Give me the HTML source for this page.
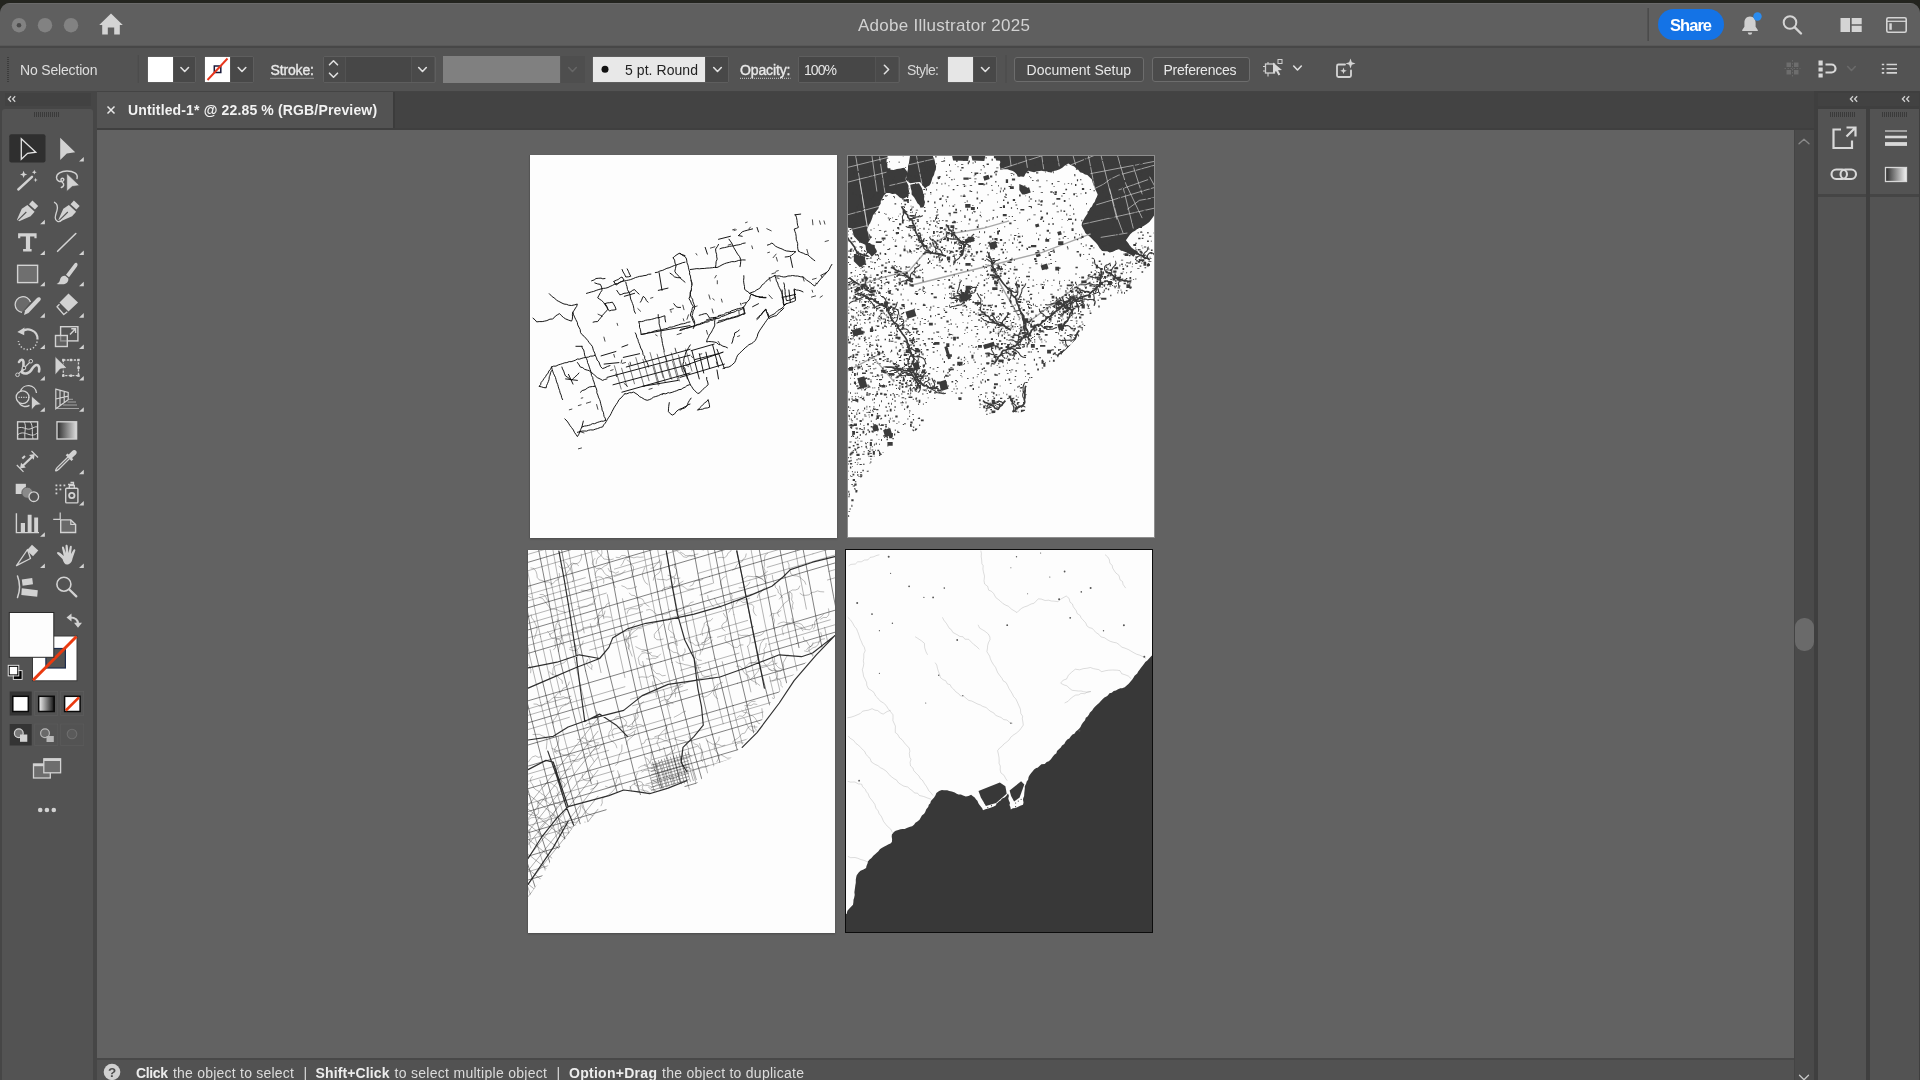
<!DOCTYPE html>
<html><head><meta charset="utf-8">
<style>
*{box-sizing:border-box;margin:0;padding:0}
html,body{width:1920px;height:1080px;overflow:hidden;background:#23241f;font-family:"Liberation Sans",sans-serif;}
.abs,.b{position:absolute}
#win{left:0;top:3px;width:1920px;height:1077px;background:#535353;border-radius:10px 10px 0 0;overflow:hidden}
#pg{left:0;top:-3px;width:1920px;height:1080px;will-change:transform}
.t{color:#dedede;font-size:13px;white-space:nowrap;position:absolute;line-height:1}
.ab{position:absolute;background:#fdfdfd;overflow:hidden}
.ab>svg{filter:blur(.35px)}
svg{overflow:visible}
</style></head><body>
<div id="win" class="abs"><div id="pg" class="abs">
<div class="b" style="left:0.0px;top:3.0px;width:1920.0px;height:41.5px;background:#5f5f5f;border-top:1px solid #6a6a6a"></div><div class="b" style="left:0.0px;top:44.5px;width:1920.0px;height:1.5px;background:#585858;"></div><div class="b" style="left:0.0px;top:46.0px;width:1920.0px;height:1.5px;background:#474747;"></div><div class="b" style="left:0.0px;top:47.5px;width:1920.0px;height:43.5px;background:#535353;"></div><div class="b" style="left:0.0px;top:91.0px;width:1920.0px;height:989.0px;background:#444444;"></div><div class="b" style="left:97.0px;top:92.0px;width:1717.0px;height:37.7px;background:#434343;"></div><div class="b" style="left:97.0px;top:92.0px;width:296.0px;height:36.0px;background:#535353;"></div><div class="b" style="left:97.0px;top:128.2px;width:1717.0px;height:1.5px;background:#3f3f3f;"></div><div class="b" style="left:393.0px;top:92.0px;width:1.5px;height:36.2px;background:#3c3c3c;"></div><div class="b" style="left:97.0px;top:130.0px;width:1696.5px;height:927.5px;background:#626262;"></div><div class="b" style="left:97.0px;top:1057.5px;width:1696.5px;height:2.5px;background:#484848;"></div><div class="b" style="left:97.0px;top:1060.0px;width:1696.5px;height:20.0px;background:#525252;"></div><div class="b" style="left:1794.5px;top:130.0px;width:19.5px;height:950.0px;background:#4a4a4a;"></div><div class="b" style="left:0.0px;top:91.0px;width:97.0px;height:989.0px;background:#464646;"></div><div class="b" style="left:5.0px;top:92.5px;width:86.0px;height:13.0px;background:#424242;"></div><div class="b" style="left:1.5px;top:108.5px;width:91.8px;height:971.5px;background:#535353;border-radius:3px 3px 0 0"></div><div class="b" style="left:1814.0px;top:91.0px;width:106.0px;height:989.0px;background:#3f3f3f;"></div><div class="b" style="left:1818.0px;top:92.5px;width:100.5px;height:13.0px;background:#424242;"></div><div class="b" style="left:1818.0px;top:108.5px;width:48.0px;height:971.5px;background:#535353;"></div><div class="b" style="left:1870.0px;top:108.5px;width:48.5px;height:971.5px;background:#535353;"></div><div class="b" style="left:1818.0px;top:194.0px;width:48.0px;height:3.0px;background:#454545;"></div><div class="b" style="left:1870.0px;top:194.0px;width:48.5px;height:3.0px;background:#454545;"></div><div class="t" style="left:858.0px;top:16.5px;font-size:17px;letter-spacing:0.27px;color:#d2d2d2;">Adobe Illustrator 2025</div><div class="b" style="left:1658.0px;top:8.5px;width:66.0px;height:31.5px;background:#1473e6;border-radius:16px"></div><div class="t" style="left:1670.0px;top:16.7px;font-size:16.5px;letter-spacing:-0.96px;color:#ffffff;font-weight:bold;">Share</div><div class="t" style="left:20.0px;top:62.5px;font-size:14px;letter-spacing:-0.17px;color:#dedede;">No Selection</div><div class="b" style="left:146.5px;top:56.0px;width:49.5px;height:26.5px;background:transparent;border:1px solid #5e5e5e;border-radius:2px"></div><div class="b" style="left:147.5px;top:57.0px;width:25.0px;height:24.5px;background:#ffffff;"></div><div class="b" style="left:173.5px;top:57.0px;width:21.5px;height:24.5px;background:#484848;"></div><div class="b" style="left:204.0px;top:56.0px;width:49.5px;height:26.5px;background:transparent;border:1px solid #5e5e5e;border-radius:2px"></div><div class="b" style="left:205.0px;top:57.0px;width:25.0px;height:24.5px;background:#ffffff;"></div><div class="b" style="left:231.0px;top:57.0px;width:21.5px;height:24.5px;background:#484848;"></div><div class="t" style="left:270.5px;top:62.7px;font-size:14px;letter-spacing:-0.14px;color:#e8e8e8;-webkit-text-stroke:.35px #e8e8e8;">Stroke:</div><div class="b" style="left:322.5px;top:56.0px;width:113.0px;height:26.5px;background:transparent;border:1px solid #5e5e5e;border-radius:2px"></div><div class="b" style="left:323.5px;top:57.0px;width:21.5px;height:24.5px;background:#4a4a4a;"></div><div class="b" style="left:346.3px;top:57.0px;width:64.7px;height:24.5px;background:#474747;"></div><div class="b" style="left:412.3px;top:57.0px;width:22.2px;height:24.5px;background:#4a4a4a;"></div><div class="b" style="left:443.0px;top:55.5px;width:117.0px;height:27.0px;background:#808080;"></div><div class="b" style="left:561.0px;top:56.0px;width:23.5px;height:26.5px;background:#4e4e4e;"></div><div class="b" style="left:592.0px;top:56.0px;width:137.0px;height:26.5px;background:transparent;border:1px solid #5e5e5e;border-radius:2px"></div><div class="b" style="left:593.0px;top:57.0px;width:112.0px;height:24.5px;background:#e8e8e8;"></div><div class="b" style="left:706.3px;top:57.0px;width:21.7px;height:24.5px;background:#484848;"></div><div class="t" style="left:625.0px;top:62.5px;font-size:14px;letter-spacing:0.06px;color:#222;">5 pt. Round</div><div class="t" style="left:740.0px;top:62.5px;font-size:14px;letter-spacing:-0.12px;color:#e8e8e8;-webkit-text-stroke:.35px #e8e8e8;">Opacity:</div><div class="b" style="left:798.0px;top:56.0px;width:101.5px;height:26.5px;background:transparent;border:1px solid #5e5e5e;border-radius:2px"></div><div class="b" style="left:799.0px;top:57.0px;width:76.0px;height:24.5px;background:#474747;"></div><div class="b" style="left:876.3px;top:57.0px;width:22.2px;height:24.5px;background:#4a4a4a;"></div><div class="t" style="left:804.0px;top:62.5px;font-size:14px;letter-spacing:-0.94px;color:#e6e6e6;">100%</div><div class="t" style="left:907.0px;top:62.7px;font-size:14px;letter-spacing:-0.60px;color:#d8d8d8;">Style:</div><div class="b" style="left:947.0px;top:56.0px;width:50.0px;height:26.5px;background:transparent;border:1px solid #5e5e5e;border-radius:2px"></div><div class="b" style="left:948.0px;top:57.0px;width:25.0px;height:24.5px;background:#e6e6e6;"></div><div class="b" style="left:974.0px;top:57.0px;width:22.0px;height:24.5px;background:#484848;"></div><div class="b" style="left:1014.0px;top:57.0px;width:129.5px;height:24.5px;background:#4b4b4b;border:1px solid #6d6d6d;border-radius:3px"></div><div class="t" style="left:1026.5px;top:62.7px;font-size:14px;letter-spacing:0.02px;color:#e8e8e8;">Document Setup</div><div class="b" style="left:1152.0px;top:57.0px;width:98.0px;height:24.5px;background:#4b4b4b;border:1px solid #6d6d6d;border-radius:3px"></div><div class="t" style="left:1163.5px;top:62.7px;font-size:14px;letter-spacing:-0.25px;color:#e8e8e8;">Preferences</div><div class="t" style="left:128.0px;top:102.6px;font-size:14px;letter-spacing:0.15px;color:#f2f2f2;font-weight:bold;">Untitled-1* @ 22.85 % (RGB/Preview)</div><div class="t" style="left:136.0px;top:1065.9px;font-size:14px;letter-spacing:-0.37px;color:#ececec;font-weight:bold;">Click</div><div class="t" style="left:173.0px;top:1065.9px;font-size:14px;letter-spacing:0.22px;color:#dcdcdc;">the object to select</div><div class="t" style="left:303.5px;top:1065.6px;font-size:14px;letter-spacing:-0.64px;color:#dcdcdc;">|</div><div class="t" style="left:315.5px;top:1065.9px;font-size:14px;letter-spacing:0.13px;color:#ececec;font-weight:bold;">Shift+Click</div><div class="t" style="left:394.5px;top:1065.9px;font-size:14px;letter-spacing:0.29px;color:#dcdcdc;">to select multiple object</div><div class="t" style="left:556.5px;top:1065.6px;font-size:14px;letter-spacing:-0.64px;color:#dcdcdc;">|</div><div class="t" style="left:569.0px;top:1065.9px;font-size:14px;letter-spacing:0.28px;color:#ececec;font-weight:bold;">Option+Drag</div><div class="t" style="left:662.0px;top:1065.9px;font-size:14px;letter-spacing:0.26px;color:#dcdcdc;">the object to duplicate</div><div class="b" style="left:1794.5px;top:618.0px;width:19.5px;height:33.0px;background:#6a6a6a;border-radius:9px"></div><svg class="b" style="left:0;top:0" width="1920" height="1080"><circle cx="19" cy="25.2" r="7.2" fill="#828282"/><circle cx="45" cy="25.2" r="7.2" fill="#828282"/><circle cx="71" cy="25.2" r="7.2" fill="#828282"/><circle cx="19" cy="25.2" r="2.3" fill="#4a4a4a"/><path d="M111 13.5 L122.8 25 L119.8 25 L119.8 34.6 L114.2 34.6 L114.2 27.500 L107.800 27.500 L107.800 34.600 L102.200 34.600 L102.200 25 L99.200 25 Z" fill="#d4d4d4"/><rect x="1647.5" y="8" width="1.3" height="33" fill="#474747"/><path d="M1750 16.5 c-3.6 0-5.6 2.8-5.6 6.2 v4 l-2.2 3.2 v1 h15.6 v-1 l-2.2-3.2 v-4 c0-3.400-2-6.200-5.600-6.200z M1747.800 32.500 a2.200 2.200 0 0 0 4.400 0z" fill="#d0d0d0"/><circle cx="1757.5" cy="16.5" r="4.2" fill="#2a8cf0"/><circle cx="1790" cy="22.5" r="6.3" fill="none" stroke="#d4d4d4" stroke-width="2"/><path d="M1794.800 27.300 L1801 33.500" stroke="#d4d4d4" stroke-width="2.4" stroke-linecap="round"/><path d="M1840.500 18h9.500v14h-9.500z M1851.700 18h10v6.200h-10z M1851.700 25.800h10v6.200h-10z" fill="#d4d4d4"/><rect x="1886.800" y="17.800" width="19.400" height="14.400" rx="1.500" fill="none" stroke="#d4d4d4" stroke-width="1.600"/><path d="M1887 21.300h19" stroke="#d4d4d4" stroke-width="1.300"/><rect x="1889.300" y="23.300" width="2.500" height="6.500" fill="#d4d4d4"/><rect x="7" y="57" width="2" height="1" fill="#3c3c3c"/><rect x="7" y="59" width="2" height="1" fill="#3c3c3c"/><rect x="7" y="61" width="2" height="1" fill="#3c3c3c"/><rect x="7" y="63" width="2" height="1" fill="#3c3c3c"/><rect x="7" y="65" width="2" height="1" fill="#3c3c3c"/><rect x="7" y="67" width="2" height="1" fill="#3c3c3c"/><rect x="7" y="69" width="2" height="1" fill="#3c3c3c"/><rect x="7" y="71" width="2" height="1" fill="#3c3c3c"/><rect x="7" y="73" width="2" height="1" fill="#3c3c3c"/><rect x="7" y="75" width="2" height="1" fill="#3c3c3c"/><rect x="7" y="77" width="2" height="1" fill="#3c3c3c"/><rect x="7" y="79" width="2" height="1" fill="#3c3c3c"/><rect x="7" y="81" width="2" height="1" fill="#3c3c3c"/><rect x="137.700" y="55" width="1" height="28" fill="#4b4b4b"/><path d="M180.9 67.5 L184.7 71.5 L188.5 67.5" fill="none" stroke="#e0e0e0" stroke-width="1.6" stroke-linecap="round" stroke-linejoin="round"/><rect x="214.300" y="66" width="6.500" height="6.500" fill="none" stroke="#1a1a3a" stroke-width="1.500"/><path d="M207.500 80 L227.500 58.500" stroke="#e8361d" stroke-width="1.900"/><path d="M238.2 67.5 L242.0 71.5 L245.8 67.5" fill="none" stroke="#e0e0e0" stroke-width="1.6" stroke-linecap="round" stroke-linejoin="round"/><path d="M270.500 78.300H314" stroke="#d0d0d0" stroke-width="1" stroke-dasharray="1 1"/><path d="M329.5 64.8 L333.5 60.8 L337.5 64.8" fill="none" stroke="#e0e0e0" stroke-width="1.6" stroke-linecap="round" stroke-linejoin="round"/><path d="M329.5 73.2 L333.5 77.2 L337.5 73.2" fill="none" stroke="#e0e0e0" stroke-width="1.6" stroke-linecap="round" stroke-linejoin="round"/><path d="M418.7 67.5 L422.5 71.5 L426.3 67.5" fill="none" stroke="#e0e0e0" stroke-width="1.6" stroke-linecap="round" stroke-linejoin="round"/><path d="M568.7 67.5 L572.5 71.5 L576.3 67.5" fill="none" stroke="#666" stroke-width="1.6" stroke-linecap="round" stroke-linejoin="round"/><circle cx="605" cy="69.300" r="3.500" fill="#111"/><path d="M713.7 67.5 L717.5 71.5 L721.3 67.5" fill="none" stroke="#e0e0e0" stroke-width="1.6" stroke-linecap="round" stroke-linejoin="round"/><path d="M740 78.300H790.500" stroke="#d0d0d0" stroke-width="1" stroke-dasharray="1 1"/><path d="M884.4 65.3 L888.6 69.5 L884.4 73.7" fill="none" stroke="#e0e0e0" stroke-width="1.6" stroke-linecap="round" stroke-linejoin="round"/><path d="M981.5 67.5 L985.3 71.5 L989.1 67.5" fill="none" stroke="#e0e0e0" stroke-width="1.6" stroke-linecap="round" stroke-linejoin="round"/><rect x="1005.500" y="55" width="1" height="28" fill="#4b4b4b"/><rect x="1265.500" y="64" width="9" height="9" fill="none" stroke="#cfcfcf" stroke-width="1.300"/><path d="M1263 66.500h2.500M1263 71h2.500M1274.500 66.500h2M1268 62v2M1268 73v3.500" stroke="#cfcfcf" stroke-width="1.100"/><path d="M1273 62.500 L1273 73.500 L1276 71 L1278.500 75.500 L1280.300 74.500 L1278 70.200 L1282 70 Z" fill="#d8d8d8"/><rect x="1278" y="59.500" width="4" height="4" fill="none" stroke="#cfcfcf" stroke-width="1"/><path d="M1293.7 66.0 L1297.5 70.0 L1301.3 66.0" fill="none" stroke="#e0e0e0" stroke-width="1.6" stroke-linecap="round" stroke-linejoin="round"/><path d="M1345 64.500h-6.500a1.500 1.500 0 0 0-1.500 1.500v9.500a1.500 1.500 0 0 0 1.500 1.500h11a1.500 1.500 0 0 0 1.500-1.500v-5" fill="none" stroke="#d4d4d4" stroke-width="1.800" stroke-linecap="round"/><path d="M1350.500 58.500l1.300 3.700 3.700 1.300-3.700 1.300-1.300 3.700-1.300-3.700-3.700-1.300 3.700-1.300z M1343.500 67.500l.9 2.400 2.400.9-2.400.9-.9 2.400-.9-2.400-2.400-.9 2.400-.9z" fill="#d4d4d4"/><path d="M1786.500 62.500h4.500v4.500h-4.500zM1794 62.500h4.500v4.500h-4.500zM1786.500 70h4.500v4.500h-4.500zM1794 70h4.500v4.500h-4.500z" fill="#6d6d6d"/><path d="M1792.500 60v17M1784.500 68.500h16" stroke="#6d6d6d" stroke-width=".8" stroke-dasharray="1.500 1.500"/><path d="M1818.500 60.500h4.200v5h-4.200zM1818.500 67.500h4.200v4h-4.200zM1818.500 73.500h4.200v4h-4.200z" fill="#d8d8d8"/><path d="M1825.500 64.500h6a4 4 0 0 1 0 8h-6" fill="none" stroke="#d8d8d8" stroke-width="2.200"/><path d="M1847.7 66.5 L1851.5 70.5 L1855.3 66.5" fill="none" stroke="#6a6a6a" stroke-width="1.6" stroke-linecap="round" stroke-linejoin="round"/><path d="M1886.500 64.500h10.500M1886.500 68.700h10.500M1886.500 72.900h10.500" stroke="#d4d4d4" stroke-width="1.600"/><path d="M1881.800 63.700h2.400v1.600h-2.400zM1881.800 67.900h2.400v1.600h-2.400zM1881.800 72.100h2.400v1.600h-2.400z" fill="#d4d4d4"/><path d="M11.0 96.3 l-2.600 2.700 2.600 2.700 M15.2 96.3 l-2.600 2.700 2.600 2.700" fill="none" stroke="#cfcfcf" stroke-width="1.300"/><path d="M1853.0 96.3 l-2.600 2.700 2.600 2.700 M1857.2 96.3 l-2.600 2.700 2.600 2.700" fill="none" stroke="#cfcfcf" stroke-width="1.300"/><path d="M1905.0 96.3 l-2.600 2.700 2.600 2.700 M1909.2 96.3 l-2.600 2.700 2.600 2.700" fill="none" stroke="#cfcfcf" stroke-width="1.300"/><rect x="34.0" y="112.0" width="1" height="5" fill="#3a3a3a"/><rect x="36.0" y="112.0" width="1" height="5" fill="#3a3a3a"/><rect x="38.0" y="112.0" width="1" height="5" fill="#3a3a3a"/><rect x="40.0" y="112.0" width="1" height="5" fill="#3a3a3a"/><rect x="42.0" y="112.0" width="1" height="5" fill="#3a3a3a"/><rect x="44.0" y="112.0" width="1" height="5" fill="#3a3a3a"/><rect x="46.0" y="112.0" width="1" height="5" fill="#3a3a3a"/><rect x="48.0" y="112.0" width="1" height="5" fill="#3a3a3a"/><rect x="50.0" y="112.0" width="1" height="5" fill="#3a3a3a"/><rect x="52.0" y="112.0" width="1" height="5" fill="#3a3a3a"/><rect x="54.0" y="112.0" width="1" height="5" fill="#3a3a3a"/><rect x="56.0" y="112.0" width="1" height="5" fill="#3a3a3a"/><rect x="58.0" y="112.0" width="1" height="5" fill="#3a3a3a"/><rect x="1830.0" y="112.0" width="1" height="5" fill="#3a3a3a"/><rect x="1832.0" y="112.0" width="1" height="5" fill="#3a3a3a"/><rect x="1834.0" y="112.0" width="1" height="5" fill="#3a3a3a"/><rect x="1836.0" y="112.0" width="1" height="5" fill="#3a3a3a"/><rect x="1838.0" y="112.0" width="1" height="5" fill="#3a3a3a"/><rect x="1840.0" y="112.0" width="1" height="5" fill="#3a3a3a"/><rect x="1842.0" y="112.0" width="1" height="5" fill="#3a3a3a"/><rect x="1844.0" y="112.0" width="1" height="5" fill="#3a3a3a"/><rect x="1846.0" y="112.0" width="1" height="5" fill="#3a3a3a"/><rect x="1848.0" y="112.0" width="1" height="5" fill="#3a3a3a"/><rect x="1850.0" y="112.0" width="1" height="5" fill="#3a3a3a"/><rect x="1852.0" y="112.0" width="1" height="5" fill="#3a3a3a"/><rect x="1854.0" y="112.0" width="1" height="5" fill="#3a3a3a"/><rect x="1882.0" y="112.0" width="1" height="5" fill="#3a3a3a"/><rect x="1884.0" y="112.0" width="1" height="5" fill="#3a3a3a"/><rect x="1886.0" y="112.0" width="1" height="5" fill="#3a3a3a"/><rect x="1888.0" y="112.0" width="1" height="5" fill="#3a3a3a"/><rect x="1890.0" y="112.0" width="1" height="5" fill="#3a3a3a"/><rect x="1892.0" y="112.0" width="1" height="5" fill="#3a3a3a"/><rect x="1894.0" y="112.0" width="1" height="5" fill="#3a3a3a"/><rect x="1896.0" y="112.0" width="1" height="5" fill="#3a3a3a"/><rect x="1898.0" y="112.0" width="1" height="5" fill="#3a3a3a"/><rect x="1900.0" y="112.0" width="1" height="5" fill="#3a3a3a"/><rect x="1902.0" y="112.0" width="1" height="5" fill="#3a3a3a"/><rect x="1904.0" y="112.0" width="1" height="5" fill="#3a3a3a"/><rect x="1906.0" y="112.0" width="1" height="5" fill="#3a3a3a"/><path d="M107.500 106.500l7 7M114.500 106.500l-7 7" stroke="#e8e8e8" stroke-width="1.500"/><circle cx="112" cy="1072" r="8.300" fill="#d0d0d0"/><text x="112" y="1076.800" font-size="13.500" font-weight="bold" fill="#4e4e4e" text-anchor="middle" font-family="Liberation Sans">?</text><path d="M1799.0 143.8 L1804.0 139.2 L1809.0 143.8" fill="none" stroke="#8a8a8a" stroke-width="1.3" stroke-linecap="round" stroke-linejoin="round"/><path d="M1799.5 1075.2 L1804.0 1079.8 L1808.5 1075.2" fill="none" stroke="#c8c8c8" stroke-width="1.3" stroke-linecap="round" stroke-linejoin="round"/><path d="M1841 129.500h-7.500v18.500h18.500v-7.500" fill="none" stroke="#d8d8d8" stroke-width="2.200"/><path d="M1846.500 127.500h9v9M1855 128l-8.500 8.500" fill="none" stroke="#d8d8d8" stroke-width="2.200"/><rect x="1831.500" y="169.500" width="15.500" height="9.500" rx="4.700" fill="none" stroke="#d8d8d8" stroke-width="2.100"/><rect x="1840.500" y="169.500" width="15.500" height="9.500" rx="4.700" fill="none" stroke="#d8d8d8" stroke-width="2.100"/><path d="M1885 131h22" stroke="#d8d8d8" stroke-width="1.200"/><path d="M1885 137h22" stroke="#d8d8d8" stroke-width="2.600"/><path d="M1885 144h22" stroke="#d8d8d8" stroke-width="3.800"/><defs><linearGradient id="gr1"><stop offset="0" stop-color="#2a2a2a"/><stop offset="1" stop-color="#f4f4f4"/></linearGradient></defs><rect x="1885.500" y="167.500" width="21" height="14" fill="url(#gr1)" stroke="#d8d8d8" stroke-width="1.300"/></svg><svg class="b" style="left:0;top:0" width="100" height="1080"><rect x="9.300" y="134.200" width="36.200" height="28.300" rx="2" fill="#2f2f2f"/><path d="M21.300 138.700 L35.800 152.200 L27.600 153.300 L21.300 159.300 Z" fill="#2f2f2f" stroke="#e4e4e4" stroke-width="1.300" stroke-linejoin="miter"/><path d="M60.200 137.700 L75.200 152.200 L66.800 153.500 L60.200 160 Z" fill="#d2d2d2"/><path d="M83.8 161.6 v-4.600 l-4.800 4.600z" fill="#d2d2d2"/><path d="M18.300 189.500 L32 176.800" stroke="#d2d2d2" stroke-width="2.400" stroke-linecap="round"/><path d="M23.6 170.8 L24.6 173.4 L27.2 174.4 L24.6 175.4 L23.6 178.0 L22.6 175.4 L20.0 174.4 L22.6 173.4 Z" fill="#d2d2d2"/><path d="M34.3 169.8 L35.0 171.5 L36.7 172.2 L35.0 172.9 L34.3 174.6 L33.6 172.9 L31.9 172.2 L33.6 171.5 Z" fill="#d2d2d2"/><path d="M35.6 177.8 L36.2 179.4 L37.8 180.0 L36.2 180.6 L35.6 182.2 L35.0 180.6 L33.4 180.0 L35.0 179.4 Z" fill="#d2d2d2"/><path d="M77 178.500 c1.500-5-4-7.500-10-7.500 c-6 0-10.500 3-10.500 6.500 c0 3 3 4.500 5.500 4 c2.500-.5 2.200-3.200 .5-3.200 c-2 0-2.200 2.500 0 4.200 c2 1.600 1.500 4-1.200 5" fill="none" stroke="#d2d2d2" stroke-width="1.400" stroke-linecap="round"/><path d="M66.700 173.300 L79.600 185.600 L72.300 186.500 L66.700 191.600 Z" fill="#d2d2d2" stroke="#535353" stroke-width=".8"/><path d="M16.9 219.800 L21.8 208.700 L27.4 204.900 L34.6 211.800 L30.6 216.300 L19.2 221.200 Z" fill="#d2d2d2"/><path d="M32.4 200.600 L38.2 206 L34.9 209.600 L29.0 204.200 Z" fill="#d2d2d2"/><path d="M17.8 220.300 L26.3 212" stroke="#535353" stroke-width="1.100"/><path d="M44.9 224.3 v-4.600 l-4.800 4.600z" fill="#d2d2d2"/><path d="M58.4 219.800 L63.3 208.700 L68.9 204.900 L76.1 211.800 L72.1 216.300 L60.7 221.200 Z" fill="#d2d2d2"/><path d="M73.9 200.600 L79.7 206 L76.4 209.600 L70.5 204.200 Z" fill="#d2d2d2"/><path d="M59.3 220.300 L67.8 212" stroke="#535353" stroke-width="1.100"/><path d="M54.500 202.300 c3 1.500 3.500 4 2.500 8 c-1.200 4.500-3.500 9 .5 11 c1.500 .7 3 0 4-1" fill="none" stroke="#d2d2d2" stroke-width="1.300" stroke-linecap="round"/><path d="M18.100 233.300 H36.600 V238.200 H34.400 V236.600 H30.100 V249.100 H31.600 V251.400 H23.100 V249.100 H25.900 V236.600 H20.300 V238.200 H18.100 Z" fill="#d2d2d2"/><path d="M44.9 255.1 v-4.600 l-4.800 4.600z" fill="#d2d2d2"/><path d="M57.600 251.300 L75.800 233.500" stroke="#d2d2d2" stroke-width="1.600" stroke-linecap="round"/><path d="M83.8 255.1 v-4.600 l-4.800 4.600z" fill="#d2d2d2"/><rect x="17.600" y="265.300" width="20" height="17.300" fill="#6f6f6f" stroke="#d2d2d2" stroke-width="1.400"/><path d="M44.9 286.3 v-4.600 l-4.800 4.600z" fill="#d2d2d2"/><path d="M76.800 263 c1.200 .8 .9 2.300 0 3.800 L69 277.200 L66 274.800 L74 264.200 c.9-1.200 2-1.700 2.800-1.200z" fill="#d2d2d2"/><path d="M65.200 275.800 L68.200 278.200 c.8 3-1.500 5.600-4.500 6 c-2.500 .3-5.300 .2-7.200-.2 c2.300-.8 3-2.300 3.500-4.300 c.6-2.600 2.700-4.200 5.200-3.900z" fill="#d2d2d2"/><path d="M83.8 286.3 v-4.600 l-4.800 4.600z" fill="#d2d2d2"/><path d="M30.500 302 a7.900 7.900 0 1 0 -8.500 10.400" fill="#6a6a6a" stroke="#d2d2d2" stroke-width="1.300"/><path d="M40 297.600 c1.100 .9 1 2 .2 3 L28.500 313 L24 315 L25.200 310.200 L37 298 c.9-.9 2-1.100 3-.4z" fill="#d2d2d2"/><path d="M44.9 317.7 v-4.600 l-4.800 4.600z" fill="#d2d2d2"/><path d="M68.500 293.600 L78 302.600 L68.500 311.500 L59.500 302.600 Z" fill="#d2d2d2"/><path d="M59.500 304.200 L57 306.800 L63.800 314.500 L67.300 311.700" fill="none" stroke="#d2d2d2" stroke-width="1.300" stroke-linejoin="round"/><path d="M83.8 317.7 v-4.600 l-4.800 4.600z" fill="#d2d2d2"/><path d="M21 333 a9.300 9.300 0 0 1 16.500 6.500" fill="none" stroke="#d2d2d2" stroke-width="2.200"/><path d="M17.300 332 L24.500 327.500 L24.200 335.200 Z" fill="#d2d2d2"/><path d="M37 341.500 a9.300 9.300 0 0 1 -18.500 -.5" fill="none" stroke="#d2d2d2" stroke-width="1.500" stroke-dasharray="1.300 2"/><path d="M44.9 349.0 v-4.600 l-4.800 4.600z" fill="#d2d2d2"/><rect x="60.600" y="326.700" width="17.300" height="14.200" fill="none" stroke="#d2d2d2" stroke-width="1.400"/><rect x="55.500" y="335.500" width="11.800" height="11" fill="#6a6a6a" fill-opacity=".6" stroke="#d2d2d2" stroke-width="1.400"/><path d="M70 334.600 L75.300 328.900 M71.300 328.700 H75.600 V333" fill="none" stroke="#d2d2d2" stroke-width="1.400"/><path d="M83.8 349.0 v-4.600 l-4.800 4.600z" fill="#d2d2d2"/><path d="M19 362 c1.500-3 4-3 4.500 0 c.5 4-1 8-1.500 10.500 c3 2 7 1 9-2 c2-3 3.500-6 6-5.500 c2.500 .5 2.500 3.500 2 6.500" fill="none" stroke="#d2d2d2" stroke-width="2.600" stroke-linecap="round" stroke-linejoin="round"/><path d="M18 374.300 L30.500 361.500" stroke="#d2d2d2" stroke-width="1.100"/><circle cx="17.500" cy="374.800" r="1.800" fill="#535353" stroke="#d2d2d2" stroke-width="1"/><circle cx="30.800" cy="361.200" r="1.800" fill="#535353" stroke="#d2d2d2" stroke-width="1"/><circle cx="24" cy="368" r="1.800" fill="#535353" stroke="#d2d2d2" stroke-width="1"/><path d="M44.9 380.5 v-4.600 l-4.800 4.600z" fill="#d2d2d2"/><rect x="63.300" y="360" width="15.200" height="15.700" fill="#5e5e5e" stroke="#d2d2d2" stroke-width="1.300" stroke-dasharray="2.200 1.300"/><rect x="62.1" y="358.8" width="2.400" height="2.400" fill="#d2d2d2"/><rect x="69.7" y="358.8" width="2.400" height="2.400" fill="#d2d2d2"/><rect x="77.3" y="358.8" width="2.400" height="2.400" fill="#d2d2d2"/><rect x="77.3" y="366.6" width="2.400" height="2.400" fill="#d2d2d2"/><rect x="62.1" y="374.5" width="2.400" height="2.400" fill="#d2d2d2"/><rect x="69.7" y="374.5" width="2.400" height="2.400" fill="#d2d2d2"/><rect x="77.3" y="374.5" width="2.400" height="2.400" fill="#d2d2d2"/><path d="M55.100 356.500 L67 368 L60.300 369 L55.100 375 Z" fill="#d2d2d2" stroke="#535353" stroke-width=".7"/><path d="M83.8 380.5 v-4.600 l-4.800 4.600z" fill="#d2d2d2"/><circle cx="22.600" cy="397.300" r="6.400" fill="none" stroke="#d2d2d2" stroke-width="1.300"/><path d="M20.500 391.500 a8.200 8.200 0 0 1 16 1.500 M19 403.200 a8 8 0 0 0 10.500 2.200" fill="none" stroke="#d2d2d2" stroke-width="1.300"/><path d="M18.500 397.300 H30" stroke="#d2d2d2" stroke-width="1.200" stroke-dasharray="1.200 1.200"/><path d="M31.500 396 L41.200 404.500 L35.800 405.300 L31.500 410 Z" fill="#d2d2d2" stroke="#535353" stroke-width=".7"/><path d="M44.9 411.8 v-4.600 l-4.800 4.600z" fill="#d2d2d2"/><path d="M55.800 389.200 L68.200 392.400 V399.800 L55.800 408.800 Z M55.800 399 L68.200 396.200 M60 390.300 V405.800 M64.200 391.400 V402.800" fill="none" stroke="#d2d2d2" stroke-width="1.200"/><path d="M68.500 399.300 H73 M67.500 402 H76 M63 405 H77 M57 408.500 H79" stroke="#d2d2d2" stroke-width=".9" stroke-opacity=".7"/><path d="M83.8 411.8 v-4.600 l-4.800 4.600z" fill="#d2d2d2"/><rect x="17.600" y="421.800" width="20" height="17.200" fill="#444" stroke="#d2d2d2" stroke-width="1.400"/><path d="M18 428 c5-2 8 2 12 1 s5-3 7.500-2 M18 434.500 c4-3 8-1 11 0 s6 1 8.500-2 M24 422 c3 4 0 9 1 17 M30.500 422 c3 5 1 10 2.500 17" fill="none" stroke="#d2d2d2" stroke-width="1"/><defs><linearGradient id="gr2"><stop offset="0" stop-color="#2e2e2e"/><stop offset="1" stop-color="#dcdcdc"/></linearGradient><linearGradient id="gr3"><stop offset="0" stop-color="#f4f4f4"/><stop offset="1" stop-color="#111"/></linearGradient></defs><rect x="57" y="421.800" width="19.600" height="17.200" fill="url(#gr2)" stroke="#d2d2d2" stroke-width="1.400"/><path d="M22.500 466 L32.500 456.500" stroke="#d2d2d2" stroke-width="2.200"/><path d="M20 468.500 L21 462.800 L25.800 467.600 Z M34.800 454 L33.800 459.800 L29 455 Z" fill="#d2d2d2"/><path d="M16.800 465 L23.500 471.800 M31.500 451 L38 457.500" stroke="#d2d2d2" stroke-width="1.200"/><path d="M22.300 458.500 L25 456" stroke="#d2d2d2" stroke-width="2"/><path d="M69.500 458.500 L59 469 c-1.300 1.300-3 2-3.300 1.700 c-.3-.3 .4-2 1.700-3.300 L68 457" fill="none" stroke="#d2d2d2" stroke-width="1.300" stroke-linejoin="round"/><path d="M66.500 456 L71.500 461 L73.300 459.300 L72 458 L75.800 454.500 c1.200-1.200 1.200-2.800 .2-3.800 c-1-1-2.600-1-3.800 .2 L68.700 454.600 L67.500 453.400 L65.700 455.200 Z" fill="#d2d2d2"/><path d="M83.8 474.3 v-4.600 l-4.800 4.600z" fill="#d2d2d2"/><rect x="15.700" y="483.800" width="10.200" height="10.200" fill="#d2d2d2"/><circle cx="27.300" cy="492.700" r="5.500" fill="#8a8a8a" stroke="#535353" stroke-width=".8"/><circle cx="33.800" cy="496.700" r="4.800" fill="#535353" stroke="#d2d2d2" stroke-width="1.300"/><rect x="65.700" y="488.300" width="12.200" height="14.600" rx="1" fill="none" stroke="#d2d2d2" stroke-width="1.400"/><path d="M69.300 488 V485.500 H74.300 V488 M68 484.300 h5.500 v-1.800 h-3" fill="none" stroke="#d2d2d2" stroke-width="1.300"/><circle cx="71.800" cy="495.500" r="2.700" fill="none" stroke="#d2d2d2" stroke-width="1.800"/><rect x="55.5" y="484.5" width="1.800" height="1.800" fill="#d2d2d2"/><rect x="59.5" y="484.5" width="1.800" height="1.800" fill="#d2d2d2"/><rect x="63.5" y="484.5" width="1.800" height="1.800" fill="#d2d2d2"/><rect x="55.5" y="488.5" width="1.800" height="1.800" fill="#d2d2d2"/><rect x="59.5" y="488.5" width="1.800" height="1.800" fill="#d2d2d2"/><rect x="55.5" y="492.5" width="1.800" height="1.800" fill="#d2d2d2"/><path d="M83.8 505.6 v-4.600 l-4.800 4.600z" fill="#d2d2d2"/><path d="M16.400 513.300 V532.600 H39" fill="none" stroke="#d2d2d2" stroke-width="1.400"/><path d="M20.800 523 h4.200 v9 h-4.200z M27.700 514.700 h3.900 v17.300 h-3.900z M34.200 517.500 h3.900 v14.500 h-3.900z" fill="#d2d2d2"/><path d="M44.9 536.8 v-4.600 l-4.800 4.600z" fill="#d2d2d2"/><path d="M60.700 519.900 H70.800 L75.600 524.500 V532.500 H60.700 Z" fill="#6a6a6a" stroke="#d2d2d2" stroke-width="1.400" stroke-linejoin="miter"/><path d="M70.800 519.900 V524.500 H75.600" fill="none" stroke="#d2d2d2" stroke-width="1.200"/><path d="M53.200 519.400 H60.200 M60.200 512.400 V519.400" stroke="#d2d2d2" stroke-width="1.200"/><path d="M16.500 565.600 L27.500 549.500 L30.500 558.500 Z" fill="none" stroke="#d2d2d2" stroke-width="1.300" stroke-linejoin="round"/><path d="M32 544.800 L38.300 550.500 L33 556.300 L26.800 550.500 Z" fill="#d2d2d2"/><path d="M44.9 568.0 v-4.600 l-4.800 4.600z" fill="#d2d2d2"/><path d="M62.500 559 L57.500 554 c-1-1-.5-2 .5-2 c1 0 2 .5 3 1.500 L63.800 556 L62 548 c-.3-1.500 1.500-2 2-.5 L65.800 553 L65.500 545.800 c0-1.500 2-1.500 2.200 0 L68.500 553 L69.800 546.800 c.3-1.500 2.200-1.200 2 .3 L71 554 L73.500 549.800 c.8-1.300 2.300-.5 1.800 .8 L72.500 558.500 c-.5 3.500-2.500 6-5.500 6 c-2.200 0-3.500-2-4.500-5.500z" fill="#d2d2d2"/><path d="M83.8 568.0 v-4.600 l-4.800 4.600z" fill="#d2d2d2"/><path d="M17.500 576 c2.500 6.500 2.500 15 0 21.500" fill="none" stroke="#d2d2d2" stroke-width="1.500" stroke-linecap="round"/><path d="M21.800 579.600 L32.200 578 L33 584.300 L22.600 585.800 Z M21.800 588.300 L37.800 590.300 L37.200 596.800 L21.300 595 Z" fill="#d2d2d2"/><circle cx="63.900" cy="584.200" r="7" fill="none" stroke="#d2d2d2" stroke-width="1.600"/><path d="M69.300 589.500 L76.300 596.400" stroke="#d2d2d2" stroke-width="2.300" stroke-linecap="round"/><rect x="32.500" y="636" width="44.500" height="44.800" fill="#ffffff" stroke="#3a3a3a" stroke-width="1"/><rect x="45.900" y="648.500" width="19.500" height="19.500" fill="#535353" stroke="#1c2c4c" stroke-width="1.200"/><path d="M33 680.300 L76.500 636.500" stroke="#ea3a10" stroke-width="3"/><rect x="9.300" y="612.500" width="44.500" height="44.800" fill="#fdfdfd" stroke="#2a2a2a" stroke-width="1"/><path d="M70 617.500 c5 0 8 2.500 8 6.500" fill="none" stroke="#d2d2d2" stroke-width="2.200"/><path d="M66.500 617.500 L71.500 613.500 V621.500 Z M78 627.800 L74 622.800 H82 Z" fill="#d2d2d2"/><rect x="13.300" y="670.600" width="8.800" height="8.800" fill="#000" stroke="#e8e8e8" stroke-width=".9"/><rect x="9.200" y="666.300" width="8.600" height="8.600" fill="#ffffff" stroke="#000" stroke-width="1"/><rect x="8.200" y="665.300" width="10.600" height="10.600" fill="none" stroke="#e8e8e8" stroke-width=".9"/><rect x="9.700" y="691.500" width="22" height="24" fill="#343434"/><rect x="34.700" y="691.500" width="23" height="24" fill="none" stroke="#5d5d5d" stroke-width=".8"/><rect x="60.700" y="691.500" width="23" height="24" fill="none" stroke="#5d5d5d" stroke-width=".8"/><rect x="12.800" y="696.300" width="15.500" height="15.200" fill="#fff" stroke="#0a0a0a" stroke-width="1.500"/><rect x="38.700" y="696.300" width="15.500" height="15.200" fill="url(#gr3)" stroke="#0a0a0a" stroke-width="1.500"/><rect x="64.600" y="696.300" width="15.500" height="15.200" fill="#fff" stroke="#0a0a0a" stroke-width="1.500"/><path d="M65.800 710.500 L79 697.300" stroke="#ea3a10" stroke-width="2.600"/><rect x="9.700" y="724" width="22" height="21.500" fill="#343434"/><rect x="34.700" y="724" width="23" height="21.500" fill="none" stroke="#5b5b5b" stroke-width=".8"/><rect x="60.700" y="724" width="23" height="21.500" fill="none" stroke="#5b5b5b" stroke-width=".8"/><circle cx="18.800" cy="733.300" r="4.400" fill="#777" stroke="#d2d2d2" stroke-width="1.200"/><rect x="20" y="734.500" width="7.300" height="7.300" fill="#d2d2d2"/><circle cx="45" cy="733.300" r="4.400" fill="#6a6a6a" stroke="#b8b8b8" stroke-width="1.200"/><rect x="46.500" y="736" width="7.300" height="6" fill="#b8b8b8"/><circle cx="72" cy="734" r="4.800" fill="#5a5a5a" stroke="#6e6e6e" stroke-width="1.100"/><rect x="33.500" y="764" width="16.800" height="14" fill="#6e6e6e" stroke="#d2d2d2" stroke-width="1.300"/><path d="M33.500 765 h16.800" stroke="#d2d2d2" stroke-width="2.400"/><rect x="43.800" y="758.800" width="16.800" height="14" fill="#6e6e6e" stroke="#d2d2d2" stroke-width="1.300"/><path d="M43.800 759.800 h16.800" stroke="#d2d2d2" stroke-width="2.400"/><circle cx="40.2" cy="810" r="2.300" fill="#d2d2d2"/><circle cx="46.9" cy="810" r="2.300" fill="#d2d2d2"/><circle cx="53.8" cy="810" r="2.300" fill="#d2d2d2"/></svg>
<div class="abs" id="arts" style="left:0;top:0;width:1920px;height:1077px"><div class="ab" style="left:530px;top:155px;width:307px;height:383px;box-shadow:-1px 0 0 #555,0 1px 2px rgba(0,0,0,.25)"><svg width="307" height="383" style="position:absolute;left:0;top:0" fill="none" stroke-linecap="round" stroke-linejoin="round"><path d="M3.0 163.2 L5.2 165.0 L6.7 166.9 L9.1 166.6 L12.2 166.6 L14.7 166.1 L16.9 165.6 L19.9 164.2 L22.4 164.0 L24.2 162.7 L25.6 160.9 L27.8 159.6 L29.5 158.6 L31.2 160.4 L33.5 162.5 L35.6 163.9 L38.5 165.1 L41.5 166.1 L42.3 164.3 L42.5 161.9 L42.4 159.2 L42.9 157.1 L44.3 155.1 L45.5 153.0 L46.7 151.4 L47.3 149.0 L44.8 149.8 L41.6 150.5 L38.6 150.2 L36.8 149.4 L34.0 149.0 L32.0 148.1 L28.8 146.4 L26.6 145.3 L24.7 143.2 L22.2 141.7 L19.3 138.7 M42.9 157.3 L43.6 159.8 L44.6 162.1 L45.8 164.6 L47.3 167.4 L47.7 169.9 L48.8 172.0 L50.2 174.6 L50.5 177.4 L51.8 179.4 L54.1 181.3 L55.6 183.0 L57.7 185.4 L59.0 187.4 L60.6 189.3 L62.3 191.3 L63.0 193.8 L63.4 195.4 L64.8 198.2 L65.1 200.1 L66.5 202.8 L67.1 205.0 L68.9 206.9 L69.6 209.0 L70.7 211.7 L72.5 213.6 L74.8 212.8 L77.6 211.4 L80.0 210.6 M21.4 212.1 L23.3 211.2 L26.0 211.1 L28.3 209.9 L30.7 209.2 L32.2 208.7 L34.8 207.8 L36.9 207.6 L39.2 206.6 L41.1 206.7 L43.8 205.8 L45.7 205.1 L47.3 204.0 L49.3 204.2 L51.9 203.3 L53.6 202.8 L56.3 202.4 L58.4 202.1 L60.4 201.2 L63.2 201.0 L65.2 200.2 M21.5 212.1 L20.5 214.3 L18.8 216.1 L18.1 218.1 L16.4 220.0 L15.5 221.7 L14.0 223.5 L12.7 225.6 L11.0 227.6 L10.6 229.7 L9.0 231.3 L11.6 231.9 L13.8 232.6 L16.2 232.8 L16.5 230.7 L17.6 228.3 L18.4 226.4 L19.0 224.6 L19.3 221.7 L20.0 220.2 L20.6 217.6 L21.5 215.7 M21.6 212.1 L22.2 214.5 L22.8 216.4 L23.4 218.3 L24.7 220.9 L25.5 222.5 L26.0 224.6 L26.6 226.9 L27.7 229.4 L28.3 231.7 L28.7 233.2 L29.6 235.5 L30.1 237.9 L31.2 240.2 L31.7 242.7 L32.6 244.6 M52.0 191.3 L52.2 192.9 L53.7 195.0 L54.3 197.6 L54.6 199.9 L55.1 201.3 L56.3 203.3 L57.3 205.6 L57.5 207.5 L58.6 209.9 L59.3 212.1 L60.2 214.6 L60.7 216.0 L61.2 218.2 L61.5 220.6 L62.7 222.4 L63.0 224.7 L64.0 227.0 L64.6 229.4 L65.2 231.4 L66.2 233.1 L66.9 235.8 L66.8 237.7 L67.9 240.2 L68.4 242.1 L69.5 244.4 L70.2 246.2 L70.6 248.2 L71.2 250.6 L71.9 252.9 L72.1 255.1 L73.4 257.3 L73.7 259.3 L74.1 261.5 L75.2 263.1 L75.6 265.4 M45.9 191.3 L51.9 191.3 M75.4 265.4 L73.4 266.2 L71.2 266.2 L69.4 266.8 L67.2 267.5 L64.6 268.7 L62.3 268.7 L60.5 269.8 L58.6 270.4 L56.6 270.8 L54.4 271.1 L51.8 272.0 L50.6 274.7 L49.8 276.9 L48.8 279.3 L47.4 281.6 L46.2 279.8 L44.4 277.3 L43.4 275.0 L41.5 272.5 L40.0 270.6 L38.5 268.2 L37.1 266.1 L34.8 263.9 M51.9 272.0 L53.3 266.1 M47.4 277.3 L49.7 276.8 L52.0 276.1 L54.1 276.0 L56.7 276.1 L58.3 275.3 L60.4 274.9 L63.2 275.0 L65.2 274.2 L67.4 273.6 L70.5 272.4 L72.7 271.9 L73.6 269.9 L75.2 268.2 L76.2 266.6 L77.2 264.8 L78.4 262.8 L79.9 260.8 L81.1 258.6 L82.1 256.4 L83.4 254.0 L84.4 252.1 L86.1 249.6 L87.7 247.2 L89.0 244.6 L91.1 242.9 L93.2 240.5 L94.8 238.7 M94.8 238.8 L96.8 238.8 L99.6 237.6 L101.2 237.8 L103.6 237.1 L106.0 238.6 L107.9 239.8 L109.6 241.7 L111.7 242.6 L114.7 244.5 L117.2 245.3 L119.3 244.7 L121.5 243.7 L123.4 242.2 L125.8 241.5 L128.4 240.7 L130.9 239.4 L133.2 238.6 L135.9 238.8 L138.2 237.6 L139.6 238.0 L142.2 237.3 L144.3 236.5 L146.7 235.7 L149.0 234.6 L151.2 234.4 L152.9 233.1 L155.4 232.0 L156.9 230.6 L159.3 229.8 M77.0 222.4 L160.0 200.2 M83.0 229.8 L160.0 209.1 M91.9 237.2 L160.0 218.0 M96.3 212.0 L160.0 194.3 M112.6 231.3 L148.1 225.4 M108.9 166.7 L111.4 166.6 L113.4 166.2 L115.5 165.3 L117.6 164.9 L120.1 164.7 L121.6 164.3 L124.2 163.6 L126.5 162.8 L128.7 162.7 L130.7 162.2 L132.9 161.3 L134.9 160.8 L135.0 163.9 L135.6 166.9 M108.8 166.8 L109.5 169.5 L109.5 172.3 L110.4 174.3 L110.8 177.0 L111.1 179.4 L114.0 179.0 L116.1 178.6 L118.8 177.3 L120.8 177.4 L122.9 176.6 L125.2 175.8 L127.9 175.2 L130.3 175.1 L132.7 174.4 L135.3 173.8 L137.7 173.2 L139.8 172.1 L141.9 172.1 L143.6 171.6 L146.0 170.6 L148.3 170.0 L151.0 169.0 L153.6 168.7 L155.5 168.2 L157.6 167.3 L160.0 166.9 M111.1 179.4 L160.0 170.6 M139.3 247.6 L138.9 250.0 L138.7 251.6 L138.5 253.8 L138.4 256.6 L140.3 258.7 L142.3 260.1 L144.6 258.9 L145.8 257.1 L148.1 255.0 L150.5 253.8 L152.1 253.4 L154.3 252.0 L156.5 251.3 L158.1 249.7 L160.0 249.1 M31.9 212.0 L32.5 213.9 L33.7 216.1 L34.6 218.9 L35.5 220.9 L37.6 222.3 L39.8 223.9 L41.6 225.5 L43.5 223.3 L44.8 222.0 L47.3 219.9 L48.9 218.0 M35.6 223.9 L47.4 225.4 M38.5 219.4 L43.0 229.1 M47.4 207.5 L49.1 209.9 L50.4 212.1 L52.8 212.7 L54.6 214.3 L57.4 215.2 L59.1 215.6 L61.0 217.4 L63.3 218.8 L65.2 220.8 L67.3 222.6 L70.2 224.0 L72.6 225.4 L74.6 224.5 L77.0 223.9 M50.4 237.3 L52.2 235.6 L55.1 234.7 L57.3 233.1 L59.2 232.0 L62.5 231.5 L65.2 231.3 M91.9 192.0 L97.8 189.8 M93.3 202.4 L109.6 198.7 M71.1 200.9 L85.9 196.5 M74.1 209.1 L88.9 207.6 M128.2 159.6 L128.3 161.7 L129.0 164.3 L129.1 166.0 L129.1 168.7 L129.5 170.2 L130.2 172.8 L130.7 174.8 L131.1 176.8 L130.9 179.6 L131.1 181.5 L131.9 183.9 L132.0 185.8 L132.5 188.5 L132.8 190.2 L133.5 192.8 L134.1 195.4 L134.1 197.2 M105.3 177.9 L106.3 179.9 L106.7 182.2 L108.0 184.7 L108.3 186.4 L109.2 188.5 L110.0 190.7 L110.7 193.0 L112.0 195.1 L112.7 197.2 L113.1 199.6 L114.6 201.3 L114.7 203.6 L116.0 205.7 L117.2 207.9 L117.9 209.5 L118.5 212.0 M150.0 175.1 L151.7 174.0 L154.4 174.1 L156.0 173.2 L158.1 172.7 L160.7 171.6 L162.4 171.4 L164.8 170.6 L166.8 169.6 L169.5 169.0 L171.2 168.0 L173.5 167.4 L175.8 166.2 L177.8 165.6 L179.7 164.7 L182.3 164.1 L184.8 163.0 L186.8 162.2 L189.4 161.0 L191.5 160.1 L193.8 159.7 L195.5 158.1 L197.4 157.5 L199.6 157.1 L201.7 155.7 L203.9 155.1 L206.8 154.0 L208.6 153.5 L211.4 153.1 L213.6 151.9 L213.9 154.0 L214.5 156.7 L215.2 158.6 L212.7 159.1 L210.4 160.2 L208.3 160.6 L206.6 161.2 L203.9 162.1 L202.2 162.3 L199.7 163.4 L197.4 163.4 L194.8 164.7 L193.2 164.8 L190.8 165.5 L188.5 166.1 M213.6 152.2 L215.3 149.8 L216.2 147.9 L218.0 146.2 L219.7 143.9 L220.1 141.4 L221.1 139.4 L223.9 140.2 L226.2 141.4 L228.5 141.7 L230.7 142.2 L233.0 142.4 L235.9 142.4 M236.0 154.3 L236.5 156.5 L238.1 158.8 L238.9 161.7 L238.0 163.6 L236.7 165.3 L235.3 167.3 L234.2 168.9 L232.8 170.9 L231.3 173.1 L229.9 175.1 L228.9 176.9 L227.8 179.0 L227.3 181.4 L226.3 183.5 L225.4 185.3 L223.4 187.3 L221.7 188.5 L218.9 189.7 L217.4 191.1 L215.2 192.8 L212.9 195.1 L211.8 196.2 L209.7 198.1 L207.7 200.2 L206.6 202.5 L205.7 205.3 L204.7 207.5 L203.0 208.9 L201.3 210.6 L198.9 212.0 L196.2 212.4 L193.0 213.5 M226.9 164.5 L228.7 163.1 L229.7 161.1 L231.8 159.5 L232.6 157.5 L234.1 155.6 L235.9 154.1 L233.0 157.2 M239.0 161.6 L241.4 160.3 L244.1 159.0 L246.3 157.2 L248.1 155.3 L249.9 154.4 L252.3 153.0 L253.7 151.3 L256.7 148.3 M252.1 135.0 L252.3 137.6 L252.4 139.8 L253.0 142.7 L253.5 145.0 L253.1 147.6 L253.8 149.8 L255.9 148.9 L258.1 148.2 L261.3 147.2 L263.4 146.6 L265.5 145.5 L265.3 142.5 L264.4 140.0 L264.5 137.8 L264.1 135.0 M252.2 142.4 L265.6 139.4 M258.9 135.0 L260.4 147.6 M161.1 195.7 L184.1 189.1 M158.9 209.1 L193.0 197.2 M150.0 222.4 L194.4 209.1 M164.8 204.6 L188.5 198.7 M161.9 195.7 L169.3 223.9 M169.3 198.7 L173.7 218.0 M175.9 197.2 L179.6 213.5 M182.6 189.8 L188.5 212.0 M187.0 194.3 L194.4 213.5 M153.0 212.0 L160.4 229.8 M160.3 229.9 L161.7 231.6 L163.0 233.8 L164.5 235.5 L166.3 237.0 L167.8 238.6 L169.9 237.7 L171.5 235.8 L172.6 234.6 L174.5 233.1 L176.2 231.4 L178.2 229.7 L177.7 227.0 L176.7 224.6 L176.7 222.4 M150.1 255.1 L152.1 253.8 L154.1 253.2 L155.9 252.1 L157.5 249.4 L158.2 247.6 L159.5 245.3 L161.1 243.1 M167.8 254.9 L169.5 253.1 L171.3 251.4 L173.1 249.4 L174.8 247.8 L176.8 246.4 L178.1 244.6 L178.8 247.3 L179.4 249.8 L179.6 252.2 L177.6 252.9 L174.8 253.2 L172.6 254.2 L170.2 254.4 L167.8 255.0 M161.1 135.1 L160.4 136.8 L160.2 139.8 L159.7 141.8 L159.0 143.8 L160.5 146.0 L161.5 148.8 L163.3 151.3 L162.2 153.7 L161.9 155.5 L160.9 157.9 L160.3 160.1 L161.9 162.8 L162.7 165.0 L163.6 167.1 L164.7 169.1 L164.1 171.7 L163.3 173.5 M169.2 160.3 L171.4 159.7 L174.6 158.7 L176.6 158.6 L178.0 160.5 L179.7 163.2 L182.5 162.6 L185.6 162.4 M185.6 162.3 L184.8 165.2 L184.6 167.2 L184.8 170.1 L184.1 172.0 L182.7 174.5 L182.1 175.9 L180.8 178.1 L179.3 180.0 L178.3 182.5 L177.1 184.7 L176.6 187.0 L178.7 186.5 L181.8 186.7 L184.2 187.0 L186.5 187.6 L188.7 189.5 L190.7 189.8 L192.9 191.2 L195.4 191.8 L197.4 192.8 M201.8 188.3 L202.7 186.0 L203.2 183.3 L204.4 180.6 L204.7 177.9 L207.4 176.6 L209.3 175.0 M160.3 189.9 L158.5 192.7 L157.4 194.8 L155.9 197.1 L155.4 199.4 L154.5 202.2 L153.8 204.1 L153.8 206.5 L152.9 209.1 L153.4 211.7 L154.9 213.1 L155.2 216.0 L155.9 218.1 L156.7 220.6 L157.4 223.9 M187.0 215.0 L188.5 223.9 M56.5 138.4 L58.8 137.7 L61.6 136.9 L63.7 136.4 L66.2 135.4 L68.9 134.5 L71.1 133.9 L73.3 133.4 L75.5 133.2 L78.0 132.5 L80.1 131.4 L82.5 130.4 L85.1 128.9 L87.5 128.5 L89.8 127.3 L91.7 126.4 L93.8 126.1 L96.4 125.5 L98.6 125.1 L100.5 124.6 L103.2 123.6 L105.6 122.5 L107.5 122.0 L109.4 121.4 L112.1 121.1 L114.0 120.6 L116.1 120.4 L118.4 119.3 L120.9 119.1 M61.6 125.8 L64.2 124.9 L66.0 123.5 L68.2 123.3 L71.0 123.1 L72.8 123.8 L75.0 123.5 M64.8 127.9 L67.6 128.9 L70.4 129.4 L71.6 132.1 L72.0 135.3 L70.5 137.5 L68.7 140.8 L67.7 142.8 L69.3 144.0 L71.6 145.5 L73.5 147.3 L74.9 149.5 L76.9 152.3 L77.8 154.6 L76.1 156.2 L73.9 158.8 L72.1 160.6 L70.9 162.5 L69.0 164.8 L67.6 166.6 L65.1 166.7 L63.1 167.2 M74.9 148.7 L77.2 147.9 L79.7 147.7 L82.4 147.2 L84.1 149.9 L85.2 151.9 L86.1 154.5 L84.1 155.0 L81.5 155.2 L79.4 156.0 L77.9 154.0 L76.7 151.0 L75.0 148.7 M83.9 126.4 L86.3 125.2 L88.2 124.5 L90.4 122.7 L92.0 122.0 L94.1 125.1 L92.1 126.5 L90.2 127.2 L88.1 128.7 L86.0 130.1 L83.9 126.5 M92.1 114.5 L93.1 117.0 L94.5 119.2 L95.8 122.0 L98.5 121.8 L100.8 121.2 L99.5 119.0 L98.4 116.3 L97.2 113.9 M95.8 127.1 L96.3 129.5 L97.0 131.6 L97.5 134.6 L98.7 136.9 L99.9 139.0 L100.3 142.0 L100.7 144.1 L101.8 146.7 L102.5 148.6 L103.3 150.7 L103.8 153.4 L104.2 155.8 L105.4 158.3 M86.8 135.4 L88.1 137.3 L89.8 139.8 L91.7 139.4 L94.0 138.3 L96.3 138.1 L98.6 137.6 L100.9 136.7 L102.8 135.2 L104.6 134.6 L106.5 136.8 L109.1 139.1 M94.3 141.3 L104.6 138.3 M110.4 147.2 L111.6 145.2 L112.4 143.0 L113.4 141.3 L115.4 143.3 L116.3 145.4 L118.0 147.2 M125.3 117.6 L127.8 117.2 L129.9 116.0 L132.8 115.3 L134.8 114.3 L136.9 113.3 L139.1 112.8 L141.8 111.6 L144.3 110.5 L145.8 110.2 L148.2 109.3 L151.0 108.4 L152.5 107.7 L155.0 107.2 M129.1 117.6 L132.0 135.4 M128.3 135.4 L138.0 133.1 M143.2 102.7 L144.7 101.3 L147.0 99.6 L149.1 98.4 L152.1 99.6 L155.0 100.6 M143.2 102.9 L144.6 105.1 L145.0 108.1 L146.1 110.2 L145.5 113.3 L144.8 116.2 L145.8 118.1 L147.6 119.9 L149.0 121.5 L150.6 123.5 L152.5 125.1 L155.0 127.2 M140.1 118.2 L142.4 119.8 L144.5 121.9 L147.2 122.6 L150.6 122.8 M143.8 148.7 L146.2 151.7 L148.0 152.4 L150.6 152.4 M150.1 98.2 L151.8 99.8 L154.2 101.2 L156.0 102.7 L156.7 105.0 L157.0 107.8 L158.0 110.2 L158.4 112.2 L158.9 114.7 L159.7 117.1 L159.5 119.0 L160.5 121.1 L160.6 123.1 L161.4 126.1 L162.0 127.9 L161.7 130.3 L161.4 132.6 L161.4 135.5 L160.3 137.6 L160.3 139.7 L161.1 142.4 L162.6 144.2 L162.9 146.5 L164.0 149.3 L164.8 151.6 L164.3 154.2 L163.1 156.0 L162.7 158.6 L162.0 160.5 L163.0 163.1 L164.1 165.2 L164.8 168.0 M160.3 114.5 L163.0 114.2 L164.8 113.9 L166.9 113.6 L169.3 113.8 L172.0 113.5 L174.2 113.5 L176.9 113.1 L179.5 113.0 L182.5 112.7 L184.2 112.4 L187.0 112.5 L189.2 111.5 L192.0 109.9 L194.5 108.7 L196.5 108.0 L199.5 107.3 L201.8 106.6 L204.4 106.7 L206.2 106.3 L208.7 105.4 L210.3 105.2 L212.6 104.9 L215.2 105.0 M185.5 112.5 L185.9 109.7 L186.1 106.7 L187.2 104.1 L186.7 101.9 L186.6 99.3 L185.8 96.8 L185.6 94.0 L187.5 91.3 L188.5 89.4 M188.5 84.3 L200.4 81.3 M199.0 84.2 L200.3 86.1 L201.7 88.0 L202.7 90.3 L203.7 92.5 L205.2 95.0 L206.3 96.9 L207.6 99.1 L209.6 101.6 L210.6 104.2 L210.7 106.5 L210.5 109.2 L210.0 111.7 M190.0 93.8 L192.0 93.0 L194.6 92.6 L196.7 92.1 L199.4 91.4 L201.9 91.0 L203.8 90.8 L206.1 90.2 L208.2 89.9 L210.7 89.4 L212.7 88.4 L215.2 88.0 M208.6 80.5 L210.2 78.9 L212.3 76.8 L214.5 76.0 L217.8 75.1 L220.1 74.5 L222.6 73.9 M208.5 80.6 L212.2 81.3 M227.0 72.4 L228.5 76.9 M175.2 92.4 L177.4 99.1 M237.4 90.1 L239.7 89.4 L241.9 88.0 L243.8 89.5 L245.5 91.2 L247.8 92.4 L250.1 93.3 L252.1 94.0 L254.5 95.3 L256.7 96.0 L259.0 96.2 L261.2 96.6 L263.7 96.4 L265.6 96.9 M264.8 59.8 L270.7 59.1 M265.5 59.9 L266.4 62.2 L267.0 65.3 L267.2 67.7 L267.6 70.3 L268.5 72.3 L266.6 73.3 L264.2 74.0 L264.9 76.4 L265.7 78.5 L266.2 81.6 L266.2 84.2 L267.0 86.5 L267.7 88.6 L267.6 91.4 L267.8 93.8 L268.5 96.1 M268.6 96.1 L270.5 97.3 L273.3 98.2 L275.2 99.3 L277.5 99.7 L279.1 100.9 L280.7 102.6 L283.3 104.6 L284.8 105.7 M265.5 96.8 L263.5 98.6 L261.7 100.2 L259.5 101.4 L257.1 101.8 L255.2 102.0 M260.4 102.0 L262.6 112.4 M244.9 120.6 L246.8 121.1 L249.2 120.9 L251.3 121.5 L253.7 122.0 L256.0 121.8 L257.9 121.0 L260.5 120.9 L262.5 120.5 L265.6 121.0 L267.6 121.0 L270.8 121.8 L273.0 122.0 L274.8 123.4 L276.6 125.1 L278.9 126.6 L280.8 127.9 L282.8 129.8 L284.8 131.0 L286.1 129.2 L287.6 127.7 L289.1 125.9 L290.9 123.8 L292.3 122.0 L294.4 120.2 L296.1 117.7 L298.1 116.1 L299.3 114.3 L300.4 111.8 L301.9 109.4 M292.3 122.0 L290.7 120.5 L293.1 119.3 L294.6 118.4 L296.7 117.6 M213.8 120.7 L213.9 122.8 L213.6 125.4 L213.7 127.1 L214.1 129.6 L214.5 131.5 L214.6 134.0 L215.7 135.5 L217.9 136.7 L219.6 138.3 L222.0 137.3 L224.5 136.5 L226.7 134.9 L228.6 133.9 L230.5 132.6 L231.7 130.3 L233.8 128.7 L235.4 127.2 L237.3 125.0 L239.6 123.4 L242.6 121.7 L244.8 120.6 M219.5 138.4 L222.2 139.5 L224.3 140.6 L227.1 141.4 L228.9 141.6 L231.0 142.4 L234.1 142.8 L235.9 142.8 M244.7 120.5 L245.8 123.1 L246.4 125.8 L247.7 128.0 L248.3 130.4 L249.2 132.3 L250.5 134.9 L251.6 137.2 L252.2 139.7 L252.3 142.4 L253.0 145.0 L253.6 147.2 L253.7 150.2 M253.8 127.9 L254.5 130.2 L254.4 132.5 L255.1 135.0 L255.1 136.4 L255.2 139.4 L256.1 141.5 L256.0 143.5 L256.5 145.6 L258.7 145.4 L261.2 144.6 L262.9 143.4 L265.4 142.7 L264.8 140.9 L264.7 138.3 L264.6 136.5 L264.2 133.9 L266.3 135.0 L268.4 135.2 L271.0 135.9 L273.0 136.9 M222.6 151.7 L228.5 148.7 M227.0 163.5 L228.8 161.6 L230.5 159.9 L232.0 158.5 L233.8 156.4 L235.9 154.6 L236.4 156.5 L237.3 158.9 L238.1 161.1 L239.0 163.5 L240.9 162.4 L244.2 161.1 L246.3 160.7 L248.0 158.8 L249.9 156.7 L252.0 155.1 L253.7 153.1 M150.0 175.4 L152.1 175.0 L153.8 173.7 L156.1 173.3 L158.7 172.8 L160.9 172.1 L162.5 171.7 L164.7 171.1 L167.3 170.0 L169.1 169.7 L171.7 168.8 L173.3 168.2 L175.5 167.3 L178.2 166.9 L180.5 165.3 L183.0 165.2 L184.9 163.8 L187.1 163.5 L189.2 163.2 L191.5 161.5 L193.4 161.1 L195.5 160.2 L197.2 159.5 L199.0 158.6 L201.6 157.5 L203.1 157.4 L205.6 156.4 L207.2 155.2 L209.4 155.2 L211.7 154.3 L213.6 153.1 L214.1 156.4 L214.3 159.2 L212.3 159.3 L210.2 160.3 L208.3 161.5 L206.0 162.0 L203.8 162.7 L201.4 163.4 L199.4 163.9 L197.3 164.4 L195.2 165.1 L193.4 165.9 L191.2 166.7 L189.5 167.2 L187.0 168.0" stroke="#0c0c0c" stroke-width="1" stroke-opacity=".95"/><path d="M84.4 210.7 L91.2 234.1 M91.6 213.2 L96.8 231.2 M98.7 208.7 L104.5 228.8 M105.8 202.6 L114.2 231.6 M112.9 204.3 L119.1 225.8 M120.0 197.5 L129.2 229.3 M127.1 199.2 L135.1 226.8 M134.2 198.2 L141.8 224.4 M141.3 197.9 L149.5 226.0 M148.4 200.0 L154.2 219.8 M155.6 194.0 L162.0 216.2 M123.0 211.6 L128.3 230.2 M129.5 209.9 L133.2 222.6 M136.0 208.1 L140.2 222.7 M142.5 206.4 L148.1 225.7 M149.0 204.6 L152.6 216.8" stroke="#111" stroke-width=".7" stroke-opacity=".8"/><path d="M178.9 139.9 L180.1 144.1 M56.4 248.2 L60.7 246.9 M229.1 142.6 L232.5 141.6 M216.1 147.4 L212.0 148.6 M295.1 86.5 L298.4 85.6 M160.9 125.4 L162.2 130.1 M246.1 99.1 L243.1 102.7 M239.3 122.4 L240.3 126.0 M176.5 175.4 L177.6 179.3 M182.8 143.7 L184.3 144.9 M49.4 276.4 L54.0 277.9 M68.0 159.2 L72.5 161.2 M176.4 164.8 L179.6 163.9 M125.6 179.8 L127.2 180.8 M217.2 67.1 L215.5 67.7 M272.8 121.5 L274.1 126.1 M282.4 64.8 L282.9 69.8 M237.7 97.7 L239.5 97.2 M170.3 199.2 L171.8 198.8 M48.3 250.6 L51.1 249.8 M120.6 143.2 L122.9 142.5 M188.1 186.3 L189.6 188.6 M87.1 168.3 L87.7 170.4 M190.8 197.8 L192.9 197.2 M119.0 234.3 L122.2 233.4 M51.2 243.2 L52.8 242.8 M180.4 93.1 L184.9 91.8 M66.6 249.5 L67.9 254.3 M48.4 293.8 L51.5 293.0 M276.9 94.4 L278.2 99.1 M281.5 142.1 L285.6 140.9 M94.1 228.4 L97.6 231.4 M210.4 148.2 L211.0 150.1 M187.3 125.7 L187.3 128.8 M246.9 122.8 L249.1 123.5 M166.0 98.5 L167.0 100.0 M191.4 144.1 L192.2 147.1 M294.0 65.9 L294.9 69.1 M289.5 65.8 L290.5 69.3 M292.4 140.8 L290.1 142.4 M157.7 209.7 L158.2 211.7 M186.4 207.0 L187.3 210.0 M73.9 182.1 L75.0 186.2 M282.1 135.2 L282.7 137.2 M285.8 128.2 L287.3 128.6 M208.9 156.2 L209.2 159.7 M202.6 74.8 L205.0 74.1 M246.0 116.3 L248.3 115.6 M145.1 193.2 L146.3 197.6 M209.7 180.7 L207.6 181.5 M246.3 102.3 L247.4 106.1 M41.9 254.1 L39.3 254.8 M204.0 75.5 L206.3 74.8 M107.8 153.6 L110.6 156.3 M198.2 90.1 L201.1 89.2 M140.0 154.7 L143.4 153.7 M162.8 152.3 L167.2 151.0 M92.3 208.4 L95.5 207.5 M80.6 215.5 L83.1 214.7 M239.0 140.0 L242.3 143.7 M220.4 72.1 L218.9 73.9 M83.8 199.4 L84.6 202.2 M158.5 159.8 L157.0 164.3 M188.3 160.7 L190.4 160.1 M236.8 73.7 L241.2 75.8 M282.4 124.4 L286.2 123.3 M153.3 163.8 L153.9 165.9 M155.5 207.6 L156.4 210.7 M241.9 118.8 L245.6 117.7 M221.8 90.9 L222.6 93.7 M133.5 238.3 L132.4 239.8 M161.4 201.1 L162.5 202.6 M140.8 155.7 L141.2 157.3 M85.9 219.0 L86.6 221.6 M198.4 158.7 L201.4 157.8 M152.8 150.2 L154.0 154.7 M91.8 205.0 L91.1 208.0 M182.1 153.9 L183.2 158.0 M100.1 207.2 L100.7 209.7 M147.1 179.6 L151.3 178.3 M135.6 201.7 L136.7 205.6 M186.3 120.4 L184.8 122.9" stroke="#111" stroke-width=".9" stroke-opacity=".85"/></svg></div><div class="ab" style="left:847px;top:155px;width:308px;height:383px"><svg width="308" height="383" style="position:absolute;left:0;top:0"><defs><clipPath id="land2"><path d="M-2.0 365.0 L1.5 365.0 L4.3 359.5 L8.0 355.8 L9.8 341.0 L11.7 326.2 L15.4 321.6 L21.0 318.8 L22.8 312.3 L28.3 306.7 L34.8 300.3 L41.3 296.6 L46.9 292.9 L46.9 285.4 L50.6 281.7 L59.8 279.9 L67.2 277.1 L74.6 270.6 L80.2 263.2 L83.9 255.8 L87.6 250.3 L91.3 243.8 L96.9 241.0 L104.3 241.9 L111.7 244.7 L120.9 247.5 L126.0 245.6 L129.8 248.4 L138.1 261.4 L148.3 257.7 L159.4 248.4 L163.0 244.7 L165.9 260.4 L178.0 255.8 L179.8 237.3 L183.5 228.0 L189.0 220.6 L194.6 216.9 L203.9 212.3 L209.4 205.8 L216.9 196.6 L226.0 187.3 L235.4 178.0 L240.9 168.8 L248.3 159.5 L257.6 150.3 L268.7 141.9 L279.8 138.2 L287.2 130.8 L294.6 120.6 L300.2 113.2 L308.0 105.5 L310.0 -2.0 L-2.0 -2.0 Z"/></clipPath></defs><path d="M-1.0 -0.9 L1.9 -0.6 L4.5 -0.6 L6.4 -1.0 L9.9 -0.9 L12.5 -1.4 L14.7 -1.3 L17.4 -0.9 L19.5 -1.3 L22.4 -0.6 L25.5 -1.3 L28.1 -1.4 L30.6 -1.4 L32.6 -0.6 L35.4 -1.3 L38.8 -0.6 L40.9 -0.9 L40.5 1.8 L39.7 4.7 L39.5 7.0 L40.4 9.1 L40.3 11.5 L40.9 14.1 L43.7 14.7 L46.7 15.1 L49.9 14.1 L53.6 13.5 L56.5 12.8 L58.6 14.6 L60.4 17.1 L60.0 20.0 L58.8 22.4 L58.7 24.7 L59.7 27.1 L61.6 30.7 L61.4 33.4 L62.1 36.2 L61.5 38.2 L61.7 41.0 L58.3 42.7 L55.9 44.0 L52.8 42.6 L50.4 40.3 L48.4 38.8 L45.2 38.9 L42.5 38.0 L39.4 37.9 L36.8 40.6 L35.1 44.0 L33.8 45.8 L33.7 48.7 L32.2 50.8 L31.4 53.6 L29.6 55.7 L27.4 58.4 L26.0 60.2 L25.4 62.4 L24.2 65.8 L22.9 68.3 L21.6 70.5 L20.1 75.1 L21.3 77.4 L23.2 80.3 L24.1 82.4 L22.7 85.1 L21.4 87.1 L20.2 89.7 L17.6 89.6 L15.7 88.5 L12.8 87.5 L10.4 85.1 L9.1 83.5 L6.8 81.0 L6.4 78.7 L5.6 76.2 L4.6 73.6 L1.6 72.8 L-0.9 72.1 L-1.2 70.0 L-0.9 67.1 L-1.5 64.5 L-1.2 62.1 L-1.0 59.8 L-0.9 57.2 L-1.2 54.6 L-0.8 52.2 L-1.1 49.7 L-0.6 47.0 L-0.5 44.8 L-1.0 41.8 L-1.3 39.6 L-0.6 36.8 L-0.8 34.5 L-0.8 31.4 L-0.7 29.3 L-0.8 26.6 L-0.9 24.5 L-0.9 21.9 L-1.5 18.8 L-1.1 16.8 L-1.3 14.3 L-0.9 11.1 L-1.0 8.8 L-1.4 6.2 L-1.2 3.7 L-1.3 1.1 L-1.0 -1.0 Z" fill="#3b3b3b"/><path d="M63.2 -1.0 L66.1 -0.9 L68.5 -0.6 L71.0 -1.1 L74.1 -1.1 L76.7 -0.7 L79.7 -1.5 L82.7 -1.4 L85.4 -1.0 L86.2 1.9 L87.2 3.8 L87.9 6.5 L88.2 8.5 L89.1 11.3 L88.8 14.7 L87.7 17.1 L87.0 20.0 L85.4 22.8 L84.8 25.0 L83.7 28.4 L82.4 30.5 L79.9 31.8 L78.1 33.5 L76.7 31.7 L74.6 28.8 L73.0 26.9 L69.5 27.2 L66.9 27.8 L63.1 28.3 L60.6 26.6 L58.7 24.6 L59.5 22.5 L59.2 19.7 L60.2 17.4 L61.0 14.0 L61.0 11.0 L61.9 8.3 L62.3 5.2 L62.8 2.2 L63.2 -1.0 Z" fill="#3b3b3b"/><path d="M63.3 29.7 L66.4 29.1 L69.1 28.7 L72.0 28.3 L73.3 30.4 L74.8 32.9 L75.6 34.9 L76.3 38.4 L77.3 41.0 L77.0 44.2 L78.0 46.9 L77.5 49.6 L76.5 52.2 L73.5 52.7 L72.4 50.0 L70.4 48.2 L69.0 45.5 L67.1 42.3 L64.6 39.5 L64.6 35.9 L63.7 33.1 L63.2 29.8 Z" fill="#3b3b3b"/><path d="M17.3 86.8 L19.5 87.7 L22.8 87.9 L24.8 89.4 L27.7 89.9 L27.9 92.5 L29.6 95.3 L29.9 97.1 L27.6 99.2 L24.7 101.8 L22.7 99.1 L20.2 97.3 L19.1 94.7 L18.7 91.7 L18.1 89.0 L17.3 86.9 Z" fill="#3b3b3b"/><path d="M6.8 98.7 L9.1 99.0 L12.1 100.4 L15.0 100.6 L17.2 101.6 L17.9 104.1 L18.7 106.5 L18.6 109.1 L15.4 110.7 L12.8 112.2 L10.9 110.2 L8.6 108.1 L6.8 106.2 L6.9 102.0 L6.9 98.7 Z" fill="#3b3b3b"/><path d="M152.9 -1.0 L155.8 -1.3 L158.2 -0.8 L160.1 -0.8 L162.7 -1.4 L165.7 -1.3 L168.5 -1.0 L170.4 -0.7 L172.7 -0.8 L175.2 -1.3 L178.6 -0.8 L180.4 -1.4 L183.7 -0.8 L186.0 -1.4 L188.4 -1.1 L190.5 -1.2 L193.4 -1.2 L195.7 -1.4 L198.6 -0.9 L201.1 -1.1 L203.7 -1.0 L205.9 -0.9 L208.6 -1.1 L210.5 -1.5 L213.1 -1.5 L216.3 -1.0 L218.7 -1.5 L220.9 -0.6 L223.6 -1.1 L225.9 -1.4 L228.1 -1.3 L230.9 -1.1 L233.9 -1.3 L235.8 -1.2 L238.2 -1.2 L240.8 -1.0 L243.1 -0.6 L246.0 -0.6 L248.8 -0.8 L251.1 -0.6 L253.3 -0.8 L256.0 -0.8 L258.9 -1.3 L260.9 -1.5 L263.4 -1.4 L266.1 -0.5 L268.6 -1.2 L271.2 -1.2 L274.0 -0.8 L276.0 -1.3 L279.0 -0.6 L281.5 -1.1 L284.3 -1.5 L285.9 -0.7 L288.8 -1.5 L291.4 -0.5 L293.9 -1.1 L296.0 -1.4 L299.3 -1.0 L301.9 -1.4 L303.7 -1.4 L306.4 -1.4 L308.9 -1.0 L308.8 1.1 L308.5 4.7 L308.7 6.8 L308.9 9.4 L308.6 11.8 L308.6 14.6 L309.4 17.3 L309.4 19.5 L308.5 22.4 L309.0 25.0 L308.9 27.7 L309.2 30.6 L308.8 32.7 L309.3 35.1 L308.6 37.7 L308.6 40.8 L309.3 42.9 L308.6 45.3 L308.7 47.9 L308.9 51.0 L308.7 53.1 L309.2 55.7 L308.9 58.6 L307.2 60.3 L305.7 62.5 L304.2 64.6 L302.3 67.0 L299.7 69.1 L296.6 70.9 L293.9 72.5 L290.8 73.6 L288.1 75.8 L285.7 77.1 L283.2 79.3 L280.9 82.6 L278.9 85.2 L281.2 87.9 L282.4 89.9 L284.7 92.7 L287.4 94.7 L289.4 95.5 L291.5 97.2 L288.8 99.0 L286.4 101.8 L284.1 99.8 L281.4 98.4 L279.0 97.2 L276.9 96.5 L273.6 95.1 L271.6 94.2 L268.5 95.2 L265.9 96.7 L262.6 97.4 L260.3 96.3 L258.0 96.2 L255.1 95.9 L252.5 92.9 L250.8 89.9 L248.7 87.6 L246.6 85.6 L244.9 83.8 L242.9 81.7 L240.3 79.7 L238.3 78.1 L237.3 75.6 L235.6 72.7 L234.6 70.6 L235.0 67.8 L236.1 65.8 L237.6 63.1 L239.2 60.5 L240.6 58.6 L241.9 55.8 L243.2 53.0 L244.9 51.4 L246.0 49.0 L247.8 46.7 L248.6 44.3 L249.8 42.1 L250.7 39.6 L249.6 36.9 L247.9 33.6 L246.9 30.9 L245.7 27.7 L244.9 24.6 L242.4 22.0 L240.3 20.1 L238.0 19.5 L235.7 18.0 L233.1 17.2 L231.2 14.8 L229.3 13.4 L227.2 11.4 L224.3 10.2 L221.2 8.4 L217.9 10.6 L215.3 12.7 L212.7 14.3 L209.3 15.6 L206.7 15.9 L204.5 17.1 L202.0 17.3 L199.3 16.3 L197.1 16.3 L194.5 15.7 L192.4 15.9 L189.3 16.5 L187.1 17.3 L183.8 16.6 L181.2 15.7 L178.5 18.8 L176.8 21.8 L174.0 21.6 L170.8 21.7 L169.7 19.2 L167.7 17.3 L165.8 15.9 L162.4 14.9 L160.4 14.3 L156.4 14.3 L153.0 15.0 L153.2 12.6 L152.6 9.7 L153.3 7.5 L152.8 4.7 L153.1 2.1 L153.0 -1.0 Z" fill="#3b3b3b"/><path d="M172.3 29.1 L179.7 32.0 L181.1 38.0 L175.2 39.4 L172.3 35.0 Z" fill="#3b3b3b"/><path d="M104.7 -1.0 L122.4 -1.0 L121.0 6.1 L106.1 5.4 Z" fill="#3b3b3b"/><path d="M123.9 -1.0 L138.7 -1.0 L137.3 6.1 L125.4 5.4 Z" fill="#3b3b3b"/><path d="M147.6 -1.0 L158.0 -1.0 L156.5 6.1 L149.1 5.4 Z" fill="#3b3b3b"/><path d="M8.4 -1.0 L20.2 72.0 M32.1 -1.0 L38.0 38.0 M24.7 -1.0 L29.9 36.5 M12.8 26.1 L22.4 83.9 M69.1 -1.0 L75.0 29.1 M-1.0 12.8 L41.0 2.4 M-1.0 27.6 L39.5 17.2 M-1.0 60.2 L32.1 51.3 M-1.0 75.7 L20.2 70.6 M42.4 30.6 L61.7 26.1 M61.7 9.8 L86.9 3.9 M162.6 -1.0 L164.1 11.3 M178.2 -1.0 L180.4 12.8 M194.5 -1.0 L196.7 14.3 M210.0 -1.0 L212.3 11.3 M225.6 -1.0 L228.6 9.8 M241.1 -1.0 L247.8 33.5 M253.7 -1.0 L259.7 23.1 L270.0 64.6 M270.0 -1.0 L278.9 29.1 L295.2 63.1 M286.3 11.3 L295.2 39.4 M302.6 21.7 L309.0 33.5 M262.6 33.5 L270.0 61.7 L276.0 78.0 M276.0 32.0 L286.3 73.5 M153.0 14.3 L200.4 -1.0 M224.1 9.8 L250.8 -1.0 M243.4 18.7 L309.0 6.1 M247.8 33.5 L256.7 29.1 L262.6 24.6 L271.5 20.2 L309.0 9.8 M249.3 49.8 L309.0 32.0 M236.0 69.1 L309.0 52.8 M253.7 82.4 L280.4 78.0 M271.5 35.0 L301.1 24.6 M280.4 54.3 L292.3 45.4 L309.0 42.4" fill="none" stroke="#e8e8e8" stroke-width=".7" stroke-opacity=".85"/><g clip-path="url(#land2)"><path d="M10.1 138.3 L13.4 139.0 L14.4 139.4 L16.9 140.1 L19.4 142.1 L21.8 143.3 L25.2 143.9 L28.1 145.7 L30.8 147.7 L32.7 149.3 L34.1 149.1 L36.5 150.8 L39.8 152.9 L41.4 155.9 L41.5 157.7 L43.6 160.1 L44.0 163.0 L45.8 165.7 L47.3 168.1 L49.7 169.0 L51.0 172.5 L51.6 173.4 L53.6 176.0 L55.7 179.2 L56.5 180.1 L58.4 182.7 L60.0 185.4 L60.1 187.6 L62.2 190.6 L61.7 193.0 L63.1 196.2 L63.9 198.0 L65.5 201.1 L67.0 203.8 L66.1 207.3 L65.8 208.8 L67.5 210.7 L67.6 214.1 L66.4 216.5 L67.6 219.6 L69.5 221.0 L70.8 225.0 L73.1 226.2 L74.2 228.1 L77.2 230.9 L79.4 230.5 L81.6 232.5 L84.2 232.8 L87.6 233.5 L89.5 232.9 L91.7 234.4 M54.4 51.3 L55.9 53.9 L58.1 56.1 L58.6 58.4 L60.7 60.2 L60.9 62.1 L62.8 64.6 L65.4 65.1 L65.7 67.6 L66.8 70.0 L68.2 72.3 L68.3 75.6 L69.2 78.1 L71.9 81.8 L71.5 82.7 L73.4 86.6 L75.2 87.4 L76.4 90.8 L79.6 90.9 L80.0 93.6 L82.0 96.1 L84.2 97.6 L86.1 98.1 L90.2 99.0 L90.9 98.5 L94.5 99.6 L96.4 100.4 L99.1 101.1 M141.8 97.7 L142.0 100.2 L142.8 102.8 L144.5 104.6 L144.8 108.4 L144.7 111.2 L146.3 113.3 L147.3 116.1 L148.0 118.0 L149.5 119.9 L151.7 121.3 L153.2 124.3 L155.5 127.4 L156.5 128.7 L158.5 131.0 L160.9 133.8 L161.1 134.3 L164.0 136.2 L164.6 139.7 L166.4 141.1 L168.7 143.0 L169.5 145.8 L169.8 147.9 L171.6 151.0 L172.1 153.4 L172.8 155.3 L174.5 158.1 L176.8 161.0 L176.8 164.2 L178.0 166.1 L178.8 169.3 L178.5 171.7 L178.8 173.5 L180.7 176.3 L180.8 178.7 L178.0 179.8 L177.4 182.7 L174.1 183.5 L173.8 186.3 L172.1 187.2 L169.5 189.8 L167.5 191.5 L164.8 191.9 L163.0 192.9 L158.7 195.3 L156.3 195.3 L154.6 197.5 L154.0 200.1 L150.8 202.1 L150.9 203.3 L149.2 205.8 L147.3 208.5 M224.9 141.6 L223.7 143.7 L222.1 145.5 L218.8 146.8 L217.2 150.2 L215.2 150.3 L213.8 152.7 L211.7 154.8 L210.0 155.5 L206.9 157.7 L205.8 159.2 L203.5 161.7 L200.5 162.0 L199.1 164.1 L197.8 165.8 L195.2 167.1 L193.3 169.5 L190.2 169.6 L188.0 171.7 L187.2 173.1 L184.4 175.3 L184.0 176.9 L182.4 179.8 L180.6 182.6 M254.4 116.0 L255.0 119.1 L253.0 122.8 L253.3 125.1 L253.6 127.3 L252.8 130.6 L249.7 131.7 L248.6 134.3 L246.6 135.4 L243.4 138.0 L242.0 140.0 L239.4 140.6 L235.4 141.7 L233.1 142.1 L231.3 143.9 L228.5 145.6 L227.8 144.6 L225.0 141.9 M284.3 97.2 L287.6 97.6 L289.9 98.4 L293.6 100.3 L295.4 101.0 L298.0 103.3 L300.2 103.0 L302.8 104.8 M258.4 116.2 L260.4 117.7 L263.7 118.5 L265.7 120.4 L266.5 121.0 L269.7 123.3 L271.8 124.8 L274.6 124.6 L276.5 125.7 L278.9 125.7 L282.3 126.6 L284.3 127.0 M98.9 69.5 L101.4 72.2 L102.0 74.9 L103.9 75.4 L105.7 78.2 L108.6 81.1 L110.0 82.7 L111.3 84.6 L113.4 86.0 L114.9 88.6 L117.4 90.2 L116.4 93.0 L116.1 95.5 L115.6 99.2 L113.9 101.1 M134.2 156.6 L137.2 157.8 L138.5 160.2 L141.7 161.5 L143.2 164.6 L145.6 164.9 L147.5 167.7 L150.7 169.0 L152.7 170.3 L155.9 170.2 L158.5 171.5 L161.6 173.6 L163.9 175.2 M110.4 137.9 L112.5 139.0 L115.4 142.4 L117.8 142.8 L119.5 145.5 L117.3 142.2 L117.7 140.7 L114.8 137.9 L113.9 134.4 M39.9 212.2 L42.6 212.1 L44.3 212.1 L47.6 213.6 L50.2 213.9 L52.1 213.9 L55.1 214.4 L57.3 215.6 L59.5 215.9 L61.8 215.8 L64.6 217.7 L64.9 219.9 L67.8 223.1 L68.8 225.7 L70.7 228.2 L71.3 230.7 M2.8 123.0 L5.6 125.3 L7.5 127.0 L9.7 128.2 L12.4 129.5 L13.6 131.0 L17.1 131.6 L17.5 133.4 L19.8 134.9 L22.0 136.1 L25.0 138.1 M0.7 82.5 L2.1 85.5 L3.8 86.9 L6.5 90.8 L7.5 91.9 L8.5 94.8 L10.2 97.1 L12.9 98.9 L16.2 100.0 L18.9 100.7 L21.3 101.1 M43.8 112.5 L46.6 113.3 L48.8 115.0 L51.7 116.4 L53.3 116.5 L55.6 117.9 L58.5 119.8 L59.6 121.5 L62.8 123.1 L63.1 125.4 L65.8 127.0 M210.1 145.3 L211.9 146.2 L213.8 148.6 L215.8 149.3 L218.8 152.8 L221.5 153.1 L223.8 154.2 L224.8 156.4 L222.8 159.2 L222.8 161.3 L221.5 163.5 L220.3 166.1 L218.2 167.6 L216.6 170.4 L216.0 172.3 L213.9 175.2 M232.3 175.4 L230.4 177.7 L229.4 180.5 L228.9 181.8 L228.0 184.9 L225.9 188.2 L225.2 189.9 L223.3 190.8 L220.8 192.3 L219.0 195.6 L216.8 195.4 L214.5 197.9 L212.2 198.8 L210.2 201.1 M136.0 245.5 L137.8 247.4 L140.6 248.2 L142.7 249.8 L146.9 251.3 L147.7 253.0 L151.2 254.6 L152.5 251.9 L155.0 250.1 L155.7 248.6 L158.4 245.6 M165.7 256.8 L167.9 255.9 L169.3 253.2 L172.0 251.8 L175.3 250.7 L176.8 249.3 L177.8 246.8 L177.3 244.3 L177.9 241.1 L177.8 237.9 L178.1 236.8 L178.1 233.1 L178.7 230.7" fill="none" stroke="#3b3b3b" stroke-width="1.7" stroke-linejoin="round"/><rect x="58.4" y="156.7" width="9.3" height="7.4" fill="#3b3b3b" transform="rotate(-17 58.4 156.7)"/><rect x="91.7" y="227.0" width="7.4" height="9.3" fill="#3b3b3b" transform="rotate(-17 91.7 227.0)"/><rect x="210.2" y="169.6" width="5.2" height="5.9" fill="#3b3b3b" transform="rotate(-17 210.2 169.6)"/><rect x="193.6" y="110.4" width="6.7" height="5.2" fill="#3b3b3b" transform="rotate(-17 193.6 110.4)"/><rect x="112.1" y="140.0" width="9.3" height="7.4" fill="#3b3b3b" transform="rotate(-17 112.1 140.0)"/><rect x="136.1" y="190.0" width="11.1" height="4.4" fill="#3b3b3b" transform="rotate(-17 136.1 190.0)"/><rect x="188.0" y="97.4" width="4.4" height="5.2" fill="#3b3b3b" transform="rotate(-17 188.0 97.4)"/><rect x="36.1" y="275.2" width="7.4" height="7.4" fill="#3b3b3b" transform="rotate(-17 36.1 275.2)"/><rect x="10.2" y="223.3" width="7.4" height="11.1" fill="#3b3b3b" transform="rotate(-17 10.2 223.3)"/><rect x="65.8" y="208.5" width="5.6" height="7.4" fill="#3b3b3b" transform="rotate(-17 65.8 208.5)"/><rect x="4.7" y="175.2" width="9.3" height="6.7" fill="#3b3b3b" transform="rotate(-17 4.7 175.2)"/><rect x="141.7" y="88.1" width="7.4" height="6.7" fill="#3b3b3b" transform="rotate(-17 141.7 88.1)"/><rect x="117.6" y="84.4" width="9.3" height="4.4" fill="#3b3b3b" transform="rotate(-17 117.6 84.4)"/><rect x="136.1" y="21.5" width="5.6" height="4.4" fill="#3b3b3b" transform="rotate(-17 136.1 21.5)"/><rect x="175.0" y="34.4" width="7.4" height="5.6" fill="#3b3b3b" transform="rotate(-17 175.0 34.4)"/><rect x="188.0" y="69.6" width="3.7" height="3.0" fill="#3b3b3b" transform="rotate(-17 188.0 69.6)"/><rect x="210.2" y="77.0" width="3.7" height="3.7" fill="#3b3b3b" transform="rotate(-17 210.2 77.0)"/><rect x="97.3" y="191.9" width="3.0" height="13.0" fill="#3b3b3b" transform="rotate(-17 97.3 191.9)"/><rect x="25.0" y="271.5" width="5.6" height="5.6" fill="#3b3b3b" transform="rotate(-17 25.0 271.5)"/><path d="M1.0 134.4 L32.4 123.3 L62.1 115.9 L84.3 90.0 L102.8 78.9 L136.1 73.3 L162.1 65.9 M62.1 130.7 L136.1 112.2 L195.4 97.4 L243.6 78.9 M143.6 112.2 L173.2 164.1 M180.6 167.8 L210.2 145.6 L247.3 119.6 M1.0 215.9 L21.3 204.8 L36.1 197.4 M25.0 201.1 L47.3 227.0" fill="none" stroke="#a8a8a8" stroke-width="1.400"/><path d="M17.6 140.9 L15.8 142.2 L13.9 143.3 L11.9 144.1 L9.7 144.4 L8.1 145.9 L5.9 146.2 L3.9 147.2 L2.3 148.6 M21.3 142.3 L21.7 144.5 L23.0 146.2 L24.7 147.6 L26.0 149.4 L27.3 151.2 L27.5 153.4 M36.1 150.6 L34.1 149.9 L31.9 150.5 L29.9 151.2 L28.1 152.5 L25.9 152.7 M39.9 153.0 L38.1 151.6 L37.2 149.6 L37.8 147.5 M41.7 156.7 L41.8 154.5 L41.4 152.3 L40.2 150.5 L40.4 148.3 L39.1 146.5 L38.3 144.4 L37.0 142.6 L35.1 141.5 M43.6 160.4 L45.3 159.1 L46.7 157.3 L46.7 155.1 L47.6 153.1 L49.0 151.4 L49.6 149.3 L50.3 147.2 M47.3 167.8 L49.1 166.6 L50.1 164.7 L50.6 162.5 L50.7 160.3 L51.7 158.4 L51.3 156.2 L50.1 154.4 L48.0 153.7 L45.9 153.1 M50.0 171.5 L52.2 171.3 L54.2 170.2 L56.1 169.1 L56.8 167.1 L56.5 164.9 M52.8 175.2 L54.6 173.9 L56.8 173.7 L59.0 174.0 L60.9 175.0 L62.0 176.9 M60.2 187.2 L60.0 189.4 L60.6 191.6 L62.2 193.0 L64.3 193.6 L66.2 194.8 L68.0 196.0 M62.1 191.9 L62.1 194.1 L63.5 195.8 L64.2 197.9 L64.0 200.1 L62.7 201.8 L62.1 203.9 L61.0 205.9 L61.1 208.1 L61.3 210.2 M65.8 201.1 L67.9 201.8 L70.1 201.8 L72.2 201.4 L74.2 202.3 L76.2 203.2 L77.6 204.9 L78.3 207.0 L78.8 209.2 M66.2 205.7 L65.1 207.6 L64.7 209.8 L63.3 211.5 L61.8 213.1 L60.4 214.8 M67.6 219.6 L69.1 218.0 L69.8 215.9 L69.7 213.7 L70.0 211.5 L70.7 209.4 L70.6 207.2 L71.2 205.1 M69.9 222.4 L72.0 221.7 L74.2 221.2 L76.3 221.9 M74.6 228.0 L72.4 228.2 L70.7 229.6 L69.8 231.6 L69.0 233.7 L68.1 235.7 M76.9 230.7 L77.0 228.5 L78.3 226.8 L80.5 226.3 L81.8 224.6 L81.8 222.4 M80.6 231.7 L82.2 233.1 L84.2 234.1 L86.3 234.9 L88.2 236.0 L89.8 237.5 L91.9 238.0 L94.1 238.3 L96.3 238.8 L98.4 238.4 M84.3 232.6 L86.5 232.9 L88.6 232.2 L90.7 231.6 M88.0 233.5 L87.2 231.5 L87.7 229.3 L86.9 227.3 L85.7 225.4 L85.1 223.3 M57.4 55.3 L56.8 57.4 L56.5 59.6 L55.4 61.4 L55.5 63.6 L55.9 65.8 M63.0 63.6 L65.2 63.5 L66.9 62.1 L69.1 62.1 L71.3 61.8 L73.5 61.7 L75.5 60.8 M67.6 72.4 L65.5 72.8 L63.3 72.8 L61.1 72.4 L59.1 71.6 M78.7 91.9 L77.4 90.1 L75.7 88.8 L75.1 86.6 L74.3 84.6 L73.4 82.6 L73.6 80.4 L72.8 78.3 M84.3 97.4 L82.1 97.3 L80.4 95.9 L78.5 94.9 L76.9 93.3 L76.6 91.2 L75.1 89.5 L74.3 87.5 L74.0 85.3 M88.0 98.3 L89.0 96.4 L88.6 94.2 L88.8 92.0 L89.5 90.0 L89.2 87.8 L87.8 86.1 L85.6 85.6 L83.8 84.4 L82.7 82.5 M91.7 99.3 L91.8 101.5 L92.5 103.6 L92.3 105.8 M95.4 100.2 L95.1 98.0 L94.2 96.0 L92.7 94.4 L90.6 93.7 L88.5 93.0 L87.0 91.3 L86.6 89.2 L85.7 87.2 M144.5 106.7 L146.4 105.6 L148.6 105.8 L150.7 105.3 L152.7 104.3 M147.3 115.9 L146.2 114.0 L146.3 111.8 L145.6 109.7 L144.7 107.7 L143.1 106.2 L141.3 104.9 L139.3 104.1 M152.8 123.3 L151.2 124.8 L149.8 126.5 L149.2 128.6 L149.2 130.8 M158.4 130.7 L159.7 132.5 L161.8 133.1 L163.7 134.2 L164.9 136.1 L166.8 137.1 L169.0 137.5 L171.1 136.8 M163.9 138.1 L164.3 140.3 L163.4 142.4 L162.8 144.5 L163.7 146.5 M166.7 141.9 L168.8 141.4 L170.4 139.8 L170.8 137.6 L170.7 135.4 L170.7 133.2 L169.7 131.3 L169.4 129.1 L169.4 126.9 M169.5 145.6 L171.4 144.5 L172.4 142.5 L173.2 140.5 L174.1 138.5 L174.8 136.4 L175.0 134.2 L176.4 132.5 L177.8 130.8 L178.7 128.8 M173.2 154.8 L171.1 155.6 L169.0 156.0 L166.8 156.3 M175.0 159.4 L175.3 161.6 L175.5 163.8 L176.1 165.9 L177.7 167.5 L179.8 167.8 L181.9 167.0 L183.8 165.9 L184.6 163.8 M177.8 167.8 L176.8 169.7 L176.6 171.9 L177.1 174.1 L177.7 176.2 L179.0 178.0 M178.7 171.5 L177.2 169.9 L177.0 167.7 L176.5 165.6 L176.6 163.4 L176.6 161.2 L175.3 159.4 L173.4 158.4 M179.7 175.2 L177.5 174.7 L175.4 175.0 L173.5 176.2 L172.6 178.2 L171.6 180.2 L171.6 182.4 L171.8 184.5 L170.7 186.5 L168.8 187.6 M180.6 178.9 L180.9 176.7 L180.2 174.6 L179.0 172.7 L177.1 171.7 M177.8 181.7 L180.0 182.1 L181.5 183.7 L182.2 185.8 L181.5 187.9 L180.2 189.7 L180.1 191.9 M175.0 184.4 L174.3 182.4 L172.5 181.2 L170.4 180.4 L168.2 180.0 L166.1 180.7 M172.3 187.2 L170.1 186.7 L167.9 186.4 L166.1 185.1 L164.0 184.7 L161.8 185.2 M162.1 193.7 L164.3 193.4 L166.4 193.8 L168.3 194.9 L170.0 196.4 L171.7 197.7 L172.9 199.6 L174.3 201.3 L176.3 202.2 L178.5 202.4 M158.4 195.6 L159.8 197.2 L161.6 198.6 L163.5 199.7 L165.6 200.1 L167.4 201.4 M154.7 197.4 L155.0 199.6 L155.8 201.6 L157.6 202.9 M152.8 200.2 L154.8 199.1 L156.8 198.4 L158.9 197.7 M151.0 203.0 L149.3 201.5 L147.4 200.4 L146.7 198.3 L145.4 196.5 L144.4 194.6 L144.7 192.4 M149.1 205.7 L148.8 203.6 L148.3 201.4 L146.9 199.8 L144.7 199.4 L142.7 198.4 L140.6 198.0 L138.4 198.3 M225.0 141.9 L227.2 142.3 L228.6 144.0 L229.6 146.0 L229.4 148.1 L230.4 150.1 L231.3 152.1 L231.7 154.3 L231.4 156.5 M216.7 150.2 L216.3 148.0 L216.6 145.8 L215.8 143.8 L215.9 141.6 M213.9 153.0 L212.2 151.6 L211.0 149.8 L209.3 148.3 L207.1 148.2 L205.0 148.7 L203.0 149.5 L200.8 150.0 L198.6 149.6 M210.2 155.7 L209.5 153.7 L209.0 151.5 L208.9 149.3 L210.1 147.5 L211.6 145.9 L213.7 145.2 L215.8 146.0 L217.8 146.8 L219.9 147.3 M206.5 158.5 L204.7 159.7 L203.4 161.5 L201.4 162.4 L199.2 161.9 L197.5 160.6 L196.0 159.0 L194.0 158.1 L192.8 156.2 L192.3 154.1 M202.8 161.3 L204.3 159.7 L204.8 157.6 L206.2 155.8 M191.7 169.6 L193.8 170.1 L195.4 171.7 L197.0 173.2 L199.2 173.5 L201.1 174.5 L203.3 174.3 L205.5 174.2 L207.5 173.2 L209.6 172.5 M182.4 178.9 L180.4 179.7 L178.3 180.5 L176.2 180.9 M254.2 119.6 L253.9 117.4 L254.1 115.2 L253.1 113.3 L251.2 112.3 L249.7 110.6 L248.0 109.2 L247.6 107.1 L247.5 104.9 M253.7 123.3 L251.6 122.7 L249.5 122.5 L247.3 122.8 L245.1 122.3 L243.2 121.3 L241.1 120.5 M252.8 130.7 L250.9 129.7 L248.7 130.1 L246.5 129.9 L244.5 129.1 L242.4 128.5 L240.2 129.0 L238.2 129.9 L236.0 129.7 L233.8 129.7 M250.5 132.6 L251.3 134.6 L251.6 136.8 L253.1 138.5 M245.9 136.3 L246.9 138.3 L246.8 140.5 L247.2 142.6 L247.2 144.8 L248.2 146.8 L247.6 149.0 M243.6 138.1 L241.9 136.6 L239.8 136.4 L237.6 136.5 L235.5 135.6 L233.4 135.0 L231.8 133.5 L229.9 132.4 L227.7 132.4 M236.1 141.9 L235.0 143.7 L235.3 145.9 L235.9 148.0 L237.2 149.7 M232.4 143.7 L234.6 143.4 L236.7 144.3 L238.9 144.1 L240.9 144.9 L243.0 144.3 L245.2 144.8 L247.2 144.1 M228.7 145.6 L227.0 146.9 L225.3 148.3 L223.1 148.5 M226.9 143.7 L226.0 145.7 L224.6 147.4 L223.5 149.3 L223.5 151.5 L222.8 153.6 L221.5 155.3 M226.0 142.8 L224.4 144.3 L222.7 145.7 L220.9 146.9 L219.6 148.7 L219.1 150.8 M289.9 99.3 L288.0 98.1 L286.4 96.6 L284.5 95.6 L282.7 94.3 L280.5 93.9 L278.3 94.3 L276.2 94.6 L274.0 95.1 M295.4 101.1 L296.6 99.3 L297.9 97.5 L299.7 96.1 L300.8 94.3 L301.2 92.1 M299.1 103.0 L297.3 101.8 L295.3 100.8 L293.1 100.8 L291.0 101.5 L289.2 102.8 M301.0 103.9 L300.2 101.8 L300.8 99.8 L302.3 98.1 L304.5 97.8 L306.5 98.6 L307.6 100.5 L309.5 101.6 M258.4 115.9 L257.5 113.9 L257.7 111.7 L259.2 110.1 L261.3 109.5 L263.1 108.2 M263.9 119.6 L264.8 117.6 L264.6 115.4 L265.4 113.4 L266.7 111.6 L268.3 110.1 L269.1 108.0 M273.2 124.3 L272.4 126.3 L271.3 128.2 L271.7 130.4 L272.2 132.5 M112.1 84.4 L109.9 84.3 L107.7 84.0 L105.5 84.1 L103.3 83.8 L101.2 83.6 L99.5 82.1 L99.3 79.9 L100.5 78.0 L102.5 77.2 M113.9 86.3 L116.0 87.1 L118.2 87.4 L119.6 89.1 L121.6 90.1 L122.6 92.0 M117.6 90.0 L119.4 88.7 L120.5 86.8 L121.8 85.1 M116.7 92.8 L118.1 91.1 L118.8 89.0 L119.7 87.0 L121.5 85.6 L123.4 84.6 L124.6 82.7 L125.1 80.6 L126.9 79.3 M115.8 95.6 L114.6 97.4 L114.6 99.6 L113.2 101.3 L112.1 103.2 L110.3 104.5 L108.4 105.7 L107.1 107.4 L106.7 109.6 M114.9 98.3 L116.2 96.6 L116.9 94.5 L117.1 92.3 L117.3 90.1 L116.6 88.0 L115.5 86.1 M134.3 156.7 L133.4 154.7 L133.6 152.5 L134.1 150.3 L133.4 148.2 L133.9 146.1 L133.8 143.9 L132.3 142.2 L131.3 140.3 L130.2 138.4 M137.5 159.4 L135.4 159.0 L133.2 159.2 L131.2 160.1 M147.3 167.8 L145.1 167.3 L142.9 167.4 L140.7 167.0 L139.0 165.6 L136.9 165.2 L135.3 163.7 M150.0 168.7 L149.7 166.5 L148.3 164.8 L147.4 162.8 L145.9 161.2 M152.8 169.6 L150.8 168.8 L148.6 168.3 L146.5 167.7 L145.0 166.1 M155.6 170.6 L155.2 168.4 L155.6 166.2 L157.3 164.8 L158.3 162.9 L159.8 161.2 L161.0 159.4 L163.2 158.9 M162.5 174.3 L160.4 174.0 L158.6 172.6 L157.4 170.8 L156.1 169.1 L154.4 167.7 L152.2 167.2 L150.1 166.7 L148.3 165.3 M110.2 138.1 L110.6 136.0 L111.5 134.0 L112.1 131.9 L112.5 129.7 L113.1 127.6 L114.4 125.8 M112.5 140.0 L114.7 139.8 L116.5 138.4 L118.5 137.6 L120.4 136.6 L122.3 135.4 L123.6 133.7 L125.5 132.5 L127.7 132.2 L129.9 132.5 M114.9 141.9 L112.9 140.9 L110.7 140.6 L108.5 141.0 L107.1 142.7 L105.0 143.1 L102.8 142.6 M117.2 143.7 L118.0 141.7 L119.7 140.3 L121.9 140.3 L123.7 139.0 L125.7 138.0 M119.5 145.6 L117.3 145.9 L115.1 145.8 L113.1 144.9 L111.1 143.9 L109.0 143.4 L106.8 143.2 L104.7 143.8 M118.1 142.8 L117.9 145.0 L116.7 146.8 L115.4 148.6 L113.8 150.0 L111.6 150.1 L109.4 150.7 L107.3 151.2 L105.1 151.5 L103.1 152.5 M116.7 140.0 L118.7 139.1 L120.5 137.8 L122.7 138.0 L124.9 138.3 L127.0 137.7 L128.4 136.0 L128.7 133.8 L129.5 131.7 M51.0 214.1 L49.2 215.4 L47.0 215.3 L44.8 215.5 L42.8 216.4 M63.5 217.8 L61.6 218.9 L59.6 220.0 L57.5 220.6 L55.3 220.7 L53.3 219.8 L51.6 218.4 M64.9 219.6 L62.7 219.2 L60.7 218.3 L58.5 218.0 L56.6 217.0 L54.4 216.4 L52.9 214.9 L51.2 213.5 L49.9 211.7 M69.5 227.0 L71.0 228.6 L71.6 230.7 L73.0 232.4 L73.2 234.6 L72.2 236.6 M70.4 228.9 L72.4 228.0 L73.5 226.1 L74.1 224.0 L75.3 222.1 L76.4 220.2 L77.8 218.6 L79.3 217.0 M2.8 123.3 L0.6 123.7 L-1.3 124.6 L-3.5 124.5 M5.6 125.2 L4.0 126.7 L1.9 127.5 L-0.3 127.6 L-2.2 128.7 L-4.3 128.9 L-6.3 130.0 L-7.4 131.8 L-9.2 133.2 L-11.3 133.7 M8.4 127.0 L6.2 127.3 L4.5 128.7 L2.4 129.2 L0.7 130.6 L-0.6 132.4 L-0.8 134.6 L-2.1 136.4 L-2.9 138.4 M19.5 134.4 L19.0 132.3 L18.6 130.1 L18.1 128.0 L19.0 126.0 L18.8 123.8 L17.8 121.8 L17.8 119.6 M13.0 98.3 L13.3 100.5 L13.8 102.6 L15.2 104.3 L15.6 106.5 L16.8 108.3 M18.6 100.2 L19.7 98.3 L21.0 96.6 L22.4 94.8 M60.2 121.5 L58.2 120.5 L56.0 120.6 L53.9 120.0 L51.8 120.2 L49.7 121.0 M62.1 123.3 L60.4 124.7 L58.4 125.7 L56.2 126.1 L54.2 127.0 L52.1 127.5 M63.9 125.2 L63.1 123.2 L63.4 121.0 L63.9 118.8 L65.6 117.4 L67.2 115.9 L68.1 113.9 L69.6 112.3 L71.6 111.3 L72.9 109.6 M217.6 151.1 L219.6 150.2 L221.5 149.1 L223.2 147.7 L225.4 147.6 M225.0 156.7 L226.2 154.8 L226.0 152.6 L225.1 150.6 L224.8 148.4 L223.9 146.4 L222.9 144.5 L220.9 143.4 L219.1 142.3 M219.5 165.9 L217.7 167.2 L216.8 169.2 L215.8 171.2 L215.3 173.3 L214.8 175.5 M216.7 170.6 L218.9 170.6 L221.1 170.6 L223.0 171.8 L224.3 173.5 L226.4 174.0 L228.5 173.3 M230.6 178.9 L231.6 180.8 L232.8 182.7 L234.0 184.5 L236.0 185.3 L238.0 186.3 M228.7 182.6 L227.2 184.2 L225.3 185.2 L223.1 185.0 L220.9 185.2 L218.7 185.1 L216.5 185.4 L214.3 185.6 L212.3 184.8 M225.0 190.0 L222.9 190.6 L221.2 192.0 L219.6 193.5 L218.4 195.3 M221.3 192.8 L220.1 190.9 L218.9 189.1 L218.6 186.9 L218.3 184.7 L217.2 182.9 M213.9 198.3 L215.3 200.1 L216.3 202.0 L217.8 203.6 L218.2 205.8 L218.3 208.0 L218.6 210.2 M154.7 250.2 L152.6 249.5 L150.4 249.2 L148.3 248.5 L146.1 248.8 L143.9 249.1 L141.8 249.4 L140.3 251.0 M156.5 247.9 L154.5 246.9 L152.4 246.3 L150.3 246.9 L148.1 247.2 L146.1 248.1 L144.8 249.9 L143.0 251.1 L141.2 252.4 L139.2 253.4 M165.8 256.7 L166.7 254.7 L166.8 252.5 L166.0 250.4 L165.5 248.2 L165.7 246.1 L164.5 244.2 M171.3 253.0 L169.5 251.7 L168.2 249.9 L166.6 248.4 L164.8 247.1 L163.9 245.1 L163.2 243.0 L163.8 240.9 M174.1 251.1 L176.3 251.0 L178.3 251.9 L180.0 253.3 M177.4 244.6 L178.1 242.6 L177.7 240.4 L177.4 238.2 L176.1 236.4 L176.1 234.2 L176.1 232.0 L176.6 229.9 L177.6 227.9 M177.8 240.0 L179.9 239.5 L182.0 238.8 L183.8 237.4 L185.9 236.9 L188.0 237.6 L190.1 236.9 L191.3 235.1 L192.5 233.3 L192.4 231.1 M178.3 235.4 L176.6 236.8 L175.8 238.9 L175.7 241.1 L176.5 243.1" fill="none" stroke="#3b3b3b" stroke-width="1.1" stroke-linejoin="round" stroke-linecap="round"/><path d="M102.1 138.1h0.9v1.2h-0.9zM27.4 197.2h1.0v1.5h-1.0zM171.7 164.3h0.8v0.9h-0.8zM191.8 31.5h2.3v0.8h-2.3zM144.7 167.6h1.0v1.0h-1.0zM7.3 93.3h0.9v1.5h-0.9zM116.4 82.2h0.8v0.9h-0.8zM184.0 183.1h1.0v1.0h-1.0zM65.4 183.1h1.7v0.8h-1.7zM5.7 324.1h2.3v1.9h-2.3zM227.4 20.3h1.0v1.0h-1.0zM125.4 50.0h1.0v1.0h-1.0zM37.3 216.7h1.8v1.9h-1.8zM275.8 51.1h0.8v0.9h-0.8zM155.5 188.0h0.8v0.8h-0.8zM225.8 147.1h0.8v1.5h-0.8zM50.4 119.0h1.2v2.0h-1.2zM132.6 59.8h1.4v1.2h-1.4zM104.6 236.0h0.9v0.9h-0.9zM233.5 158.9h3.2v1.5h-3.2zM104.0 140.5h0.8v1.0h-0.8zM42.1 266.4h0.8v1.5h-0.8zM61.8 193.3h1.4v1.5h-1.4zM146.9 76.9h0.8v0.9h-0.8zM54.0 158.5h1.4v1.0h-1.4zM65.7 188.3h1.4v0.9h-1.4zM158.4 177.1h0.8v1.2h-0.8zM90.5 158.8h2.3v1.2h-2.3zM254.3 85.9h0.9v0.9h-0.9zM106.3 99.6h2.3v0.8h-2.3zM127.0 56.3h1.7v0.9h-1.7zM50.3 154.4h1.7v0.8h-1.7zM88.9 8.3h0.8v0.9h-0.8zM49.0 209.1h1.4v0.9h-1.4zM206.5 31.2h1.2v0.9h-1.2zM53.2 112.5h1.4v2.0h-1.4zM239.8 148.7h1.0v2.0h-1.0zM70.8 178.9h2.3v1.2h-2.3zM229.2 40.8h1.4v1.0h-1.4zM79.3 194.1h2.3v1.5h-2.3zM29.7 99.0h1.4v1.5h-1.4zM170.8 129.6h2.1v2.8h-2.1zM93.5 104.6h1.7v1.5h-1.7zM3.3 297.4h2.3v2.0h-2.3zM174.0 126.6h1.0v1.2h-1.0zM254.4 120.9h1.4v1.5h-1.4zM84.6 233.0h1.4v1.2h-1.4zM33.3 154.8h2.3v2.0h-2.3zM227.0 19.3h1.4v1.0h-1.4zM215.2 153.1h1.7v2.0h-1.7zM40.8 143.8h1.7v1.5h-1.7zM140.7 149.8h3.9v1.7h-3.9zM151.5 174.4h0.9v0.8h-0.9zM46.0 83.9h0.9v0.8h-0.9zM64.0 122.9h2.3v1.5h-2.3zM63.1 234.6h1.2v2.0h-1.2zM35.2 212.6h1.4v2.0h-1.4zM48.7 191.5h0.9v2.0h-0.9zM136.8 218.9h0.9v0.8h-0.9zM198.1 162.2h2.8v1.5h-2.8zM152.4 170.8h1.0v1.0h-1.0zM6.7 101.2h1.4v0.9h-1.4zM103.2 178.9h1.7v1.2h-1.7zM91.9 80.8h1.0v0.8h-1.0zM66.6 219.5h2.3v0.8h-2.3zM44.0 194.7h1.2v2.0h-1.2zM227.9 63.7h1.4v2.0h-1.4zM241.6 149.6h1.0v0.8h-1.0zM188.5 150.9h2.3v0.9h-2.3zM168.4 198.9h0.8v0.9h-0.8zM58.4 85.8h1.2v0.8h-1.2zM256.2 90.1h1.4v1.5h-1.4zM26.6 72.9h0.9v0.8h-0.9zM117.9 232.5h1.2v0.8h-1.2zM194.7 155.7h2.3v0.8h-2.3zM175.6 171.0h2.1v2.8h-2.1zM121.9 22.7h2.3v1.0h-2.3zM33.9 214.8h2.3v1.5h-2.3zM224.1 135.9h0.8v2.0h-0.8zM215.3 184.5h0.9v1.5h-0.9zM9.9 167.2h0.9v1.5h-0.9zM2.2 254.9h1.0v1.0h-1.0zM166.8 245.8h1.4v2.0h-1.4zM108.2 95.6h1.4v0.8h-1.4zM-2.8 126.6h1.0v0.9h-1.0zM111.5 92.2h1.8v2.3h-1.8zM43.9 151.9h0.9v1.0h-0.9zM148.7 120.6h2.8v2.3h-2.8zM162.8 228.0h1.7v1.0h-1.7zM36.8 238.6h2.3v2.0h-2.3zM57.3 43.9h1.2v1.5h-1.2zM30.0 170.6h2.3v1.5h-2.3zM167.8 221.1h1.4v0.9h-1.4zM68.8 233.5h1.4v2.0h-1.4zM233.8 149.0h2.3v2.0h-2.3zM51.7 6.4h0.8v1.5h-0.8zM5.2 278.9h1.2v2.0h-1.2zM17.3 125.5h0.8v0.9h-0.8zM110.2 107.2h0.8v1.0h-0.8zM8.0 272.8h0.8v0.8h-0.8zM232.0 148.1h1.7v1.0h-1.7zM47.0 278.4h1.2v2.0h-1.2zM9.3 51.0h0.9v2.0h-0.9zM81.1 235.1h0.8v1.2h-0.8zM38.6 147.2h2.8v1.9h-2.8zM33.2 159.2h1.0v1.2h-1.0zM30.6 184.3h1.7v1.5h-1.7zM54.4 216.9h0.9v0.9h-0.9zM207.7 191.9h1.4v0.8h-1.4zM195.0 165.1h2.3v0.8h-2.3zM86.5 224.8h1.4v1.2h-1.4zM225.3 161.4h0.8v1.2h-0.8zM188.9 208.5h1.4v2.0h-1.4zM170.6 124.8h0.9v2.0h-0.9zM187.7 9.6h0.9v1.2h-0.9zM66.7 222.8h1.4v2.0h-1.4zM218.8 154.3h2.3v1.5h-2.3zM123.3 92.2h0.8v0.8h-0.8zM20.6 297.5h1.8v2.8h-1.8zM71.8 246.9h1.2v1.0h-1.2zM172.7 188.8h1.2v0.9h-1.2zM61.5 214.3h1.8v2.8h-1.8zM130.0 52.1h1.0v2.0h-1.0zM97.0 95.0h1.2v0.9h-1.2zM85.7 94.7h0.8v0.9h-0.8zM75.0 175.9h1.2v1.5h-1.2zM34.8 197.4h2.3v0.8h-2.3zM248.8 109.8h2.1v3.8h-2.1zM13.2 268.2h0.8v1.5h-0.8zM251.3 150.5h1.4v2.0h-1.4zM213.4 160.1h0.9v2.0h-0.9zM72.2 222.7h2.3v1.5h-2.3zM215.7 163.6h0.8v0.9h-0.8zM120.9 119.6h1.4v1.5h-1.4zM274.9 32.9h1.4v1.2h-1.4zM30.7 220.4h1.7v1.2h-1.7zM35.5 141.7h1.0v1.0h-1.0zM8.9 276.7h2.3v1.2h-2.3zM4.7 241.0h0.9v1.0h-0.9zM260.6 6.8h1.4v0.9h-1.4zM39.0 216.6h0.9v1.0h-0.9zM19.4 253.8h0.9v0.8h-0.9zM150.4 192.3h2.3v0.9h-2.3zM225.5 129.2h1.4v1.5h-1.4zM134.8 120.3h1.2v0.8h-1.2zM234.4 80.7h2.1v2.3h-2.1zM303.9 43.1h5.3v1.9h-5.3zM146.1 249.3h1.2v1.5h-1.2zM1.4 356.3h1.7v0.8h-1.7zM137.4 17.5h1.7v0.9h-1.7zM108.7 141.5h0.8v2.0h-0.8zM229.6 95.9h2.3v1.5h-2.3zM29.2 146.9h2.3v1.5h-2.3zM17.2 140.3h2.3v0.9h-2.3zM142.6 110.1h0.8v1.0h-0.8zM212.7 193.9h1.4v1.0h-1.4zM141.2 207.8h1.0v1.5h-1.0zM58.6 111.0h1.2v2.0h-1.2zM287.5 57.6h1.2v0.8h-1.2zM65.9 204.7h1.0v0.8h-1.0zM76.8 234.6h0.9v1.5h-0.9zM5.2 101.5h1.4v0.8h-1.4zM106.1 92.2h0.9v1.5h-0.9zM152.9 35.4h1.0v2.0h-1.0zM267.6 121.9h1.4v0.9h-1.4zM22.6 61.7h1.4v0.9h-1.4zM122.9 196.6h0.9v1.0h-0.9zM148.1 199.0h2.3v1.2h-2.3zM69.3 122.3h1.4v1.0h-1.4zM102.5 213.8h1.7v2.0h-1.7zM193.9 183.5h1.2v0.8h-1.2zM217.1 125.2h0.8v0.9h-0.8zM9.3 257.6h0.9v1.2h-0.9zM131.4 28.1h5.3v1.9h-5.3zM0.1 33.8h0.9v1.2h-0.9zM178.2 230.9h1.0v1.0h-1.0zM245.8 73.5h1.4v0.9h-1.4zM99.2 188.3h3.2v3.8h-3.2zM31.7 162.7h0.8v2.0h-0.8zM277.6 98.3h3.9v2.8h-3.9zM51.8 227.0h1.7v1.2h-1.7zM220.6 83.2h1.0v0.9h-1.0zM102.7 59.3h0.8v2.0h-0.8zM83.3 235.2h1.2v2.0h-1.2zM145.4 94.4h1.0v0.9h-1.0zM234.0 137.0h1.7v1.5h-1.7zM151.6 75.1h1.4v2.0h-1.4zM171.7 122.0h1.2v1.0h-1.2zM2.1 166.1h0.9v0.8h-0.9zM30.0 195.8h1.4v1.5h-1.4zM57.4 56.9h0.9v1.2h-0.9zM200.7 155.4h1.4v2.0h-1.4zM195.6 94.0h1.7v1.2h-1.7zM142.1 177.7h1.7v0.8h-1.7zM209.4 42.9h3.9v1.9h-3.9zM85.6 231.1h1.2v1.5h-1.2zM294.4 90.4h1.0v0.8h-1.0zM32.6 104.1h0.9v1.0h-0.9zM67.2 116.1h1.4v2.0h-1.4zM85.0 95.9h1.0v1.5h-1.0zM60.0 41.1h1.2v2.0h-1.2zM181.6 51.0h2.3v1.0h-2.3zM72.2 269.5h1.0v1.5h-1.0zM0.3 32.6h1.4v1.2h-1.4zM77.4 234.5h0.9v1.0h-0.9zM129.5 42.6h1.7v2.0h-1.7zM70.6 209.9h0.9v1.2h-0.9zM24.2 171.4h1.7v2.0h-1.7zM283.2 116.5h0.8v1.2h-0.8zM4.8 182.7h0.8v0.8h-0.8zM3.8 271.7h1.4v2.0h-1.4zM16.6 227.1h0.8v0.8h-0.8zM112.6 124.5h0.9v0.9h-0.9zM159.7 157.4h0.8v0.8h-0.8zM163.7 168.6h1.2v0.9h-1.2zM77.1 209.3h0.8v0.9h-0.8zM39.8 216.1h1.2v1.5h-1.2zM11.8 257.5h1.4v1.5h-1.4zM34.6 23.2h1.2v1.0h-1.2zM156.9 117.6h1.7v0.9h-1.7zM222.6 181.0h1.7v0.9h-1.7zM151.0 169.8h3.9v1.5h-3.9zM137.1 141.6h1.0v2.0h-1.0zM171.7 190.4h1.2v1.5h-1.2zM166.1 198.0h1.7v2.0h-1.7zM260.0 13.2h0.8v1.2h-0.8zM104.4 132.5h2.3v1.5h-2.3zM241.6 126.9h1.0v1.2h-1.0zM182.6 163.5h0.8v2.0h-0.8zM7.8 307.1h1.0v0.8h-1.0zM214.3 151.0h2.3v1.5h-2.3zM144.7 121.1h1.0v2.0h-1.0zM68.9 223.6h1.0v0.8h-1.0zM166.9 152.6h0.8v2.0h-0.8zM211.4 158.6h0.9v0.8h-0.9zM54.9 171.4h2.3v2.0h-2.3zM300.1 85.6h1.7v1.5h-1.7zM13.1 320.2h2.3v1.5h-2.3zM0.6 315.4h0.8v1.5h-0.8zM2.5 353.5h1.4v1.0h-1.4zM141.8 121.7h0.8v0.9h-0.8zM3.3 98.6h0.8v1.2h-0.8zM280.2 94.4h1.4v1.2h-1.4zM198.9 6.4h2.3v1.2h-2.3zM221.5 147.9h1.2v0.8h-1.2zM104.2 86.6h0.8v2.0h-0.8zM135.8 153.6h1.7v1.5h-1.7zM166.4 250.5h0.9v2.0h-0.9zM164.5 133.1h1.7v1.0h-1.7zM129.3 97.9h0.9v1.5h-0.9zM17.3 149.2h1.4v0.9h-1.4zM32.1 299.6h1.2v1.5h-1.2zM137.1 76.2h1.0v2.0h-1.0zM75.3 7.5h0.9v1.5h-0.9zM160.3 243.1h1.4v1.0h-1.4zM220.2 153.3h1.7v1.5h-1.7zM61.5 78.6h1.0v2.0h-1.0zM140.8 135.2h1.0v1.2h-1.0zM227.5 179.5h0.8v0.8h-0.8zM290.5 98.1h1.4v1.5h-1.4zM234.2 145.4h2.1v2.8h-2.1zM7.5 161.7h1.2v0.8h-1.2zM16.8 272.0h0.9v2.0h-0.9zM216.5 76.6h1.0v0.9h-1.0zM193.2 63.5h1.0v1.5h-1.0zM6.9 222.9h1.0v0.8h-1.0zM111.3 242.3h3.2v2.8h-3.2zM166.7 113.7h3.9v1.9h-3.9zM51.8 209.9h0.8v1.5h-0.8zM50.1 72.0h2.1v1.7h-2.1zM124.2 135.8h1.2v1.5h-1.2zM192.0 183.4h1.2v0.8h-1.2zM54.5 247.3h2.3v0.9h-2.3zM39.0 276.8h2.3v0.9h-2.3zM91.0 23.1h0.9v1.2h-0.9zM156.0 151.0h0.9v1.2h-0.9zM84.5 186.9h1.4v1.0h-1.4zM109.9 215.0h0.8v0.8h-0.8zM145.8 175.6h1.7v1.5h-1.7zM171.3 146.0h2.8v1.9h-2.8zM274.8 69.0h3.2v3.8h-3.2zM175.9 144.5h2.3v0.8h-2.3zM109.0 145.9h1.0v0.8h-1.0zM166.4 195.9h1.0v2.0h-1.0zM147.1 166.2h1.4v0.8h-1.4zM70.8 236.8h0.8v1.0h-0.8zM29.3 118.9h2.3v2.0h-2.3zM151.2 87.4h1.0v1.0h-1.0zM118.6 123.2h1.7v1.0h-1.7zM43.0 150.8h2.3v2.3h-2.3zM220.2 65.3h0.9v0.8h-0.9zM10.3 281.2h0.8v1.2h-0.8zM272.6 16.5h0.9v2.0h-0.9zM7.6 128.3h0.9v1.5h-0.9zM242.6 155.4h0.9v1.2h-0.9zM226.4 57.9h0.9v2.0h-0.9zM32.4 230.0h1.4v1.5h-1.4zM53.6 138.5h1.0v2.0h-1.0zM243.7 116.4h1.4v1.5h-1.4zM59.3 218.0h2.3v1.7h-2.3zM36.3 229.3h0.8v1.0h-0.8zM283.0 106.4h1.2v0.9h-1.2zM30.4 165.2h0.9v2.0h-0.9zM264.1 127.2h1.7v1.2h-1.7zM284.1 93.9h0.8v2.0h-0.8zM224.1 7.3h0.8v1.0h-0.8zM223.4 161.4h0.8v0.8h-0.8zM68.6 89.5h1.7v1.0h-1.7zM120.7 7.3h1.2v2.0h-1.2zM233.5 137.7h0.8v0.8h-0.8zM21.9 162.1h1.7v2.0h-1.7zM135.5 187.0h1.0v1.0h-1.0zM18.0 234.0h1.0v1.2h-1.0zM211.1 194.0h1.4v2.0h-1.4zM113.3 135.1h1.0v0.9h-1.0zM6.3 140.4h1.2v1.2h-1.2zM196.4 152.8h0.8v0.8h-0.8zM254.4 10.5h0.9v1.0h-0.9zM41.3 179.4h3.9v1.5h-3.9zM31.5 1.0h1.0v1.0h-1.0zM135.7 110.8h1.4v1.2h-1.4zM100.0 76.7h0.8v1.5h-0.8zM153.7 132.9h0.9v1.0h-0.9zM154.8 134.9h0.9v1.0h-0.9zM4.4 329.1h1.4v0.9h-1.4zM229.3 149.4h2.3v2.0h-2.3zM42.1 6.3h0.8v1.0h-0.8zM58.1 177.0h1.0v1.2h-1.0zM35.7 231.1h1.7v0.8h-1.7zM248.3 74.5h1.0v0.8h-1.0zM303.9 94.6h1.7v1.5h-1.7zM64.6 222.9h1.4v1.5h-1.4zM143.4 159.8h2.3v1.2h-2.3zM240.5 136.9h1.4v1.2h-1.4zM205.3 157.5h1.4v0.8h-1.4zM233.7 139.2h1.4v1.2h-1.4zM30.3 146.0h1.7v1.0h-1.7zM137.7 160.2h1.2v1.0h-1.2zM15.1 156.6h2.3v0.9h-2.3zM63.8 82.2h0.8v1.5h-0.8zM231.9 9.9h1.4v2.0h-1.4zM105.2 74.3h1.7v2.0h-1.7zM7.1 262.1h1.2v1.0h-1.2zM154.0 111.7h0.8v2.0h-0.8zM59.6 95.5h0.8v0.9h-0.8zM167.1 104.5h0.8v1.2h-0.8zM32.2 132.7h1.7v1.0h-1.7zM217.4 166.7h1.7v1.0h-1.7zM250.9 117.1h1.2v1.0h-1.2zM119.8 99.7h0.8v0.9h-0.8zM7.6 316.4h0.9v1.5h-0.9zM55.6 54.8h2.3v3.8h-2.3zM226.1 153.1h2.3v1.2h-2.3zM156.9 182.0h1.4v2.0h-1.4zM164.7 185.4h0.9v0.8h-0.9zM180.9 135.4h1.4v1.5h-1.4zM62.9 185.8h0.8v0.9h-0.8zM33.9 86.0h0.9v1.0h-0.9zM58.6 186.6h2.3v1.5h-2.3zM26.2 139.9h1.2v1.2h-1.2zM8.2 112.2h1.4v0.9h-1.4zM79.1 152.0h1.2v0.8h-1.2zM101.4 30.2h1.0v1.0h-1.0zM38.9 137.0h0.9v0.9h-0.9zM105.9 138.2h2.3v1.0h-2.3zM33.5 273.8h1.4v0.9h-1.4zM253.7 108.6h1.4v1.2h-1.4zM61.5 79.9h2.3v1.5h-2.3zM20.6 274.1h1.0v2.0h-1.0zM157.6 42.3h2.3v0.8h-2.3zM185.1 194.2h1.4v0.9h-1.4zM203.1 152.3h0.9v0.9h-0.9zM90.3 235.3h1.7v1.2h-1.7zM172.9 235.6h1.0v0.8h-1.0zM228.5 118.2h1.0v1.5h-1.0zM302.8 97.3h2.3v1.2h-2.3zM247.9 131.6h1.7v1.0h-1.7zM34.6 82.6h3.9v1.9h-3.9zM48.5 133.2h1.7v1.2h-1.7zM67.8 67.7h1.2v1.5h-1.2zM47.9 167.8h1.0v1.0h-1.0zM7.4 120.5h1.2v0.9h-1.2zM167.3 234.5h0.8v1.2h-0.8zM173.9 254.7h5.3v3.8h-5.3zM21.4 182.6h1.4v1.2h-1.4zM156.3 164.2h2.3v0.8h-2.3zM178.3 40.5h0.8v0.8h-0.8zM259.7 120.7h0.8v2.0h-0.8zM51.6 195.2h1.8v1.7h-1.8zM28.1 23.6h2.3v0.9h-2.3zM213.8 149.5h0.9v1.0h-0.9zM117.5 1.7h1.2v2.0h-1.2zM47.6 130.2h1.7v0.9h-1.7zM228.0 29.1h1.4v2.0h-1.4zM253.8 88.1h1.0v0.8h-1.0zM54.9 158.1h1.7v1.0h-1.7zM4.6 242.8h0.9v2.0h-0.9zM22.3 26.9h1.4v2.0h-1.4zM117.4 62.0h1.2v1.0h-1.2zM109.0 99.3h0.9v0.9h-0.9zM9.2 157.1h1.2v1.5h-1.2zM28.6 170.5h2.3v0.8h-2.3zM155.1 206.3h1.4v2.0h-1.4zM268.8 30.5h2.3v0.9h-2.3zM295.9 105.1h1.4v1.5h-1.4zM39.0 238.7h0.9v1.5h-0.9zM28.1 49.7h0.9v1.2h-0.9zM155.9 34.8h0.9v2.0h-0.9zM85.2 230.5h1.7v1.5h-1.7zM267.7 119.9h1.7v1.5h-1.7zM17.0 100.6h0.9v1.2h-0.9zM11.9 283.0h0.8v1.0h-0.8zM6.8 71.1h1.0v1.0h-1.0zM224.2 151.8h1.7v0.9h-1.7zM76.1 17.3h1.0v1.2h-1.0zM252.4 121.9h2.3v2.0h-2.3zM219.8 154.9h1.4v2.0h-1.4zM4.5 93.5h1.0v1.0h-1.0zM277.1 124.7h1.7v2.0h-1.7zM68.8 93.1h2.3v0.9h-2.3zM287.1 58.7h2.3v0.9h-2.3zM303.6 11.5h1.2v2.0h-1.2zM61.2 193.5h1.7v1.2h-1.7zM121.0 160.8h0.9v1.2h-0.9zM63.5 219.6h1.4v1.2h-1.4zM258.6 41.6h0.9v2.0h-0.9zM21.0 101.0h1.4v0.8h-1.4zM91.9 21.0h1.7v1.5h-1.7zM97.9 156.4h2.3v1.5h-2.3zM274.8 125.0h1.2v1.0h-1.2zM33.0 149.1h2.3v0.8h-2.3zM288.0 103.6h1.2v1.5h-1.2zM41.3 106.2h1.7v1.5h-1.7zM134.4 148.4h1.4v1.5h-1.4zM286.3 89.0h2.8v1.9h-2.8zM41.0 116.8h1.2v1.2h-1.2zM197.0 168.0h0.9v2.0h-0.9zM152.3 176.4h1.7v0.8h-1.7zM152.6 135.1h1.4v1.2h-1.4zM10.9 138.7h0.8v1.2h-0.8zM23.4 289.8h0.9v1.2h-0.9zM73.4 85.2h3.9v1.9h-3.9zM68.7 200.7h1.4v1.0h-1.4zM37.9 163.9h1.0v2.0h-1.0zM99.8 41.2h1.7v1.5h-1.7zM185.1 182.1h1.2v0.9h-1.2zM110.3 83.4h2.3v1.0h-2.3zM13.1 127.2h1.2v1.0h-1.2zM10.3 291.7h2.3v1.2h-2.3zM57.1 268.2h1.7v1.0h-1.7zM267.5 65.2h2.3v1.2h-2.3zM3.2 320.3h0.8v1.0h-0.8zM170.8 256.4h0.8v1.0h-0.8zM249.1 19.7h0.9v2.0h-0.9zM152.7 230.5h0.8v1.0h-0.8zM194.9 131.3h2.1v2.8h-2.1zM9.8 126.5h0.9v0.9h-0.9zM45.6 207.5h1.2v0.8h-1.2zM72.2 92.4h1.7v0.9h-1.7zM185.7 173.8h0.9v1.5h-0.9zM203.7 194.7h1.0v1.5h-1.0zM22.4 121.8h2.3v0.9h-2.3zM194.5 63.5h0.8v1.0h-0.8zM16.1 111.3h1.4v0.9h-1.4zM151.4 218.3h1.7v1.0h-1.7zM52.3 212.8h2.3v1.2h-2.3zM83.3 65.4h1.2v1.0h-1.2zM248.7 136.8h0.8v1.5h-0.8zM72.1 133.8h1.7v1.0h-1.7zM32.4 208.0h1.2v1.2h-1.2zM57.9 12.3h1.2v0.8h-1.2zM163.6 17.9h2.3v0.9h-2.3zM10.1 196.5h2.3v1.2h-2.3zM133.0 95.7h2.3v1.5h-2.3zM136.0 161.0h1.2v0.9h-1.2zM144.8 106.8h2.3v1.2h-2.3zM63.8 187.1h0.9v0.8h-0.9zM12.3 145.8h0.9v2.0h-0.9zM17.5 108.4h1.7v1.5h-1.7zM112.5 82.3h0.8v0.9h-0.8zM9.2 164.3h1.4v1.2h-1.4zM40.1 282.3h0.9v0.9h-0.9zM260.1 41.6h1.0v2.0h-1.0zM7.5 293.0h0.8v1.5h-0.8zM25.4 138.6h2.3v2.0h-2.3zM56.5 64.6h0.9v1.2h-0.9zM113.5 40.5h1.2v1.0h-1.2zM147.8 106.1h0.9v0.9h-0.9zM43.6 165.1h2.3v1.0h-2.3zM244.7 110.0h1.0v1.0h-1.0zM63.6 179.0h1.7v1.0h-1.7zM267.9 94.1h1.7v1.0h-1.7zM142.2 252.0h2.3v1.0h-2.3zM17.6 181.6h1.0v2.0h-1.0zM43.0 239.2h1.4v1.5h-1.4zM70.8 263.2h2.3v0.8h-2.3zM22.7 293.6h1.0v0.9h-1.0zM224.8 135.8h1.7v2.0h-1.7zM12.9 138.9h1.4v2.0h-1.4zM47.5 186.7h2.3v0.9h-2.3zM42.5 225.9h0.8v0.8h-0.8zM26.6 131.3h0.9v1.5h-0.9zM209.7 56.5h2.3v0.8h-2.3zM193.8 61.6h2.3v2.0h-2.3zM48.7 32.3h0.8v1.5h-0.8zM43.3 176.7h1.4v1.2h-1.4zM199.1 154.8h1.4v0.8h-1.4zM287.0 8.2h1.2v1.5h-1.2zM293.6 13.4h1.0v1.2h-1.0zM93.8 233.9h0.9v1.0h-0.9zM26.2 160.0h0.9v1.5h-0.9zM237.3 131.4h1.2v0.8h-1.2zM142.5 257.7h1.0v1.0h-1.0zM114.5 221.4h1.0v0.9h-1.0zM7.6 286.8h1.4v1.5h-1.4zM38.4 58.7h1.2v1.0h-1.2zM268.5 4.0h1.0v2.0h-1.0zM27.7 221.1h1.7v0.8h-1.7zM58.8 21.4h1.0v0.9h-1.0zM37.5 204.2h1.4v0.9h-1.4zM64.3 117.6h1.7v0.8h-1.7zM290.5 98.7h1.4v0.9h-1.4zM0.2 23.4h1.0v1.2h-1.0zM76.9 51.9h1.4v1.0h-1.4zM234.2 8.8h1.0v2.0h-1.0zM139.4 200.4h1.0v2.0h-1.0zM131.9 88.8h1.0v1.0h-1.0zM5.4 160.8h1.4v2.0h-1.4zM80.8 183.2h2.3v1.2h-2.3zM9.8 98.3h1.4v0.8h-1.4zM29.5 188.6h0.9v1.2h-0.9zM167.0 196.9h2.3v2.0h-2.3zM293.2 16.5h2.3v0.8h-2.3zM140.4 245.2h1.7v1.0h-1.7zM7.1 228.2h2.3v0.9h-2.3zM239.6 140.1h0.8v0.9h-0.8zM64.4 234.5h1.2v0.9h-1.2zM42.1 143.4h0.8v1.5h-0.8zM124.2 165.3h1.2v0.8h-1.2zM0.2 213.4h1.2v0.8h-1.2zM159.9 217.9h1.7v0.8h-1.7zM268.2 105.7h0.9v2.0h-0.9zM61.8 176.9h2.3v0.8h-2.3zM207.2 191.1h1.2v1.0h-1.2zM101.7 105.9h1.2v1.5h-1.2zM161.5 223.4h1.7v2.0h-1.7zM81.9 167.8h3.9v2.8h-3.9zM176.8 178.5h0.8v1.0h-0.8zM227.0 173.6h1.7v1.2h-1.7zM48.8 229.8h1.4v0.9h-1.4zM64.2 97.7h1.0v0.8h-1.0zM13.8 55.1h0.9v1.2h-0.9zM92.8 181.5h1.0v0.8h-1.0zM149.2 112.2h1.7v1.5h-1.7zM0.5 131.4h1.2v1.2h-1.2zM44.1 168.5h0.8v2.0h-0.8zM133.6 217.3h1.4v1.0h-1.4zM282.4 131.4h2.3v2.3h-2.3zM44.9 262.7h0.8v0.8h-0.8zM31.7 16.3h1.7v1.2h-1.7zM154.4 144.1h2.3v0.9h-2.3zM157.2 71.3h1.0v0.9h-1.0zM243.8 4.0h0.9v1.0h-0.9zM85.4 87.8h0.8v0.8h-0.8zM288.1 107.7h2.3v1.2h-2.3zM150.0 73.3h1.0v0.8h-1.0zM122.6 157.0h1.0v1.2h-1.0zM25.0 254.7h0.9v1.0h-0.9zM12.6 39.6h2.1v2.8h-2.1zM114.9 98.5h0.8v2.0h-0.8zM113.4 144.5h1.2v1.0h-1.2zM161.1 190.1h1.2v0.9h-1.2zM64.5 185.8h1.4v1.5h-1.4zM170.4 130.5h1.7v1.2h-1.7zM139.4 65.2h1.2v1.5h-1.2zM85.9 196.6h1.2v1.2h-1.2zM67.6 232.9h0.9v1.5h-0.9zM128.5 181.2h1.0v1.0h-1.0zM218.0 146.5h1.7v1.2h-1.7zM46.5 168.6h1.7v1.0h-1.7zM178.3 227.1h2.3v0.8h-2.3zM62.1 177.1h1.0v1.5h-1.0zM304.9 21.9h1.8v2.3h-1.8zM55.1 212.0h1.4v2.0h-1.4zM83.7 90.7h1.7v0.8h-1.7zM67.6 224.9h1.0v1.0h-1.0zM13.6 101.6h1.2v1.5h-1.2zM145.9 119.8h2.3v2.0h-2.3zM221.8 147.7h2.1v1.5h-2.1zM261.5 114.3h0.9v1.5h-0.9zM292.5 95.7h2.3v1.7h-2.3zM93.1 76.2h2.3v1.2h-2.3zM16.0 139.2h1.0v1.5h-1.0zM203.3 165.8h1.0v0.9h-1.0zM145.4 83.1h0.9v1.0h-0.9zM12.8 54.0h0.8v1.2h-0.8zM16.5 296.3h1.2v0.9h-1.2zM41.1 127.1h1.2v2.0h-1.2zM14.2 91.7h1.7v1.0h-1.7zM212.7 187.6h0.9v0.8h-0.9zM20.0 62.4h2.3v2.0h-2.3zM9.4 180.0h1.2v1.5h-1.2zM58.1 49.4h0.8v0.8h-0.8zM39.7 148.9h0.9v1.0h-0.9zM233.2 149.6h1.2v1.5h-1.2zM21.1 203.4h1.2v2.0h-1.2zM282.5 95.8h1.8v2.8h-1.8zM157.2 175.5h0.9v1.5h-0.9zM149.8 246.4h1.4v1.5h-1.4zM67.4 167.9h0.9v1.2h-0.9zM58.5 117.1h2.3v2.0h-2.3zM33.0 139.8h0.9v1.0h-0.9zM241.1 140.0h2.8v2.8h-2.8zM7.9 326.3h1.4v0.9h-1.4zM240.8 150.4h1.2v2.0h-1.2zM67.1 184.2h1.0v0.8h-1.0zM23.3 134.8h5.3v2.8h-5.3zM82.1 236.0h1.7v2.0h-1.7zM4.3 160.5h0.9v2.0h-0.9zM55.3 43.8h1.4v0.9h-1.4zM134.7 103.6h2.3v1.2h-2.3zM6.9 330.7h1.0v0.8h-1.0zM107.4 87.1h2.3v1.7h-2.3zM106.3 56.8h3.9v1.5h-3.9zM164.8 195.9h2.3v1.7h-2.3zM189.2 77.8h0.8v1.0h-0.8zM76.3 214.3h2.3v1.9h-2.3zM39.4 205.5h2.3v1.5h-2.3zM2.6 298.4h1.7v2.0h-1.7zM294.3 5.9h1.2v0.9h-1.2zM65.1 199.1h2.3v2.0h-2.3zM151.7 250.1h1.4v0.8h-1.4zM132.2 152.2h1.7v1.0h-1.7zM8.5 205.0h1.7v1.2h-1.7zM295.0 106.3h0.8v0.8h-0.8zM106.4 82.2h0.9v2.0h-0.9zM187.9 105.6h2.3v1.5h-2.3zM49.2 211.1h0.9v2.0h-0.9zM146.9 106.2h1.2v2.0h-1.2zM103.2 200.4h1.4v1.5h-1.4zM216.1 146.2h1.2v1.0h-1.2zM34.0 269.2h2.8v1.7h-2.8zM30.4 180.3h1.0v1.0h-1.0zM41.7 185.8h1.4v0.9h-1.4zM149.2 219.5h1.7v1.2h-1.7zM142.9 176.5h1.7v1.5h-1.7zM243.4 90.0h2.3v2.0h-2.3zM173.6 181.0h0.8v1.2h-0.8zM172.8 14.3h0.8v0.9h-0.8zM211.2 162.7h2.3v1.0h-2.3zM255.7 35.6h1.0v2.0h-1.0zM222.5 178.9h2.3v1.5h-2.3zM90.1 234.6h3.9v1.5h-3.9zM26.2 158.4h1.7v1.2h-1.7zM102.3 77.6h0.8v1.5h-0.8zM82.8 97.8h1.4v1.5h-1.4zM115.9 148.6h0.8v1.0h-0.8zM63.1 54.1h1.4v2.0h-1.4zM282.4 107.2h1.2v1.5h-1.2zM190.4 24.6h1.2v2.0h-1.2zM64.0 60.8h2.3v1.0h-2.3zM109.5 181.7h2.3v2.0h-2.3zM39.1 142.3h0.8v0.9h-0.8zM110.0 88.7h2.3v0.8h-2.3zM202.3 158.0h0.8v1.5h-0.8zM87.2 187.0h5.3v2.8h-5.3zM133.6 14.3h1.0v1.2h-1.0zM149.9 168.9h0.9v1.5h-0.9zM4.9 126.9h1.4v0.8h-1.4zM150.4 172.1h0.8v1.0h-0.8zM127.9 191.8h0.8v0.9h-0.8zM179.1 120.8h3.9v1.5h-3.9zM218.8 145.4h0.8v0.9h-0.8zM122.9 100.3h2.3v1.2h-2.3zM165.8 43.9h2.3v2.0h-2.3zM125.7 115.4h0.8v1.5h-0.8zM260.0 119.9h1.4v0.9h-1.4zM8.0 115.0h0.9v0.8h-0.9zM228.8 165.6h1.7v0.8h-1.7zM211.2 178.6h0.9v0.8h-0.9zM65.5 171.7h0.8v2.0h-0.8zM63.0 229.2h2.3v1.5h-2.3zM282.0 2.5h2.3v0.9h-2.3zM178.6 184.9h0.8v0.9h-0.8zM18.5 288.2h1.4v1.0h-1.4zM288.5 94.3h1.2v1.0h-1.2zM18.5 214.9h1.7v2.0h-1.7zM71.8 86.8h2.3v0.9h-2.3zM182.0 177.6h1.0v1.5h-1.0zM106.5 128.8h1.7v1.0h-1.7zM124.9 57.2h0.9v1.5h-0.9zM124.4 103.4h2.3v1.5h-2.3zM212.2 175.3h0.9v1.2h-0.9zM175.8 189.2h2.3v0.8h-2.3zM225.1 133.4h0.8v1.2h-0.8zM216.7 188.9h0.8v1.5h-0.8zM151.3 204.4h5.3v2.8h-5.3zM127.6 6.1h0.8v0.9h-0.8zM47.8 210.4h2.3v1.5h-2.3zM111.0 87.5h2.3v0.9h-2.3zM25.7 255.8h1.0v1.5h-1.0zM15.5 275.8h1.8v2.8h-1.8zM79.1 14.8h1.0v1.2h-1.0zM170.1 145.9h1.7v1.5h-1.7zM33.7 224.1h1.4v0.9h-1.4zM4.3 344.2h2.3v2.0h-2.3zM256.8 134.6h1.0v2.0h-1.0zM288.9 8.4h1.7v0.9h-1.7zM4.0 136.2h0.8v0.8h-0.8zM171.9 86.6h2.3v1.5h-2.3zM205.9 204.8h1.8v1.9h-1.8zM10.2 230.8h1.2v1.0h-1.2zM22.6 298.2h2.3v0.8h-2.3zM85.7 150.8h1.7v0.8h-1.7zM89.3 66.2h1.4v1.5h-1.4zM63.1 56.9h1.4v0.9h-1.4zM11.6 159.8h0.8v0.8h-0.8zM122.8 138.0h1.2v0.9h-1.2zM20.7 210.8h2.3v1.0h-2.3zM77.2 55.3h1.7v1.5h-1.7zM215.0 142.6h0.9v2.0h-0.9zM164.9 23.5h3.2v1.9h-3.2zM6.6 173.1h1.4v1.2h-1.4zM65.3 164.2h0.8v1.0h-0.8zM73.7 22.1h1.7v1.2h-1.7zM106.1 181.8h2.8v3.8h-2.8zM38.4 79.8h2.3v1.0h-2.3zM34.1 284.1h0.9v2.0h-0.9zM12.5 91.3h2.3v1.2h-2.3zM-1.8 96.5h1.7v0.8h-1.7zM111.8 142.2h1.2v1.5h-1.2zM44.8 161.9h0.9v1.2h-0.9zM63.6 50.7h0.9v0.8h-0.9zM38.4 214.6h1.4v0.8h-1.4zM23.7 271.0h1.4v1.5h-1.4zM168.3 215.3h1.7v1.2h-1.7zM40.8 156.4h0.9v0.8h-0.9zM247.7 115.2h1.2v0.8h-1.2zM292.7 71.3h2.3v1.7h-2.3zM16.6 176.2h1.0v2.0h-1.0zM66.9 233.4h1.4v1.0h-1.4zM5.6 162.1h0.9v2.0h-0.9zM176.9 177.5h2.3v1.2h-2.3zM187.0 178.7h0.8v1.0h-0.8zM204.9 167.9h1.2v1.2h-1.2zM155.9 210.6h0.8v1.2h-0.8zM85.4 27.6h0.8v0.9h-0.8zM49.3 27.6h1.0v1.0h-1.0zM16.9 200.7h0.9v1.2h-0.9zM54.5 242.4h2.3v0.9h-2.3zM222.6 60.2h0.9v0.9h-0.9zM166.2 167.0h1.0v1.0h-1.0zM54.4 74.9h1.4v0.8h-1.4zM158.9 102.3h1.0v1.0h-1.0zM42.6 63.1h1.2v0.8h-1.2zM172.7 144.1h1.7v1.2h-1.7zM161.7 241.4h1.4v1.2h-1.4zM98.1 219.8h2.3v2.0h-2.3zM268.1 31.7h1.2v0.8h-1.2zM174.9 80.4h0.9v1.5h-0.9zM78.5 234.3h0.9v1.0h-0.9zM222.1 145.1h2.3v1.5h-2.3zM170.4 72.9h0.9v0.8h-0.9zM116.3 102.2h2.3v1.2h-2.3zM51.6 214.1h1.2v2.0h-1.2zM168.9 175.5h1.0v1.2h-1.0zM54.5 173.8h1.4v1.0h-1.4zM21.4 204.8h0.8v1.5h-0.8zM115.0 81.8h2.3v1.0h-2.3zM246.2 103.1h0.9v1.2h-0.9zM285.9 124.2h1.2v0.9h-1.2zM113.0 90.1h0.8v1.0h-0.8zM229.0 167.7h1.2v1.0h-1.2zM193.7 37.2h2.3v0.8h-2.3zM17.1 123.7h0.8v0.9h-0.8zM137.3 215.4h2.3v1.0h-2.3zM42.5 157.0h1.7v1.2h-1.7zM46.2 224.4h1.2v1.2h-1.2zM65.8 243.7h0.9v1.2h-0.9zM194.3 175.3h2.3v1.9h-2.3zM90.1 97.9h2.3v1.0h-2.3zM168.8 121.7h1.0v0.9h-1.0zM56.8 51.7h1.2v1.2h-1.2zM61.7 65.0h1.0v1.5h-1.0zM125.3 147.3h2.3v0.8h-2.3zM32.6 121.9h0.9v1.5h-0.9zM27.2 107.1h1.7v1.2h-1.7zM234.3 121.6h2.8v1.9h-2.8zM-2.5 146.2h2.3v1.5h-2.3zM136.2 250.4h2.1v2.8h-2.1zM41.7 265.1h1.0v1.5h-1.0zM152.9 115.2h0.8v1.0h-0.8zM14.3 240.8h0.9v0.8h-0.9zM66.0 231.9h1.7v1.2h-1.7zM188.6 159.4h0.9v0.9h-0.9zM139.3 258.7h1.2v1.2h-1.2zM209.4 143.5h0.9v1.5h-0.9zM41.0 162.1h0.8v1.5h-0.8zM35.3 44.1h1.7v0.9h-1.7zM34.3 215.0h3.9v2.3h-3.9zM226.5 182.2h0.8v1.0h-0.8zM170.3 158.9h2.3v1.2h-2.3zM156.5 108.7h1.4v1.0h-1.4zM168.5 134.4h1.0v0.8h-1.0zM232.0 79.1h0.8v1.5h-0.8zM69.6 220.7h0.9v1.0h-0.9zM144.0 236.7h2.3v0.8h-2.3zM113.8 75.3h1.7v1.2h-1.7zM26.1 252.9h0.8v0.8h-0.8zM107.4 102.9h1.2v2.0h-1.2zM290.9 105.7h2.3v2.0h-2.3zM250.7 11.1h0.8v0.8h-0.8zM87.1 46.4h1.4v2.0h-1.4zM107.1 141.4h0.9v1.0h-0.9zM229.5 2.9h0.9v1.0h-0.9zM101.7 168.9h0.8v1.2h-0.8zM55.9 156.9h1.4v1.0h-1.4zM63.0 125.6h2.1v1.7h-2.1zM33.2 263.3h1.2v1.2h-1.2zM107.4 49.2h0.8v1.0h-0.8zM39.7 126.5h2.8v1.5h-2.8zM45.6 152.3h1.7v2.0h-1.7zM171.8 173.3h0.8v0.8h-0.8zM219.8 129.5h5.3v1.7h-5.3zM221.5 138.9h1.4v2.0h-1.4zM8.4 178.1h2.3v1.2h-2.3zM188.7 172.1h0.9v1.5h-0.9zM13.2 273.2h0.9v1.0h-0.9zM113.2 114.5h2.3v0.9h-2.3zM240.6 56.2h2.3v2.0h-2.3zM111.3 242.7h0.8v0.9h-0.8zM20.2 95.9h1.2v2.0h-1.2zM30.2 224.3h0.8v0.8h-0.8zM231.7 129.2h0.9v0.8h-0.9zM1.1 202.1h1.7v1.2h-1.7zM59.0 229.6h2.3v1.0h-2.3zM70.3 19.5h0.8v2.0h-0.8zM9.5 288.8h2.3v1.5h-2.3zM159.2 175.0h1.2v0.8h-1.2zM14.0 102.9h2.3v1.5h-2.3zM24.8 106.8h1.4v0.8h-1.4zM26.9 289.9h0.8v0.8h-0.8zM168.2 122.8h0.8v1.5h-0.8zM291.9 54.6h1.0v1.5h-1.0zM65.9 264.0h1.2v1.5h-1.2zM88.3 87.6h1.0v1.5h-1.0zM75.9 136.1h1.7v1.0h-1.7zM11.3 132.7h0.8v2.0h-0.8zM6.7 126.3h1.8v1.5h-1.8zM28.0 83.3h1.0v0.9h-1.0zM12.9 168.7h1.0v0.9h-1.0zM175.4 190.9h1.2v2.0h-1.2zM146.0 113.2h2.3v0.9h-2.3zM168.0 128.6h2.3v2.0h-2.3zM119.9 83.7h1.0v2.0h-1.0zM108.1 81.5h1.0v2.0h-1.0zM155.4 176.1h0.9v1.2h-0.9zM220.2 146.2h1.7v0.8h-1.7zM10.8 159.3h0.9v2.0h-0.9zM219.4 155.7h1.7v0.9h-1.7zM254.7 131.8h0.9v1.2h-0.9zM7.7 29.9h2.3v0.8h-2.3zM7.0 3.0h0.8v0.9h-0.8zM94.8 103.5h1.2v2.0h-1.2zM92.5 93.6h1.0v0.9h-1.0zM37.2 170.7h1.7v1.2h-1.7zM83.9 183.4h2.3v1.2h-2.3zM149.1 162.2h1.4v0.9h-1.4zM144.9 107.7h2.3v1.5h-2.3zM170.4 231.4h1.4v0.8h-1.4zM168.4 129.1h3.2v1.5h-3.2zM117.3 60.2h1.2v2.0h-1.2zM189.1 129.2h1.2v0.8h-1.2zM99.2 19.4h1.2v1.5h-1.2zM70.2 193.0h1.4v2.0h-1.4zM150.6 109.3h1.0v1.0h-1.0zM41.8 64.1h1.2v1.5h-1.2zM255.5 117.1h1.4v0.8h-1.4zM130.5 219.1h1.2v0.9h-1.2zM80.2 5.8h0.8v0.8h-0.8zM137.3 138.1h0.8v0.8h-0.8zM212.0 152.2h0.9v1.2h-0.9zM203.3 138.8h2.3v1.0h-2.3zM185.9 148.4h1.0v2.0h-1.0zM175.6 154.2h0.9v1.5h-0.9zM230.3 142.5h0.8v2.0h-0.8zM133.7 239.1h1.2v0.8h-1.2zM55.4 166.0h0.8v1.0h-0.8zM70.7 229.9h2.3v1.0h-2.3zM131.2 241.0h0.8v1.2h-0.8zM181.0 124.4h1.4v0.9h-1.4zM98.5 65.6h2.3v0.8h-2.3zM75.3 122.0h1.0v1.2h-1.0zM7.7 169.8h2.3v1.2h-2.3zM35.0 195.7h0.9v2.0h-0.9zM198.0 124.5h0.8v0.8h-0.8zM204.9 62.8h1.0v1.2h-1.0zM218.1 174.8h1.7v1.0h-1.7zM222.3 143.2h2.3v1.0h-2.3zM302.7 105.9h1.7v0.9h-1.7zM89.7 84.7h1.7v1.5h-1.7zM72.3 73.3h1.4v0.8h-1.4zM19.1 278.2h0.9v1.0h-0.9zM171.6 251.5h1.7v0.8h-1.7zM35.7 84.7h1.2v1.0h-1.2zM161.3 192.6h1.0v0.9h-1.0zM254.4 121.6h1.7v0.9h-1.7zM51.3 73.5h1.2v1.0h-1.2zM109.7 66.9h0.9v0.8h-0.9zM222.7 49.7h1.2v1.5h-1.2zM63.2 211.1h1.7v1.2h-1.7zM106.4 71.9h1.0v1.5h-1.0zM41.9 251.1h0.8v1.2h-0.8zM166.9 161.4h0.9v0.9h-0.9zM75.5 124.7h1.2v2.0h-1.2zM109.6 233.1h1.0v1.5h-1.0zM161.6 240.4h0.9v1.0h-0.9zM171.7 230.4h1.0v1.5h-1.0zM163.5 170.4h1.7v0.8h-1.7zM247.1 13.7h1.7v1.5h-1.7zM111.7 86.6h2.1v1.9h-2.1zM137.8 225.5h1.2v2.0h-1.2zM102.4 130.4h2.8v2.3h-2.8zM120.2 53.6h0.8v2.0h-0.8zM140.0 243.3h0.9v0.8h-0.9zM22.0 138.9h3.9v1.9h-3.9zM164.8 243.2h0.8v1.2h-0.8zM14.0 28.9h1.4v0.9h-1.4zM31.9 229.5h1.8v1.7h-1.8zM96.5 74.0h1.4v0.8h-1.4zM207.4 197.2h1.4v2.0h-1.4zM69.6 64.2h2.3v1.0h-2.3zM86.5 100.7h1.2v2.0h-1.2zM74.9 228.7h1.4v1.0h-1.4zM9.9 217.4h1.2v0.9h-1.2zM191.1 137.4h1.0v1.2h-1.0zM163.2 135.1h1.7v1.5h-1.7zM14.8 138.8h1.7v1.5h-1.7zM37.0 157.9h0.8v1.5h-0.8zM97.3 82.4h1.7v2.0h-1.7zM34.1 117.5h1.2v1.5h-1.2zM137.6 165.4h1.0v0.8h-1.0zM37.5 215.3h1.2v1.0h-1.2zM109.7 29.9h1.7v1.2h-1.7zM132.0 76.3h1.0v1.5h-1.0zM82.7 91.9h0.8v0.9h-0.8zM10.2 255.2h0.9v1.2h-0.9zM210.3 134.6h1.7v0.8h-1.7zM25.4 152.4h1.0v1.2h-1.0zM120.6 82.2h1.2v1.2h-1.2zM15.2 222.4h1.4v1.5h-1.4zM59.6 64.9h1.0v0.9h-1.0zM41.0 147.4h2.3v1.0h-2.3zM96.2 215.5h0.9v2.0h-0.9zM122.3 35.6h1.7v0.8h-1.7zM206.4 124.4h1.0v1.5h-1.0zM234.9 32.9h2.3v2.0h-2.3zM31.1 197.2h2.3v1.2h-2.3zM113.4 142.4h1.2v2.0h-1.2zM78.0 222.8h1.4v1.2h-1.4zM2.7 74.1h1.7v0.8h-1.7zM232.5 133.2h1.0v1.5h-1.0zM108.5 143.5h0.9v1.0h-0.9zM23.7 112.9h1.7v1.2h-1.7zM31.3 136.3h1.4v2.0h-1.4zM175.7 180.5h1.2v2.0h-1.2zM141.4 171.1h1.0v0.9h-1.0zM172.1 57.4h1.4v0.9h-1.4zM211.2 158.9h1.7v1.2h-1.7zM33.8 120.9h1.4v1.5h-1.4zM17.1 95.1h1.0v1.2h-1.0zM135.0 224.3h1.4v1.2h-1.4zM140.7 87.3h0.8v1.2h-0.8zM251.7 105.7h0.8v1.2h-0.8zM218.2 5.2h0.9v0.9h-0.9zM52.2 123.4h1.7v0.9h-1.7zM205.8 198.6h1.0v1.5h-1.0zM5.1 154.1h1.4v0.9h-1.4zM108.5 230.8h1.2v0.8h-1.2zM191.6 4.9h2.3v0.9h-2.3zM168.1 196.6h1.0v1.5h-1.0zM67.8 197.7h1.7v1.2h-1.7zM299.8 108.7h3.2v2.8h-3.2zM58.3 165.4h1.4v1.2h-1.4zM179.4 92.7h0.8v1.5h-0.8zM4.5 121.0h1.0v0.8h-1.0zM6.9 67.2h1.4v1.0h-1.4zM118.6 98.8h1.0v1.0h-1.0zM25.0 41.3h1.7v1.5h-1.7zM47.2 214.0h1.7v0.8h-1.7zM7.2 85.7h0.8v1.2h-0.8zM133.1 139.1h1.0v0.9h-1.0zM34.0 141.0h2.3v1.0h-2.3zM6.2 155.1h1.4v0.8h-1.4zM259.4 116.5h1.7v0.9h-1.7zM38.7 123.7h1.4v1.2h-1.4zM55.2 246.2h0.8v2.0h-0.8zM169.0 91.7h1.4v0.8h-1.4zM53.2 247.4h1.4v0.8h-1.4zM181.6 188.2h0.9v0.9h-0.9zM252.2 138.2h1.2v1.5h-1.2zM249.9 18.2h2.3v0.8h-2.3zM189.2 25.2h0.8v1.0h-0.8zM75.1 113.7h0.9v1.2h-0.9zM113.8 203.8h0.9v1.5h-0.9zM37.8 146.4h2.1v3.8h-2.1zM35.3 171.8h1.4v2.0h-1.4zM12.9 318.9h2.3v0.9h-2.3zM22.6 210.8h1.2v1.2h-1.2zM97.9 139.5h1.0v0.8h-1.0zM95.0 203.4h1.2v1.0h-1.2zM94.2 111.8h0.9v0.8h-0.9zM69.0 205.2h1.7v1.5h-1.7zM51.4 126.7h2.3v0.8h-2.3zM67.5 204.1h1.2v0.9h-1.2zM69.2 212.3h1.7v0.8h-1.7zM62.1 179.9h1.7v1.0h-1.7zM224.3 154.1h2.3v1.2h-2.3zM10.0 120.8h1.0v0.9h-1.0zM270.8 135.0h0.9v1.5h-0.9zM37.5 147.0h3.9v1.9h-3.9zM69.0 137.9h2.3v0.9h-2.3zM5.1 201.8h1.4v0.9h-1.4zM263.2 139.8h1.2v1.5h-1.2zM70.1 194.0h2.3v0.8h-2.3zM268.1 128.0h0.9v1.0h-0.9zM260.7 133.8h0.9v1.0h-0.9zM173.4 232.0h2.3v0.9h-2.3zM145.2 154.9h1.2v1.0h-1.2zM19.2 79.1h1.4v2.0h-1.4zM175.2 250.1h0.9v1.5h-0.9zM129.4 178.1h1.7v1.5h-1.7zM236.8 140.4h0.9v2.0h-0.9zM263.3 114.0h1.7v1.0h-1.7zM37.6 183.8h1.4v1.5h-1.4zM227.7 162.6h2.3v1.0h-2.3zM118.4 30.4h0.8v1.0h-0.8zM68.9 138.3h2.1v1.7h-2.1zM194.3 165.6h1.2v2.0h-1.2zM59.4 163.4h2.3v1.0h-2.3zM97.7 27.8h0.9v1.5h-0.9zM159.7 96.6h1.0v1.0h-1.0zM80.9 165.4h0.9v0.8h-0.9zM42.1 151.7h1.7v2.0h-1.7zM252.0 130.5h1.7v2.0h-1.7zM23.6 27.9h1.7v1.0h-1.7zM132.0 159.1h2.3v2.0h-2.3zM59.0 39.5h1.0v0.8h-1.0zM11.6 182.4h1.7v2.0h-1.7zM290.5 77.4h1.4v0.8h-1.4zM61.1 71.4h0.9v0.9h-0.9zM279.0 56.2h0.8v1.5h-0.8zM60.5 214.2h1.0v0.9h-1.0zM52.4 159.6h0.8v2.0h-0.8zM98.8 16.1h1.0v0.8h-1.0zM66.1 202.8h1.7v1.2h-1.7zM13.5 141.5h1.4v0.9h-1.4zM155.4 96.6h1.7v2.0h-1.7zM183.9 189.0h3.9v3.8h-3.9zM249.9 129.0h1.7v1.0h-1.7zM183.6 169.2h1.2v0.8h-1.2zM219.9 91.3h1.0v1.5h-1.0zM115.4 150.5h2.3v0.9h-2.3zM89.5 89.5h2.3v0.8h-2.3zM196.9 170.9h2.3v2.0h-2.3zM267.4 118.4h1.4v2.0h-1.4zM63.8 208.2h1.7v0.9h-1.7zM120.2 205.9h1.0v0.8h-1.0zM139.3 115.8h1.4v1.2h-1.4zM85.0 83.9h1.7v1.0h-1.7zM208.6 141.8h1.4v2.0h-1.4zM145.7 160.4h0.8v1.5h-0.8zM146.4 162.5h1.4v2.0h-1.4zM4.1 246.2h1.2v1.0h-1.2zM47.4 116.5h3.9v1.7h-3.9zM130.7 157.5h1.0v1.0h-1.0zM203.2 158.2h1.2v1.0h-1.2zM41.9 229.0h1.7v1.5h-1.7zM79.3 65.9h1.4v1.5h-1.4zM14.8 242.9h2.3v1.5h-2.3zM263.9 118.2h0.9v2.0h-0.9zM141.3 248.4h0.9v1.0h-0.9zM234.5 134.4h1.0v2.0h-1.0zM273.5 117.8h2.3v1.5h-2.3zM222.0 145.5h1.4v1.0h-1.4zM41.0 166.6h1.0v1.0h-1.0zM47.5 110.0h1.2v1.0h-1.2zM88.0 160.0h0.8v1.2h-0.8zM272.7 19.0h2.3v1.5h-2.3zM88.7 60.0h2.3v0.8h-2.3zM0.8 183.7h1.2v2.0h-1.2zM140.7 197.8h2.1v3.8h-2.1zM99.4 102.4h0.9v0.8h-0.9zM61.3 121.9h1.2v1.5h-1.2zM137.7 105.1h1.2v0.9h-1.2zM246.1 92.4h1.4v0.9h-1.4zM157.2 202.9h1.0v0.8h-1.0zM39.9 165.0h1.2v1.0h-1.2zM295.2 79.5h1.7v1.2h-1.7zM139.6 92.4h1.0v1.5h-1.0zM128.3 65.5h1.2v0.9h-1.2zM102.6 97.4h1.7v1.2h-1.7zM9.0 97.4h1.0v1.2h-1.0zM99.4 165.4h2.3v2.0h-2.3zM40.2 277.4h2.3v1.2h-2.3zM49.0 225.0h1.7v0.9h-1.7zM31.6 123.8h0.9v1.2h-0.9zM31.2 56.6h1.7v1.5h-1.7zM239.2 140.2h1.7v0.8h-1.7zM3.6 117.3h1.7v0.8h-1.7zM48.8 178.7h1.7v2.0h-1.7zM217.1 146.6h1.4v2.0h-1.4zM98.3 44.5h1.7v0.8h-1.7zM38.2 251.6h1.0v0.8h-1.0zM121.0 81.8h5.3v1.9h-5.3zM218.2 137.5h2.3v0.8h-2.3zM163.5 150.9h2.3v1.0h-2.3zM215.8 38.1h2.3v0.9h-2.3zM88.9 101.2h2.3v1.2h-2.3zM155.7 108.8h0.8v0.8h-0.8zM56.8 210.7h1.0v1.5h-1.0zM56.5 36.9h1.7v0.8h-1.7zM5.5 78.6h1.4v1.0h-1.4zM158.3 38.4h0.9v2.0h-0.9zM113.4 220.1h1.0v1.0h-1.0zM54.9 242.3h2.3v1.0h-2.3zM74.9 117.3h1.4v1.0h-1.4zM1.6 203.7h1.2v0.9h-1.2zM54.1 23.5h1.2v1.5h-1.2zM238.7 89.3h0.8v2.0h-0.8zM105.7 72.6h1.0v1.5h-1.0zM259.3 114.2h1.4v0.9h-1.4zM293.8 28.5h1.2v0.8h-1.2zM65.7 74.3h2.3v1.2h-2.3zM86.2 188.1h2.3v2.0h-2.3zM211.2 177.5h0.8v1.5h-0.8zM65.3 201.1h1.7v0.9h-1.7zM119.6 134.4h2.3v1.9h-2.3zM60.0 191.3h0.8v0.9h-0.8zM9.8 309.3h1.0v0.8h-1.0zM299.1 100.5h1.7v1.2h-1.7zM76.5 83.3h1.4v0.9h-1.4zM41.8 217.9h5.3v2.8h-5.3zM258.2 132.8h1.7v1.5h-1.7zM274.0 1.1h1.0v1.5h-1.0zM172.4 177.3h0.9v0.8h-0.9zM282.5 121.9h1.7v2.0h-1.7zM116.3 138.5h1.4v0.8h-1.4zM163.0 165.1h0.8v1.2h-0.8zM69.5 115.4h1.0v1.2h-1.0zM165.4 255.7h1.7v0.8h-1.7zM15.9 308.8h1.7v0.9h-1.7zM148.4 177.7h1.0v0.9h-1.0zM217.6 139.1h2.3v2.0h-2.3zM109.6 171.3h1.4v1.2h-1.4zM216.8 167.6h1.2v0.8h-1.2zM147.3 113.1h1.2v0.8h-1.2zM134.9 171.6h1.4v1.2h-1.4zM73.9 194.1h1.0v1.0h-1.0zM184.5 167.2h0.9v0.8h-0.9zM95.9 99.6h1.0v0.8h-1.0zM140.5 39.4h1.2v0.9h-1.2zM233.7 172.2h2.3v1.0h-2.3zM183.9 155.5h2.8v2.3h-2.8zM105.0 135.8h2.3v0.8h-2.3zM251.5 140.0h1.2v1.0h-1.2zM74.1 216.5h2.3v2.0h-2.3zM151.0 172.1h1.7v0.8h-1.7zM31.8 20.3h1.7v1.2h-1.7zM233.3 139.9h0.8v0.9h-0.8zM150.7 176.7h2.3v0.9h-2.3zM215.6 155.5h3.9v2.8h-3.9zM166.0 150.7h1.0v0.9h-1.0zM172.4 169.6h1.4v0.9h-1.4zM161.9 188.9h1.4v1.2h-1.4zM216.2 158.0h0.8v1.2h-0.8zM16.9 234.3h1.2v1.2h-1.2zM105.5 100.8h2.3v1.2h-2.3zM190.8 170.1h1.7v2.0h-1.7zM-0.9 124.5h1.0v0.8h-1.0zM116.8 30.5h1.2v1.5h-1.2zM233.0 24.3h1.4v1.0h-1.4zM26.6 144.2h2.3v2.0h-2.3zM97.6 74.8h0.9v1.2h-0.9zM256.3 55.4h5.3v1.7h-5.3zM21.6 259.2h0.8v1.2h-0.8zM121.5 5.4h1.4v2.0h-1.4zM107.8 145.0h1.4v1.0h-1.4zM12.2 303.5h1.7v0.9h-1.7zM288.2 101.5h0.9v1.0h-0.9zM124.0 190.2h1.4v0.8h-1.4zM54.0 166.1h1.2v0.9h-1.2zM62.2 224.9h2.1v1.7h-2.1zM2.4 286.5h2.3v0.8h-2.3zM229.8 138.8h1.0v1.0h-1.0zM52.8 218.7h2.3v0.8h-2.3zM8.1 134.6h3.9v1.7h-3.9zM234.3 125.4h5.3v2.8h-5.3zM8.4 335.1h3.9v2.3h-3.9zM42.0 183.8h0.9v0.8h-0.9zM33.7 219.6h2.3v1.0h-2.3zM34.0 130.4h1.4v1.0h-1.4zM113.6 237.4h1.7v1.2h-1.7zM54.2 238.4h1.2v1.2h-1.2zM255.5 129.1h0.9v1.5h-0.9zM131.0 231.7h1.7v0.8h-1.7zM152.3 157.9h1.8v2.3h-1.8zM31.5 35.2h2.3v1.2h-2.3zM51.6 123.5h1.0v0.9h-1.0zM267.8 86.2h0.9v0.8h-0.9zM113.2 157.0h2.3v1.0h-2.3zM155.3 158.3h1.4v1.0h-1.4zM115.0 95.0h1.4v1.2h-1.4zM145.9 237.3h1.7v2.0h-1.7zM10.9 241.3h0.9v0.9h-0.9zM198.4 186.4h1.4v0.8h-1.4zM33.5 24.1h1.0v1.2h-1.0zM40.3 94.1h2.3v1.0h-2.3zM19.4 141.9h0.8v2.0h-0.8zM58.8 213.0h2.3v0.8h-2.3zM13.4 137.0h1.7v1.5h-1.7zM62.2 168.9h1.2v0.8h-1.2zM215.5 158.4h1.0v1.5h-1.0zM2.1 211.9h3.9v3.8h-3.9zM300.3 32.4h1.2v0.8h-1.2zM160.6 203.4h2.3v0.8h-2.3zM52.6 225.0h1.4v1.2h-1.4zM37.9 121.5h1.4v0.9h-1.4zM1.8 128.6h1.2v1.5h-1.2zM44.8 228.8h1.4v1.5h-1.4zM70.1 229.4h1.4v2.0h-1.4zM70.7 220.8h0.8v2.0h-0.8zM172.0 39.4h1.7v2.0h-1.7zM57.2 127.6h3.2v1.9h-3.2zM163.6 242.5h0.9v1.0h-0.9zM185.7 35.9h1.2v0.9h-1.2zM83.0 231.4h1.4v2.0h-1.4zM228.3 140.2h2.3v1.0h-2.3zM111.6 136.0h1.0v0.8h-1.0zM121.2 84.4h0.8v0.8h-0.8zM82.4 154.3h1.2v1.5h-1.2zM228.5 111.7h2.3v1.5h-2.3zM95.5 233.1h1.4v1.0h-1.4zM60.1 111.8h1.7v0.9h-1.7zM25.6 277.0h0.8v1.0h-0.8zM103.4 70.2h3.9v2.8h-3.9zM212.3 125.8h0.9v1.2h-0.9zM175.5 19.3h1.8v1.9h-1.8zM92.3 43.2h2.1v1.9h-2.1zM205.4 159.6h0.8v0.9h-0.8zM127.9 6.6h1.0v1.2h-1.0zM150.4 110.8h2.8v3.8h-2.8zM33.1 231.1h0.8v1.0h-0.8zM193.6 128.8h1.0v1.5h-1.0zM93.8 83.8h1.0v2.0h-1.0zM212.9 143.5h1.4v2.0h-1.4zM10.4 15.9h5.3v1.9h-5.3zM188.3 108.2h2.3v1.0h-2.3zM64.0 191.9h1.0v0.9h-1.0zM230.8 158.2h2.3v1.0h-2.3zM16.9 274.3h0.8v0.8h-0.8zM67.1 222.5h1.2v2.0h-1.2zM5.5 85.9h1.2v1.5h-1.2zM139.1 253.3h1.4v0.8h-1.4zM278.9 35.1h1.2v0.9h-1.2zM17.4 260.7h2.3v0.9h-2.3zM106.3 81.2h0.9v1.5h-0.9zM65.9 182.1h1.2v0.9h-1.2zM67.9 227.2h1.2v1.5h-1.2zM2.7 269.7h3.9v1.9h-3.9zM193.0 190.1h5.3v1.7h-5.3zM72.6 189.6h1.2v1.2h-1.2zM106.5 79.0h1.7v1.0h-1.7zM184.8 165.4h2.8v1.7h-2.8zM68.9 186.0h1.4v0.9h-1.4zM10.1 282.3h1.0v1.0h-1.0zM29.3 237.7h1.8v2.3h-1.8zM31.8 136.9h1.7v2.0h-1.7zM183.8 152.6h1.2v0.8h-1.2zM278.4 72.5h2.3v2.0h-2.3zM32.8 164.5h0.8v1.0h-0.8zM279.9 110.6h1.2v1.5h-1.2zM61.4 206.1h0.8v1.5h-0.8zM62.2 225.6h0.9v0.8h-0.9zM52.2 124.8h1.7v0.8h-1.7zM26.6 157.1h0.8v1.2h-0.8zM227.0 182.6h0.9v0.8h-0.9zM54.0 48.3h0.9v0.9h-0.9zM117.8 100.6h1.7v1.2h-1.7zM250.4 134.2h0.8v0.8h-0.8zM62.3 225.1h1.7v2.0h-1.7zM262.3 25.1h0.9v0.9h-0.9zM102.8 95.8h2.8v1.7h-2.8zM136.5 29.6h1.0v0.8h-1.0zM56.8 152.5h1.2v1.2h-1.2zM69.6 83.4h0.8v0.9h-0.8zM222.2 151.7h1.2v1.2h-1.2zM161.4 106.5h3.2v1.5h-3.2zM34.6 155.3h1.7v0.9h-1.7zM89.9 176.5h2.3v1.2h-2.3zM187.1 102.9h2.3v2.0h-2.3zM9.4 298.7h3.2v2.3h-3.2zM101.9 219.5h1.7v1.0h-1.7zM210.0 7.3h0.9v1.2h-0.9zM167.1 199.7h1.0v1.2h-1.0zM21.3 198.4h0.8v0.9h-0.8zM166.0 163.5h1.4v1.2h-1.4zM25.3 239.0h1.4v0.9h-1.4zM147.6 190.2h1.8v2.3h-1.8zM83.0 232.9h0.8v0.9h-0.8zM45.1 154.0h0.8v1.5h-0.8zM23.2 102.3h1.4v1.5h-1.4zM27.1 207.2h1.7v0.9h-1.7zM28.0 174.5h1.4v1.5h-1.4zM72.8 17.3h1.7v1.2h-1.7zM166.1 202.2h1.0v2.0h-1.0zM151.3 109.5h0.8v1.0h-0.8zM8.6 162.9h0.9v1.5h-0.9zM77.0 5.5h1.2v1.2h-1.2zM90.1 80.2h0.8v1.5h-0.8zM126.7 20.4h1.0v0.9h-1.0zM61.5 33.4h1.2v0.8h-1.2zM38.2 127.2h1.7v0.9h-1.7zM86.3 177.6h1.4v1.0h-1.4zM73.9 196.7h1.0v1.5h-1.0zM229.9 177.9h1.2v1.5h-1.2zM20.0 286.9h1.2v0.8h-1.2zM10.8 96.3h1.0v0.9h-1.0zM139.9 19.9h1.0v0.9h-1.0zM27.5 140.7h0.8v0.8h-0.8zM152.6 118.2h1.7v1.2h-1.7zM19.8 315.8h2.3v1.0h-2.3zM232.8 99.8h1.2v2.0h-1.2zM277.0 136.9h0.8v2.0h-0.8zM156.4 5.9h0.9v2.0h-0.9zM8.7 152.0h0.9v1.5h-0.9zM128.8 96.3h2.3v2.0h-2.3zM1.3 341.3h1.4v1.0h-1.4zM193.0 184.4h2.3v0.8h-2.3zM65.2 274.4h1.2v1.2h-1.2zM139.4 154.0h2.3v1.2h-2.3zM261.6 120.0h0.8v1.5h-0.8zM173.4 189.1h0.9v1.5h-0.9zM266.5 18.9h1.2v1.0h-1.2zM268.1 125.3h1.4v1.5h-1.4zM183.4 168.9h0.8v0.8h-0.8zM195.9 6.9h1.2v2.0h-1.2zM270.1 121.8h3.9v1.7h-3.9zM292.0 104.3h5.3v1.9h-5.3zM116.2 208.9h1.2v0.8h-1.2zM45.1 144.8h0.9v1.2h-0.9zM65.5 51.7h1.4v0.9h-1.4zM71.8 198.4h1.2v1.5h-1.2zM53.0 200.5h0.8v1.5h-0.8zM20.6 81.6h0.9v2.0h-0.9zM169.4 255.5h0.8v1.0h-0.8zM170.2 247.0h2.3v0.9h-2.3zM44.0 247.7h0.8v2.0h-0.8zM182.5 148.9h1.2v0.8h-1.2zM124.3 125.4h0.8v1.0h-0.8zM151.4 164.4h0.8v0.9h-0.8zM76.3 216.3h1.7v2.0h-1.7zM60.5 263.2h0.8v1.5h-0.8zM5.8 294.9h1.0v1.0h-1.0zM287.7 96.8h0.8v1.2h-0.8zM108.3 237.7h1.7v0.8h-1.7zM30.6 162.6h1.2v0.8h-1.2zM242.7 157.6h1.7v1.5h-1.7zM85.5 104.7h0.9v0.8h-0.9zM22.6 81.6h2.3v1.2h-2.3zM135.0 145.4h0.8v1.2h-0.8zM147.5 133.0h0.9v0.9h-0.9zM40.4 290.1h0.9v1.5h-0.9zM274.7 58.8h0.8v0.9h-0.8zM23.3 284.5h2.3v1.2h-2.3zM199.4 170.7h1.2v2.0h-1.2zM94.3 183.0h1.2v0.9h-1.2zM161.9 240.7h1.2v0.8h-1.2zM234.9 135.4h1.7v0.8h-1.7zM44.7 159.8h1.4v0.9h-1.4zM249.2 129.0h0.8v1.5h-0.8zM166.8 82.6h1.0v2.0h-1.0zM95.9 83.9h2.3v1.2h-2.3zM26.9 242.9h1.0v2.0h-1.0zM106.8 23.7h1.0v1.0h-1.0zM138.5 71.5h1.0v0.8h-1.0zM62.4 94.1h0.8v1.5h-0.8zM272.5 109.4h0.8v2.0h-0.8zM49.2 174.3h0.8v1.5h-0.8zM93.6 105.7h1.0v0.8h-1.0zM155.0 7.4h0.9v2.0h-0.9zM173.0 186.1h0.8v1.2h-0.8zM106.4 140.1h1.2v1.5h-1.2zM74.3 222.3h2.3v1.5h-2.3zM148.4 171.5h0.8v2.0h-0.8zM130.4 185.7h1.0v0.9h-1.0zM65.2 56.5h0.8v1.2h-0.8zM185.5 171.5h2.3v1.2h-2.3zM106.7 65.9h1.4v2.0h-1.4zM183.2 142.5h1.7v2.0h-1.7zM1.4 259.7h0.8v2.0h-0.8zM279.1 117.3h1.0v0.9h-1.0zM73.8 196.2h1.4v2.0h-1.4zM38.5 159.4h1.7v1.2h-1.7zM99.7 71.5h1.7v1.0h-1.7zM39.0 153.4h3.9v2.3h-3.9zM60.5 120.6h0.8v1.2h-0.8zM111.9 126.8h0.8v0.9h-0.8zM216.9 151.7h5.3v1.5h-5.3zM108.3 53.7h1.7v2.0h-1.7zM14.8 212.6h0.9v1.5h-0.9zM126.9 56.4h0.9v1.2h-0.9zM256.2 115.9h0.8v0.9h-0.8zM103.8 182.6h1.7v1.0h-1.7zM141.1 123.0h0.8v0.9h-0.8zM82.4 27.1h1.2v1.0h-1.2zM34.1 126.3h1.0v2.0h-1.0zM149.3 190.2h2.3v2.0h-2.3zM305.5 23.4h0.8v1.2h-0.8zM117.6 95.2h1.0v1.0h-1.0zM21.7 151.6h0.8v1.2h-0.8zM47.8 85.8h0.9v0.9h-0.9zM21.9 261.5h0.8v0.9h-0.8zM193.3 55.4h1.4v1.5h-1.4zM17.9 140.8h1.0v0.9h-1.0zM112.7 95.9h1.0v2.0h-1.0zM256.0 123.0h1.4v0.8h-1.4zM149.7 209.9h1.0v0.8h-1.0zM7.5 260.5h1.0v1.5h-1.0zM278.9 123.0h1.4v1.0h-1.4zM118.6 134.6h1.0v1.0h-1.0zM36.2 89.4h1.2v1.0h-1.2zM177.1 173.6h0.9v1.5h-0.9zM288.9 73.1h2.3v0.8h-2.3zM239.3 140.1h1.0v1.0h-1.0zM151.9 248.3h1.2v1.0h-1.2zM10.3 211.3h3.2v2.3h-3.2zM176.3 143.4h0.9v1.0h-0.9zM161.6 241.8h1.7v1.5h-1.7zM16.0 119.0h2.3v0.8h-2.3zM0.1 220.5h0.9v1.2h-0.9zM143.3 254.0h1.7v1.2h-1.7zM110.0 145.1h0.9v1.2h-0.9zM54.3 222.1h1.0v0.9h-1.0zM4.3 180.1h1.4v1.0h-1.4zM157.2 40.9h1.4v0.8h-1.4zM293.4 96.8h2.3v2.0h-2.3zM203.1 146.4h1.2v0.8h-1.2zM72.2 82.0h2.3v1.5h-2.3zM193.9 63.9h1.2v0.9h-1.2zM64.8 216.7h2.3v1.2h-2.3zM204.6 130.2h0.8v0.9h-0.8zM300.9 108.0h1.0v0.8h-1.0zM130.8 69.4h1.2v1.2h-1.2zM14.5 123.9h2.3v2.8h-2.3zM184.0 222.0h1.4v0.9h-1.4zM158.7 202.8h1.2v0.9h-1.2zM60.5 177.1h0.8v0.9h-0.8zM37.4 97.9h1.7v0.9h-1.7zM225.7 175.3h2.3v1.0h-2.3zM63.7 20.7h0.8v1.2h-0.8zM231.7 137.2h1.4v2.0h-1.4zM5.9 188.5h1.0v0.8h-1.0zM230.1 136.2h2.3v1.0h-2.3zM28.1 294.7h0.8v1.0h-0.8zM28.8 86.3h5.3v1.7h-5.3zM38.2 270.6h1.7v2.0h-1.7zM28.4 212.7h0.9v1.0h-0.9zM120.3 95.9h2.8v1.5h-2.8zM31.8 160.5h1.2v1.5h-1.2zM68.4 194.1h0.9v2.0h-0.9zM10.2 232.7h2.3v1.5h-2.3zM21.4 11.3h1.4v1.5h-1.4zM189.2 173.4h1.0v2.0h-1.0zM168.8 139.5h0.9v1.2h-0.9zM24.6 135.9h1.7v1.2h-1.7zM76.6 168.2h2.3v0.9h-2.3zM138.1 237.4h2.3v1.2h-2.3zM69.6 231.8h1.7v2.0h-1.7zM228.9 13.2h1.7v1.5h-1.7zM171.2 188.7h1.4v1.5h-1.4zM69.2 80.0h0.8v0.9h-0.8zM57.4 48.7h1.7v1.5h-1.7zM144.2 192.5h2.3v1.5h-2.3zM214.5 40.2h0.9v1.5h-0.9zM9.5 304.1h1.0v1.5h-1.0zM97.0 73.5h1.4v1.2h-1.4zM68.5 236.2h1.4v0.8h-1.4zM87.2 86.0h1.0v1.5h-1.0zM28.0 122.6h0.8v1.2h-0.8zM33.2 124.9h1.7v1.0h-1.7zM30.4 294.7h1.8v1.5h-1.8zM141.5 97.0h1.2v0.8h-1.2zM51.6 240.3h0.8v1.5h-0.8zM7.4 137.0h1.4v1.2h-1.4zM247.1 130.9h0.8v1.2h-0.8zM267.3 121.6h1.7v2.0h-1.7zM17.8 80.9h1.2v2.0h-1.2zM67.7 38.5h1.4v2.0h-1.4zM18.0 232.7h2.3v0.9h-2.3zM217.9 167.1h1.4v1.5h-1.4zM21.9 67.5h1.4v0.8h-1.4zM78.6 85.1h1.7v1.0h-1.7zM21.9 295.8h1.7v1.5h-1.7zM70.2 65.4h1.7v1.5h-1.7zM75.2 28.6h3.9v1.9h-3.9zM72.3 114.8h2.3v1.0h-2.3zM36.1 280.7h1.0v0.9h-1.0zM149.1 184.1h1.0v0.9h-1.0zM13.2 285.8h0.8v0.8h-0.8zM10.7 188.7h1.4v0.9h-1.4zM118.0 135.7h5.3v2.3h-5.3zM141.5 86.8h1.4v2.0h-1.4zM212.7 151.0h1.0v0.9h-1.0zM171.5 87.3h1.4v1.0h-1.4zM28.9 181.5h0.9v0.9h-0.9zM19.1 123.6h1.4v2.0h-1.4zM246.6 149.5h1.4v1.2h-1.4zM30.1 165.1h1.4v1.5h-1.4zM95.1 40.3h1.4v1.5h-1.4zM29.1 137.5h0.9v1.2h-0.9zM59.3 169.6h1.2v0.8h-1.2zM21.7 275.8h1.4v2.0h-1.4zM10.6 177.8h2.3v1.5h-2.3zM6.5 170.7h1.4v2.0h-1.4zM118.4 108.0h5.3v2.8h-5.3zM54.2 228.3h2.3v2.0h-2.3zM25.7 204.9h1.4v1.2h-1.4zM64.2 81.1h1.2v1.5h-1.2zM98.4 90.3h1.0v1.0h-1.0zM66.6 62.6h2.3v1.0h-2.3zM220.8 28.2h1.4v0.9h-1.4zM117.1 103.5h0.9v0.9h-0.9zM112.3 190.2h1.2v1.2h-1.2zM24.4 202.5h1.4v0.9h-1.4zM62.9 72.4h1.0v0.8h-1.0zM171.1 250.6h2.3v0.8h-2.3zM118.4 203.8h0.8v0.8h-0.8zM24.2 197.4h1.0v1.0h-1.0zM116.8 205.0h0.8v1.2h-0.8zM82.3 223.7h1.0v1.5h-1.0zM116.7 141.2h1.2v1.0h-1.2zM170.5 189.6h1.4v1.5h-1.4zM168.0 143.0h0.9v1.2h-0.9zM133.4 139.8h2.3v1.0h-2.3zM41.0 226.7h2.3v0.9h-2.3zM225.4 179.0h0.9v0.8h-0.9zM10.1 98.1h0.8v1.0h-0.8zM0.4 75.6h1.2v1.5h-1.2zM3.9 263.5h0.8v2.0h-0.8zM79.6 238.0h1.4v0.8h-1.4zM61.1 211.0h1.7v0.9h-1.7zM56.9 197.6h1.7v0.8h-1.7zM203.3 16.4h1.7v1.0h-1.7zM8.1 57.6h1.7v0.9h-1.7zM262.8 115.0h1.2v1.0h-1.2zM39.5 283.8h1.4v1.5h-1.4zM74.9 134.6h1.7v0.9h-1.7zM29.5 260.3h2.3v3.8h-2.3zM76.4 72.7h1.2v2.0h-1.2zM116.2 146.8h1.8v1.7h-1.8zM157.3 176.8h0.9v0.9h-0.9zM267.5 0.6h1.0v1.0h-1.0zM92.9 199.5h0.8v1.0h-0.8zM3.1 222.8h0.8v0.9h-0.8zM282.3 124.8h2.3v0.9h-2.3zM37.5 259.8h1.7v2.0h-1.7zM125.4 105.2h2.3v0.9h-2.3zM10.7 173.7h1.0v0.8h-1.0zM34.5 230.1h3.9v2.3h-3.9zM107.1 101.8h0.8v2.0h-0.8zM35.5 163.6h1.7v1.0h-1.7zM30.3 198.9h1.4v1.0h-1.4zM166.6 178.1h1.0v2.0h-1.0zM166.7 65.0h2.3v0.8h-2.3zM120.7 94.4h1.7v1.0h-1.7zM63.3 266.6h2.3v1.9h-2.3zM228.8 134.2h0.8v1.5h-0.8zM159.6 161.5h1.4v1.5h-1.4zM28.8 263.6h0.9v1.5h-0.9zM224.9 144.3h2.3v1.5h-2.3zM186.6 169.7h2.3v3.8h-2.3zM58.7 18.9h1.7v1.2h-1.7zM4.6 266.6h0.9v1.0h-0.9zM70.8 236.6h1.4v1.0h-1.4zM61.7 122.8h3.9v3.8h-3.9zM175.3 10.0h0.8v1.5h-0.8zM64.5 230.0h1.0v0.9h-1.0zM183.2 168.6h1.8v3.8h-1.8zM12.0 206.5h1.2v1.0h-1.2zM122.6 230.1h2.3v1.5h-2.3zM249.9 137.0h1.4v0.9h-1.4zM122.4 90.7h0.9v1.2h-0.9zM125.0 229.4h1.2v1.0h-1.2zM78.2 136.8h0.9v0.9h-0.9zM74.4 9.0h3.9v2.8h-3.9zM78.1 220.6h1.2v0.9h-1.2zM89.3 215.9h1.2v0.8h-1.2zM193.3 46.1h2.3v1.5h-2.3zM173.6 146.6h0.8v1.2h-0.8zM65.3 259.0h1.4v1.0h-1.4zM153.2 198.9h1.0v0.8h-1.0zM95.9 160.9h2.3v0.9h-2.3zM159.4 238.7h0.9v1.5h-0.9zM262.1 60.4h5.3v2.3h-5.3zM17.0 146.3h2.3v1.0h-2.3zM46.8 239.2h1.0v2.0h-1.0zM5.3 244.4h5.3v1.7h-5.3zM180.3 177.9h1.0v1.0h-1.0zM172.2 251.2h1.2v1.2h-1.2zM57.8 243.2h1.4v1.0h-1.4zM2.4 305.3h0.8v2.0h-0.8zM66.5 189.8h1.2v0.9h-1.2zM0.7 181.6h1.0v1.0h-1.0zM176.5 181.0h2.3v1.2h-2.3zM80.7 242.4h1.0v0.9h-1.0zM82.2 228.0h0.9v2.0h-0.9zM2.6 200.9h1.7v1.5h-1.7zM66.4 223.3h2.1v1.9h-2.1zM183.6 196.4h1.4v1.2h-1.4zM200.0 152.5h1.2v2.0h-1.2zM72.7 89.8h0.8v0.8h-0.8zM108.7 113.8h1.7v1.5h-1.7zM214.6 87.1h1.2v1.2h-1.2zM12.9 126.5h0.8v1.0h-0.8zM209.7 6.4h1.8v1.7h-1.8zM-2.9 83.9h1.7v1.2h-1.7zM198.9 82.7h0.9v1.2h-0.9zM271.9 74.3h2.3v1.5h-2.3zM230.0 136.3h0.9v2.0h-0.9zM119.4 171.8h1.7v0.9h-1.7zM123.9 93.7h1.0v0.9h-1.0zM240.8 120.6h1.4v1.2h-1.4zM158.1 103.1h1.4v1.0h-1.4zM147.1 125.5h2.1v3.8h-2.1zM181.6 167.5h1.2v1.5h-1.2zM120.3 167.4h1.0v1.2h-1.0zM105.7 139.4h0.8v1.2h-0.8zM117.7 75.2h1.4v1.0h-1.4zM295.9 99.5h2.8v1.5h-2.8zM44.9 37.3h1.7v1.2h-1.7zM33.2 273.0h1.4v0.8h-1.4zM91.7 65.3h1.2v1.2h-1.2zM114.0 86.1h2.3v1.0h-2.3zM25.3 220.7h1.2v1.2h-1.2zM91.6 110.5h2.3v0.8h-2.3zM154.0 188.0h1.7v2.0h-1.7zM140.5 252.4h2.3v1.2h-2.3zM67.1 120.4h2.3v0.9h-2.3zM149.2 169.6h1.0v1.5h-1.0zM16.3 122.6h0.8v1.2h-0.8zM171.1 203.2h1.0v1.5h-1.0zM64.7 205.8h0.8v1.2h-0.8zM191.7 202.2h2.3v1.0h-2.3zM187.0 181.0h0.9v1.0h-0.9zM56.5 185.4h2.3v1.5h-2.3zM143.7 209.7h0.8v2.0h-0.8zM180.9 155.7h0.9v0.9h-0.9zM52.0 162.7h2.3v2.0h-2.3zM114.0 8.9h2.3v0.9h-2.3zM284.8 111.3h0.8v0.9h-0.8zM69.1 245.6h1.7v0.9h-1.7zM144.7 244.7h3.2v3.8h-3.2zM83.9 19.1h1.4v1.2h-1.4zM54.4 149.0h3.2v2.3h-3.2zM47.2 157.7h0.8v1.0h-0.8zM123.5 155.3h0.8v0.8h-0.8zM27.9 253.8h0.9v0.9h-0.9zM121.6 145.3h1.2v0.8h-1.2zM8.1 202.0h1.4v1.2h-1.4zM189.9 95.3h2.3v0.8h-2.3zM119.1 84.7h1.7v0.9h-1.7zM11.5 139.9h1.2v1.0h-1.2zM133.3 119.6h1.2v1.0h-1.2zM41.5 136.1h2.3v2.8h-2.3zM113.8 92.8h1.2v1.2h-1.2zM31.2 234.2h1.4v1.0h-1.4zM188.0 174.7h2.3v0.8h-2.3zM125.7 191.7h0.8v1.2h-0.8zM275.8 31.7h1.7v1.2h-1.7zM83.0 160.3h1.4v2.0h-1.4zM262.8 82.2h1.4v0.9h-1.4zM10.3 307.4h1.2v0.9h-1.2zM37.5 111.8h2.3v2.0h-2.3zM59.4 176.4h2.3v0.8h-2.3zM153.5 246.5h0.8v0.8h-0.8zM167.5 224.5h1.2v1.0h-1.2zM56.6 169.4h0.9v1.2h-0.9zM196.1 126.7h1.4v0.8h-1.4zM151.8 211.8h1.7v1.0h-1.7zM227.3 157.6h1.4v1.5h-1.4zM3.2 228.6h0.9v1.2h-0.9zM166.3 18.7h1.0v1.5h-1.0zM161.2 197.8h1.4v1.0h-1.4zM104.0 24.3h1.7v1.0h-1.7zM259.8 129.0h0.9v0.9h-0.9zM26.8 135.4h1.4v1.0h-1.4zM64.9 67.6h0.9v1.0h-0.9zM150.2 125.1h1.2v1.2h-1.2zM160.9 161.9h1.4v0.8h-1.4zM3.0 305.5h1.4v1.0h-1.4zM6.9 183.9h0.8v1.5h-0.8zM4.9 316.0h0.9v1.2h-0.9zM83.8 228.5h1.2v0.8h-1.2zM78.1 208.0h1.2v0.9h-1.2zM176.7 173.1h1.2v0.8h-1.2zM150.7 139.6h2.3v1.2h-2.3zM104.5 226.1h1.7v1.5h-1.7zM115.7 86.1h1.2v1.2h-1.2zM10.8 35.1h1.4v0.8h-1.4zM70.8 84.4h2.3v0.8h-2.3zM26.2 39.6h1.7v0.9h-1.7zM62.2 196.9h2.3v1.5h-2.3zM146.8 208.6h1.0v0.9h-1.0zM228.4 64.2h0.8v0.8h-0.8zM246.2 126.8h1.0v1.0h-1.0zM265.1 129.9h0.9v1.2h-0.9zM122.6 153.0h0.9v0.8h-0.9zM174.5 177.0h2.3v1.2h-2.3zM211.0 115.1h0.9v1.2h-0.9zM290.2 113.2h2.3v0.8h-2.3zM222.9 135.0h2.3v2.0h-2.3zM115.6 159.7h0.9v0.8h-0.9zM153.0 242.7h2.3v1.2h-2.3zM97.0 142.6h1.0v1.5h-1.0zM22.3 166.7h1.2v1.5h-1.2zM8.1 179.0h2.1v1.5h-2.1zM7.1 169.7h1.4v0.8h-1.4zM222.8 152.1h0.8v0.8h-0.8zM218.4 33.8h1.7v1.5h-1.7zM180.0 64.7h0.8v1.5h-0.8zM279.1 0.3h1.7v1.0h-1.7zM171.8 178.3h1.7v1.5h-1.7zM146.9 0.5h2.8v2.8h-2.8zM85.4 80.5h1.2v0.9h-1.2zM60.0 203.6h1.0v1.2h-1.0zM21.2 110.9h1.7v1.5h-1.7zM182.0 147.1h1.0v0.9h-1.0zM154.7 172.7h1.7v0.9h-1.7zM269.7 123.6h2.3v2.0h-2.3zM241.8 93.2h2.3v1.0h-2.3zM138.6 108.9h0.8v1.0h-0.8zM190.0 170.0h1.4v0.9h-1.4zM69.9 195.2h1.4v1.2h-1.4zM100.1 70.2h2.3v1.0h-2.3zM15.2 298.7h2.3v1.0h-2.3zM42.0 277.9h3.9v3.8h-3.9zM7.0 260.4h1.0v1.0h-1.0zM112.2 1.5h1.2v0.9h-1.2zM46.7 159.3h1.0v0.9h-1.0zM3.8 304.7h0.9v1.5h-0.9zM267.3 112.3h3.9v1.9h-3.9zM145.4 103.1h2.3v1.0h-2.3zM233.6 38.2h0.8v1.0h-0.8zM0.7 154.6h0.8v1.5h-0.8zM23.1 254.7h0.8v1.0h-0.8zM55.0 236.5h2.3v0.9h-2.3zM247.5 133.0h1.4v1.0h-1.4zM258.1 91.1h0.8v1.0h-0.8zM257.5 128.8h0.8v1.2h-0.8zM93.8 91.6h2.3v1.5h-2.3zM73.9 264.4h2.8v1.9h-2.8zM198.6 112.6h1.7v2.0h-1.7zM23.4 303.5h1.0v1.2h-1.0zM235.0 142.1h1.0v1.5h-1.0zM58.0 55.9h2.3v1.5h-2.3zM1.3 335.7h1.0v2.0h-1.0zM72.4 215.5h0.9v0.8h-0.9zM124.0 131.0h1.4v1.0h-1.4zM58.0 227.6h1.4v1.5h-1.4zM259.8 39.4h3.9v1.5h-3.9zM246.2 145.0h1.2v1.2h-1.2zM145.9 173.5h0.9v2.0h-0.9zM18.0 130.8h1.4v0.8h-1.4zM65.3 51.4h1.2v0.9h-1.2zM32.8 45.4h0.8v0.8h-0.8zM161.1 122.7h1.7v1.2h-1.7zM39.5 161.4h2.3v1.2h-2.3zM45.1 168.0h1.2v2.0h-1.2zM161.5 194.2h2.3v0.8h-2.3zM18.9 130.5h1.8v1.9h-1.8zM139.2 100.6h0.9v1.5h-0.9zM29.9 129.4h2.3v1.0h-2.3zM168.3 198.0h1.7v1.0h-1.7zM157.1 32.7h1.2v2.0h-1.2zM4.0 257.9h1.7v0.8h-1.7zM37.9 143.5h1.7v0.8h-1.7zM215.6 156.4h1.4v1.0h-1.4zM58.2 217.1h2.3v1.0h-2.3zM93.7 100.8h0.8v0.8h-0.8zM149.6 117.7h1.0v1.0h-1.0zM33.0 190.8h1.7v1.5h-1.7zM59.9 37.6h2.8v1.5h-2.8zM111.5 86.2h1.0v0.9h-1.0zM52.5 168.3h0.8v1.0h-0.8zM30.5 129.4h1.4v2.0h-1.4zM207.5 159.7h1.2v2.0h-1.2zM208.7 152.0h5.3v2.3h-5.3zM28.1 144.0h0.9v1.2h-0.9zM105.9 76.8h2.3v2.0h-2.3zM220.5 92.6h0.9v2.0h-0.9zM168.5 49.6h1.7v0.9h-1.7zM61.7 123.5h1.2v0.8h-1.2zM306.7 77.3h2.3v1.5h-2.3zM69.1 107.6h1.7v1.5h-1.7zM17.7 167.8h0.8v1.0h-0.8zM147.2 120.7h5.3v2.8h-5.3zM87.5 168.6h1.4v0.8h-1.4zM14.1 58.6h1.7v1.5h-1.7zM150.5 160.8h1.4v1.2h-1.4zM9.6 26.1h1.2v1.2h-1.2zM298.8 41.7h1.8v2.8h-1.8zM90.1 152.2h2.3v0.9h-2.3zM65.1 173.1h5.3v1.7h-5.3zM17.8 146.1h1.4v2.0h-1.4zM105.9 141.8h0.8v1.5h-0.8zM74.4 198.4h2.3v1.0h-2.3zM273.4 86.4h0.8v2.0h-0.8zM243.6 120.9h2.3v0.9h-2.3zM3.7 152.8h0.8v1.5h-0.8zM71.5 17.6h1.4v0.9h-1.4zM6.3 194.3h2.3v1.0h-2.3zM173.3 140.9h1.2v1.5h-1.2zM48.8 77.1h3.2v1.9h-3.2zM15.6 115.0h0.8v2.0h-0.8zM238.3 132.5h0.8v1.5h-0.8zM215.3 158.7h1.0v0.8h-1.0zM29.0 153.1h1.4v1.0h-1.4zM12.6 175.8h3.9v3.8h-3.9zM71.3 220.2h3.2v1.5h-3.2zM223.4 185.9h1.4v0.9h-1.4zM9.3 124.8h1.4v1.0h-1.4zM55.6 170.2h1.7v1.0h-1.7zM62.9 231.7h0.9v2.0h-0.9zM33.9 148.1h2.3v1.0h-2.3zM29.0 189.7h1.2v1.0h-1.2zM42.8 262.8h0.8v2.0h-0.8zM68.6 222.2h0.8v1.0h-0.8zM22.6 189.0h1.4v1.0h-1.4zM48.9 239.0h2.3v0.8h-2.3zM3.7 132.2h0.9v0.9h-0.9zM115.0 87.4h1.4v1.5h-1.4zM79.9 94.6h1.2v1.5h-1.2zM37.2 281.7h0.9v1.2h-0.9zM75.0 50.9h1.2v0.8h-1.2zM67.9 192.9h2.3v1.2h-2.3zM138.7 123.4h1.7v0.8h-1.7zM240.5 152.9h2.3v0.8h-2.3zM201.1 97.6h1.7v1.0h-1.7zM37.2 58.3h0.9v0.8h-0.9zM130.9 127.5h1.4v1.2h-1.4zM163.1 146.4h1.4v2.0h-1.4zM8.9 39.2h0.9v1.0h-0.9zM134.5 249.0h0.8v0.8h-0.8zM105.0 147.2h2.3v0.9h-2.3zM147.6 116.3h1.0v0.8h-1.0zM163.9 52.3h1.2v1.5h-1.2zM54.2 20.8h0.9v0.9h-0.9zM219.6 132.6h1.2v1.2h-1.2zM9.1 96.7h1.4v0.9h-1.4zM89.1 61.0h1.0v1.0h-1.0zM160.4 192.3h2.3v1.5h-2.3zM169.8 247.7h1.7v2.0h-1.7zM125.5 7.4h1.2v1.2h-1.2zM116.3 83.7h1.0v0.9h-1.0zM75.9 84.0h1.4v1.5h-1.4zM156.9 188.3h2.3v0.9h-2.3zM-1.2 119.2h0.9v1.5h-0.9zM202.1 77.6h1.4v0.9h-1.4zM25.9 213.4h2.3v0.9h-2.3zM88.9 96.6h1.7v1.0h-1.7zM282.2 127.9h1.4v0.8h-1.4zM4.0 219.4h0.9v0.9h-0.9zM167.3 203.7h0.8v1.2h-0.8zM173.2 183.9h2.3v1.5h-2.3zM3.3 269.1h2.1v2.3h-2.1zM166.9 84.4h0.8v0.9h-0.8zM47.5 48.2h1.7v1.2h-1.7zM161.0 127.0h1.4v1.5h-1.4zM7.1 214.1h1.0v1.0h-1.0zM109.7 85.4h2.3v0.8h-2.3zM83.0 36.9h1.4v1.2h-1.4zM39.7 7.0h1.0v1.0h-1.0zM24.5 275.6h2.1v1.7h-2.1zM195.9 65.4h1.2v1.5h-1.2zM47.7 90.3h0.9v1.5h-0.9zM42.6 206.3h1.2v1.2h-1.2zM72.9 211.0h1.0v0.9h-1.0zM63.8 147.6h1.4v2.0h-1.4zM276.6 127.7h2.3v1.5h-2.3zM74.6 39.1h2.3v0.8h-2.3zM119.9 176.9h0.8v0.8h-0.8zM118.6 101.1h1.0v1.0h-1.0zM3.6 321.0h1.2v0.8h-1.2zM8.5 282.7h1.0v1.2h-1.0zM208.3 111.8h3.9v3.8h-3.9zM15.7 233.2h1.2v0.8h-1.2zM14.6 122.9h0.9v0.9h-0.9zM39.0 241.8h1.2v1.0h-1.2zM2.8 102.4h1.7v1.2h-1.7zM111.9 90.0h1.2v0.8h-1.2zM178.2 173.5h1.4v0.9h-1.4zM264.1 44.1h0.8v1.0h-0.8zM52.7 58.5h1.0v0.9h-1.0zM175.6 154.0h2.3v2.0h-2.3zM218.3 151.3h0.8v1.2h-0.8zM10.5 75.2h1.4v0.9h-1.4zM75.6 234.5h1.2v0.8h-1.2zM146.4 117.1h1.2v1.0h-1.2zM31.3 138.3h2.3v0.8h-2.3zM215.4 173.3h1.7v0.9h-1.7zM208.8 145.1h1.7v0.9h-1.7zM163.5 79.4h1.0v1.0h-1.0zM26.4 146.2h1.7v0.9h-1.7zM230.2 148.2h0.9v2.0h-0.9zM18.6 123.3h2.3v1.2h-2.3zM69.3 215.0h1.4v0.9h-1.4zM5.9 180.8h1.7v1.0h-1.7zM96.1 78.3h1.0v1.2h-1.0zM129.2 17.6h2.1v1.5h-2.1zM51.9 227.6h2.3v1.2h-2.3zM143.7 92.5h0.9v2.0h-0.9zM43.3 205.3h1.2v0.9h-1.2zM18.3 141.0h0.8v2.0h-0.8zM275.5 112.9h1.7v2.0h-1.7zM10.6 123.9h1.0v0.8h-1.0zM68.1 135.9h2.3v0.9h-2.3zM180.4 145.7h2.3v1.0h-2.3zM63.1 218.4h1.7v2.0h-1.7zM43.7 165.5h1.4v0.8h-1.4zM20.9 146.0h0.9v1.2h-0.9zM4.9 216.6h1.4v1.5h-1.4zM65.2 72.6h1.7v1.2h-1.7zM233.0 139.6h1.0v0.8h-1.0zM118.8 172.5h2.3v1.0h-2.3zM271.5 43.1h0.9v1.5h-0.9zM39.0 230.6h1.0v1.2h-1.0zM145.5 123.5h1.7v1.2h-1.7zM218.6 156.6h0.9v1.2h-0.9zM103.7 147.3h0.9v1.2h-0.9zM276.0 37.6h1.2v0.8h-1.2zM114.7 188.2h1.2v1.5h-1.2zM48.0 170.0h1.0v2.0h-1.0zM23.4 225.6h1.2v2.0h-1.2zM103.4 83.6h1.0v1.2h-1.0zM19.2 139.3h1.4v1.0h-1.4zM14.2 54.6h1.4v2.0h-1.4zM168.7 244.1h1.7v1.5h-1.7zM189.0 17.3h2.3v1.2h-2.3zM236.0 99.0h1.2v0.8h-1.2zM17.0 184.8h1.4v1.5h-1.4zM155.5 11.3h1.7v1.5h-1.7zM205.5 67.9h1.2v2.0h-1.2zM25.4 208.6h1.7v0.9h-1.7zM25.5 159.6h0.8v1.5h-0.8zM25.3 18.7h0.8v2.0h-0.8zM157.8 109.7h1.4v1.0h-1.4zM105.8 139.4h1.7v0.9h-1.7zM176.7 177.2h1.4v1.5h-1.4zM85.3 192.1h2.3v1.0h-2.3zM42.1 280.9h3.2v2.3h-3.2zM40.6 161.7h1.7v1.0h-1.7zM92.9 73.7h0.8v0.9h-0.8zM25.2 136.4h1.0v2.0h-1.0zM117.9 86.3h1.0v0.9h-1.0zM69.2 183.5h1.0v0.9h-1.0zM302.4 32.8h1.4v1.2h-1.4zM82.0 105.5h1.4v2.0h-1.4zM149.5 85.0h1.0v0.9h-1.0zM156.0 44.6h1.4v1.5h-1.4zM201.1 68.6h1.7v1.2h-1.7zM143.3 152.1h1.7v1.0h-1.7zM45.1 182.8h1.0v1.5h-1.0zM104.9 66.7h3.9v1.5h-3.9zM73.5 96.0h1.0v0.8h-1.0zM185.0 130.5h2.3v0.9h-2.3zM89.9 226.5h2.8v2.8h-2.8zM13.9 181.1h0.9v1.0h-0.9zM212.5 156.2h1.0v1.5h-1.0zM22.6 190.9h0.9v0.8h-0.9zM10.7 101.7h0.9v1.2h-0.9zM25.8 267.9h0.9v0.8h-0.9zM74.6 163.1h1.2v0.8h-1.2zM3.7 132.1h1.2v2.0h-1.2zM89.5 27.0h1.2v2.0h-1.2zM47.2 130.8h2.3v1.0h-2.3zM9.9 292.9h1.4v0.8h-1.4zM26.9 288.8h1.2v1.0h-1.2zM191.5 181.8h0.8v0.8h-0.8zM214.2 157.9h0.9v1.2h-0.9zM234.4 166.5h1.2v1.0h-1.2zM258.7 111.6h1.4v1.5h-1.4zM84.8 182.9h0.8v2.0h-0.8zM216.8 44.9h1.7v2.0h-1.7zM68.4 121.6h5.3v1.7h-5.3zM181.9 40.9h0.8v2.0h-0.8zM181.3 91.6h2.3v1.5h-2.3zM246.3 18.8h1.4v1.0h-1.4zM246.4 76.6h0.8v1.0h-0.8zM163.0 193.6h0.8v0.9h-0.8zM180.8 196.5h2.3v0.9h-2.3zM185.9 172.5h0.8v0.8h-0.8zM158.7 165.9h2.3v1.2h-2.3zM64.2 227.2h1.0v1.5h-1.0zM14.2 132.3h2.3v1.5h-2.3zM8.1 329.3h1.2v1.5h-1.2zM155.9 89.5h0.9v1.5h-0.9zM105.5 96.6h1.2v1.5h-1.2zM126.2 55.8h1.2v0.9h-1.2zM172.9 153.1h0.8v1.2h-0.8zM107.9 9.3h0.8v0.8h-0.8zM55.6 150.9h2.3v1.2h-2.3zM270.6 44.2h0.9v1.5h-0.9zM70.2 162.4h0.9v1.0h-0.9zM49.1 215.8h1.4v0.9h-1.4zM132.7 248.3h1.0v2.0h-1.0zM5.2 276.0h2.8v3.8h-2.8zM159.9 192.6h1.7v1.0h-1.7zM186.4 59.4h2.3v0.9h-2.3zM21.1 146.6h1.0v1.0h-1.0zM151.6 99.0h0.8v1.2h-0.8zM190.8 179.1h2.3v1.2h-2.3zM49.0 233.0h1.0v1.0h-1.0zM146.6 201.0h1.4v2.0h-1.4zM74.6 79.5h0.8v1.0h-0.8zM215.3 186.6h1.2v2.0h-1.2zM267.0 15.5h0.9v1.0h-0.9zM209.9 156.7h0.9v0.9h-0.9zM37.3 146.3h0.8v1.2h-0.8zM118.1 85.2h1.7v1.2h-1.7zM255.0 126.8h2.3v0.9h-2.3zM119.9 79.5h1.0v0.9h-1.0zM2.3 122.2h1.2v1.2h-1.2zM23.8 265.5h0.9v1.5h-0.9zM75.0 230.2h1.0v0.9h-1.0zM52.0 233.9h1.2v1.2h-1.2zM29.7 261.9h2.3v0.8h-2.3zM60.5 158.2h1.7v2.0h-1.7zM71.5 262.4h1.4v1.0h-1.4zM160.0 207.5h1.0v1.0h-1.0zM31.7 268.6h1.2v2.0h-1.2zM246.4 48.8h1.7v1.0h-1.7zM71.1 77.5h2.3v1.5h-2.3zM180.2 131.9h2.3v1.2h-2.3zM126.0 100.8h2.3v0.8h-2.3zM247.9 121.6h1.4v2.0h-1.4zM101.5 178.6h1.7v2.0h-1.7zM15.0 136.4h1.2v0.8h-1.2zM61.0 208.2h2.3v1.0h-2.3zM252.7 142.4h1.0v0.8h-1.0zM193.2 149.5h1.4v0.9h-1.4zM71.6 232.1h1.2v1.5h-1.2zM8.3 209.5h1.4v1.0h-1.4zM276.7 69.9h1.0v0.9h-1.0zM149.4 167.9h2.3v0.8h-2.3zM56.7 195.4h0.8v0.9h-0.8zM8.6 91.7h0.9v0.9h-0.9zM41.4 168.2h1.2v0.9h-1.2zM190.5 0.4h0.8v0.8h-0.8zM129.9 129.5h1.4v1.5h-1.4zM62.7 239.5h0.9v1.0h-0.9zM57.3 213.3h1.0v0.8h-1.0zM59.1 44.0h2.8v1.9h-2.8zM165.0 170.6h1.4v2.0h-1.4zM143.0 160.6h1.2v1.0h-1.2zM291.7 9.2h1.7v2.0h-1.7zM71.0 84.2h1.7v2.0h-1.7zM14.5 172.5h1.0v1.2h-1.0zM226.4 145.3h1.7v1.0h-1.7zM116.9 201.7h1.2v1.5h-1.2zM78.2 13.0h2.3v2.0h-2.3zM46.8 21.5h0.9v1.2h-0.9zM159.0 127.4h2.1v1.9h-2.1zM79.7 68.3h1.7v0.8h-1.7zM197.2 172.9h0.8v1.2h-0.8zM62.5 211.2h1.0v1.5h-1.0zM13.8 285.8h1.7v0.8h-1.7zM163.9 214.4h2.3v0.8h-2.3zM60.3 120.6h1.4v0.8h-1.4zM126.7 197.6h0.9v0.8h-0.9zM267.6 109.6h0.8v1.5h-0.8zM26.4 251.3h1.0v1.2h-1.0zM7.0 333.3h1.2v1.0h-1.2zM7.7 86.3h1.0v1.0h-1.0zM46.3 218.7h1.4v1.5h-1.4zM220.4 133.7h1.0v0.9h-1.0zM302.6 101.7h0.9v0.8h-0.9zM94.5 104.6h1.2v0.9h-1.2zM165.2 87.4h1.2v1.5h-1.2zM235.2 141.0h1.2v1.2h-1.2zM174.1 152.5h1.2v0.9h-1.2zM144.4 208.9h0.8v1.0h-0.8zM86.3 65.1h1.2v2.0h-1.2zM22.5 307.7h1.0v0.8h-1.0zM153.7 93.8h2.3v1.5h-2.3zM17.8 183.9h1.7v0.8h-1.7zM169.5 16.5h0.8v2.0h-0.8zM69.3 175.6h2.3v1.5h-2.3zM135.8 10.1h1.2v0.9h-1.2zM167.4 171.3h1.4v1.0h-1.4zM67.3 205.6h0.8v0.8h-0.8zM32.1 203.1h2.3v2.0h-2.3zM70.1 154.0h2.3v0.8h-2.3zM47.8 90.6h2.3v1.5h-2.3zM130.9 2.2h1.0v1.0h-1.0zM242.8 34.0h1.0v1.0h-1.0zM148.8 127.6h2.3v1.7h-2.3zM34.5 44.4h1.2v1.0h-1.2zM166.3 4.7h2.3v1.2h-2.3zM28.4 193.6h2.3v1.5h-2.3zM124.6 135.7h1.0v1.5h-1.0zM23.9 174.9h0.8v0.8h-0.8zM10.6 27.1h1.0v1.2h-1.0zM37.4 166.3h1.7v2.0h-1.7zM142.7 175.9h0.8v1.5h-0.8zM22.0 190.3h1.7v2.0h-1.7zM81.8 11.8h1.2v0.9h-1.2zM26.7 300.8h1.0v0.8h-1.0zM22.7 130.9h0.8v1.2h-0.8zM13.5 113.2h0.9v0.8h-0.9zM20.6 164.1h0.9v1.2h-0.9zM157.6 118.5h1.0v1.5h-1.0zM239.8 104.3h0.9v0.8h-0.9zM157.4 162.7h1.7v2.0h-1.7zM166.5 117.8h0.9v1.5h-0.9zM167.8 168.5h1.7v1.0h-1.7zM121.7 90.3h2.3v1.2h-2.3zM68.4 218.5h3.9v1.5h-3.9zM256.4 25.4h1.4v1.0h-1.4zM24.8 291.2h1.0v1.0h-1.0zM105.8 147.3h1.2v1.0h-1.2zM19.2 122.4h2.3v1.0h-2.3zM19.4 141.2h0.8v2.0h-0.8zM144.5 157.4h3.2v2.8h-3.2zM32.0 297.4h1.8v1.9h-1.8zM141.3 90.5h1.2v0.9h-1.2zM65.2 233.0h1.4v0.8h-1.4zM107.2 107.2h0.8v1.2h-0.8zM110.4 202.6h1.7v1.5h-1.7zM257.9 125.3h3.2v1.5h-3.2zM292.0 26.3h0.9v0.9h-0.9zM124.4 199.7h2.1v3.8h-2.1zM47.1 41.7h0.9v1.5h-0.9zM46.3 208.0h2.8v1.5h-2.8zM8.8 97.6h1.7v1.2h-1.7zM41.7 226.0h0.8v2.0h-0.8zM22.9 213.0h1.0v1.2h-1.0zM22.7 136.2h1.0v2.0h-1.0zM167.1 111.5h1.2v0.9h-1.2zM245.2 135.2h1.4v0.8h-1.4zM31.0 102.8h1.4v1.2h-1.4zM31.0 99.7h0.9v2.0h-0.9zM8.1 145.4h2.3v1.2h-2.3zM88.5 62.0h1.7v2.0h-1.7zM187.2 170.5h0.9v1.0h-0.9zM244.8 130.6h1.0v0.9h-1.0zM156.3 147.3h2.3v2.0h-2.3zM237.7 13.9h2.3v1.5h-2.3zM218.7 0.5h0.9v1.2h-0.9zM33.2 161.4h1.7v2.0h-1.7zM40.9 152.7h2.3v0.8h-2.3zM48.3 29.0h1.0v0.8h-1.0zM169.6 244.2h1.0v1.2h-1.0zM192.2 172.9h1.7v2.0h-1.7zM12.3 144.3h1.4v1.5h-1.4zM3.5 4.7h3.9v1.5h-3.9zM63.0 268.9h1.7v2.0h-1.7zM188.5 160.1h1.0v2.0h-1.0zM222.2 141.7h1.7v1.5h-1.7zM217.9 190.4h1.2v1.2h-1.2zM102.2 95.3h1.0v0.8h-1.0zM227.5 151.4h0.9v1.0h-0.9zM93.2 232.2h1.2v1.2h-1.2zM153.4 117.8h1.4v1.0h-1.4zM45.4 148.5h3.2v1.7h-3.2zM185.3 170.6h1.0v0.8h-1.0zM37.5 169.8h0.9v2.0h-0.9zM149.3 122.0h2.3v0.8h-2.3zM214.3 158.4h2.1v2.3h-2.1zM112.5 145.0h1.2v2.0h-1.2zM52.5 152.4h0.9v0.8h-0.9zM199.1 174.0h1.4v0.8h-1.4zM6.3 17.4h1.4v2.0h-1.4zM193.3 7.4h1.2v1.2h-1.2zM215.5 151.4h2.3v0.9h-2.3zM53.4 200.8h0.8v1.0h-0.8zM12.1 134.2h1.7v0.9h-1.7zM221.9 160.9h0.9v0.8h-0.9zM69.7 217.7h1.2v0.9h-1.2zM156.7 118.3h2.3v1.2h-2.3zM76.9 24.1h1.2v2.0h-1.2zM13.2 160.0h1.0v0.9h-1.0zM291.9 11.3h0.9v1.5h-0.9zM58.8 203.1h2.3v1.2h-2.3zM50.5 199.4h1.7v0.9h-1.7zM41.2 20.1h1.7v1.2h-1.7zM19.4 93.3h1.4v1.2h-1.4zM89.9 211.9h1.7v1.0h-1.7zM192.2 155.9h2.3v0.9h-2.3zM130.2 193.7h1.4v0.9h-1.4zM16.6 199.0h0.8v0.8h-0.8zM54.7 230.9h1.7v2.0h-1.7zM60.0 191.2h1.7v2.0h-1.7zM78.8 33.4h1.2v2.0h-1.2zM254.7 121.3h1.4v0.8h-1.4zM147.4 82.9h3.2v2.3h-3.2zM98.3 73.5h1.2v1.0h-1.2zM27.9 99.4h1.7v1.0h-1.7zM146.1 103.0h1.4v1.5h-1.4zM6.1 128.9h2.3v1.2h-2.3zM181.6 63.8h1.7v0.9h-1.7zM170.2 252.0h2.3v0.9h-2.3zM165.0 87.3h1.0v0.9h-1.0zM101.4 124.0h1.7v2.0h-1.7zM159.3 161.2h1.4v1.2h-1.4zM202.5 82.9h0.9v0.9h-0.9zM280.2 96.2h2.3v0.8h-2.3zM94.9 49.5h1.2v2.0h-1.2zM180.5 159.3h1.4v1.0h-1.4zM11.6 134.1h2.3v1.5h-2.3zM294.7 82.7h1.7v1.2h-1.7zM16.7 244.6h1.0v1.5h-1.0zM51.2 119.3h1.2v0.8h-1.2zM149.7 127.2h0.9v1.2h-0.9zM160.2 135.9h2.1v2.8h-2.1zM69.6 195.0h2.3v1.2h-2.3zM19.6 156.2h1.4v1.2h-1.4zM107.9 153.0h2.3v0.8h-2.3zM48.3 98.4h0.8v0.9h-0.8zM52.4 194.1h1.7v1.5h-1.7zM33.8 86.6h1.0v0.8h-1.0zM14.6 111.5h1.4v1.5h-1.4zM29.9 104.0h1.0v1.5h-1.0zM97.9 228.5h1.0v0.9h-1.0zM89.8 91.1h1.7v2.0h-1.7zM150.6 178.0h1.7v1.5h-1.7zM72.9 165.9h0.9v1.5h-0.9zM163.8 29.2h0.8v1.2h-0.8zM165.8 189.7h1.7v1.5h-1.7zM14.0 172.2h0.8v0.9h-0.8zM15.8 255.3h0.8v1.0h-0.8zM106.4 233.5h1.2v0.9h-1.2zM103.9 78.5h2.8v2.8h-2.8zM289.1 101.5h1.7v0.8h-1.7zM45.9 74.8h0.9v1.2h-0.9zM45.6 211.4h0.8v1.2h-0.8zM244.9 139.2h0.9v0.9h-0.9zM209.6 50.5h0.9v1.5h-0.9zM203.8 148.4h2.3v0.8h-2.3zM74.9 214.5h1.2v0.9h-1.2zM6.2 125.7h1.0v0.8h-1.0zM49.7 172.3h1.0v1.2h-1.0zM73.3 228.7h1.2v1.5h-1.2zM28.9 152.7h2.3v1.0h-2.3zM89.6 88.0h0.9v2.0h-0.9zM274.2 108.6h1.7v1.5h-1.7zM149.2 188.3h1.7v0.9h-1.7zM147.8 171.5h0.8v2.0h-0.8zM256.3 117.3h0.8v2.0h-0.8zM127.6 25.9h1.0v1.5h-1.0zM58.6 179.0h1.0v0.9h-1.0zM16.3 17.6h5.3v3.8h-5.3zM145.4 63.5h0.9v1.2h-0.9zM19.4 237.3h1.7v1.2h-1.7zM164.5 243.1h0.9v0.9h-0.9zM20.0 198.9h1.2v2.0h-1.2zM49.5 220.7h2.3v2.0h-2.3zM191.0 83.3h1.2v2.0h-1.2zM136.0 149.7h3.2v1.5h-3.2zM20.6 239.8h2.3v0.8h-2.3zM33.8 130.1h1.2v0.9h-1.2zM113.0 88.4h0.9v0.9h-0.9zM5.0 276.0h1.2v0.8h-1.2zM24.1 189.8h2.3v1.0h-2.3zM69.9 200.2h2.8v2.3h-2.8zM36.4 211.4h1.7v0.8h-1.7zM8.4 135.4h2.3v1.5h-2.3zM299.9 92.5h0.8v1.2h-0.8zM204.3 162.1h1.0v0.8h-1.0zM33.9 163.3h1.2v1.0h-1.2zM138.1 167.8h0.9v1.0h-0.9zM10.6 78.0h1.7v1.5h-1.7zM130.4 81.7h2.3v0.8h-2.3zM49.3 216.3h2.3v1.2h-2.3zM63.2 129.3h3.2v1.9h-3.2zM13.9 225.6h1.4v0.9h-1.4zM293.1 76.8h2.3v1.0h-2.3zM106.7 119.3h0.9v2.0h-0.9zM142.9 119.2h3.9v1.9h-3.9zM271.7 123.4h1.2v0.9h-1.2zM35.9 150.8h1.2v0.9h-1.2zM178.9 180.8h1.2v1.2h-1.2zM167.1 80.0h2.3v1.0h-2.3zM171.7 94.0h1.4v1.5h-1.4zM185.8 124.6h0.9v1.2h-0.9zM77.9 2.6h1.0v1.0h-1.0zM29.4 236.3h1.4v0.9h-1.4zM206.6 197.8h0.8v2.0h-0.8zM193.3 176.5h1.7v0.8h-1.7zM7.8 333.4h0.8v1.5h-0.8zM75.7 209.4h2.3v2.3h-2.3zM47.6 25.5h1.0v2.0h-1.0zM49.3 127.9h0.9v1.2h-0.9zM210.0 165.4h0.9v2.0h-0.9zM118.2 49.0h5.3v3.8h-5.3zM41.8 159.4h1.2v1.0h-1.2zM119.4 154.4h1.0v1.2h-1.0zM215.6 82.6h1.4v0.8h-1.4zM43.9 158.1h1.7v0.8h-1.7zM267.9 79.5h1.2v0.8h-1.2zM139.2 254.3h1.2v1.5h-1.2zM67.1 210.0h1.7v1.2h-1.7zM17.5 258.9h0.9v1.5h-0.9zM140.7 165.9h1.2v1.5h-1.2zM226.3 38.3h1.7v2.0h-1.7zM99.1 200.0h0.8v1.0h-0.8zM52.0 230.4h1.7v1.2h-1.7zM234.7 148.4h1.0v1.0h-1.0zM34.6 132.8h0.8v1.0h-0.8zM27.3 270.5h1.2v0.8h-1.2zM102.8 15.5h1.4v0.9h-1.4zM144.3 205.5h3.2v1.7h-3.2zM88.2 70.0h1.0v2.0h-1.0zM11.5 103.8h1.2v1.2h-1.2zM47.1 254.7h1.0v1.0h-1.0zM37.6 268.9h2.3v0.9h-2.3zM14.8 149.0h3.9v2.3h-3.9zM162.5 199.8h1.2v1.0h-1.2zM144.7 34.7h1.4v1.0h-1.4zM17.5 164.0h1.7v1.0h-1.7zM170.0 231.4h1.4v1.2h-1.4zM35.6 216.6h2.3v1.5h-2.3zM46.2 41.1h1.2v0.8h-1.2zM216.9 81.0h2.3v1.0h-2.3zM205.2 158.4h1.2v0.8h-1.2zM163.2 113.5h1.0v1.2h-1.0zM226.1 53.5h0.9v1.2h-0.9zM270.4 137.0h0.8v1.5h-0.8zM10.1 319.3h1.4v1.5h-1.4zM224.1 28.3h1.0v1.2h-1.0zM45.4 138.8h0.9v0.8h-0.9zM292.6 110.5h1.7v1.2h-1.7zM149.9 120.1h1.4v1.5h-1.4zM160.5 196.7h1.0v0.9h-1.0zM304.4 98.0h0.9v1.2h-0.9zM253.5 113.1h2.3v2.0h-2.3zM61.8 69.9h5.3v1.9h-5.3zM145.3 83.2h1.0v2.0h-1.0zM221.8 124.7h0.9v1.2h-0.9zM181.4 157.9h0.8v1.0h-0.8zM57.8 118.6h1.7v0.9h-1.7zM44.1 185.8h2.3v0.9h-2.3zM17.4 227.6h0.8v0.8h-0.8zM22.3 43.7h2.3v1.5h-2.3zM23.2 136.3h0.9v0.8h-0.9zM185.1 174.0h0.8v1.0h-0.8zM205.4 150.8h2.3v1.2h-2.3zM64.2 192.6h1.2v0.9h-1.2zM24.0 259.0h2.1v2.3h-2.1zM266.7 130.5h0.9v1.2h-0.9zM152.6 113.1h3.2v1.9h-3.2zM57.0 120.8h1.0v0.8h-1.0zM99.7 82.4h2.3v3.8h-2.3zM187.2 184.1h1.0v1.5h-1.0zM250.8 124.2h1.0v1.2h-1.0zM10.8 254.1h0.9v1.2h-0.9zM183.3 162.0h1.0v0.8h-1.0zM28.5 204.1h0.9v1.2h-0.9zM144.6 3.8h1.2v2.0h-1.2zM116.9 140.3h0.8v0.9h-0.8zM127.7 147.1h5.3v2.3h-5.3zM1.4 291.7h2.3v1.5h-2.3zM288.2 123.5h1.2v1.0h-1.2zM241.6 98.8h1.2v1.2h-1.2zM42.8 253.7h1.8v2.8h-1.8zM248.9 116.6h1.4v1.0h-1.4zM231.6 135.3h2.3v0.8h-2.3zM76.6 220.6h1.7v0.9h-1.7zM180.0 148.7h2.3v1.2h-2.3zM205.8 94.6h1.7v1.2h-1.7zM4.0 257.4h0.9v1.5h-0.9zM121.9 63.4h1.7v2.0h-1.7zM28.6 140.7h0.8v1.0h-0.8zM21.7 143.6h0.8v0.8h-0.8zM102.0 9.0h0.9v2.0h-0.9zM251.8 117.3h0.9v1.5h-0.9zM252.0 127.1h3.9v2.8h-3.9zM221.8 43.4h0.8v0.9h-0.8zM36.9 199.1h0.9v0.8h-0.9zM238.2 37.0h1.2v2.0h-1.2zM128.6 121.4h1.0v1.0h-1.0zM208.6 172.0h1.0v1.2h-1.0zM139.6 8.6h2.3v1.5h-2.3zM162.5 179.4h1.0v1.2h-1.0zM235.9 91.0h0.8v1.0h-0.8zM6.5 16.8h0.8v0.8h-0.8zM131.9 244.2h1.7v2.0h-1.7zM10.3 245.6h0.9v2.0h-0.9zM90.5 21.5h1.7v1.2h-1.7zM18.7 222.4h1.4v1.5h-1.4zM300.1 9.0h1.7v0.9h-1.7zM289.2 105.2h1.7v1.2h-1.7zM256.1 98.2h1.7v2.0h-1.7zM109.2 149.7h2.3v1.0h-2.3zM149.8 168.5h1.7v0.8h-1.7zM214.2 164.3h0.9v2.0h-0.9zM116.9 215.1h0.9v2.0h-0.9zM89.1 76.3h2.3v1.0h-2.3zM147.9 0.6h2.3v0.8h-2.3zM202.1 151.4h1.0v0.8h-1.0zM52.6 99.4h1.7v2.0h-1.7zM110.2 95.6h1.0v0.9h-1.0zM13.6 222.8h5.3v1.9h-5.3zM139.3 250.8h1.7v0.9h-1.7zM128.7 81.3h0.9v0.8h-0.9zM99.6 199.2h5.3v2.3h-5.3zM51.7 128.0h2.3v1.5h-2.3zM162.2 67.4h2.3v1.9h-2.3zM294.1 28.4h2.3v1.2h-2.3zM69.3 93.0h2.8v1.7h-2.8zM2.9 94.2h1.8v2.8h-1.8zM163.3 140.2h0.9v0.9h-0.9zM5.0 311.2h0.8v0.8h-0.8zM173.2 186.9h0.8v1.5h-0.8zM108.2 225.0h1.7v1.0h-1.7zM144.5 167.1h2.3v1.5h-2.3zM155.8 58.9h3.9v2.3h-3.9zM96.2 92.9h2.3v1.5h-2.3zM292.9 33.3h1.0v2.0h-1.0zM104.0 78.1h1.7v0.9h-1.7zM153.1 175.3h1.4v1.5h-1.4zM268.8 2.5h1.7v1.0h-1.7zM68.7 218.7h1.2v0.9h-1.2zM96.4 5.3h1.7v1.2h-1.7zM117.7 174.6h1.0v0.9h-1.0zM82.7 62.3h0.8v1.0h-0.8zM25.8 149.6h2.1v1.9h-2.1zM192.3 175.8h0.8v1.0h-0.8zM158.6 117.7h0.9v0.8h-0.9zM270.6 132.6h1.2v1.0h-1.2zM0.4 235.7h1.0v2.0h-1.0zM278.0 109.5h0.9v0.9h-0.9zM162.7 104.1h2.3v1.5h-2.3zM26.0 157.8h1.0v1.0h-1.0zM296.4 106.9h2.8v3.8h-2.8zM112.8 92.1h2.3v1.5h-2.3zM276.4 24.9h3.9v2.3h-3.9zM7.3 328.5h2.3v2.0h-2.3zM89.1 101.8h0.9v1.5h-0.9zM56.1 82.2h0.9v0.9h-0.9zM246.9 118.2h2.3v2.0h-2.3zM45.1 243.5h1.0v1.5h-1.0zM46.4 209.0h1.7v1.0h-1.7zM22.4 187.0h1.2v1.2h-1.2zM147.7 150.3h2.3v2.0h-2.3zM49.4 78.1h1.0v1.5h-1.0zM254.8 142.7h1.4v0.8h-1.4zM109.6 226.0h1.2v1.2h-1.2zM18.0 116.5h2.3v0.9h-2.3zM181.0 150.7h1.0v2.0h-1.0zM275.4 123.3h0.8v0.8h-0.8zM91.7 236.4h1.7v1.5h-1.7zM271.2 130.6h2.3v1.0h-2.3zM118.8 151.6h1.0v1.5h-1.0zM198.3 92.1h1.4v1.0h-1.4zM0.3 85.6h0.9v0.9h-0.9zM163.7 135.5h2.3v1.0h-2.3zM217.0 156.3h1.7v2.0h-1.7zM118.4 137.3h1.4v0.9h-1.4zM151.0 30.1h0.8v1.5h-0.8zM203.3 36.2h2.3v1.5h-2.3zM153.7 32.6h0.8v2.0h-0.8zM199.3 171.3h0.8v1.2h-0.8zM39.9 40.3h0.9v0.8h-0.9zM144.3 207.9h2.3v1.2h-2.3zM194.8 212.6h1.4v1.0h-1.4zM256.7 129.8h1.4v2.0h-1.4zM134.0 44.9h1.8v1.9h-1.8zM199.3 57.5h1.7v2.0h-1.7zM70.8 61.1h1.2v1.2h-1.2zM94.9 64.9h1.7v0.9h-1.7zM212.3 155.8h1.2v1.2h-1.2zM22.0 251.2h1.4v1.0h-1.4zM217.5 177.8h1.2v1.0h-1.2zM221.7 144.7h1.0v1.5h-1.0zM138.6 1.9h1.0v1.5h-1.0zM201.4 108.6h1.2v0.9h-1.2zM199.0 171.1h0.8v1.5h-0.8zM36.8 128.3h1.7v0.8h-1.7zM95.6 128.4h1.0v1.2h-1.0zM14.8 150.8h1.7v1.0h-1.7zM201.7 162.8h2.8v2.8h-2.8zM48.5 27.7h0.9v1.5h-0.9zM15.2 204.9h2.3v0.9h-2.3zM71.1 219.0h0.8v1.2h-0.8zM200.1 194.7h3.9v3.8h-3.9zM260.7 119.2h1.8v2.3h-1.8zM200.5 170.9h5.3v1.7h-5.3zM182.3 139.6h0.8v1.2h-0.8zM233.8 87.9h0.9v1.5h-0.9zM293.7 101.7h0.8v2.0h-0.8zM291.2 82.8h2.3v1.5h-2.3zM63.2 194.4h1.7v0.9h-1.7zM285.1 33.6h0.8v1.0h-0.8zM8.9 70.2h1.7v0.8h-1.7zM240.5 128.1h1.2v1.2h-1.2zM220.9 156.7h1.7v0.9h-1.7zM128.7 191.2h1.4v1.2h-1.4zM10.9 98.5h1.4v2.0h-1.4zM118.4 135.7h0.8v0.9h-0.8zM67.4 31.3h1.2v0.9h-1.2zM301.1 41.4h1.7v0.9h-1.7zM86.6 112.0h0.9v1.5h-0.9zM248.3 60.9h2.3v1.0h-2.3zM216.6 147.4h0.8v1.2h-0.8zM256.9 125.6h2.1v1.7h-2.1zM31.5 150.1h0.8v1.2h-0.8zM3.4 177.0h1.7v2.0h-1.7zM23.1 306.6h1.4v0.9h-1.4zM113.9 66.3h0.8v0.8h-0.8zM21.5 230.4h1.2v2.0h-1.2zM234.3 64.8h1.0v1.5h-1.0zM7.4 135.8h1.0v0.8h-1.0zM18.8 72.2h1.7v0.8h-1.7zM135.6 160.8h1.2v0.9h-1.2zM38.0 149.4h2.1v2.8h-2.1zM12.5 265.1h2.3v2.0h-2.3zM70.3 109.2h1.2v1.0h-1.2zM5.0 64.6h0.9v1.5h-0.9zM195.5 160.2h1.4v1.5h-1.4zM34.0 5.3h0.9v2.0h-0.9zM14.0 109.8h1.2v2.0h-1.2zM159.3 214.8h1.0v1.2h-1.0zM116.0 140.3h1.4v0.9h-1.4zM68.0 273.4h2.3v2.3h-2.3zM20.1 82.9h0.8v1.2h-0.8zM97.0 2.8h0.9v0.8h-0.9zM194.8 206.3h2.3v1.2h-2.3zM263.1 119.8h1.4v1.5h-1.4zM112.9 146.3h1.7v1.2h-1.7zM278.8 135.0h1.7v1.2h-1.7zM41.5 144.2h1.2v1.5h-1.2zM87.4 52.2h1.7v0.9h-1.7zM15.4 129.4h1.2v0.8h-1.2zM1.6 171.2h1.2v2.0h-1.2zM53.6 217.3h1.7v0.8h-1.7zM37.3 163.6h1.2v1.0h-1.2zM76.6 187.9h2.3v1.9h-2.3zM200.2 166.1h0.9v0.9h-0.9zM82.0 69.0h1.7v1.5h-1.7zM213.0 180.4h2.3v0.9h-2.3zM153.9 111.0h0.8v1.0h-0.8zM20.5 231.4h1.0v1.5h-1.0zM216.5 55.6h1.7v1.5h-1.7zM112.1 107.7h1.0v1.5h-1.0zM21.3 256.8h2.3v1.2h-2.3zM127.5 17.4h1.8v2.8h-1.8zM68.7 67.5h0.9v1.0h-0.9zM167.7 252.3h3.2v2.3h-3.2zM34.6 154.4h1.0v2.0h-1.0zM90.1 98.4h1.0v1.2h-1.0zM19.7 132.1h2.3v2.0h-2.3zM187.9 149.7h0.8v1.2h-0.8zM191.4 174.9h2.8v1.7h-2.8zM173.6 177.9h0.8v1.5h-0.8zM250.4 8.6h0.8v1.0h-0.8zM65.6 156.9h1.7v1.2h-1.7zM30.7 196.4h2.3v3.8h-2.3zM15.4 314.8h1.4v1.5h-1.4zM159.1 197.9h1.0v0.8h-1.0zM174.9 189.0h2.3v0.9h-2.3zM279.7 12.3h1.7v1.0h-1.7zM90.8 63.2h1.2v0.9h-1.2zM209.3 143.4h2.3v1.0h-2.3zM175.2 147.0h0.9v0.8h-0.9zM14.3 146.6h0.8v0.8h-0.8zM68.1 219.8h0.8v2.0h-0.8zM67.6 20.5h0.9v2.0h-0.9zM129.8 71.0h1.7v2.0h-1.7zM94.2 96.7h0.9v1.2h-0.9zM174.3 252.0h0.8v0.9h-0.8zM22.8 143.1h1.7v2.0h-1.7zM213.6 54.7h1.0v2.0h-1.0zM104.1 81.1h1.0v0.9h-1.0zM205.6 95.3h0.8v0.9h-0.8zM68.2 22.6h1.7v1.0h-1.7zM67.3 85.9h1.4v0.9h-1.4zM48.9 172.9h2.3v0.8h-2.3zM10.3 178.2h1.0v0.9h-1.0zM27.3 125.0h1.0v1.0h-1.0zM173.9 228.9h1.0v1.0h-1.0zM34.2 262.8h0.9v1.2h-0.9zM82.7 212.0h1.2v1.2h-1.2zM228.8 131.6h1.0v0.8h-1.0zM240.5 122.4h1.2v1.2h-1.2zM286.7 97.3h2.3v1.2h-2.3zM177.7 215.2h1.4v1.2h-1.4zM1.5 243.6h1.4v2.0h-1.4zM117.0 208.1h0.9v1.0h-0.9zM292.0 94.2h1.7v1.0h-1.7zM21.3 102.9h1.2v0.8h-1.2zM133.6 139.7h1.2v1.0h-1.2zM12.6 82.5h2.3v2.0h-2.3zM160.2 106.9h2.3v0.9h-2.3zM275.3 110.7h0.8v0.9h-0.8zM23.6 127.0h1.4v0.9h-1.4zM131.2 164.2h1.7v1.5h-1.7zM133.6 165.5h1.4v1.2h-1.4zM29.2 223.9h1.2v0.9h-1.2zM236.8 70.4h1.2v2.0h-1.2zM245.3 133.3h2.3v0.9h-2.3zM131.1 149.2h1.0v0.8h-1.0zM39.6 203.3h1.4v1.5h-1.4zM66.0 275.2h0.8v1.0h-0.8zM66.4 222.2h0.8v1.0h-0.8zM199.4 25.2h1.0v1.0h-1.0zM139.5 208.4h2.3v1.0h-2.3zM208.4 199.3h1.7v1.0h-1.7zM267.5 131.2h1.2v2.0h-1.2zM0.2 339.2h0.9v1.2h-0.9zM204.6 140.7h2.8v2.8h-2.8zM158.8 191.0h1.2v1.0h-1.2zM26.8 247.3h1.0v1.0h-1.0zM106.6 132.8h0.8v1.5h-0.8zM228.0 179.2h1.4v0.8h-1.4zM114.3 12.1h2.3v1.5h-2.3zM101.5 57.8h2.3v1.5h-2.3zM124.3 98.1h1.4v2.0h-1.4zM26.8 165.8h0.9v0.8h-0.9zM35.6 296.9h0.9v0.8h-0.9zM42.1 116.8h1.8v1.5h-1.8zM9.0 296.5h1.2v1.2h-1.2zM133.9 200.3h0.9v1.2h-0.9zM101.7 131.5h1.2v2.0h-1.2zM109.0 5.3h1.7v1.5h-1.7zM165.6 243.0h1.2v1.2h-1.2zM38.4 40.0h0.8v1.0h-0.8zM23.9 146.4h1.0v0.8h-1.0zM155.9 50.3h2.1v2.8h-2.1zM71.2 134.7h1.2v0.9h-1.2zM206.6 151.0h1.4v2.0h-1.4zM33.1 8.1h1.4v0.9h-1.4zM214.4 161.4h1.7v0.9h-1.7zM131.4 154.3h2.3v1.2h-2.3zM48.4 84.6h0.8v0.9h-0.8zM177.3 30.2h1.0v1.0h-1.0zM87.8 233.2h0.9v1.2h-0.9zM72.5 220.4h0.9v1.2h-0.9zM146.4 173.9h1.0v1.0h-1.0zM255.8 118.3h0.8v1.5h-0.8zM124.5 84.1h2.3v2.3h-2.3zM286.0 34.2h1.2v1.0h-1.2zM214.4 141.7h1.0v1.2h-1.0zM214.4 71.7h0.9v0.9h-0.9zM39.9 235.3h1.0v0.9h-1.0zM67.9 59.5h0.9v2.0h-0.9zM276.1 98.7h2.3v0.8h-2.3zM32.0 295.9h0.9v1.5h-0.9zM31.9 75.2h2.3v0.9h-2.3zM16.6 138.1h1.2v1.5h-1.2zM9.3 230.2h2.1v1.5h-2.1zM51.8 129.5h0.9v1.0h-0.9zM225.0 157.8h1.0v0.9h-1.0zM18.8 139.3h1.7v1.0h-1.7zM45.9 219.1h0.8v1.5h-0.8zM146.7 92.9h1.4v1.5h-1.4zM164.3 11.7h1.0v2.0h-1.0zM143.0 20.4h2.3v2.0h-2.3zM80.7 227.3h1.7v1.0h-1.7zM0.7 266.5h0.9v0.8h-0.9zM150.7 110.6h1.7v0.8h-1.7zM4.3 350.6h1.2v1.2h-1.2zM165.3 245.2h0.9v2.0h-0.9zM29.0 152.8h2.3v1.7h-2.3zM279.5 110.2h0.9v2.0h-0.9zM180.9 169.4h0.9v1.0h-0.9zM146.4 242.6h1.7v1.5h-1.7zM67.3 112.3h1.2v1.5h-1.2zM160.6 125.4h1.2v2.0h-1.2zM261.0 126.1h3.9v3.8h-3.9zM143.8 113.7h5.3v2.8h-5.3zM82.6 229.7h1.4v0.9h-1.4zM173.7 157.5h1.4v0.9h-1.4zM245.0 123.4h1.0v1.0h-1.0zM130.3 174.1h1.0v0.9h-1.0zM1.9 338.2h0.8v1.5h-0.8zM12.5 309.0h2.3v1.0h-2.3zM3.1 302.2h1.4v1.0h-1.4zM46.8 162.0h1.7v1.2h-1.7zM26.3 253.4h2.3v1.5h-2.3zM211.3 165.6h1.7v1.5h-1.7zM174.7 161.6h2.3v0.9h-2.3zM62.1 260.8h1.0v1.2h-1.0zM119.9 54.4h1.2v1.0h-1.2zM50.8 277.1h1.7v1.0h-1.7zM231.9 170.4h2.3v1.0h-2.3zM68.8 54.8h2.3v0.8h-2.3zM259.4 114.7h1.0v1.0h-1.0zM36.6 152.7h1.4v1.2h-1.4zM3.1 183.6h2.3v0.8h-2.3zM212.7 133.5h0.8v0.8h-0.8zM176.3 168.0h0.9v1.5h-0.9zM159.3 184.3h1.4v1.0h-1.4zM66.9 74.0h1.0v2.0h-1.0zM23.3 134.8h1.2v0.8h-1.2zM62.9 216.9h1.7v0.9h-1.7zM62.3 230.3h1.4v0.8h-1.4zM158.0 94.0h0.8v1.2h-0.8zM16.3 270.3h1.2v0.8h-1.2zM71.0 223.7h1.0v1.0h-1.0zM125.6 233.1h1.4v2.0h-1.4zM177.2 209.0h1.2v1.5h-1.2zM192.4 176.9h1.2v0.8h-1.2zM54.5 249.7h1.2v0.8h-1.2zM90.4 129.5h1.7v0.9h-1.7zM206.5 149.4h1.7v1.0h-1.7zM301.4 105.8h1.7v0.9h-1.7zM66.1 189.9h1.7v1.5h-1.7zM242.5 126.7h1.2v1.0h-1.2zM2.3 109.1h1.4v0.8h-1.4zM164.1 19.9h0.9v0.8h-0.9zM20.4 139.5h1.2v0.9h-1.2zM4.7 265.2h1.2v0.8h-1.2zM272.8 120.5h0.8v1.2h-0.8zM226.3 170.6h1.4v1.0h-1.4zM38.8 251.5h1.2v1.2h-1.2zM37.4 200.8h1.0v0.9h-1.0zM122.8 29.9h2.3v0.8h-2.3zM70.2 229.5h1.4v1.5h-1.4zM210.4 200.2h1.0v2.0h-1.0zM153.2 119.9h1.2v2.0h-1.2zM91.3 99.1h2.3v1.7h-2.3zM182.3 222.0h1.0v1.2h-1.0zM183.3 170.5h1.2v1.2h-1.2zM17.5 130.8h0.9v1.0h-0.9zM75.9 224.4h1.0v1.0h-1.0zM97.4 115.7h2.3v1.5h-2.3zM34.2 216.2h1.0v1.5h-1.0zM106.1 152.8h1.0v1.2h-1.0zM183.1 179.3h0.9v1.5h-0.9zM7.0 218.1h1.8v2.8h-1.8zM125.7 105.0h1.2v0.9h-1.2zM217.7 151.6h1.8v2.3h-1.8zM79.9 199.9h0.8v0.8h-0.8zM55.2 168.0h1.0v1.2h-1.0zM90.1 53.9h1.0v1.5h-1.0zM71.1 120.4h1.4v2.0h-1.4zM149.6 126.9h1.7v0.9h-1.7zM75.6 185.1h1.2v0.8h-1.2zM101.5 213.6h5.3v1.7h-5.3zM285.0 108.6h1.0v0.8h-1.0zM46.4 112.9h1.0v1.2h-1.0zM100.8 230.5h1.2v1.0h-1.2zM18.2 151.9h1.7v1.5h-1.7zM133.5 225.8h0.8v2.0h-0.8zM23.5 158.1h0.9v1.2h-0.9zM52.1 110.9h1.0v0.9h-1.0zM63.9 200.5h0.8v1.5h-0.8zM2.2 263.6h0.9v0.8h-0.9zM211.9 112.5h1.7v1.2h-1.7zM87.1 243.1h1.2v0.9h-1.2zM45.6 265.4h2.3v1.0h-2.3zM64.4 52.7h0.8v2.0h-0.8zM50.3 214.1h2.3v2.0h-2.3zM23.4 106.2h1.0v1.0h-1.0zM51.5 219.7h3.2v1.9h-3.2zM99.6 95.5h1.7v0.8h-1.7zM11.2 49.7h0.8v0.8h-0.8zM271.4 77.2h1.7v0.9h-1.7zM158.3 39.3h1.7v1.2h-1.7zM88.1 63.3h0.9v2.0h-0.9zM60.6 144.6h0.9v1.2h-0.9zM13.2 157.3h1.7v1.0h-1.7zM103.3 164.3h0.8v1.2h-0.8zM5.5 255.0h1.7v0.9h-1.7zM105.6 209.2h2.1v1.5h-2.1zM35.6 196.3h1.4v0.8h-1.4zM106.9 136.0h0.9v0.9h-0.9zM15.0 217.5h3.9v1.5h-3.9zM33.3 298.7h1.4v1.2h-1.4zM233.6 83.2h1.0v0.8h-1.0zM169.9 53.0h1.0v1.2h-1.0zM101.1 106.1h1.4v1.2h-1.4zM15.0 158.1h1.4v1.5h-1.4zM66.2 176.5h1.0v1.5h-1.0zM151.9 185.2h1.7v1.5h-1.7zM56.5 44.7h5.3v1.9h-5.3zM71.7 80.2h1.4v1.5h-1.4zM210.3 146.1h1.4v0.8h-1.4zM76.0 91.0h2.3v0.9h-2.3zM144.2 167.2h0.9v0.9h-0.9zM212.2 141.9h0.9v2.0h-0.9zM61.5 241.4h3.9v1.7h-3.9zM70.5 74.3h1.4v1.5h-1.4zM181.4 186.7h1.0v1.5h-1.0zM13.4 155.3h0.8v2.0h-0.8zM183.8 51.3h1.2v2.0h-1.2zM89.2 56.5h1.7v0.9h-1.7zM228.2 145.2h5.3v1.7h-5.3zM90.4 124.9h2.3v1.0h-2.3zM225.1 67.6h1.2v2.0h-1.2zM227.3 180.0h2.3v0.9h-2.3zM161.6 31.1h2.3v0.9h-2.3zM272.7 51.0h2.1v1.5h-2.1zM137.8 189.3h1.0v1.2h-1.0zM61.5 111.6h1.7v0.8h-1.7zM89.5 59.5h2.3v0.8h-2.3zM124.1 174.8h1.2v1.0h-1.2zM278.4 51.0h1.4v1.5h-1.4zM49.3 268.3h1.2v0.8h-1.2zM4.5 296.4h2.3v1.9h-2.3zM20.3 229.6h1.4v1.2h-1.4zM32.2 45.0h0.8v1.0h-0.8zM122.1 144.1h2.3v1.0h-2.3zM171.0 181.3h1.0v0.9h-1.0zM98.8 76.0h0.8v2.0h-0.8zM94.2 6.3h2.3v0.8h-2.3zM103.4 78.0h1.4v1.0h-1.4zM54.6 217.4h2.3v1.5h-2.3zM210.3 26.2h2.3v0.8h-2.3zM207.3 38.5h2.3v1.5h-2.3zM232.5 98.8h1.7v2.0h-1.7zM92.7 101.7h1.4v0.9h-1.4zM79.9 77.0h0.9v0.9h-0.9zM145.8 208.6h1.2v0.9h-1.2zM51.4 266.6h1.0v0.8h-1.0zM17.0 167.2h1.2v1.0h-1.2zM297.5 112.3h1.7v1.0h-1.7zM49.0 206.6h0.8v1.5h-0.8zM162.2 145.5h2.3v1.0h-2.3zM119.8 45.3h0.8v2.0h-0.8zM216.4 146.1h1.2v1.2h-1.2zM62.6 96.2h2.3v1.0h-2.3zM84.0 107.9h1.0v1.0h-1.0zM120.1 223.0h1.4v0.9h-1.4zM149.1 161.4h0.8v1.0h-0.8zM19.5 250.7h0.8v2.0h-0.8zM140.0 224.1h2.3v1.7h-2.3zM89.7 71.8h1.0v0.8h-1.0zM29.9 135.2h1.0v1.2h-1.0zM77.8 217.9h1.2v1.0h-1.2zM144.5 204.9h1.2v0.8h-1.2zM214.7 64.2h0.9v0.8h-0.9zM57.3 236.4h0.9v1.0h-0.9zM51.7 118.5h1.4v1.5h-1.4zM168.8 240.5h1.0v1.0h-1.0zM136.8 10.8h0.8v2.0h-0.8zM50.6 181.8h2.8v2.8h-2.8zM77.8 203.0h1.2v1.2h-1.2zM40.9 247.7h1.4v1.5h-1.4zM167.6 149.6h1.0v1.2h-1.0zM24.6 294.5h1.7v1.0h-1.7zM212.8 171.4h2.3v1.5h-2.3zM146.6 134.5h0.9v0.8h-0.9zM164.5 102.8h1.0v2.0h-1.0zM113.3 55.0h0.8v1.5h-0.8zM237.1 136.1h2.3v2.0h-2.3zM41.3 272.4h0.8v1.0h-0.8zM49.4 120.8h1.4v1.2h-1.4zM16.6 152.7h1.7v1.5h-1.7zM136.3 212.5h1.7v1.5h-1.7zM239.2 48.0h0.8v1.5h-0.8zM270.5 77.7h1.7v2.0h-1.7zM252.5 128.7h0.8v1.5h-0.8zM102.0 50.5h0.9v0.8h-0.9zM273.0 8.2h1.4v1.2h-1.4zM49.0 111.3h1.4v0.9h-1.4zM32.2 250.1h0.8v1.0h-0.8zM219.4 2.9h5.3v1.7h-5.3zM10.1 316.5h0.9v1.5h-0.9zM223.6 182.1h1.0v1.5h-1.0zM5.0 188.7h0.9v1.0h-0.9zM109.2 86.2h0.9v0.8h-0.9zM112.0 89.5h1.2v1.0h-1.2zM112.3 98.8h1.7v1.2h-1.7zM12.7 242.3h0.8v1.0h-0.8zM10.6 53.1h1.4v0.8h-1.4zM44.0 221.2h1.0v1.0h-1.0zM29.1 254.1h2.3v1.2h-2.3zM16.4 241.8h0.8v1.2h-0.8zM79.7 232.8h1.0v1.5h-1.0zM247.9 135.4h1.0v2.0h-1.0zM219.8 157.9h1.4v2.0h-1.4zM170.7 241.7h0.9v1.0h-0.9zM114.8 159.2h1.0v1.2h-1.0zM5.7 330.5h2.3v1.0h-2.3zM1.8 339.5h1.2v0.9h-1.2zM23.5 142.2h0.8v1.0h-0.8zM16.2 12.9h1.0v2.0h-1.0zM152.6 185.5h1.7v1.2h-1.7zM70.8 230.7h1.0v1.2h-1.0zM120.0 84.6h2.8v1.9h-2.8zM211.1 86.2h5.3v3.8h-5.3zM190.6 48.7h2.3v1.0h-2.3zM92.7 72.0h3.2v1.9h-3.2zM130.7 212.9h0.9v1.0h-0.9zM181.2 166.3h1.7v0.9h-1.7zM229.7 150.8h1.7v1.0h-1.7zM51.3 114.6h0.8v1.5h-0.8zM86.0 76.1h1.8v2.8h-1.8zM208.2 176.9h2.3v1.0h-2.3zM7.7 69.1h0.9v0.8h-0.9zM263.6 12.6h1.4v1.5h-1.4zM123.5 35.9h1.7v1.0h-1.7zM204.5 194.3h2.3v1.2h-2.3zM86.6 141.6h3.2v1.7h-3.2zM83.4 38.6h0.9v0.9h-0.9zM31.1 260.2h2.3v1.2h-2.3zM60.4 238.0h1.4v1.5h-1.4zM169.4 187.2h1.4v2.0h-1.4zM300.0 32.6h0.9v1.2h-0.9zM196.8 129.2h1.0v1.2h-1.0zM53.9 213.9h1.4v1.5h-1.4zM247.9 118.4h1.0v2.0h-1.0zM68.4 242.8h1.4v2.0h-1.4zM7.6 293.8h1.7v2.0h-1.7zM95.2 94.4h0.9v0.8h-0.9zM35.1 221.3h1.0v2.0h-1.0zM228.2 134.9h2.3v1.5h-2.3zM139.7 167.4h2.3v0.8h-2.3zM47.4 122.2h1.4v0.9h-1.4zM65.5 63.1h2.3v0.8h-2.3zM211.1 162.0h1.4v0.9h-1.4zM67.8 73.5h1.2v1.0h-1.2zM61.5 212.8h5.3v3.8h-5.3zM285.3 11.6h1.7v0.9h-1.7zM205.2 145.1h1.4v0.8h-1.4zM150.1 46.5h0.9v1.0h-0.9zM144.0 30.0h1.4v0.8h-1.4zM129.8 221.3h0.8v0.9h-0.8zM9.4 74.1h1.7v0.9h-1.7zM76.2 148.8h1.4v1.0h-1.4zM285.4 66.0h0.8v2.0h-0.8zM260.3 112.7h1.2v1.5h-1.2zM168.8 192.2h5.3v1.7h-5.3zM177.1 166.0h1.2v1.2h-1.2zM24.4 216.9h1.2v2.0h-1.2zM131.0 190.0h3.9v2.8h-3.9zM25.4 232.3h0.9v1.2h-0.9zM176.0 163.2h5.3v3.8h-5.3zM229.6 141.8h0.9v1.2h-0.9zM5.9 129.9h0.8v0.9h-0.8zM0.4 360.2h1.7v1.2h-1.7zM19.2 193.6h1.0v1.5h-1.0zM109.0 145.4h1.2v2.0h-1.2zM13.9 274.2h2.3v0.9h-2.3zM197.9 206.9h0.9v0.9h-0.9zM66.0 225.6h1.2v1.2h-1.2zM0.6 302.1h1.2v1.2h-1.2zM273.1 125.8h1.4v0.9h-1.4zM10.5 136.7h0.8v1.0h-0.8zM49.9 197.5h1.2v2.0h-1.2zM148.3 118.0h0.8v2.0h-0.8zM200.3 6.1h1.4v2.0h-1.4zM49.9 211.5h2.3v0.8h-2.3zM129.9 149.1h1.0v2.0h-1.0zM69.2 242.4h0.9v1.0h-0.9zM96.9 155.0h1.2v0.9h-1.2zM187.4 186.2h0.8v1.5h-0.8zM36.5 280.0h1.4v1.5h-1.4zM268.2 116.2h1.4v0.9h-1.4zM118.6 143.0h1.0v1.2h-1.0zM234.9 168.7h1.7v0.9h-1.7zM150.1 75.7h1.8v3.8h-1.8zM203.3 104.1h1.0v0.9h-1.0zM111.3 201.4h1.2v2.0h-1.2zM34.2 109.5h2.3v1.7h-2.3zM107.7 66.0h1.0v0.9h-1.0zM54.9 64.7h1.8v3.8h-1.8zM65.0 235.7h0.8v1.0h-0.8zM22.9 148.1h0.8v0.9h-0.8zM83.2 151.6h1.2v2.0h-1.2zM167.3 178.4h1.0v2.0h-1.0zM160.9 115.8h1.7v1.0h-1.7zM178.1 221.0h0.9v0.8h-0.9zM162.0 214.9h1.4v1.0h-1.4zM83.4 0.3h0.9v1.0h-0.9zM121.8 142.2h1.7v1.0h-1.7zM229.8 84.0h1.4v1.2h-1.4zM288.6 62.6h0.9v0.9h-0.9zM228.5 78.1h0.9v1.2h-0.9zM23.3 74.4h1.4v1.2h-1.4zM154.1 173.6h0.9v1.5h-0.9zM232.2 122.0h0.9v0.8h-0.9zM53.7 161.8h1.4v0.8h-1.4zM170.7 183.9h2.3v1.5h-2.3zM43.1 185.7h2.3v0.8h-2.3zM154.8 65.8h1.4v1.2h-1.4zM245.7 24.1h0.8v2.0h-0.8zM61.5 123.1h1.2v0.9h-1.2zM162.7 142.4h1.4v0.9h-1.4zM98.4 151.0h2.3v0.8h-2.3zM83.9 138.1h2.3v1.5h-2.3zM22.9 23.5h1.7v1.2h-1.7zM5.5 199.3h1.8v3.8h-1.8zM176.8 177.0h1.2v1.5h-1.2zM229.7 132.3h1.8v2.3h-1.8zM26.1 269.2h3.2v1.5h-3.2zM39.4 281.2h1.4v1.5h-1.4zM47.5 245.2h1.2v1.5h-1.2zM201.8 167.1h1.4v1.0h-1.4zM73.0 91.3h2.3v0.9h-2.3zM185.1 25.1h1.4v0.8h-1.4zM93.6 162.3h1.7v1.5h-1.7zM264.3 81.2h1.7v1.0h-1.7zM90.1 235.2h1.2v0.9h-1.2zM55.4 225.2h2.3v1.2h-2.3zM59.9 195.5h1.4v1.0h-1.4zM17.4 87.2h1.4v0.8h-1.4zM301.4 93.3h0.9v1.5h-0.9zM219.1 150.5h1.2v1.0h-1.2zM30.9 37.0h0.9v2.0h-0.9zM224.0 160.1h1.4v0.9h-1.4zM68.8 223.6h2.3v2.0h-2.3zM27.1 232.5h1.2v0.8h-1.2zM290.4 57.2h0.8v1.0h-0.8zM154.6 136.6h1.4v0.9h-1.4zM20.1 268.3h1.8v1.9h-1.8zM181.0 181.5h0.9v1.5h-0.9zM60.0 250.5h1.7v2.0h-1.7zM9.0 99.8h2.3v1.9h-2.3zM58.0 214.6h0.8v1.5h-0.8zM163.0 31.2h0.8v0.9h-0.8zM255.2 5.1h0.9v1.0h-0.9zM49.4 162.1h0.8v0.9h-0.8zM182.0 20.9h0.9v0.9h-0.9zM172.2 149.6h1.0v2.0h-1.0zM116.4 22.4h5.3v2.3h-5.3zM115.7 28.9h2.3v0.9h-2.3zM19.2 103.0h1.7v1.2h-1.7zM66.5 274.8h0.9v1.0h-0.9zM118.3 100.9h0.9v1.0h-0.9zM51.0 155.8h0.9v0.8h-0.9zM53.7 160.9h1.7v1.5h-1.7zM36.6 166.8h0.8v1.2h-0.8zM60.6 19.4h1.2v2.0h-1.2zM180.8 183.3h2.3v2.0h-2.3zM55.8 268.9h1.2v1.2h-1.2zM158.3 173.3h1.2v0.8h-1.2zM10.6 138.5h1.2v1.0h-1.2zM101.9 22.0h1.2v0.8h-1.2zM64.5 219.2h1.0v1.2h-1.0zM294.1 99.2h0.9v1.5h-0.9zM9.0 127.4h1.2v0.9h-1.2zM98.1 226.6h1.7v1.2h-1.7zM223.5 151.5h0.8v0.8h-0.8zM165.8 242.8h1.7v0.8h-1.7zM133.7 61.3h1.0v1.0h-1.0zM31.5 161.2h1.2v0.9h-1.2zM4.0 211.7h1.7v0.8h-1.7zM62.3 200.9h2.3v0.9h-2.3zM16.5 98.3h1.7v2.0h-1.7zM112.0 209.5h1.4v1.5h-1.4zM173.1 174.6h1.7v2.0h-1.7zM265.6 123.1h2.8v2.3h-2.8zM55.7 13.2h2.3v1.5h-2.3zM29.8 208.3h0.8v0.8h-0.8zM190.9 169.2h0.9v0.8h-0.9zM107.0 86.7h2.3v1.5h-2.3zM196.3 208.0h2.1v3.8h-2.1zM60.5 96.3h0.8v2.0h-0.8zM197.8 179.1h2.8v1.7h-2.8zM0.8 107.1h1.2v0.8h-1.2zM110.6 11.0h0.8v1.2h-0.8zM183.1 184.8h1.2v2.0h-1.2zM54.6 163.9h1.2v1.0h-1.2zM105.5 50.5h1.7v1.5h-1.7zM282.0 100.1h1.4v1.2h-1.4zM106.5 105.5h2.1v2.8h-2.1zM230.5 136.7h1.7v1.5h-1.7zM274.9 38.6h3.2v1.9h-3.2zM215.1 173.9h1.0v2.0h-1.0zM101.0 102.2h1.7v0.9h-1.7zM179.3 145.8h0.9v2.0h-0.9zM87.0 237.2h2.3v1.2h-2.3zM132.7 18.2h1.2v0.9h-1.2zM207.1 157.8h1.4v1.2h-1.4zM156.0 169.2h1.7v2.0h-1.7zM70.4 183.2h2.3v1.2h-2.3zM100.0 101.6h3.2v3.8h-3.2zM74.8 220.6h1.7v1.5h-1.7zM138.5 169.2h1.0v1.5h-1.0zM67.6 207.5h3.9v1.5h-3.9zM55.6 0.3h1.4v1.0h-1.4zM69.7 70.6h0.9v1.0h-0.9zM66.7 80.1h1.7v0.9h-1.7zM291.0 41.4h0.9v1.2h-0.9zM59.6 192.1h1.0v0.8h-1.0zM22.9 300.8h1.0v1.2h-1.0zM265.6 71.5h1.0v1.0h-1.0zM78.6 235.2h1.0v1.2h-1.0zM47.6 251.1h1.0v2.0h-1.0zM188.3 45.0h0.9v2.0h-0.9zM46.9 179.9h1.7v0.9h-1.7zM43.3 196.5h0.8v1.0h-0.8zM38.0 273.8h1.2v0.9h-1.2zM98.9 77.0h0.9v2.0h-0.9zM65.7 68.7h1.0v0.9h-1.0zM58.6 125.6h1.7v2.0h-1.7zM12.6 103.0h1.7v1.0h-1.7zM142.5 88.9h1.0v1.2h-1.0zM91.2 181.2h0.8v0.8h-0.8zM249.0 134.2h0.8v2.0h-0.8zM15.5 58.6h1.4v1.5h-1.4zM177.9 181.5h1.2v2.0h-1.2zM32.7 97.5h1.4v2.0h-1.4zM10.5 285.5h0.8v0.8h-0.8zM22.9 217.3h0.9v1.2h-0.9zM69.3 207.9h1.2v1.5h-1.2zM247.9 138.1h1.4v0.8h-1.4zM49.8 169.5h2.3v1.9h-2.3zM249.5 18.0h0.9v1.5h-0.9zM140.6 109.5h0.9v1.0h-0.9zM187.2 174.1h1.2v2.0h-1.2zM66.5 65.1h1.2v1.2h-1.2zM57.4 90.5h0.8v2.0h-0.8zM224.1 132.3h1.4v1.0h-1.4zM206.3 96.3h1.7v1.5h-1.7zM50.4 209.9h1.2v1.5h-1.2zM278.1 87.2h0.8v2.0h-0.8zM108.0 153.5h0.8v0.8h-0.8zM7.3 140.7h1.7v2.0h-1.7zM77.4 96.5h3.9v1.7h-3.9zM8.3 243.1h1.0v0.9h-1.0zM37.8 75.8h1.7v0.9h-1.7zM17.0 252.5h1.2v2.0h-1.2zM181.7 152.1h1.7v2.0h-1.7zM224.4 159.2h1.0v0.8h-1.0zM32.9 270.3h1.0v0.8h-1.0zM294.5 116.2h1.7v1.5h-1.7zM11.0 208.7h0.8v1.2h-0.8zM168.2 256.1h1.4v1.2h-1.4zM181.7 45.6h0.9v1.2h-0.9zM18.6 187.3h1.2v0.8h-1.2zM84.6 83.8h0.8v0.8h-0.8zM261.0 133.8h1.2v1.5h-1.2zM165.1 203.4h0.8v0.9h-0.8zM273.6 134.6h0.8v1.2h-0.8zM56.7 199.0h3.2v1.9h-3.2zM85.6 213.6h1.7v0.8h-1.7zM191.3 181.4h2.3v1.2h-2.3zM143.5 85.6h0.9v0.8h-0.9zM8.8 67.5h0.9v0.9h-0.9zM116.7 39.2h0.8v1.5h-0.8zM48.4 181.5h2.8v2.3h-2.8zM18.5 290.8h1.4v2.0h-1.4zM157.6 87.1h1.2v1.5h-1.2zM115.4 154.6h1.0v0.9h-1.0zM97.5 172.1h1.0v1.0h-1.0zM120.9 50.4h1.2v1.0h-1.2zM156.7 178.6h1.0v1.0h-1.0zM3.9 154.0h2.3v1.2h-2.3zM46.2 124.4h2.3v1.0h-2.3zM60.6 121.1h1.0v0.9h-1.0zM212.8 130.6h2.3v1.0h-2.3zM209.7 155.1h0.9v0.9h-0.9zM139.5 126.9h1.0v2.0h-1.0zM49.6 175.7h1.4v1.5h-1.4zM40.2 164.8h1.7v1.2h-1.7zM65.2 183.6h1.7v1.5h-1.7zM187.0 169.4h1.7v1.0h-1.7zM90.5 68.0h1.7v1.0h-1.7zM139.8 97.3h1.4v0.9h-1.4zM22.6 95.0h1.4v1.2h-1.4zM158.8 63.1h0.9v1.0h-0.9zM132.7 88.1h1.0v1.0h-1.0zM1.5 269.7h1.7v0.9h-1.7zM207.1 47.4h0.8v1.0h-0.8zM2.8 252.5h0.9v1.0h-0.9zM183.7 175.8h0.8v0.9h-0.8zM21.9 159.6h1.7v0.9h-1.7zM225.8 138.7h1.0v1.0h-1.0zM93.8 227.5h0.8v0.9h-0.8zM75.5 123.6h0.9v0.8h-0.9zM60.5 198.8h1.2v1.5h-1.2zM232.3 2.3h2.3v0.8h-2.3zM93.2 98.4h1.2v1.5h-1.2zM153.9 94.0h1.0v0.9h-1.0zM22.5 231.5h1.0v0.9h-1.0zM174.3 89.7h1.8v1.7h-1.8zM268.4 29.9h0.9v1.5h-0.9zM14.3 291.0h0.9v1.2h-0.9zM222.3 140.9h1.7v1.5h-1.7zM181.1 116.8h1.7v0.8h-1.7zM99.8 193.1h1.4v0.8h-1.4zM47.1 177.5h0.8v1.2h-0.8zM51.8 219.9h1.0v0.8h-1.0zM184.0 90.0h5.3v2.3h-5.3zM170.6 80.7h2.8v1.9h-2.8zM20.1 94.6h0.9v1.5h-0.9zM20.0 133.8h1.0v0.9h-1.0zM300.6 47.9h0.9v0.8h-0.9zM26.8 134.9h2.1v1.9h-2.1zM142.9 154.5h1.2v1.0h-1.2zM241.2 118.9h2.3v0.9h-2.3zM163.5 172.4h1.4v1.2h-1.4zM92.2 77.1h2.3v0.9h-2.3zM27.6 58.1h0.9v1.5h-0.9zM14.8 213.8h1.0v1.2h-1.0zM31.8 151.9h1.7v1.0h-1.7zM56.8 57.6h1.4v0.9h-1.4zM120.0 139.5h3.9v3.8h-3.9zM138.3 255.7h1.2v0.9h-1.2zM230.5 171.6h2.3v0.9h-2.3zM6.8 268.5h3.2v1.7h-3.2zM71.2 89.9h1.0v1.5h-1.0zM145.6 62.1h1.2v1.5h-1.2zM195.9 176.5h1.4v1.0h-1.4zM282.8 99.4h1.4v0.8h-1.4zM113.7 237.8h1.7v0.9h-1.7zM68.1 58.5h0.9v1.0h-0.9zM91.4 79.6h0.8v0.9h-0.8zM3.5 82.3h1.7v2.0h-1.7zM281.1 25.9h1.4v1.5h-1.4zM58.2 231.0h2.3v1.5h-2.3zM147.5 219.3h2.3v1.5h-2.3zM30.9 69.6h1.0v0.8h-1.0zM203.9 202.2h1.0v1.0h-1.0zM39.2 155.5h1.2v1.2h-1.2zM116.2 86.3h1.7v1.2h-1.7zM183.6 150.1h1.4v0.8h-1.4zM255.9 44.7h0.8v2.0h-0.8zM117.6 91.0h1.4v0.8h-1.4zM213.2 195.9h2.3v1.5h-2.3zM180.5 188.9h1.2v0.8h-1.2zM223.3 165.0h2.3v0.8h-2.3zM234.6 149.7h3.2v3.8h-3.2zM149.2 12.5h2.3v0.8h-2.3zM123.9 52.1h3.9v2.8h-3.9zM34.0 245.3h0.9v2.0h-0.9zM137.2 28.8h1.2v0.9h-1.2zM40.7 135.6h2.3v2.0h-2.3zM178.4 164.3h1.0v1.0h-1.0zM179.7 16.8h2.3v1.5h-2.3zM247.1 147.6h1.2v2.0h-1.2zM233.0 142.4h0.9v2.0h-0.9zM21.2 163.4h2.3v1.0h-2.3zM1.6 95.4h1.7v1.0h-1.7zM138.3 249.8h0.8v0.9h-0.8zM26.3 174.8h1.0v1.0h-1.0zM269.1 127.8h0.8v0.8h-0.8zM292.4 28.9h1.7v1.0h-1.7zM10.4 138.9h1.2v1.5h-1.2zM31.4 111.3h1.0v0.8h-1.0zM58.0 209.1h2.3v2.0h-2.3zM59.4 177.7h0.8v2.0h-0.8zM12.8 278.9h1.0v2.0h-1.0zM219.6 149.8h1.7v2.0h-1.7zM66.2 271.4h1.0v1.5h-1.0zM66.0 209.3h1.0v2.0h-1.0zM14.1 93.0h0.8v1.0h-0.8zM113.3 143.3h1.4v1.2h-1.4zM14.9 140.6h1.0v1.0h-1.0zM213.6 180.1h0.8v0.8h-0.8zM162.7 113.0h0.9v1.2h-0.9zM99.8 95.8h0.9v2.0h-0.9zM139.4 168.6h0.8v1.5h-0.8zM50.0 133.8h1.7v2.0h-1.7zM40.3 203.2h1.7v1.2h-1.7zM147.2 16.8h1.0v1.5h-1.0zM33.1 237.7h2.3v2.0h-2.3zM144.5 255.5h3.9v2.8h-3.9zM0.5 101.2h2.3v1.5h-2.3zM31.9 6.5h2.3v2.0h-2.3zM22.7 97.9h1.4v1.2h-1.4zM162.9 31.3h3.9v2.8h-3.9zM113.6 95.0h1.7v2.0h-1.7zM92.9 236.4h2.3v1.2h-2.3zM34.0 167.3h1.0v2.0h-1.0zM175.4 108.8h0.8v0.9h-0.8zM147.3 218.7h1.4v1.0h-1.4zM26.5 127.3h2.3v1.2h-2.3zM143.9 110.2h1.4v1.0h-1.4zM142.3 80.7h2.3v2.0h-2.3zM17.3 121.6h2.8v2.8h-2.8zM36.8 30.4h0.8v2.0h-0.8zM26.2 200.9h1.7v1.0h-1.7zM45.4 66.2h2.3v0.9h-2.3zM121.5 68.2h0.9v1.2h-0.9zM224.5 73.3h2.1v2.8h-2.1zM194.5 204.9h1.8v3.8h-1.8zM57.0 208.6h1.2v1.5h-1.2zM160.7 173.2h1.4v1.0h-1.4zM220.0 180.1h2.3v0.9h-2.3zM120.1 114.1h1.2v2.0h-1.2zM15.5 263.5h0.8v2.0h-0.8zM155.9 150.8h0.9v1.0h-0.9zM46.8 155.9h2.3v1.2h-2.3zM39.5 255.6h1.7v1.0h-1.7zM255.5 29.7h1.7v2.0h-1.7zM113.9 157.5h1.0v1.2h-1.0zM160.1 46.8h1.7v2.0h-1.7zM241.5 67.4h1.7v0.8h-1.7zM224.3 149.2h0.9v0.8h-0.9zM69.9 201.6h1.2v1.0h-1.2zM8.4 137.5h1.4v1.0h-1.4zM155.8 205.0h1.0v0.8h-1.0zM126.2 156.6h1.7v1.5h-1.7zM145.7 54.7h1.7v1.0h-1.7zM290.7 94.1h1.8v1.5h-1.8zM56.0 221.7h1.2v2.0h-1.2zM154.5 179.5h1.4v2.0h-1.4zM19.5 292.7h0.9v1.0h-0.9zM50.8 36.7h1.2v1.5h-1.2zM139.8 167.4h1.4v0.9h-1.4zM105.8 189.3h0.9v1.2h-0.9zM228.3 141.5h2.3v2.0h-2.3zM6.2 142.2h1.4v0.9h-1.4zM32.9 230.3h1.7v1.2h-1.7zM245.4 106.7h1.0v2.0h-1.0zM221.2 146.7h2.3v0.8h-2.3zM243.3 11.0h0.8v1.2h-0.8zM29.8 219.3h1.7v2.0h-1.7zM80.6 165.9h0.8v1.0h-0.8zM65.6 118.7h2.3v1.5h-2.3zM18.0 155.8h1.7v2.0h-1.7zM19.9 151.0h1.4v1.2h-1.4zM117.8 135.5h2.3v0.8h-2.3zM7.5 142.2h1.0v1.0h-1.0zM20.4 153.3h0.8v0.9h-0.8zM113.6 137.1h0.8v1.5h-0.8zM147.0 228.3h3.9v1.9h-3.9zM125.7 222.2h1.2v1.2h-1.2zM139.2 27.6h1.0v2.0h-1.0zM80.3 107.9h1.7v0.8h-1.7zM186.8 203.7h1.2v2.0h-1.2zM1.2 213.1h2.3v1.7h-2.3zM148.2 192.4h1.0v2.0h-1.0zM16.2 230.7h1.4v0.8h-1.4zM303.8 85.7h1.2v0.9h-1.2zM258.2 90.4h0.9v1.0h-0.9zM56.8 203.7h1.0v2.0h-1.0zM1.3 305.8h1.4v1.0h-1.4zM140.0 96.6h1.0v0.9h-1.0zM236.5 145.4h1.2v1.2h-1.2zM212.5 159.0h1.4v1.2h-1.4zM62.2 184.6h5.3v1.7h-5.3zM182.8 43.6h2.3v0.8h-2.3zM23.3 132.3h3.9v1.9h-3.9zM154.6 115.7h0.9v1.0h-0.9zM141.8 64.6h0.8v1.2h-0.8zM57.4 119.1h1.8v1.5h-1.8zM48.3 229.8h1.2v1.0h-1.2zM265.5 122.2h2.3v2.0h-2.3zM139.9 118.7h1.0v2.0h-1.0zM278.1 124.3h1.4v1.2h-1.4zM209.2 150.7h1.0v1.2h-1.0zM36.8 147.7h0.9v1.5h-0.9zM110.2 206.7h5.3v3.8h-5.3zM65.6 118.5h1.7v1.0h-1.7zM14.0 132.1h2.1v2.3h-2.1zM45.1 62.5h1.0v0.8h-1.0zM71.8 227.9h1.7v0.9h-1.7zM280.2 126.5h1.2v2.0h-1.2zM30.0 189.7h1.2v2.0h-1.2zM-1.4 84.4h1.0v1.2h-1.0zM247.0 138.0h1.0v1.0h-1.0zM14.4 95.1h0.8v1.5h-0.8zM264.3 23.3h1.4v1.5h-1.4zM279.2 107.3h1.7v0.9h-1.7zM0.4 251.2h1.7v1.5h-1.7zM7.8 237.8h1.0v0.9h-1.0zM12.2 273.0h1.4v1.5h-1.4zM0.2 63.0h1.2v1.5h-1.2zM74.5 222.3h1.7v0.8h-1.7zM177.3 182.2h1.4v0.8h-1.4zM170.0 170.9h1.2v1.2h-1.2zM103.6 168.3h1.2v1.5h-1.2zM286.5 9.1h1.4v2.0h-1.4zM254.1 142.8h5.3v1.9h-5.3zM132.2 47.5h1.4v1.0h-1.4zM234.4 28.8h1.7v0.8h-1.7zM125.7 146.1h1.0v1.5h-1.0zM174.4 129.4h2.1v1.7h-2.1zM148.7 130.5h2.3v0.8h-2.3zM78.6 247.1h1.2v1.0h-1.2zM137.8 183.5h0.9v1.5h-0.9zM66.2 220.7h0.9v1.0h-0.9zM250.7 144.4h1.0v1.5h-1.0zM116.4 90.5h0.8v0.8h-0.8zM164.8 61.1h1.2v0.9h-1.2zM173.6 159.4h0.9v1.0h-0.9zM249.4 125.8h1.7v1.5h-1.7zM58.3 122.0h1.0v1.0h-1.0zM49.0 178.8h1.7v1.0h-1.7zM136.8 124.4h1.4v1.5h-1.4zM40.8 62.6h1.4v1.0h-1.4zM156.9 152.7h1.7v0.9h-1.7zM42.5 135.0h1.7v1.0h-1.7zM81.4 73.6h0.9v1.5h-0.9zM146.9 232.7h1.0v1.2h-1.0zM198.1 102.0h1.4v0.8h-1.4zM62.2 255.3h1.2v1.2h-1.2zM35.7 201.1h1.7v1.2h-1.7zM69.9 90.6h0.8v1.0h-0.8zM256.9 121.0h2.3v1.9h-2.3zM267.3 94.5h0.8v1.0h-0.8zM112.2 144.6h0.9v1.5h-0.9zM70.8 226.4h0.9v1.2h-0.9zM162.8 187.5h1.0v1.2h-1.0zM41.1 133.2h0.9v1.0h-0.9zM100.9 174.3h1.2v0.9h-1.2zM154.3 147.7h2.3v1.2h-2.3zM200.3 125.1h0.9v1.5h-0.9zM5.3 203.7h1.0v1.5h-1.0zM59.6 251.3h1.4v2.0h-1.4zM10.8 227.3h0.8v0.8h-0.8zM40.4 286.9h5.3v3.8h-5.3zM40.0 215.9h0.8v1.2h-0.8zM58.0 221.1h0.9v1.2h-0.9zM53.0 188.1h2.3v1.5h-2.3zM148.3 87.1h2.3v1.2h-2.3zM124.0 17.2h1.2v0.8h-1.2zM25.3 47.4h1.2v1.2h-1.2zM232.9 136.1h1.2v2.0h-1.2zM69.8 4.8h1.7v0.9h-1.7zM191.7 44.5h0.8v2.0h-0.8zM0.9 3.2h1.0v1.5h-1.0zM45.4 111.4h2.3v1.5h-2.3zM12.2 87.3h0.8v0.8h-0.8zM44.1 205.8h1.4v0.8h-1.4zM236.8 170.1h1.4v0.9h-1.4zM256.0 63.5h1.0v0.8h-1.0zM125.4 227.2h0.9v0.8h-0.9zM21.9 144.1h0.8v1.2h-0.8zM148.5 18.6h1.2v2.0h-1.2zM133.3 56.8h0.8v0.8h-0.8zM108.2 228.0h0.9v1.2h-0.9zM83.3 97.4h1.4v1.5h-1.4zM63.0 271.2h2.3v0.8h-2.3zM21.9 7.7h0.9v0.9h-0.9zM92.5 86.0h1.7v2.0h-1.7zM58.4 113.6h1.0v1.0h-1.0zM9.2 1.7h2.3v0.8h-2.3zM193.7 45.2h2.1v1.5h-2.1zM161.7 61.0h1.0v0.9h-1.0zM160.1 189.1h2.1v2.3h-2.1zM55.2 169.6h1.2v1.5h-1.2zM10.5 21.6h1.0v0.9h-1.0zM58.5 227.8h1.4v1.2h-1.4zM20.7 143.9h1.0v0.8h-1.0zM33.5 116.6h1.7v1.0h-1.7zM8.4 198.7h2.8v1.9h-2.8zM3.8 200.4h0.8v1.5h-0.8zM90.3 98.5h0.8v0.8h-0.8zM211.6 83.6h1.7v1.0h-1.7zM39.5 13.2h3.9v1.7h-3.9zM304.6 20.6h1.4v0.8h-1.4zM53.2 152.7h2.3v1.5h-2.3zM89.1 231.0h0.8v1.0h-0.8zM198.2 16.4h0.8v1.0h-0.8zM77.9 190.3h1.4v1.0h-1.4zM118.2 93.5h1.4v0.8h-1.4zM233.1 156.1h1.2v1.5h-1.2zM48.3 260.6h2.3v2.0h-2.3zM3.8 320.9h1.7v0.9h-1.7zM82.7 81.2h0.8v0.8h-0.8zM7.8 138.9h2.3v1.0h-2.3zM150.9 246.7h1.0v0.9h-1.0zM79.9 220.0h1.0v0.8h-1.0zM33.6 157.8h1.7v1.2h-1.7zM120.7 207.7h1.0v0.8h-1.0zM196.8 95.4h1.0v0.8h-1.0zM162.9 198.4h1.7v0.9h-1.7zM9.2 272.4h1.4v2.0h-1.4zM28.4 184.6h0.9v1.2h-0.9zM151.2 163.9h1.2v1.0h-1.2zM218.5 149.3h2.3v1.5h-2.3zM32.0 224.0h2.3v1.2h-2.3zM194.3 155.6h1.7v0.8h-1.7zM26.1 297.7h0.8v0.8h-0.8zM150.2 249.0h0.8v0.9h-0.8zM156.3 87.7h1.2v0.9h-1.2zM169.7 179.6h0.9v1.2h-0.9zM76.3 34.1h1.7v0.8h-1.7zM8.9 133.1h0.8v1.5h-0.8zM96.5 153.6h1.0v0.9h-1.0zM114.0 89.9h1.0v2.0h-1.0zM97.0 83.3h1.8v1.5h-1.8zM19.4 257.2h1.4v0.9h-1.4zM262.7 118.1h1.4v1.5h-1.4zM154.4 199.9h2.3v0.9h-2.3zM68.0 28.2h1.0v1.2h-1.0zM149.1 251.4h1.7v1.0h-1.7zM61.5 219.6h0.9v1.5h-0.9zM239.3 2.4h1.0v2.0h-1.0zM20.5 195.4h1.4v1.0h-1.4zM160.3 157.3h1.8v2.8h-1.8zM68.1 229.8h1.4v1.5h-1.4zM47.2 121.3h0.9v1.0h-0.9zM144.6 203.5h0.9v1.0h-0.9zM62.0 257.4h0.9v0.8h-0.9zM3.5 93.5h1.7v0.8h-1.7zM263.4 123.9h1.4v1.2h-1.4zM284.0 116.3h0.8v0.9h-0.8zM32.0 228.1h1.0v1.2h-1.0zM145.5 240.9h1.2v0.9h-1.2zM251.8 105.4h1.8v1.5h-1.8zM67.1 153.6h1.0v1.0h-1.0zM31.5 284.0h0.9v0.8h-0.9zM0.6 95.7h1.7v0.9h-1.7zM154.1 159.2h1.0v2.0h-1.0zM130.1 145.4h1.7v1.0h-1.7zM58.7 194.2h3.9v3.8h-3.9zM190.2 213.6h1.7v2.0h-1.7zM303.2 103.0h1.2v0.9h-1.2zM281.1 107.5h1.0v0.9h-1.0zM179.8 92.9h1.2v2.0h-1.2zM20.4 223.3h2.3v1.5h-2.3zM91.8 106.8h2.3v0.8h-2.3zM113.9 145.1h0.9v1.0h-0.9zM160.6 203.4h0.9v2.0h-0.9zM37.8 40.5h2.3v0.9h-2.3zM51.1 232.5h2.3v1.2h-2.3zM116.0 129.9h0.9v0.9h-0.9zM286.0 27.8h0.8v1.5h-0.8zM169.2 207.7h2.3v0.9h-2.3zM35.4 115.6h0.8v1.2h-0.8zM22.8 287.1h2.1v3.8h-2.1zM228.9 128.7h1.0v1.5h-1.0zM21.9 201.9h1.7v1.0h-1.7zM13.9 234.5h1.4v0.8h-1.4zM87.5 225.4h1.2v2.0h-1.2zM190.5 196.1h1.4v1.2h-1.4zM74.2 90.2h1.2v1.5h-1.2zM51.7 202.0h2.3v1.0h-2.3zM128.5 158.0h1.0v2.0h-1.0zM289.0 102.1h0.8v1.5h-0.8zM55.2 235.4h0.9v1.5h-0.9zM178.5 177.3h1.4v1.5h-1.4zM288.2 92.5h1.0v0.9h-1.0zM48.2 229.7h1.7v0.9h-1.7zM5.8 31.3h0.9v0.8h-0.9zM223.8 172.7h2.1v1.5h-2.1zM153.3 167.4h2.3v2.0h-2.3zM9.3 259.1h1.0v0.8h-1.0zM102.3 97.9h0.8v1.0h-0.8zM160.1 200.4h1.0v2.0h-1.0zM129.6 64.6h0.9v2.0h-0.9zM14.2 91.6h1.0v1.0h-1.0zM98.7 71.5h1.0v0.8h-1.0zM66.9 186.2h1.4v1.5h-1.4zM80.6 107.0h1.4v1.5h-1.4zM288.7 104.4h1.0v0.9h-1.0zM224.2 140.6h1.7v0.9h-1.7zM102.1 149.7h0.9v2.0h-0.9zM48.4 222.3h2.3v0.9h-2.3zM182.5 183.4h0.8v1.0h-0.8zM23.2 291.7h0.9v0.8h-0.9zM3.0 182.9h1.0v0.9h-1.0zM117.0 177.9h1.2v0.8h-1.2zM225.0 131.0h0.8v0.8h-0.8zM4.5 214.5h0.8v0.9h-0.8zM49.8 172.5h1.0v1.0h-1.0zM14.4 143.9h1.0v1.2h-1.0zM184.9 187.0h0.8v1.0h-0.8zM21.0 138.6h0.8v1.2h-0.8zM48.1 64.1h2.3v1.0h-2.3zM161.2 204.1h1.7v2.0h-1.7zM49.1 154.0h1.7v0.9h-1.7zM4.5 349.8h0.8v0.8h-0.8zM80.0 87.9h0.8v0.8h-0.8zM184.1 171.3h1.2v0.8h-1.2zM201.7 99.3h2.3v1.7h-2.3zM133.8 162.0h0.9v2.0h-0.9zM262.8 109.2h1.2v2.0h-1.2zM140.5 118.4h1.7v2.0h-1.7zM2.3 130.2h1.4v1.0h-1.4zM246.6 131.0h0.8v0.8h-0.8zM154.8 197.4h0.9v2.0h-0.9zM8.6 189.9h1.0v1.5h-1.0zM152.2 162.2h0.9v1.5h-0.9zM178.6 173.4h1.0v1.2h-1.0zM143.6 137.5h1.0v1.0h-1.0zM98.4 65.2h2.3v1.0h-2.3zM70.7 203.3h1.4v1.5h-1.4zM176.9 199.9h2.3v1.0h-2.3zM62.5 233.1h1.7v1.5h-1.7zM105.7 34.1h1.7v1.2h-1.7zM71.6 244.7h1.8v2.8h-1.8zM151.7 239.4h0.9v0.8h-0.9zM161.3 195.6h0.8v1.0h-0.8zM121.5 160.4h2.3v0.9h-2.3zM72.7 168.3h0.9v2.0h-0.9zM173.2 171.5h1.7v2.0h-1.7zM227.0 81.6h1.4v2.0h-1.4zM131.5 183.9h1.2v1.2h-1.2zM153.3 192.1h2.3v2.0h-2.3zM87.4 80.2h0.8v0.8h-0.8zM60.2 46.5h1.7v1.5h-1.7zM25.8 295.9h2.1v3.8h-2.1zM260.2 126.3h1.4v1.0h-1.4zM60.2 119.5h1.2v1.2h-1.2zM186.6 175.2h1.7v1.2h-1.7zM240.0 136.3h1.4v0.9h-1.4zM262.4 130.6h1.7v0.8h-1.7zM173.4 144.0h1.4v0.8h-1.4zM84.1 90.6h0.9v1.0h-0.9zM236.1 135.6h1.4v0.8h-1.4zM0.8 360.9h1.4v0.9h-1.4zM16.8 182.5h1.4v1.5h-1.4zM208.4 36.2h1.2v0.9h-1.2zM133.8 208.5h0.9v1.2h-0.9zM192.9 173.9h0.8v1.5h-0.8zM1.9 260.2h1.0v2.0h-1.0zM244.3 136.2h1.2v0.8h-1.2zM12.7 241.9h2.3v0.9h-2.3zM96.3 187.3h1.4v1.0h-1.4zM37.6 274.0h1.4v1.0h-1.4zM18.3 141.2h2.8v2.8h-2.8zM75.6 132.3h2.3v1.5h-2.3zM166.4 198.3h2.3v0.8h-2.3zM9.7 132.0h3.9v2.8h-3.9zM18.3 279.0h1.2v1.2h-1.2zM50.2 275.7h1.2v2.0h-1.2zM178.1 184.0h1.0v1.2h-1.0zM103.6 137.7h1.0v2.0h-1.0zM233.4 171.7h0.8v1.2h-0.8zM267.5 50.9h0.9v1.5h-0.9zM103.2 211.9h2.3v0.8h-2.3zM17.5 96.2h1.7v0.8h-1.7zM266.2 115.4h3.2v2.3h-3.2zM192.2 79.7h1.7v0.9h-1.7zM54.6 129.4h1.4v1.5h-1.4zM8.5 244.0h2.8v2.8h-2.8zM244.7 102.8h1.4v0.9h-1.4zM62.8 189.5h1.7v1.0h-1.7zM29.9 257.9h1.2v1.5h-1.2zM276.9 54.0h0.9v0.8h-0.9zM113.5 96.5h0.8v0.9h-0.8zM288.2 87.8h1.7v1.0h-1.7zM163.9 248.3h0.9v1.2h-0.9zM43.8 138.7h1.7v0.8h-1.7zM148.2 15.8h2.3v1.5h-2.3zM63.1 44.8h1.2v1.0h-1.2zM64.5 52.5h0.8v1.2h-0.8zM218.7 155.8h1.0v1.5h-1.0zM6.9 226.6h2.1v2.3h-2.1zM180.3 218.0h2.3v1.5h-2.3zM10.6 213.6h0.9v0.8h-0.9zM23.6 300.8h1.7v1.2h-1.7zM25.4 243.7h0.8v2.0h-0.8zM51.0 60.7h0.8v0.9h-0.8zM1.6 102.2h1.7v0.9h-1.7zM148.7 116.2h1.2v1.2h-1.2zM15.3 102.1h2.8v3.8h-2.8zM30.4 274.5h0.8v2.0h-0.8zM4.0 281.1h0.9v0.9h-0.9zM89.1 176.6h2.3v1.0h-2.3zM57.1 253.6h1.0v1.5h-1.0zM54.8 81.4h0.9v2.0h-0.9zM33.6 148.5h1.7v0.8h-1.7zM105.2 179.4h1.0v0.8h-1.0zM247.2 29.3h0.8v1.2h-0.8zM29.0 154.7h0.9v1.5h-0.9zM164.3 188.8h1.0v1.5h-1.0zM261.1 133.6h1.2v0.8h-1.2zM61.2 203.5h1.7v1.5h-1.7zM122.7 140.0h2.3v1.5h-2.3zM246.5 35.3h1.4v0.9h-1.4zM55.5 191.8h1.2v1.5h-1.2zM127.4 170.9h2.3v1.0h-2.3zM183.0 138.8h2.3v1.2h-2.3zM3.1 236.9h0.8v2.0h-0.8zM72.9 91.4h0.8v1.5h-0.8zM90.6 22.6h2.3v1.5h-2.3zM266.0 101.4h0.9v0.8h-0.9zM80.9 218.0h2.3v1.5h-2.3zM60.7 170.3h1.4v0.9h-1.4zM22.9 173.3h3.2v3.8h-3.2zM189.7 178.1h1.7v1.2h-1.7zM9.8 237.5h0.8v1.5h-0.8zM17.7 135.0h0.9v1.0h-0.9zM163.2 244.5h2.3v1.7h-2.3zM5.0 194.5h1.0v1.5h-1.0zM69.3 96.9h0.9v1.2h-0.9zM71.2 248.5h0.9v1.5h-0.9zM2.9 308.0h2.3v1.5h-2.3zM236.9 143.5h1.4v0.8h-1.4zM226.1 140.2h1.7v2.0h-1.7zM179.3 165.5h1.2v0.9h-1.2zM82.4 87.8h1.7v2.0h-1.7zM122.9 85.6h1.4v0.8h-1.4zM287.9 14.8h0.8v1.5h-0.8zM194.9 128.9h1.4v1.2h-1.4zM268.8 130.3h1.0v1.5h-1.0zM116.2 130.0h1.0v1.0h-1.0zM137.1 112.6h0.9v0.9h-0.9zM150.6 252.0h0.9v0.9h-0.9zM166.5 193.7h2.3v2.0h-2.3zM60.1 225.0h0.9v1.0h-0.9zM75.8 149.5h2.8v1.5h-2.8zM144.9 149.2h0.8v1.5h-0.8zM197.3 184.7h1.0v0.8h-1.0zM168.1 47.0h1.0v0.8h-1.0zM36.5 211.4h1.7v0.8h-1.7zM23.3 119.7h1.0v0.9h-1.0zM48.4 159.3h1.0v0.9h-1.0zM85.1 129.9h1.2v0.9h-1.2zM168.6 135.4h1.2v2.0h-1.2zM298.9 59.4h1.4v1.5h-1.4zM60.4 195.2h0.9v1.5h-0.9zM59.4 124.6h2.3v1.5h-2.3zM13.2 317.3h1.7v0.8h-1.7zM11.7 59.7h3.9v2.3h-3.9zM88.3 0.4h1.2v2.0h-1.2zM19.3 238.8h1.4v2.0h-1.4zM30.2 191.0h0.9v1.0h-0.9zM47.8 274.6h0.9v1.5h-0.9zM-0.8 106.2h1.0v0.9h-1.0zM228.6 37.9h0.8v1.0h-0.8zM75.9 248.6h0.9v1.2h-0.9zM77.3 164.0h1.7v1.0h-1.7zM37.6 98.7h1.7v1.2h-1.7zM158.8 24.2h2.3v3.8h-2.3zM10.4 101.9h1.2v1.0h-1.2zM79.6 220.5h0.9v1.2h-0.9zM143.9 183.2h2.1v1.9h-2.1zM196.1 164.7h1.4v1.2h-1.4zM81.4 96.5h2.3v2.0h-2.3zM104.0 199.3h0.9v1.5h-0.9zM17.2 114.7h0.8v1.0h-0.8zM224.3 157.9h2.3v1.5h-2.3zM52.0 68.3h2.3v2.0h-2.3zM46.7 106.0h1.2v1.2h-1.2zM37.5 129.3h0.8v1.0h-0.8zM137.9 89.6h1.4v0.8h-1.4zM73.3 223.2h0.8v0.9h-0.8zM52.4 25.0h0.9v1.0h-0.9zM151.0 179.7h0.9v2.0h-0.9zM255.5 136.8h1.7v0.9h-1.7zM195.9 152.1h2.3v1.0h-2.3zM257.9 122.0h1.0v2.0h-1.0zM106.4 65.7h1.7v2.0h-1.7zM203.3 107.9h1.7v1.2h-1.7zM38.4 211.1h1.4v2.0h-1.4zM115.7 40.4h2.8v1.5h-2.8zM28.2 98.7h0.9v1.2h-0.9zM80.4 45.7h1.7v1.5h-1.7zM151.7 193.3h1.8v1.9h-1.8zM55.2 51.2h2.3v0.8h-2.3zM179.3 165.5h1.7v1.0h-1.7zM41.9 184.5h1.2v0.9h-1.2zM28.8 287.8h1.0v2.0h-1.0zM67.8 220.8h3.2v2.3h-3.2zM62.2 128.2h1.2v1.5h-1.2zM4.0 174.6h1.4v1.5h-1.4zM134.7 213.5h1.4v1.5h-1.4zM233.0 145.1h2.3v1.0h-2.3zM195.2 204.5h0.8v1.5h-0.8zM21.5 301.2h1.0v0.8h-1.0zM136.5 129.2h1.7v2.0h-1.7zM101.8 215.5h1.2v1.5h-1.2zM45.4 283.0h1.4v1.2h-1.4zM300.7 56.9h2.3v0.9h-2.3zM72.0 102.7h0.8v1.0h-0.8zM97.4 124.1h0.9v0.8h-0.9zM66.3 163.8h0.9v2.0h-0.9zM273.9 104.7h2.3v0.8h-2.3zM5.7 281.1h1.4v0.9h-1.4zM119.0 151.0h1.2v1.2h-1.2zM6.5 165.3h1.4v0.8h-1.4zM152.9 83.9h2.3v2.0h-2.3zM38.4 146.3h2.3v1.2h-2.3zM67.6 137.8h1.4v1.0h-1.4zM35.5 155.3h1.0v1.5h-1.0zM238.0 131.7h1.4v1.5h-1.4zM31.4 196.6h1.0v2.0h-1.0zM100.7 175.8h1.0v0.9h-1.0zM16.0 159.5h2.3v1.2h-2.3zM62.4 60.1h5.3v1.5h-5.3zM117.5 47.2h1.2v0.8h-1.2zM45.5 163.2h1.4v0.9h-1.4zM294.2 107.6h1.2v1.2h-1.2zM220.8 143.6h1.2v0.8h-1.2zM69.9 207.1h1.0v1.2h-1.0zM1.0 308.4h0.9v1.2h-0.9zM2.9 311.6h1.4v2.0h-1.4zM252.1 118.7h1.7v1.0h-1.7zM76.3 211.8h0.8v1.2h-0.8zM274.2 136.5h1.2v2.0h-1.2zM156.0 237.5h0.8v1.0h-0.8zM55.7 187.6h0.8v1.5h-0.8zM145.2 132.3h5.3v2.8h-5.3zM27.1 112.7h0.8v2.0h-0.8zM93.5 42.7h1.2v0.8h-1.2zM70.7 206.7h2.3v0.8h-2.3zM68.0 194.8h5.3v2.8h-5.3zM21.0 34.7h2.3v1.0h-2.3zM237.0 3.7h1.4v2.0h-1.4zM19.6 189.2h0.9v0.9h-0.9zM56.9 207.6h1.0v0.8h-1.0zM150.9 245.4h1.7v0.9h-1.7zM41.9 93.3h1.4v0.9h-1.4zM205.9 16.2h0.8v2.0h-0.8zM183.3 22.1h1.0v1.2h-1.0zM69.1 176.7h1.4v2.0h-1.4zM178.3 187.2h1.7v1.2h-1.7zM53.8 29.6h1.7v1.5h-1.7zM103.6 116.0h0.8v1.5h-0.8zM199.7 74.7h2.3v2.0h-2.3zM63.0 74.8h0.9v0.9h-0.9zM296.8 13.7h1.7v2.0h-1.7zM228.0 126.7h1.2v2.0h-1.2zM89.3 34.2h0.9v1.2h-0.9zM16.7 52.9h1.2v0.9h-1.2zM105.1 121.7h0.9v1.0h-0.9zM19.5 134.7h1.2v1.2h-1.2zM53.5 119.7h0.8v0.9h-0.8zM172.8 232.6h2.3v0.8h-2.3zM212.5 146.7h2.3v2.0h-2.3zM20.5 14.8h2.3v1.2h-2.3zM157.7 167.8h0.9v0.8h-0.9zM206.5 150.0h1.4v1.5h-1.4zM111.0 120.0h0.8v1.5h-0.8zM38.1 107.6h2.3v1.0h-2.3zM113.1 14.7h1.4v1.0h-1.4zM18.0 287.5h1.0v0.9h-1.0zM217.9 177.2h1.0v0.9h-1.0zM257.5 56.3h0.8v2.0h-0.8zM75.8 131.1h0.8v0.8h-0.8zM145.7 122.0h1.4v2.0h-1.4zM196.5 144.4h0.8v1.2h-0.8zM51.6 183.2h0.8v1.2h-0.8zM144.2 188.0h2.3v0.8h-2.3zM234.4 78.7h0.8v0.9h-0.8zM116.9 149.8h2.3v1.5h-2.3zM140.6 101.2h2.8v1.9h-2.8zM1.5 151.6h0.9v0.8h-0.9zM292.9 7.4h2.8v1.9h-2.8zM69.3 194.1h0.8v2.0h-0.8zM217.4 170.6h1.4v1.2h-1.4zM205.8 6.4h1.7v1.5h-1.7zM140.1 115.2h0.8v1.0h-0.8zM19.8 198.5h2.3v2.0h-2.3zM237.5 141.0h0.9v0.9h-0.9zM43.5 170.7h0.9v1.2h-0.9zM10.9 302.9h0.8v1.5h-0.8zM121.4 191.2h0.8v1.2h-0.8zM232.0 161.6h2.3v2.0h-2.3zM160.3 176.9h0.9v1.5h-0.9zM68.8 57.1h1.0v1.2h-1.0zM132.8 239.4h0.9v0.8h-0.9zM202.3 205.4h0.9v1.5h-0.9zM51.2 181.8h2.3v1.2h-2.3zM127.5 206.5h1.2v1.5h-1.2zM64.8 187.0h1.4v2.0h-1.4zM239.1 131.6h0.8v2.0h-0.8zM139.7 157.3h1.0v1.0h-1.0zM32.6 155.0h0.9v1.2h-0.9zM223.8 126.5h2.3v2.0h-2.3zM121.1 96.6h0.9v0.8h-0.9zM149.8 61.0h0.9v2.0h-0.9zM273.1 42.1h1.0v1.2h-1.0zM16.8 9.4h0.8v0.8h-0.8zM5.6 37.7h0.9v1.5h-0.9zM217.3 28.6h0.8v0.9h-0.8zM218.7 9.8h1.7v0.8h-1.7zM30.8 152.8h1.7v0.8h-1.7zM292.4 99.7h1.7v0.9h-1.7zM79.1 229.0h0.9v1.2h-0.9zM164.5 167.1h1.7v0.9h-1.7zM268.7 111.9h1.4v1.5h-1.4zM160.2 170.8h2.3v0.9h-2.3zM127.3 23.4h2.3v0.9h-2.3zM252.7 124.3h1.2v2.0h-1.2zM47.2 217.0h2.3v0.9h-2.3zM212.1 127.3h0.9v2.0h-0.9zM38.7 148.8h1.0v1.2h-1.0zM205.3 48.6h2.3v0.8h-2.3zM214.6 172.6h1.7v1.5h-1.7zM23.7 180.6h1.2v1.2h-1.2zM272.1 132.7h1.0v0.8h-1.0zM113.6 136.9h3.9v1.9h-3.9zM268.4 12.3h1.4v0.8h-1.4zM60.3 207.9h1.2v0.9h-1.2zM75.7 90.6h0.9v0.9h-0.9zM146.7 231.6h2.3v2.0h-2.3zM149.9 114.7h1.7v1.0h-1.7zM291.7 104.0h1.2v1.0h-1.2zM302.1 80.8h2.3v1.0h-2.3zM272.1 76.1h2.3v2.0h-2.3zM157.8 114.3h0.9v0.8h-0.9zM74.3 197.1h0.8v1.0h-0.8zM242.4 129.6h2.3v2.0h-2.3zM60.9 234.8h0.8v2.0h-0.8zM28.2 239.5h1.4v2.0h-1.4zM261.4 88.3h1.4v1.0h-1.4zM162.4 173.4h1.0v1.0h-1.0zM108.2 168.7h1.2v0.9h-1.2zM148.8 239.3h1.4v1.5h-1.4zM208.0 106.3h1.2v0.8h-1.2zM204.6 27.9h1.4v1.5h-1.4zM150.3 189.2h0.8v0.9h-0.8zM152.7 51.9h2.3v1.2h-2.3zM118.6 130.8h5.3v3.8h-5.3zM12.2 118.9h1.7v1.0h-1.7zM102.6 110.5h1.4v0.8h-1.4zM95.4 237.4h1.7v0.9h-1.7zM198.3 84.0h3.9v2.8h-3.9zM153.0 169.3h1.7v0.9h-1.7zM139.2 207.3h3.2v1.7h-3.2zM48.1 211.8h2.3v1.0h-2.3zM119.8 83.3h0.8v1.2h-0.8zM183.5 170.8h3.2v1.9h-3.2zM26.0 45.4h2.1v1.5h-2.1zM39.0 171.3h1.0v1.2h-1.0zM251.5 119.6h3.9v1.9h-3.9zM89.8 195.2h1.2v1.0h-1.2zM170.3 8.2h0.8v1.0h-0.8zM62.2 95.1h1.8v2.3h-1.8zM6.0 182.6h0.9v0.9h-0.9zM208.5 146.4h5.3v3.8h-5.3zM27.1 142.9h2.3v0.8h-2.3zM133.7 227.4h1.4v1.0h-1.4zM0.8 133.8h1.7v0.8h-1.7zM163.7 181.1h1.0v1.5h-1.0zM218.4 135.0h1.0v2.0h-1.0zM134.3 148.8h0.8v1.0h-0.8zM114.4 88.2h2.3v0.9h-2.3zM21.5 238.2h2.3v1.2h-2.3zM22.6 124.8h0.9v2.0h-0.9zM224.8 180.1h0.8v1.2h-0.8zM172.9 174.3h1.7v1.2h-1.7zM120.7 91.3h1.0v1.5h-1.0zM231.0 145.5h1.2v1.2h-1.2zM162.4 204.3h1.7v0.8h-1.7zM8.9 172.8h0.8v0.9h-0.8zM44.9 82.3h0.8v1.0h-0.8zM289.1 45.4h0.9v1.5h-0.9zM178.9 157.6h2.3v0.8h-2.3zM61.3 207.4h0.9v0.9h-0.9zM82.7 92.5h0.8v1.0h-0.8zM5.8 94.8h0.9v2.0h-0.9zM10.5 54.1h1.7v2.0h-1.7zM145.7 92.8h1.2v1.2h-1.2zM141.4 105.4h0.8v1.0h-0.8zM142.7 247.4h0.9v2.0h-0.9zM75.1 238.5h1.4v1.0h-1.4zM295.2 34.9h1.4v0.9h-1.4zM7.9 228.6h0.9v1.5h-0.9zM-0.7 79.4h2.3v0.9h-2.3zM52.0 205.1h2.3v1.0h-2.3zM21.3 214.4h0.9v0.9h-0.9zM279.4 129.2h3.9v3.8h-3.9zM207.6 36.2h2.3v2.0h-2.3zM162.3 131.7h1.0v0.8h-1.0zM45.8 207.9h0.8v1.2h-0.8zM97.6 132.7h0.9v0.9h-0.9zM188.7 193.0h2.3v1.5h-2.3zM138.4 111.9h1.7v1.2h-1.7zM171.1 182.1h1.7v1.2h-1.7zM223.0 133.2h1.2v1.0h-1.2zM127.0 134.7h2.3v1.0h-2.3zM205.9 6.3h0.9v2.0h-0.9zM117.4 139.3h1.7v1.0h-1.7zM100.4 216.9h1.2v1.5h-1.2zM165.8 173.7h0.9v0.8h-0.9zM6.6 268.7h3.2v2.3h-3.2zM206.1 36.9h0.8v1.5h-0.8zM126.3 204.6h1.2v0.8h-1.2zM5.5 318.8h1.8v1.7h-1.8zM123.2 86.5h0.9v0.9h-0.9zM17.4 25.9h1.7v0.9h-1.7zM221.0 63.5h3.9v1.5h-3.9zM2.5 286.6h1.7v0.9h-1.7zM171.3 78.1h0.9v1.0h-0.9zM227.4 150.7h5.3v1.7h-5.3zM9.7 144.0h1.2v1.0h-1.2zM129.8 36.5h0.9v2.0h-0.9zM108.0 73.2h2.3v1.0h-2.3zM15.2 133.6h0.9v1.5h-0.9zM60.3 205.3h1.7v1.2h-1.7zM28.2 146.3h1.7v1.5h-1.7zM148.2 26.0h1.2v1.5h-1.2zM234.8 173.5h0.9v2.0h-0.9zM259.5 47.2h0.9v0.8h-0.9zM89.2 109.7h1.7v1.0h-1.7zM63.3 189.4h2.3v0.9h-2.3zM256.5 0.0h1.2v1.0h-1.2zM107.0 87.6h0.8v2.0h-0.8zM180.1 4.8h2.3v2.0h-2.3zM219.7 161.6h1.2v2.0h-1.2zM140.1 171.3h0.8v2.0h-0.8zM3.5 116.9h1.4v1.5h-1.4zM169.5 132.2h1.2v1.2h-1.2zM7.4 134.0h2.3v1.5h-2.3zM11.1 190.9h2.3v0.8h-2.3zM154.9 204.7h1.2v0.8h-1.2zM75.0 215.5h1.7v1.0h-1.7zM149.4 38.2h0.9v0.9h-0.9zM172.4 143.9h1.2v0.9h-1.2zM100.8 77.1h1.2v2.0h-1.2zM256.9 114.3h0.9v1.0h-0.9zM114.3 139.7h1.8v1.9h-1.8zM180.2 16.8h1.0v0.9h-1.0zM189.2 178.4h1.7v1.5h-1.7zM61.4 230.1h0.9v1.5h-0.9zM53.9 199.8h1.0v0.9h-1.0zM95.1 112.1h1.4v2.0h-1.4zM297.6 105.9h0.8v0.9h-0.8zM202.1 172.6h2.3v0.8h-2.3zM194.0 108.8h1.2v0.8h-1.2zM35.5 149.1h1.0v0.8h-1.0zM163.5 216.6h0.8v1.2h-0.8zM300.2 76.9h1.4v1.5h-1.4zM114.5 207.3h1.2v1.0h-1.2zM47.3 241.5h1.2v1.2h-1.2zM260.2 129.7h1.0v0.8h-1.0zM4.1 135.3h1.2v2.0h-1.2zM262.1 126.4h1.7v2.0h-1.7zM20.3 142.2h1.2v1.0h-1.2zM55.8 223.5h2.1v1.7h-2.1zM51.1 209.5h0.8v1.5h-0.8zM167.8 128.2h0.9v0.8h-0.9zM176.0 247.1h2.3v1.7h-2.3zM70.6 225.1h1.8v1.9h-1.8zM138.7 198.2h2.3v1.2h-2.3zM5.3 37.4h1.2v1.5h-1.2zM11.5 320.9h1.0v1.2h-1.0zM261.7 47.1h0.9v1.0h-0.9zM20.8 295.0h1.2v1.2h-1.2zM160.7 179.5h1.7v1.2h-1.7zM1.3 186.4h2.3v2.0h-2.3zM5.8 290.0h1.7v1.5h-1.7zM55.8 133.7h1.0v0.9h-1.0zM176.1 166.7h2.3v2.0h-2.3zM207.8 169.3h2.3v0.9h-2.3zM1.3 157.5h1.0v1.5h-1.0zM265.0 67.2h2.3v0.8h-2.3zM3.1 168.8h1.4v2.0h-1.4zM305.2 23.3h1.4v1.0h-1.4zM104.5 127.2h0.9v1.5h-0.9zM59.1 226.7h1.2v2.0h-1.2zM132.3 252.1h1.0v1.0h-1.0zM32.0 288.7h1.0v1.0h-1.0zM168.3 179.4h0.9v0.8h-0.9zM-2.0 129.6h0.8v2.0h-0.8zM222.7 145.2h0.9v1.5h-0.9zM26.4 136.6h1.7v0.9h-1.7zM41.0 218.1h1.2v0.9h-1.2zM158.0 224.6h0.9v1.5h-0.9zM0.2 101.6h0.9v1.2h-0.9zM75.6 199.6h0.8v0.9h-0.8zM62.0 183.3h1.7v0.8h-1.7zM9.7 218.3h1.2v2.0h-1.2zM24.1 199.2h1.7v2.0h-1.7zM13.9 210.5h1.0v1.5h-1.0zM74.7 86.4h0.8v1.5h-0.8zM173.4 54.0h3.9v1.5h-3.9zM234.2 145.4h2.3v2.8h-2.3zM249.6 121.5h2.1v3.8h-2.1zM75.8 97.9h2.8v1.7h-2.8zM282.7 31.7h2.3v2.0h-2.3zM129.9 171.2h0.8v0.8h-0.8zM71.6 216.8h0.9v0.9h-0.9zM23.5 223.9h0.9v0.9h-0.9zM96.8 206.0h1.2v2.0h-1.2zM81.6 95.0h0.9v1.2h-0.9zM170.1 84.4h0.8v1.0h-0.8zM194.5 186.4h0.8v1.0h-0.8zM296.5 55.3h2.3v0.9h-2.3zM229.9 24.2h1.2v2.0h-1.2zM15.0 100.9h0.8v1.2h-0.8zM100.1 220.6h1.7v1.2h-1.7zM3.1 272.1h1.7v0.9h-1.7zM66.5 95.6h1.7v1.0h-1.7zM70.3 81.3h0.9v0.8h-0.9zM161.7 84.5h1.0v0.9h-1.0zM109.3 144.3h1.7v2.0h-1.7zM115.6 167.3h0.9v0.8h-0.9zM69.1 83.8h1.4v1.5h-1.4zM11.3 155.8h0.9v1.0h-0.9zM35.7 157.6h1.7v1.0h-1.7zM63.4 222.2h0.8v1.2h-0.8zM165.0 181.3h2.3v2.0h-2.3zM158.5 191.2h3.9v1.9h-3.9zM33.9 132.3h1.0v2.0h-1.0zM296.9 91.6h2.3v0.8h-2.3zM24.0 140.6h0.9v1.2h-0.9zM20.0 158.9h1.2v0.9h-1.2zM45.2 24.5h1.0v0.9h-1.0zM181.9 112.4h2.3v0.8h-2.3zM170.3 142.8h0.9v0.9h-0.9zM43.9 278.8h0.8v1.5h-0.8zM124.1 110.2h1.2v1.2h-1.2zM114.2 237.9h0.9v0.9h-0.9zM221.8 150.0h1.0v0.8h-1.0zM0.7 323.9h0.8v1.2h-0.8zM58.6 246.5h0.8v2.0h-0.8zM261.4 116.9h2.3v1.5h-2.3zM175.9 189.0h1.2v1.5h-1.2zM246.5 54.9h1.2v1.0h-1.2zM148.2 250.1h0.9v1.0h-0.9zM26.3 123.3h2.3v1.5h-2.3zM126.0 82.9h1.7v1.0h-1.7zM9.2 263.6h1.7v0.9h-1.7zM166.2 194.0h0.9v1.2h-0.9zM43.0 277.5h1.2v1.2h-1.2zM137.6 156.2h0.9v2.0h-0.9zM18.3 125.2h1.4v0.9h-1.4zM175.0 178.3h1.7v1.0h-1.7zM203.2 96.0h2.3v0.9h-2.3zM211.0 117.6h0.9v0.9h-0.9zM45.3 211.4h2.3v1.5h-2.3zM246.4 130.8h1.0v1.5h-1.0zM5.2 143.2h2.3v1.0h-2.3zM40.2 2.8h1.0v0.9h-1.0zM64.9 200.6h0.9v0.9h-0.9zM102.6 200.3h1.7v0.8h-1.7zM114.9 97.2h1.0v0.9h-1.0zM149.8 188.3h2.3v1.5h-2.3zM251.5 123.8h1.4v1.0h-1.4zM6.1 128.6h1.7v2.0h-1.7zM195.0 170.6h0.9v1.0h-0.9zM77.4 38.4h1.2v1.0h-1.2zM67.6 167.8h0.8v0.8h-0.8zM57.6 29.0h1.4v0.9h-1.4zM109.0 95.1h1.4v2.0h-1.4zM41.7 152.1h2.3v2.0h-2.3zM41.0 104.1h0.9v0.8h-0.9zM73.1 218.9h1.4v2.0h-1.4zM99.1 46.0h0.9v1.2h-0.9zM182.2 179.7h2.1v1.9h-2.1zM293.3 19.4h1.4v0.8h-1.4zM37.3 115.0h2.3v2.3h-2.3zM19.4 146.3h0.9v0.8h-0.9zM42.4 165.5h0.9v1.2h-0.9zM248.1 132.9h1.7v1.5h-1.7zM64.4 130.1h2.3v1.7h-2.3zM235.9 139.5h0.9v0.8h-0.9zM168.4 140.0h1.4v1.2h-1.4zM40.9 259.5h1.0v1.5h-1.0zM72.2 229.7h1.8v3.8h-1.8zM81.1 102.9h0.9v2.0h-0.9zM14.2 129.0h5.3v2.3h-5.3zM176.9 190.3h1.0v2.0h-1.0zM44.6 110.6h1.7v0.8h-1.7zM32.1 249.4h0.8v2.0h-0.8zM295.4 92.6h0.8v0.9h-0.8zM63.0 237.5h1.2v1.2h-1.2zM55.2 144.5h1.7v0.8h-1.7zM280.4 13.1h2.3v1.0h-2.3zM19.1 209.1h1.7v1.0h-1.7zM22.2 134.0h2.3v0.8h-2.3zM29.4 279.0h0.9v1.5h-0.9zM12.4 164.3h1.0v1.5h-1.0zM289.8 71.3h0.9v0.8h-0.9zM138.2 240.6h0.9v2.0h-0.9zM45.6 238.1h1.2v1.2h-1.2zM224.7 155.8h1.4v2.0h-1.4zM75.1 225.0h1.2v0.8h-1.2zM68.3 147.9h0.8v1.5h-0.8zM269.5 111.8h1.0v2.0h-1.0zM94.2 28.4h1.2v1.2h-1.2zM54.4 163.5h1.4v0.8h-1.4zM214.6 151.4h0.8v0.9h-0.8zM56.5 93.5h2.1v2.8h-2.1zM150.9 208.3h1.4v1.0h-1.4zM22.3 129.2h1.2v2.0h-1.2zM53.7 189.0h1.0v0.8h-1.0zM53.1 218.0h0.8v2.0h-0.8zM219.3 58.6h0.9v2.0h-0.9zM31.1 232.0h1.2v1.5h-1.2zM97.1 221.3h0.8v2.0h-0.8zM13.9 137.0h0.8v0.8h-0.8zM8.3 241.1h0.8v1.2h-0.8zM275.7 116.4h0.9v0.8h-0.9zM116.2 4.5h1.4v1.5h-1.4zM28.9 185.2h1.0v0.8h-1.0zM293.7 76.3h1.0v0.8h-1.0zM100.1 181.7h1.2v1.2h-1.2zM153.7 173.7h0.8v1.2h-0.8zM11.6 232.0h2.3v1.5h-2.3zM154.6 168.7h1.2v0.9h-1.2zM71.8 60.2h1.4v1.0h-1.4zM193.5 49.3h1.7v1.5h-1.7zM181.0 224.2h0.9v1.2h-0.9zM171.8 20.8h0.9v1.0h-0.9zM13.3 320.4h1.4v2.0h-1.4zM292.9 38.8h1.8v3.8h-1.8zM61.4 18.5h0.8v2.0h-0.8zM37.0 76.2h1.0v1.2h-1.0zM77.1 138.0h0.8v0.9h-0.8zM35.7 205.1h1.7v1.2h-1.7zM120.6 134.0h0.9v2.0h-0.9zM8.4 142.3h2.3v2.8h-2.3zM3.2 164.1h1.4v1.2h-1.4zM54.7 190.3h0.9v1.0h-0.9zM60.2 219.4h5.3v1.5h-5.3zM11.5 143.2h1.7v0.8h-1.7zM231.3 137.6h1.0v0.9h-1.0zM199.1 152.2h2.3v1.2h-2.3zM149.4 109.8h1.7v0.8h-1.7zM113.8 217.9h0.9v1.2h-0.9zM229.1 161.5h0.8v1.2h-0.8zM2.4 141.8h1.2v2.0h-1.2zM47.3 119.0h1.4v0.8h-1.4zM85.8 196.5h1.7v1.2h-1.7zM62.7 121.3h1.2v2.0h-1.2z" fill="#3b3b3b"/></g></svg><div style="position:absolute;inset:0;border:1px solid #8e8e8e"></div></div><div class="ab" style="left:528px;top:550px;width:307px;height:383px;box-shadow:-1px 0 0 #555,0 1px 2px rgba(0,0,0,.25)"><svg width="307" height="383" style="position:absolute;left:0;top:0"><defs><clipPath id="land3"><path d="M308.0 84.0 L285.0 106.0 L269.0 121.0 L256.0 136.0 L242.0 154.0 L229.0 180.0 L219.0 189.0 L202.0 209.0 L188.0 214.0 L177.0 226.0 L161.0 240.0 L152.0 233.0 L133.0 239.0 L124.0 243.0 L112.0 245.0 L98.0 239.0 L84.0 245.0 L80.0 252.0 L77.0 267.0 L46.0 276.0 L25.0 307.0 L12.0 330.0 L-1.0 350.0 L-1.0 -4.0 L308.0 -4.0 Z"/></clipPath></defs><g clip-path="url(#land3)" fill="none" stroke-linecap="round"><path d="M76.9 61.1 L76.4 64.3 L74.0 66.3 L71.3 68.1 L70.4 71.2 L69.9 74.3 M17.3 271.4 L15.2 273.9 L13.1 276.2 L11.2 278.8 L10.8 282.0 L11.3 285.1 L13.8 287.1 M129.5 232.0 L129.7 228.8 L130.4 225.6 L129.7 222.5 L127.2 220.5 L125.0 218.2 L121.8 218.4 L119.2 216.5 L116.2 215.4 L113.1 216.2 L110.4 218.0 M34.9 95.0 L33.1 92.3 L31.6 89.5 L28.5 88.9 L25.3 88.5 L22.5 87.0 L21.9 83.9 L19.6 81.6 M0.3 234.8 L-1.8 237.3 L-3.4 240.1 L-5.0 242.8 L-7.9 244.1 L-10.5 246.1 L-12.5 248.6 L-13.8 251.5 L-12.5 254.3 L-11.3 257.3 L-10.1 260.3 M152.2 135.5 L149.4 137.1 L147.7 139.8 L145.9 142.4 L143.3 144.3 L142.3 147.4 L140.1 149.7 L136.9 149.7 L133.9 150.7 L131.2 152.5 M1.4 66.4 L-1.8 67.0 L-3.5 69.6 L-4.7 72.6 L-3.6 75.6 M231.8 135.5 L229.3 133.5 L226.6 131.8 L223.7 130.4 L221.3 128.2 L220.1 125.3 L217.2 123.9 L215.3 121.3 L214.2 118.3 L211.8 116.2 L208.6 116.3 M25.6 99.8 L27.6 97.4 L27.2 94.2 L26.8 91.0 L28.8 88.5 M65.8 211.4 L64.6 208.5 L62.5 206.1 L62.8 202.9 L65.0 200.5 L67.9 199.1 L71.0 198.5 L72.5 195.7 L75.2 193.9 M133.6 210.4 L131.6 212.9 L129.0 214.8 L128.0 217.8 L125.9 220.2 L122.8 221.2 L119.8 220.1 L116.6 220.3 L113.9 222.0 M50.6 269.8 L48.5 272.2 L45.4 272.6 L42.2 272.8 L39.3 274.2 L36.8 276.2 L33.8 277.1 L31.7 279.5 M114.4 55.3 L111.7 56.9 L109.3 59.0 L106.1 58.7 L102.9 58.7 L100.1 60.3 L99.1 63.4 M107.8 180.2 L105.1 182.0 L102.6 183.9 L99.6 185.1 L96.4 185.7 M189.6 148.6 L187.0 146.6 L185.5 143.8 L185.9 140.7 L188.7 139.0 L189.6 135.9 L191.5 133.4 L194.5 132.2 M240.3 118.7 L243.0 120.5 L246.1 120.4 L249.3 120.5 L252.5 121.2 L254.9 119.1 L255.8 116.0 L255.0 112.9 L256.7 110.2 L258.2 107.4 L260.0 104.7 M88.9 197.9 L87.9 194.9 L86.0 192.3 L83.3 190.6 L81.0 188.4 L80.7 185.2 L81.3 182.0 L83.3 179.5 L83.6 176.4 L83.7 173.2 M173.3 93.2 L176.3 92.0 L177.5 89.1 L179.1 86.2 L179.9 83.1 L180.8 80.1 L181.0 76.9 L178.6 74.8 M11.6 47.4 L14.6 48.5 L16.5 51.0 L18.5 53.5 L20.5 56.0 L22.3 58.7 L25.5 59.0 L28.7 59.5 L31.5 61.0 L34.6 61.6 L37.7 62.5 M171.8 104.9 L172.9 101.9 L172.1 98.8 L170.8 95.8 L170.7 92.6 L168.3 90.5 L168.1 87.3 M258.3 279.5 L255.5 278.0 L254.4 275.0 L253.0 272.1 L250.9 269.7 L247.7 269.8 L245.5 267.5 L244.7 264.4 L243.5 261.4 M13.5 206.8 L10.3 207.3 L7.5 205.8 L4.5 206.9 L2.2 209.2 L0.5 211.9 M131.8 201.1 L131.6 197.9 L130.0 195.1 L128.9 192.1 L130.4 189.3 L130.4 186.1 L132.7 183.9 L134.6 181.3 L137.2 179.5 L138.9 176.8 M48.8 109.0 L49.4 105.9 L49.9 102.7 L48.7 99.8 L47.8 96.7 L46.8 93.6 M295.4 265.4 L292.5 264.0 L291.1 261.1 L291.2 257.9 L290.7 254.8 L288.9 252.1 L286.6 249.9 L284.6 247.4 L281.4 246.9 L278.2 247.1 L275.9 249.3 M267.9 198.6 L266.5 201.5 L266.3 204.7 L263.9 206.9 L261.0 208.3 L258.6 210.3 L255.9 212.0 L253.4 214.1 L250.5 215.4 L247.5 216.6 L245.3 218.9 M300.8 265.6 L302.2 262.7 L301.9 259.5 L302.7 256.4 L303.0 253.2 L304.9 250.7 L307.4 248.8 M66.3 70.0 L68.3 67.5 L70.9 65.6 L74.0 65.0 L76.5 67.0 L79.7 66.9 L82.9 67.3 M290.2 197.1 L288.9 194.2 L290.0 191.2 L292.6 189.4 L295.4 187.8 L298.5 188.6 L301.7 188.4 L304.7 187.4 L307.9 187.7 L310.6 186.0 L313.8 186.6 M53.0 297.4 L52.8 294.2 L52.6 291.0 L50.7 288.5 L50.6 285.3 L52.0 282.4 L54.6 280.5 L55.2 277.4 L57.4 275.0 L57.0 271.9 M173.5 146.3 L176.6 147.1 L179.5 145.8 L182.1 143.9 L184.3 141.6 L185.6 138.7 L187.6 136.1 L189.9 133.9 M262.7 139.3 L265.0 141.5 L265.9 144.6 L268.6 146.3 L271.2 148.2 L272.0 151.3 L272.4 154.5 L273.6 157.5 L273.3 160.6 L271.3 163.2 M177.9 188.1 L179.0 191.1 L181.9 192.5 L184.5 194.2 L187.7 194.0 L190.9 194.6 L193.8 196.0 L196.9 195.2 M108.9 160.0 L109.5 163.2 L110.3 166.3 L108.8 169.1 L106.1 170.7 L104.5 173.5 L101.8 175.2 L99.3 177.2 M68.2 13.8 L68.5 10.6 L69.8 7.7 L72.6 6.1 L74.0 3.2 L73.7 0.0 L74.5 -3.1 L72.9 -5.8 L71.2 -8.5 M202.4 42.6 L204.1 45.3 L203.6 48.4 L205.6 51.0 L205.5 54.2 L204.8 57.3 L202.5 59.5 L200.8 62.2 M21.2 51.6 L18.8 49.6 L17.6 46.6 L15.2 44.5 L12.0 44.5 M53.2 40.2 L56.4 40.4 L59.6 41.0 L62.8 41.2 L65.0 38.8 L65.0 35.6 L63.7 32.7 M141.5 36.3 L144.7 36.4 L147.8 37.2 L150.8 36.0 L154.0 35.7 L156.6 37.4 L159.2 39.4 L162.4 39.1 L165.5 38.7 M265.4 267.9 L268.6 268.1 L271.2 266.3 L272.7 263.4 L273.7 260.4 M228.6 26.6 L231.8 27.0 L234.7 25.5 L236.9 23.2 L239.5 21.4 M278.7 99.7 L280.7 97.1 L283.7 96.1 L285.4 93.4 L288.4 92.4 L291.6 91.9 L293.4 89.3 L296.6 88.8 M97.0 20.4 L94.9 22.9 L92.2 24.5 L89.1 25.5 L86.1 26.6 M2.1 279.5 L1.3 282.6 L1.3 285.8 L-0.5 288.5 L-1.6 291.5 L-3.4 294.1 L-2.8 297.3 L-3.9 300.3 M91.9 224.1 L90.8 227.1 L88.7 229.5 L88.1 232.6 L86.5 235.4 L83.4 236.2 L80.5 237.5 L77.5 236.3 M188.6 283.3 L185.4 283.9 L182.8 285.7 L181.5 288.6 L179.1 290.7 L177.1 293.3 L173.9 293.6 L170.8 293.2 L167.7 293.9 L164.5 293.5 L162.5 291.0 M47.0 205.4 L43.8 205.0 L41.0 206.5 L38.0 205.3 L34.9 204.8 L32.1 203.2 L29.6 201.1 L26.8 199.6 L23.9 198.4 M172.6 295.6 L170.9 292.8 L167.9 291.9 L165.8 289.5 L164.2 286.7 L161.9 284.6 L158.7 284.5 L156.4 282.2 L153.7 280.5 L150.8 279.2 L148.6 276.9 M91.2 299.6 L88.0 299.3 L85.7 297.1 L82.5 296.7 L79.8 298.4 L77.5 300.6 L75.3 302.9 L72.3 304.2 L70.0 306.4 M226.3 175.3 L226.8 178.4 L229.0 180.7 L229.3 183.9 L228.3 186.9 L229.9 189.7 L231.8 192.2 L234.3 194.3 L235.3 197.3 L234.3 200.4 L233.6 203.5 M4.4 226.5 L2.5 229.0 L2.8 232.2 L4.7 234.8 L5.7 237.8 L8.1 239.9 L11.0 241.3 L13.2 243.6 L16.0 245.2 L18.3 247.4 L18.2 250.6 M243.4 188.5 L240.7 186.8 L237.6 187.7 L234.6 186.6 L231.4 186.7 L228.4 187.9 L227.4 190.9 M116.3 214.6 L119.4 215.1 L121.8 213.0 L123.0 210.0 L123.3 206.8 L123.3 203.6 L123.3 200.4 M122.3 113.0 L124.3 115.4 L124.2 118.6 L126.1 121.2 L128.4 123.5 L131.5 123.9 L134.2 125.8 L137.3 125.4 M22.6 34.8 L25.4 33.2 L27.4 30.7 L30.4 29.6 L31.6 26.6 L31.3 23.4 M23.1 33.4 L20.3 31.9 L17.1 32.1 L14.3 30.5 L11.2 29.9 L9.2 27.4 L8.9 24.2 L7.9 21.2 L6.0 18.6 L2.9 17.9 M268.2 132.8 L267.2 135.8 L268.5 138.7 L267.2 141.7 L266.1 144.7 L266.2 147.9 M142.4 87.1 L145.6 87.3 L148.2 89.3 L148.8 92.4 L149.2 95.6 M77.3 273.7 L75.6 276.4 L72.9 278.2 L69.8 278.5 L66.6 278.6 L63.5 277.6 M265.0 59.0 L264.3 55.8 L265.2 52.7 L263.6 49.9 L264.0 46.8 L263.9 43.6 L261.3 41.6 M242.3 279.1 L243.4 282.1 L245.3 284.7 L246.9 287.4 L249.3 289.6 L251.4 292.0 L253.2 294.7 L252.7 297.8 M30.4 101.4 L30.8 98.2 L31.7 95.1 L32.4 92.0 L33.5 89.0 L33.6 85.8 L31.9 83.1 L32.6 79.9 L32.5 76.7 L30.3 74.4 M299.8 153.2 L299.2 150.1 L296.5 148.3 L293.4 149.0 L290.2 149.0 L288.2 151.5 L287.6 154.6 M113.5 78.1 L110.3 78.2 L107.8 80.2 L105.2 82.0 L103.1 84.5 L100.8 86.8 L100.0 89.8 L100.2 93.0 L101.5 96.0 L100.5 99.0 M24.8 124.9 L24.8 121.7 L25.1 118.5 L26.9 115.9 L29.9 114.8 L33.0 113.8 L36.0 112.7 L38.3 110.5 L39.8 107.7 M64.1 119.8 L61.9 117.5 L59.5 115.4 L58.3 112.4 L59.7 109.5 M221.7 48.2 L218.7 49.4 L215.5 49.9 L212.4 49.2 L209.7 51.0 L208.2 53.7 M115.6 151.7 L113.0 153.6 L111.9 156.6 L109.3 158.5 L109.1 161.6 L107.5 164.4 L107.8 167.6 L106.4 170.5 L104.5 173.1 L104.9 176.3 M2.6 122.8 L2.9 119.6 L1.7 116.6 L-0.3 114.1 L-2.3 111.7 L-5.2 110.2 L-8.3 109.7 L-11.3 110.7 L-13.6 113.0 M230.1 181.0 L226.9 181.3 L223.7 180.7 L221.2 178.8 L219.7 176.0 L218.1 173.2 L217.6 170.0 L215.4 167.7 M103.6 26.2 L104.7 23.2 L105.5 20.1 L105.5 16.9 L103.5 14.4 L101.7 11.7 L99.0 10.0 M233.9 158.6 L234.2 161.7 L234.6 164.9 L234.9 168.1 L236.4 171.0 L238.5 173.4 L241.4 174.8 L244.6 174.6 L246.7 177.0 L249.4 178.6 L250.5 181.7 M146.2 167.2 L149.1 165.7 L151.9 164.2 L154.5 162.4 L157.5 161.3 M253.7 119.1 L250.8 117.8 L248.5 115.5 L246.7 112.9 L246.6 109.7 L246.1 106.6 L243.7 104.5 M179.7 45.6 L180.2 48.8 L181.9 51.5 L183.4 54.3 L185.4 56.8 M107.8 96.8 L110.6 98.3 L113.5 99.6 L116.7 99.8 L119.7 100.9 L121.6 103.5 L123.8 105.8 L127.0 106.1 L130.1 107.0 M38.0 247.4 L37.1 250.5 L34.9 252.7 L32.1 254.4 L29.1 253.4 L26.2 252.1 M207.5 195.8 L209.5 193.3 L212.6 192.7 L215.8 193.1 L218.9 192.4 L221.6 190.8 L224.7 189.8 L227.8 190.4 L231.0 190.2 L234.2 190.5 L237.2 191.5 M230.2 112.3 L227.1 112.7 L223.9 112.5 L220.8 113.4 L218.8 115.9 L216.3 117.9 L214.0 120.1 M213.9 29.4 L216.7 27.9 L219.4 26.2 L222.6 26.4 L225.8 26.8 L229.0 26.3 L231.6 28.1 L234.6 29.3 M229.4 47.7 L230.2 44.6 L232.7 42.6 L234.6 40.0 L236.7 37.6 M180.4 215.4 L177.6 217.0 L174.4 216.6 L171.5 217.9 L168.4 218.8 L165.4 219.9 L162.5 218.7 L159.7 217.2 L156.5 217.1 L153.8 215.4 L150.8 214.2 M110.1 242.5 L110.4 239.3 L109.2 236.4 L106.6 234.5 L106.1 231.3 L108.1 228.8 L108.1 225.6 L109.6 222.8 M285.5 79.0 L287.0 76.2 L286.4 73.0 L287.6 70.1 L290.5 68.7 L293.1 66.8 L295.3 64.5 M143.6 71.0 L141.5 73.4 L140.7 76.5 L140.6 79.7 L143.0 81.8 L145.6 83.7 L146.6 86.7 M290.2 201.3 L291.2 198.3 L293.3 195.8 L296.2 194.5 L299.2 195.6 M131.8 10.0 L130.0 12.7 L127.7 14.9 L126.0 17.6 L122.9 18.3 M208.9 167.9 L211.4 165.9 L214.6 166.3 L217.1 164.3 L218.5 161.5 L217.6 158.4 L219.1 155.6 L221.2 153.1 L223.9 151.4 L227.1 151.4 M0.8 271.0 L0.2 274.2 L-0.9 277.2 L-0.0 280.2 L1.6 283.0 L2.7 286.0 L1.8 289.1 L0.8 292.1 L1.9 295.1 L3.0 298.1 M249.9 74.1 L252.8 72.6 L255.9 71.9 L258.9 72.8 L262.1 72.7 M266.9 282.2 L265.2 279.6 L264.8 276.4 L264.7 273.2 L265.8 270.2 M172.6 117.5 L169.4 117.9 L166.3 117.2 L163.2 116.2 L160.2 115.2 L157.0 114.7 L154.0 113.7 L150.8 113.4 L148.0 111.8 M262.9 267.6 L260.9 265.1 L260.5 261.9 L259.4 258.9 L259.8 255.7 M118.5 60.1 L121.6 59.4 L124.6 60.6 L126.6 63.0 L129.3 64.8 L132.4 64.5 L135.6 64.3 L138.8 63.8 L141.5 62.2 L143.6 59.7 M110.9 127.3 L114.1 126.8 L117.3 127.2 L120.5 127.1 L123.1 125.4 L126.2 126.1 L128.7 128.1 L131.1 130.3 L133.4 132.5 L135.2 135.1 M90.6 21.8 L87.7 23.2 L84.8 21.9 L81.6 21.3 L80.2 18.4 M236.2 81.7 L234.3 84.2 L231.4 85.5 L228.3 86.2 L225.1 86.7 M240.2 246.8 L242.7 244.8 L245.2 242.9 L248.4 242.8 L250.5 240.4 L253.6 239.8 L256.2 237.9 M289.5 109.7 L288.2 106.8 L285.4 105.2 L282.7 103.5 L280.9 100.9 L281.2 97.7 L283.6 95.6 L285.0 92.7 M154.0 293.7 L156.4 295.9 L159.1 297.6 L160.5 300.4 L163.2 302.2 M245.3 118.5 L248.0 120.3 L249.4 123.2 L249.7 126.3 L248.0 129.0 L245.1 130.4 L242.0 131.1 M265.9 163.4 L267.9 165.8 L268.7 168.9 L271.0 171.2 L270.8 174.4 L268.6 176.7 L268.5 179.9 M274.8 80.9 L273.2 78.1 L270.3 76.7 L267.6 75.2 L264.8 73.5 L261.7 74.1 L258.5 74.0 L256.0 76.1 L254.0 78.5 L254.6 81.7 L255.3 84.8 M44.5 282.1 L41.4 283.0 L38.2 282.8 L35.0 282.9 L32.0 281.6 L30.2 279.0 L30.3 275.8 L29.6 272.7 L28.5 269.7 L26.7 267.0 L24.6 264.7 M174.9 29.1 L172.1 30.6 L168.9 30.4 L166.0 31.8 L164.9 34.8 L162.0 36.2 M295.8 41.9 L292.6 41.7 L289.5 40.9 L286.6 42.1 L283.4 42.6 L281.1 44.8 L277.9 45.3 L274.7 45.2 L272.1 43.4 M6.5 88.4 L7.4 85.3 L8.4 82.3 L9.2 79.2 L8.3 76.1 L7.1 73.2 L5.7 70.3 L3.7 67.8 L3.1 64.7 M302.8 290.7 L305.3 292.8 L308.4 293.4 L311.1 295.2 L313.7 297.1 L316.9 297.4 L319.1 299.7 M185.3 277.1 L183.3 279.6 L180.6 281.3 L177.4 280.8 L174.4 279.8 L171.2 280.0 M55.1 91.1 L54.5 94.3 L51.8 95.9 L50.3 98.8 L47.8 100.8 L44.7 100.5 L41.6 99.5 M174.2 100.8 L175.1 97.7 L176.1 94.7 L177.3 91.7 L180.0 90.0 L182.2 87.6 L181.7 84.5 L180.6 81.5 L181.8 78.5 M53.7 187.9 L56.9 188.1 L58.9 190.6 L62.0 191.5 L65.2 190.9 L67.6 192.9 L70.8 192.8 M259.7 11.8 L261.0 14.7 L261.0 17.9 L262.2 20.9 L262.9 24.0 L265.7 25.7 L268.8 25.9 L271.8 27.1 L274.1 29.3 L276.6 31.3 L277.8 34.3 M54.0 255.3 L54.8 258.4 L57.2 260.5 L58.8 263.3 L61.8 264.4 L64.8 265.6 M138.5 208.6 L139.1 205.5 L141.6 203.5 L144.1 201.5 L146.6 199.4 L146.8 196.3 M263.9 68.5 L264.5 71.7 L267.3 73.3 L270.5 73.2 L273.5 74.2 L275.5 76.7 L277.5 79.2 M163.4 268.1 L160.3 268.6 L157.2 267.8 L154.7 265.8 L151.8 264.3 L148.6 264.5 L145.7 263.3 L143.2 261.3 L140.2 260.1 M204.6 20.2 L207.4 18.6 L208.5 15.6 L210.6 13.1 L213.6 12.0 L215.3 9.3 L217.5 7.0 L218.2 3.9 M67.0 8.4 L64.9 10.8 L64.2 14.0 L66.2 16.5 L68.6 18.6 L71.8 18.2 L74.6 19.8 L76.0 22.7 L78.3 24.9 L81.1 26.4 L83.0 29.0 M290.8 151.8 L290.2 148.7 L288.4 146.0 L285.4 144.9 L282.4 143.7 L280.1 141.5 M204.3 192.3 L206.6 190.1 L209.4 188.5 L211.8 186.4 L213.7 183.8 L216.8 183.1 L218.4 180.4 L219.9 177.5 L222.7 176.1 L225.8 176.9 L229.0 177.0 M209.3 50.8 L212.5 50.7 L215.0 52.6 L218.2 52.0 L220.7 54.0 L223.9 54.2 L225.9 56.8 L225.2 59.9 L226.1 63.0 L228.1 65.5 M44.6 273.1 L46.4 270.5 L47.4 267.4 L49.8 265.3 L51.5 262.6 L52.4 259.5 L52.8 256.3 M215.0 94.9 L211.8 95.0 L209.7 97.4 L206.5 97.4 L203.8 95.6 L201.4 93.5 L198.5 92.3 L196.9 89.5 L197.4 86.3 M294.0 223.8 L297.2 223.5 L300.4 224.0 L302.3 226.6 L302.4 229.8 L303.8 232.7 M68.2 161.3 L69.5 164.2 L70.0 167.3 L71.0 170.4 L69.4 173.2 L66.4 174.3 L63.2 173.9 L60.1 173.3 L57.5 175.3 M184.0 87.3 L180.8 87.4 L177.9 88.8 L177.0 91.9 L174.1 93.3 M67.2 24.3 L68.2 21.3 L70.7 19.3 L73.7 18.3 L76.2 16.2 L79.1 14.9 L80.6 12.1 L81.1 8.9 L79.1 6.5 M41.6 148.5 L38.4 148.1 L35.5 146.7 L32.4 147.4 L29.2 147.5 L26.0 147.2 L23.4 149.1 L21.1 151.3 L18.0 152.0 M139.7 218.1 L139.0 221.2 L138.1 224.3 L139.8 227.0 L142.2 229.1 L145.4 228.6 L148.5 227.7 L150.6 225.3 L151.4 222.2 L151.1 219.1 M44.4 85.0 L41.2 84.5 L38.2 85.6 L35.0 85.7 L32.8 88.0 L29.7 88.7 M126.7 214.9 L123.6 214.0 L121.1 212.0 L119.9 209.1 L117.1 207.5 M30.9 243.2 L29.6 240.2 L28.8 237.1 L26.0 235.6 L23.7 233.4 L20.7 232.3 L17.9 233.9 L16.1 236.5 M274.4 185.1 L276.8 187.3 L277.9 190.3 L276.6 193.2 L274.9 196.0 L271.9 197.1 L269.8 199.5 L267.0 201.0 L263.8 201.6 L260.8 200.6 L258.3 198.6 M197.4 26.5 L194.7 28.2 L192.9 30.8 L192.6 34.0 L193.5 37.1 M244.1 110.6 L241.9 112.9 L239.4 114.9 L236.3 115.6 L233.1 116.1 L231.4 118.8 L229.8 121.6 L227.8 124.1 L225.8 126.6 L223.3 128.6 M295.0 254.5 L292.3 256.3 L289.4 257.6 L286.7 259.3 L285.4 262.2 L284.3 265.2 L282.1 267.6 L281.1 270.6 L281.4 273.8 L281.7 277.0 M152.3 2.1 L155.1 3.6 L157.6 5.6 L160.8 5.8 L163.9 6.1 L166.8 4.6 L169.9 3.9 M36.7 236.8 L36.8 233.6 L34.4 231.4 L31.9 229.4 L29.5 227.2 L28.5 224.2 L28.4 221.0 L28.6 217.8 L26.4 215.5 M284.6 74.4 L284.1 77.5 L281.9 79.8 L278.7 79.5 L275.5 79.2 L273.0 77.3 M289.8 214.5 L293.0 214.9 L295.7 216.6 L297.6 219.2 L300.7 220.1 L301.9 223.0 L302.0 226.2 M219.7 96.3 L221.7 93.8 L222.2 90.6 L222.2 87.4 L219.9 85.3 L216.7 85.3 L213.5 85.5 L210.4 84.7 M155.1 31.1 L152.4 32.9 L149.8 34.7 L147.3 36.8 L144.3 37.8 M127.6 260.1 L128.7 257.1 L130.7 254.6 L130.5 251.4 L129.7 248.3 L127.0 246.6 L124.7 244.4 L121.9 242.9 L119.1 241.2 L116.0 240.5 L112.9 239.7 M131.3 247.1 L130.2 244.0 L128.8 241.2 L125.9 239.8 L122.8 239.1 L120.4 237.0 M271.2 276.6 L271.8 273.5 L274.5 271.7 L276.3 269.0 L277.1 265.9 M164.7 265.4 L163.3 262.6 L161.1 260.2 L158.7 258.1 L155.6 257.5 L153.1 259.5 L151.0 261.9 M70.0 76.4 L69.1 73.3 L70.4 70.4 L70.7 67.2 L70.7 64.0 L72.4 61.3 L74.7 59.1 L77.3 57.2 L78.6 54.3 L81.5 52.9 M88.1 7.3 L91.3 7.7 L93.7 5.6 L96.9 5.5 L99.6 7.2 L102.8 7.1 L105.9 7.9 L109.0 6.9 L112.2 7.3 L115.3 7.0 M213.7 160.3 L216.0 162.5 L219.2 162.7 L221.7 164.8 L224.7 165.9 L227.1 168.0 L228.7 170.8 L230.5 173.4 L233.6 174.2 M63.5 196.0 L60.6 194.7 L57.7 193.4 L54.7 192.1 L52.5 189.8 L49.4 189.3 M141.2 156.0 L139.6 153.3 L139.8 150.1 L141.9 147.7 L143.9 145.2 L144.0 142.0 L146.0 139.5 L148.9 138.2 L152.0 137.2 L154.9 136.0 M287.5 179.0 L284.3 179.2 L281.2 180.2 L279.1 182.5 L276.3 184.1 L275.9 187.3 L276.3 190.5 L276.3 193.7 L274.6 196.4 M93.0 15.6 L94.9 13.1 L96.0 10.1 L98.5 8.0 L101.5 6.9 M184.2 90.0 L182.6 92.7 L179.6 93.8 L176.5 94.8 L173.3 94.4 L170.3 95.3 L167.1 95.3 L164.7 93.1 L161.6 92.3 L160.2 89.4 M87.5 215.3 L89.9 213.2 L90.1 210.0 L90.8 206.9 L91.7 203.8 L93.7 201.3 L93.9 198.1 L93.9 194.9 M147.5 146.8 L147.5 143.6 L146.6 140.5 L147.9 137.6 L148.6 134.5 L147.4 131.5 M130.0 247.9 L132.9 246.6 L134.7 244.0 L135.1 240.8 L134.9 237.6 L132.8 235.2 L129.8 234.0 L127.5 231.8 L124.9 230.0 M251.4 49.1 L253.3 46.5 L255.7 44.3 L258.7 43.3 L261.5 41.8 L264.2 40.0 L267.4 40.0 L270.4 38.9 L271.8 36.0 M35.4 275.2 L33.3 277.6 L31.2 280.0 L31.4 283.2 L31.5 286.4 M60.6 107.2 L62.3 109.9 L61.9 113.1 L64.1 115.5 L63.6 118.6 M172.0 45.0 L175.1 44.2 L178.2 43.4 L181.0 41.9 L184.0 40.6 M28.5 156.9 L27.4 153.9 L27.6 150.7 L26.7 147.6 L28.4 144.9 L30.7 142.6 L33.6 141.3 L35.0 138.4 L38.0 137.3 L40.3 135.1 L41.3 132.0 M129.1 234.6 L126.4 236.4 L123.3 237.2 L120.6 235.4 L117.4 235.6 L114.4 234.7 L111.5 236.1 L108.5 235.1 M113.5 194.1 L116.4 192.9 L117.6 189.9 L120.7 188.9 L123.8 189.1 L126.9 188.0 L130.0 188.2 L133.2 188.9 L136.0 190.4 L139.2 191.0 L142.0 192.6 M117.4 115.3 L114.3 116.1 L111.5 114.5 L110.9 111.4 L110.2 108.3 L111.8 105.5 L114.1 103.3 L117.2 102.7 L120.3 103.6 L123.3 102.6 M240.1 288.3 L239.5 285.2 L240.8 282.3 L243.5 280.6 L246.7 281.0 M117.9 242.7 L115.4 240.7 L114.3 237.7 L115.2 234.6 L113.5 231.9 L110.4 231.3 L107.9 233.3 L104.9 234.5 L102.5 236.7 L101.9 239.8 M25.2 173.7 L25.3 170.5 L27.4 168.0 L29.0 165.3 L30.3 162.3 L31.9 159.5 L33.6 156.9 L36.5 155.4 L39.5 154.3 L41.4 151.8 L43.5 149.3 M28.9 256.2 L28.4 259.3 L26.5 261.9 L25.7 265.0 L23.6 267.4 L23.2 270.6 L22.6 273.7 M108.6 36.7 L105.6 37.8 L102.5 38.6 L99.3 38.8 L96.8 36.9 L93.8 35.8 M245.7 64.2 L245.2 67.4 L246.5 70.3 L245.9 73.4 L245.2 76.5 L246.7 79.4 M221.0 284.4 L219.4 281.6 L217.4 279.1 L215.2 276.8 L212.0 276.6 L209.6 274.5 L206.7 273.3 L203.7 274.5 L201.4 276.7 L199.6 279.3 M129.2 29.1 L132.4 29.6 L135.6 29.5 L138.7 30.2 L141.6 28.8 L144.3 27.2 L147.2 25.8 L148.4 22.8 L148.5 19.6 L146.4 17.3 L146.4 14.1 M3.4 47.8 L0.5 46.6 L-1.4 44.0 L-1.4 40.8 L0.8 38.5 L1.1 35.3 M85.3 9.0 L82.2 9.8 L79.0 9.4 L75.9 9.0 L74.0 6.4 L71.6 4.2 L69.5 1.8 L69.8 -1.3 L71.6 -4.0 L73.3 -6.7 L76.1 -8.2 M236.7 88.1 L234.9 90.7 L232.9 93.2 L232.0 96.3 L231.5 99.4 L231.1 102.6 L229.9 105.6 L230.0 108.8 L228.2 111.5 L225.4 112.9 L222.2 113.0 M244.3 169.7 L245.4 166.7 L245.4 163.5 L243.4 160.9 L243.7 157.8 L245.6 155.1 L247.5 152.6 L247.1 149.4 L244.3 147.8 M211.4 205.5 L208.5 206.9 L205.3 207.2 L202.3 208.0 L199.1 208.2 L196.3 206.5 L193.4 205.1 M125.3 30.2 L126.1 27.1 L128.3 24.7 L131.0 23.0 L132.6 20.2 L132.2 17.0 L133.6 14.2 L133.1 11.0 M36.5 27.1 L38.1 24.4 L39.7 21.6 L42.1 19.4 L43.1 16.4 L45.0 13.8 L48.2 13.6 L50.6 15.7 M131.2 269.5 L134.4 270.0 L137.4 271.0 L140.6 270.7 L143.7 271.4 L145.9 273.7 M98.4 85.8 L97.6 88.9 L98.6 91.9 L100.7 94.3 L100.2 97.5 L101.8 100.3 L102.9 103.3 L104.1 106.2 M255.6 298.6 L258.2 296.8 L261.3 295.8 L263.5 293.5 L266.5 292.4 L269.7 291.9 L272.6 290.6 L275.8 290.9 M101.2 43.1 L103.6 45.2 L106.8 45.7 L108.9 48.1 L112.1 48.0 L114.9 49.5 L116.2 52.4 L118.4 54.8 L121.1 56.5 M241.8 65.8 L244.1 63.6 L247.3 63.4 L250.3 62.3 L252.9 60.5 M275.3 87.1 L276.1 90.2 L279.0 91.5 L280.3 94.5 L282.6 96.8 M135.2 89.0 L132.1 89.8 L128.9 89.7 L126.4 87.6 L126.3 84.4 L128.2 81.8 L130.5 79.6 L132.4 77.0 L134.4 74.5 M67.6 76.4 L64.5 77.1 L61.3 76.5 L58.3 77.4 L55.1 77.9 L53.4 80.6 L50.5 81.8 L47.3 82.4 M106.7 74.4 L104.7 76.9 L103.3 79.8 L102.1 82.8 L101.8 86.0 L99.3 87.9 L98.4 91.0 M69.1 230.4 L69.9 233.4 L68.3 236.2 L65.8 238.2 L62.8 239.3 M167.3 6.8 L164.4 5.4 L161.2 5.6 L158.6 7.4 L155.4 6.8 L153.4 4.4 L150.8 2.4 L148.4 0.4 L145.2 0.4 M5.9 154.0 L9.1 154.2 L11.6 156.1 L14.7 155.6 L16.9 153.3 M238.1 93.5 L237.8 96.7 L235.9 99.3 L236.4 102.4 L235.9 105.6 L235.0 108.7 L235.4 111.9 L237.3 114.5 L239.3 116.9 L241.7 119.1 L244.3 120.8 M292.6 69.2 L295.3 67.5 L298.5 67.5 L300.7 65.1 L301.0 61.9 L300.5 58.8 M30.2 186.4 L30.8 189.6 L30.4 192.7 L29.2 195.7 L27.0 198.1 L26.6 201.2 L28.8 203.6 M24.4 265.1 L21.5 266.4 L18.8 268.2 L15.8 269.2 L12.7 268.3 L9.6 267.8 L6.4 267.4 L3.2 267.8 L0.6 269.6 L-2.6 269.2 L-4.7 266.8 M134.0 41.7 L135.0 38.7 L137.9 37.3 L141.1 37.2 L144.1 35.9 L146.3 33.6 L146.9 30.5 L146.2 27.3 M147.8 94.1 L145.1 92.4 L141.9 93.0 L139.9 95.5 L140.2 98.6 L142.8 100.4 L145.4 102.3 L148.6 102.7 L151.3 104.5 L153.3 107.0 M155.0 278.5 L157.7 276.8 L160.6 275.3 L163.8 275.6 L166.7 274.1 L169.3 272.3 L171.8 270.3 M191.2 187.0 L190.8 190.2 L188.7 192.6 L186.4 194.9 L186.3 198.1 L187.5 201.0 L189.9 203.0 L191.3 205.9 L190.3 209.0 L188.8 211.8 M276.5 100.9 L279.6 101.5 L282.3 99.8 L284.8 97.8 L287.9 96.9 L290.0 94.5 L291.1 91.5 L292.2 88.5 L293.6 85.6 L292.8 82.5 M53.2 4.1 L53.6 7.2 L52.5 10.3 L50.7 12.9 L47.6 13.9 L44.5 13.1 L41.8 14.8 L39.7 17.2 L36.6 18.1 L33.4 18.1 L30.9 16.1 M9.9 251.7 L9.8 254.9 L10.0 258.1 L10.8 261.2 L10.0 264.2 L7.2 265.8 L4.1 265.1 L1.0 264.1 L-1.8 262.6 L-5.0 262.5 L-7.7 260.9 M140.1 25.3 L143.2 26.0 L145.6 28.2 L148.7 28.7 L151.9 28.0 M86.1 169.3 L88.2 166.9 L91.4 166.4 L94.2 167.8 L96.8 169.7 L98.6 172.3 L97.9 175.5 L95.2 177.1 L92.1 177.8 M299.1 217.8 L298.4 220.9 L299.3 223.9 L297.6 226.6 L295.5 229.1 M67.6 27.4 L70.7 26.7 L73.9 27.4 L75.9 29.9 L75.6 33.1 M168.1 110.9 L168.5 114.0 L170.1 116.8 L171.1 119.9 L173.1 122.3 L174.1 125.4 L177.1 126.5 L180.3 126.3 L182.9 128.1 L186.1 128.8 M195.4 63.3 L197.0 66.1 L199.0 68.6 L198.3 71.7 L195.4 73.2 L193.7 75.9 L194.5 78.9 L197.1 80.9 M92.4 233.0 L89.7 234.6 L87.9 237.3 L85.9 239.8 L83.8 242.2 L81.3 244.2 L78.8 246.1 L75.7 247.0 L74.0 249.7 L74.3 252.9 L73.0 255.8 M98.8 194.5 L99.1 191.3 L101.3 188.9 L103.9 187.1 L106.2 184.8 L106.8 181.7 M29.3 69.1 L29.5 72.3 L27.8 75.0 L27.8 78.2 L26.6 81.2 L24.1 83.1 L21.3 84.7 M5.0 184.5 L8.1 184.4 L11.3 184.3 L14.2 185.8 L17.2 186.9 L19.0 189.5 L18.9 192.7 L18.6 195.9 L18.3 199.1 M216.7 155.8 L219.8 155.1 L223.0 155.6 L225.7 153.9 L228.9 154.4 M190.0 7.8 L193.2 7.3 L196.3 7.8 L198.9 5.9 L200.1 3.0 L202.8 1.2 L203.8 -1.9 L204.6 -5.0 L205.3 -8.1 L205.9 -11.2 L207.9 -13.7 M292.0 116.4 L294.1 118.7 L296.9 120.3 L300.0 119.4 L302.4 117.3 L304.1 114.6 L305.2 111.6 L305.5 108.4 L307.0 105.6 L309.9 104.3 M116.4 245.2 L116.7 248.4 L116.2 251.5 L113.8 253.7 L110.6 253.9 L107.5 254.7 L104.3 254.6 M27.5 257.0 L25.2 254.8 L22.0 254.6 L19.7 252.3 L17.1 250.4 L14.2 249.1 L11.3 250.5 L10.2 253.6 M120.0 34.5 L117.4 32.6 L115.9 29.8 L114.8 26.7 L114.4 23.6 L115.6 20.6 L116.7 17.6 M254.4 47.7 L252.9 44.9 L250.4 42.9 L249.8 39.7 L247.5 37.5 L246.8 34.4 L245.5 31.5 L244.7 28.4 L244.3 25.2 M174.6 85.3 L173.9 82.2 L174.5 79.0 L175.9 76.2 L176.4 73.0 L179.2 71.3 L182.3 70.8 L184.6 68.6 M248.6 128.1 L251.6 129.4 L252.9 132.3 L253.1 135.5 L255.3 137.8 L257.4 140.3 M156.8 98.8 L157.2 101.9 L155.2 104.4 L154.6 107.6 L155.1 110.7 M173.4 110.4 L170.2 110.0 L167.6 108.1 L167.3 104.9 L168.1 101.8 M193.4 58.4 L191.9 55.6 L189.1 54.0 L187.7 51.1 L186.5 48.2 M44.1 210.3 L47.1 211.4 L50.3 211.1 L52.8 209.1 L55.0 206.8 L56.6 204.0 L59.6 203.2 M255.9 282.6 L258.1 280.3 L257.7 277.1 L255.1 275.3 L254.3 272.1 L253.0 269.2 L251.4 266.5 L250.1 263.5 L250.2 260.3 L252.4 258.0 L252.3 254.8 M193.9 1.1 L191.0 -0.1 L187.8 -0.7 L184.8 -1.6 L181.6 -1.0 L178.4 -1.4 L175.6 0.0 L172.4 -0.6 L169.4 -1.6 L166.2 -1.4 L163.7 0.7 M285.9 201.7 L284.4 204.6 L281.9 206.5 L278.8 207.1 L277.1 209.8 L273.9 210.3 L271.5 212.4 L269.1 214.4 L266.0 215.5 L263.0 216.5 L260.4 218.4 M146.6 189.2 L149.7 190.0 L152.9 190.7 L156.1 190.5 L158.5 192.5 L159.0 195.7 L160.5 198.5 L160.4 201.7 L161.1 204.8 L163.9 206.4 M145.0 269.7 L141.9 269.8 L138.7 270.5 L135.6 271.2 L133.0 269.3 L130.9 266.9 L128.2 265.2 L126.1 262.8 L125.8 259.6 L127.7 257.0 L130.8 256.6 M67.9 47.9 L66.2 50.7 L64.7 53.5 L61.6 54.5 L59.0 56.3 L55.8 56.3 L52.8 57.3 L49.7 56.6 M58.6 289.1 L60.5 291.7 L62.2 294.4 L65.1 295.7 L66.1 298.7 M134.7 273.0 L137.6 274.4 L140.8 274.2 L142.8 271.7 L143.4 268.5 L144.1 265.4 L145.5 262.5 L146.0 259.4 L147.0 256.4 M101.6 242.7 L103.9 244.9 L106.4 246.9 L109.4 247.8 L112.6 248.2 L114.8 250.5 L118.0 250.4 L120.4 248.4 L122.4 245.9 L125.6 245.6 L128.1 247.6 M237.8 33.1 L237.6 29.9 L238.3 26.8 L236.7 24.0 L237.0 20.8 L235.9 17.8 L236.6 14.7 L236.2 11.5 L236.6 8.3 L237.1 5.1 L239.7 3.3 M145.1 153.6 L142.1 152.4 L139.2 151.0 L136.8 148.9 L136.4 145.7 L136.5 142.5 L135.3 139.6 M87.4 37.6 L85.8 34.8 L85.6 31.6 L84.0 28.9 L80.9 28.0 L77.7 27.6 M128.5 146.9 L128.0 143.8 L128.0 140.6 L126.4 137.8 L124.9 134.9 L124.7 131.7 M174.6 211.7 L173.0 208.9 L173.4 205.7 L174.4 202.7 L173.9 199.5 L171.1 197.9 L169.8 195.0 L166.7 194.1 L164.4 192.0 L162.1 189.7 L160.8 186.7 M61.7 219.2 L62.3 222.3 L64.3 224.9 L64.4 228.1 L62.1 230.3 L59.0 230.8 L55.9 230.0 L54.1 227.4 L54.6 224.2 M279.2 194.8 L276.8 192.7 L276.5 189.5 L275.6 186.5 L273.7 183.9 L272.4 180.9 L269.9 179.0 M34.4 133.5 L34.0 130.3 L31.4 128.5 L29.4 126.0 L26.4 125.1 L23.4 123.8 L21.1 121.6 M103.7 176.6 L100.5 176.5 L97.6 175.1 L94.6 176.0 L91.5 177.0 L88.6 178.4 L85.5 178.9 L83.9 181.7 L84.5 184.9 L85.6 187.9 M281.9 150.6 L285.0 149.8 L287.9 150.9 L291.0 150.1 L292.8 147.5 L293.5 144.3 L296.1 142.5 L299.3 142.2 L301.8 140.1 M267.5 150.5 L270.4 149.3 L273.2 147.7 L275.4 145.3 L276.1 142.2 L275.1 139.1 L273.0 136.8 L270.2 135.3 L267.0 136.0 M94.9 285.5 L98.1 284.8 L100.6 286.7 L102.9 288.9 L103.0 292.1 L100.5 294.1 L98.2 296.3 L96.0 298.6 L93.8 301.0 M282.7 102.9 L284.6 105.5 L284.5 108.7 L286.5 111.2 L287.8 114.1 L289.2 117.0 L289.2 120.2 L291.0 122.8 L292.0 125.8 L294.9 127.0 L297.8 125.6 M132.6 104.0 L130.3 106.3 L127.9 108.4 L124.7 108.3 L121.6 109.2 L118.5 108.8 M138.8 176.3 L138.3 179.4 L138.1 182.6 L137.4 185.7 L138.1 188.8 M251.1 66.4 L249.6 63.5 L250.4 60.4 L252.7 58.2 L254.6 55.6 L256.5 53.1 L259.1 51.3 L261.6 49.1 L261.4 45.9 L261.1 42.8 M255.1 267.5 L257.9 265.9 L261.1 266.2 L263.1 268.7 L265.1 271.2 L265.2 274.4 L263.2 276.8 L260.2 278.1 L257.6 279.9 L254.4 279.5 M129.2 270.4 L126.4 272.0 L123.3 272.3 L120.3 271.2 L117.2 272.2 L114.4 270.7 L111.3 271.2 L109.1 273.5 M165.3 51.8 L162.3 52.8 L160.5 55.4 L157.3 55.9 L155.4 58.5 L153.2 60.9 L150.1 61.4 L147.0 60.5 M44.6 31.7 L45.6 28.7 L44.6 25.7 L43.6 22.6 L42.7 19.6 L40.6 17.1 L39.4 14.2 L37.3 11.8 M102.3 179.8 L104.2 177.3 L107.0 175.7 L110.0 174.5 L113.2 174.8 L115.7 176.8 M221.8 32.3 L220.0 35.0 L217.3 36.8 L214.3 37.8 L211.1 37.8 M239.3 32.5 L236.3 31.5 L234.4 28.9 L231.4 27.6 L228.4 26.6 M291.0 295.3 L293.3 293.0 L294.8 290.2 L296.9 287.8 L297.0 284.6 L294.7 282.4 L291.5 282.6 L289.0 280.7" stroke="#444" stroke-width=".6" stroke-opacity=".6"/><path d="M-5.0 -2.2 L74.4 -25.6 M-5.0 5.8 L63.6 -14.4 M137.9 -36.4 L182.5 -49.5 M182.5 -49.5 L263.8 -73.5 M-5.0 22.2 L77.1 -2.0 M77.1 -2.0 L111.0 -12.0 M111.0 -12.0 L198.7 -37.9 M198.7 -37.9 L264.5 -57.3 M264.5 -57.3 L320.0 -73.7 M-5.0 46.0 L57.3 27.7 M86.4 19.1 L175.7 -7.3 M175.7 -7.3 L252.8 -30.0 M252.8 -30.0 L287.6 -40.3 M-5.0 52.4 L59.9 33.3 M59.9 33.3 L131.6 12.1 M271.8 -29.2 L316.9 -42.5 M316.9 -42.5 L320.0 -43.4 M-5.0 67.7 L78.3 43.1 M-5.0 75.0 L66.8 53.8 M170.3 23.3 L196.0 15.7 M196.0 15.7 L258.7 -2.8 M-5.0 89.4 L68.0 67.8 M96.9 59.3 L184.5 33.4 M239.2 17.3 L285.0 3.8 M285.0 3.8 L320.0 -6.5 M-5.0 97.0 L39.5 83.9 M39.5 83.9 L114.7 61.7 M176.7 43.4 L221.9 30.1 M221.9 30.1 L299.1 7.3 M299.1 7.3 L320.0 1.2 M41.9 97.8 L124.4 73.4 M124.4 73.4 L164.0 61.8 M164.0 61.8 L223.5 44.2 M300.9 21.4 L320.0 15.7 M61.7 100.1 L109.2 86.1 M153.1 73.1 L195.8 60.6 M195.8 60.6 L247.9 45.2 M299.5 30.0 L320.0 23.9 M113.8 101.6 L172.6 84.3 M172.6 84.3 L219.7 70.4 M189.4 87.2 L225.6 76.6 M-5.0 160.4 L42.9 146.3 M223.7 92.9 L302.2 69.8 M-5.0 166.8 L37.6 154.2 M37.6 154.2 L96.9 136.7 M152.7 120.3 L177.8 112.9 M177.8 112.9 L211.0 103.1 M240.5 94.4 L320.0 70.9 M-5.0 181.0 L41.4 167.3 M102.5 149.3 L152.2 134.6 M152.2 134.6 L188.8 123.8 M302.8 90.2 L320.0 85.1 M104.6 155.8 L159.5 139.6 M219.4 122.0 L249.0 113.2 M301.7 97.7 L320.0 92.3 M244.0 131.2 L269.3 123.8 M269.3 123.8 L320.0 108.8 M26.5 201.9 L63.1 191.1 M63.1 191.1 L142.8 167.6 M-5.0 225.6 L80.7 200.3 M126.8 186.7 L205.6 163.5 M205.6 163.5 L242.3 152.6 M307.4 133.5 L320.0 129.7 M-5.0 232.8 L42.8 218.7 M73.2 209.8 L161.4 183.7 M161.4 183.7 L235.0 162.0 M48.8 231.8 L85.9 220.9 M123.8 209.7 L169.3 196.3 M-5.0 255.4 L37.4 242.9 M37.4 242.9 L63.9 235.0 M63.9 235.0 L113.7 220.3 M113.7 220.3 L162.2 206.0 M162.2 206.0 L237.5 183.8 M237.5 183.8 L320.0 159.5 M117.9 234.2 L205.3 208.4 M205.3 208.4 L245.2 196.6 M-5.0 277.3 L32.3 266.3 M191.9 219.2 L237.2 205.8 M237.2 205.8 L309.6 184.5 M-5.0 291.3 L48.4 275.6 M87.0 264.2 L174.1 238.5 M174.1 238.5 L234.5 220.7 M309.7 198.5 L320.0 195.5 M44.3 285.3 L118.6 263.4 M187.5 243.0 L264.9 220.2 M100.9 284.4 L166.9 264.9 M282.8 230.7 L317.0 220.6 M-5.0 323.2 L62.1 303.4 M62.1 303.4 L107.4 290.0 M210.9 259.5 L284.0 237.9 M284.0 237.9 L320.0 227.3 M103.1 306.8 L135.4 297.3 M135.4 297.3 L166.9 288.0 M242.5 265.7 L279.5 254.8 M68.7 325.2 L103.2 315.0 M140.8 303.9 L202.7 285.6 M95.9 332.2 L168.2 310.9 M300.2 271.9 L320.0 266.1 M22.4 361.4 L89.4 341.6 M151.2 323.4 L234.2 298.9 M310.7 276.4 L320.0 273.6 M-5.0 384.6 L65.2 363.9 M231.2 314.9 L304.3 293.4 M48.4 377.1 L104.9 360.5 M104.9 360.5 L132.7 352.3 M132.7 352.3 L170.7 341.1 M228.0 324.1 L288.0 306.5 M288.0 306.5 L320.0 297.0 M54.4 389.9 L94.0 378.2 M132.5 366.8 L166.9 356.7 M166.9 356.7 L204.6 345.6 M204.6 345.6 L240.7 334.9 M240.7 334.9 L276.6 324.3 M276.6 324.3 L308.8 314.9 M308.8 314.9 L320.0 311.5 M-5.0 413.8 L49.1 397.8 M49.1 397.8 L119.8 376.9 M119.8 376.9 L171.1 361.8 M197.8 353.9 L237.0 342.4 M237.0 342.4 L292.9 325.9 M292.9 325.9 L320.0 317.9 M-5.0 427.3 L36.2 415.2 M114.2 392.2 L161.6 378.2 M231.0 357.7 L294.5 339.0 M294.5 339.0 L320.0 331.5 M-5.0 434.0 L22.4 426.0 M268.6 353.3 L295.8 345.3 M165.0 398.8 L213.6 384.5 M253.5 372.7 L309.8 356.1 M-5.0 456.7 L66.2 435.7 M66.2 435.7 L122.9 419.0 M122.9 419.0 L194.0 397.9 M249.4 381.6 L318.4 361.3 M-5.0 472.4 L41.7 458.7 M41.7 458.7 L71.4 449.9 M71.4 449.9 L158.5 424.2 M158.5 424.2 L220.5 405.9 M250.7 397.0 L291.4 385.0 M-5.0 480.1 L20.8 472.5 M20.8 472.5 L108.6 446.6 M108.6 446.6 L170.2 428.4 M-5.0 493.2 L82.8 467.3 M82.8 467.3 L165.9 442.8 M165.9 442.8 L221.1 426.5 M42.5 487.5 L96.5 471.5 M175.8 448.1 L253.7 425.1 M253.7 425.1 L313.8 407.4 M313.8 407.4 L320.0 405.6 M62.1 496.0 L101.1 484.5 M101.1 484.5 L190.8 458.1 M190.8 458.1 L243.8 442.4 M243.8 442.4 L283.0 430.9 M-77.3 168.3 L-67.5 206.0 L-57.1 243.6 M-14.4 377.4 L-12.2 383.7 L-9.9 390.0 M-97.8 39.1 L-91.2 72.4 L-84.1 105.7 M-84.1 105.7 L-75.7 142.4 L-66.6 179.1 M-66.6 179.1 L-59.7 205.7 L-52.4 232.2 M-30.5 305.5 L-23.4 327.3 L-16.2 349.1 M-16.2 349.1 L-9.2 369.6 L-2.0 390.0 M-92.0 -5.0 L-88.9 12.7 L-85.7 30.5 M-74.8 85.6 L-68.3 115.7 L-61.2 145.8 M-61.2 145.8 L-51.2 186.0 L-40.4 226.3 M-24.3 281.4 L-12.1 320.1 L0.8 358.8 M-79.8 28.5 L-74.1 58.5 L-67.9 88.4 M-67.9 88.4 L-64.9 102.5 L-61.7 116.6 M-61.7 116.6 L-52.9 154.2 L-43.4 191.7 M-18.3 280.3 L-4.3 324.7 L10.6 369.0 M10.6 369.0 L14.3 379.5 L18.0 390.0 M-70.2 -5.0 L-65.7 21.1 L-60.8 47.2 M-60.8 47.2 L-58.1 61.1 L-55.3 75.0 M-18.9 225.1 L-13.1 245.7 L-7.1 266.2 M-62.7 -5.0 L-58.9 16.6 L-55.0 38.2 M7.2 288.3 L17.3 320.4 L27.9 352.5 M27.9 352.5 L34.4 371.3 L41.0 390.0 M-38.0 49.4 L-34.5 67.0 L-30.9 84.5 M-30.9 84.5 L-24.4 114.0 L-17.6 143.4 M11.8 230.1 L21.5 263.5 L31.6 297.0 M31.6 297.0 L45.3 339.4 L59.9 381.8 M-19.9 36.3 L-17.0 51.3 L-14.0 66.4 M-14.0 66.4 L-10.1 85.4 L-6.0 104.4 M29.1 243.1 L40.7 282.2 L53.0 321.3 M67.5 364.6 L71.9 377.3 L76.4 390.0 M-12.3 37.4 L-9.6 51.4 L-6.8 65.5 M-6.8 65.5 L2.4 109.1 L12.6 152.7 M12.6 152.7 L23.2 194.6 L34.7 236.6 M62.0 326.1 L72.7 358.1 L83.8 390.0 M-4.9 -5.0 L0.4 24.9 L6.0 54.8 M6.0 54.8 L9.2 70.7 L12.5 86.7 M12.5 86.7 L22.4 131.3 L33.3 175.9 M33.3 175.9 L37.6 192.7 L42.1 209.4 M42.1 209.4 L46.7 226.1 L51.4 242.7 M51.4 242.7 L63.9 284.9 L77.3 327.2 M22.1 99.6 L27.2 122.2 L32.5 144.9 M101.1 377.1 L103.4 383.6 L105.6 390.0 M16.6 -5.0 L19.9 14.1 L23.3 33.2 M23.3 33.2 L32.0 77.5 L41.7 121.7 M41.7 121.7 L51.4 162.6 L61.9 203.5 M115.1 375.5 L117.7 382.8 L120.2 390.0 M24.1 -5.0 L28.8 21.8 L33.8 48.7 M33.8 48.7 L40.2 80.7 L47.2 112.7 M47.2 112.7 L53.9 141.7 L61.0 170.6 M61.0 170.6 L66.8 193.5 L73.0 216.3 M119.4 366.2 L123.6 378.1 L127.8 390.0 M39.6 -5.0 L47.4 38.9 L56.2 82.9 M89.7 220.8 L98.1 250.5 L106.9 280.1 M106.9 280.1 L117.1 312.7 L127.8 345.3 M62.4 73.8 L67.6 98.2 L73.0 122.6 M102.1 236.3 L112.5 272.0 L123.5 307.6 M138.2 352.1 L144.7 371.1 L151.4 390.0 M62.1 -5.0 L64.7 10.2 L67.4 25.3 M67.4 25.3 L71.5 47.0 L75.8 68.7 M125.6 267.3 L138.6 309.5 L152.4 351.6 M152.4 351.6 L159.0 370.8 L165.8 390.0 M79.3 44.6 L87.7 86.0 L96.9 127.5 M105.8 164.8 L114.0 196.8 L122.7 228.7 M122.7 228.7 L126.5 242.1 L130.4 255.5 M138.0 281.0 L143.7 299.5 L149.6 318.0 M94.5 48.7 L103.6 93.4 L113.7 138.2 M133.6 216.2 L144.7 255.6 L156.6 295.0 M173.5 347.2 L180.9 368.6 L188.4 390.0 M114.7 111.5 L118.2 126.8 L121.8 142.1 M135.7 197.5 L143.9 227.6 L152.5 257.6 M180.5 346.4 L187.9 368.2 L195.6 390.0 M138.0 150.7 L142.7 169.8 L147.6 188.9 M147.6 188.9 L154.7 215.5 L162.1 242.1 M185.5 318.7 L197.3 354.4 L209.7 390.0 M114.5 -5.0 L118.9 20.4 L123.6 45.8 M123.6 45.8 L127.2 64.4 L131.1 82.9 M131.1 82.9 L137.3 111.6 L143.9 140.4 M164.5 220.7 L168.5 235.1 L172.6 249.4 M172.6 249.4 L180.1 274.6 L187.8 299.7 M187.8 299.7 L194.4 320.3 L201.2 341.0 M201.2 341.0 L209.5 365.5 L218.1 390.0 M128.9 -5.0 L134.5 27.3 L140.7 59.6 M140.7 59.6 L148.4 96.5 L156.7 133.4 M171.6 193.5 L180.5 226.4 L189.9 259.3 M225.1 368.8 L228.8 379.4 L232.5 390.0 M137.2 -5.0 L143.4 29.8 L150.1 64.6 M179.1 190.2 L186.6 218.4 L194.6 246.6 M194.6 246.6 L205.2 282.4 L216.5 318.2 M162.7 57.9 L166.6 77.0 L170.6 96.1 M253.8 387.0 L254.3 388.5 L254.9 390.0 M180.4 111.9 L187.6 142.8 L195.2 173.8 M214.2 244.1 L221.5 269.1 L229.2 294.2 M229.2 294.2 L238.9 324.7 L249.0 355.2 M249.0 355.2 L255.0 372.6 L261.2 390.0 M194.2 111.6 L201.0 140.8 L208.1 170.1 M208.1 170.1 L211.9 184.7 L215.7 199.4 M237.9 277.4 L246.6 305.4 L255.6 333.4 M178.9 -5.0 L182.2 14.0 L185.6 33.0 M230.5 226.1 L241.1 263.0 L252.3 299.9 M193.0 -5.0 L199.2 29.8 L205.9 64.7 M205.9 64.7 L214.0 103.3 L222.9 141.9 M238.1 202.3 L245.0 227.4 L252.1 252.5 M219.6 96.3 L223.9 115.4 L228.2 134.5 M301.3 382.9 L302.6 386.4 L303.8 390.0 M241.5 126.7 L244.5 139.3 L247.5 151.9 M247.5 151.9 L256.3 187.1 L265.8 222.3 M222.3 -5.0 L225.7 14.8 L229.3 34.6 M229.3 34.6 L236.9 73.1 L245.1 111.6 M245.1 111.6 L249.7 131.6 L254.5 151.6 M254.5 151.6 L258.3 167.2 L262.3 182.8 M279.2 245.0 L288.7 276.9 L298.6 308.9 M298.6 308.9 L302.9 322.2 L307.2 335.5 M307.2 335.5 L315.1 359.0 L323.3 382.5 M323.3 382.5 L324.6 386.3 L326.0 390.0 M272.5 166.0 L279.3 192.7 L286.5 219.5 M286.5 219.5 L299.4 264.4 L313.3 309.4 M251.5 36.1 L256.6 62.1 L261.9 88.0 M261.9 88.0 L268.0 115.9 L274.5 143.8 M292.7 214.9 L304.6 256.8 L317.3 298.7 M317.3 298.7 L328.4 333.2 L340.0 367.6 M340.0 367.6 L343.9 378.8 L347.9 390.0 M304.0 201.2 L307.4 213.9 L311.0 226.6 M348.3 348.0 L355.5 369.0 L362.9 390.0 M266.6 -5.0 L272.2 27.1 L278.4 59.1 M297.3 145.7 L302.4 166.6 L307.8 187.4 M353.6 341.9 L360.1 361.0 L366.8 380.1 M366.8 380.1 L368.5 385.0 L370.3 390.0 M296.6 77.4 L301.6 101.0 L306.9 124.6 M313.4 152.2 L322.7 189.1 L332.7 226.0 M332.7 226.0 L343.0 262.1 L354.0 298.1 M354.0 298.1 L360.2 317.8 L366.7 337.4 M312.3 119.4 L318.5 146.0 L325.0 172.5 M318.3 75.6 L323.9 102.2 L330.0 128.9 M339.4 167.9 L346.1 194.1 L353.2 220.3 M368.7 274.1 L375.1 294.9 L381.6 315.6 M381.6 315.6 L393.9 352.8 L406.9 390.0 M310.4 -5.0 L318.3 39.2 L327.1 83.4 M333.7 114.0 L338.4 134.4 L343.3 154.9 M343.3 154.9 L354.3 197.8 L366.1 240.8 M366.1 240.8 L378.5 282.6 L391.6 324.4 M391.6 324.4 L399.0 346.7 L406.7 369.1" stroke="#3a3a3a" stroke-width=".55" stroke-opacity=".68"/><path d="M-5.0 -8.5 L115.5 -44.1 M115.5 -44.1 L258.3 -86.2 M258.3 -86.2 L320.0 -104.4 M-5.0 13.8 L231.6 -56.0 M231.6 -56.0 L320.0 -82.1 M-5.0 37.8 L228.8 -31.1 M228.8 -31.1 L320.0 -58.0 M-5.0 59.2 L144.3 15.1 M144.3 15.1 L250.9 -16.3 M250.9 -16.3 L320.0 -36.7 M-5.0 81.4 L181.6 26.4 M181.6 26.4 L320.0 -14.4 M-5.0 104.9 L92.3 76.2 M92.3 76.2 L229.1 35.9 M229.1 35.9 L320.0 9.1 M-5.0 152.3 L133.0 111.6 M133.0 111.6 L320.0 56.4 M-5.0 174.3 L128.7 134.8 M128.7 134.8 L268.4 93.6 M268.4 93.6 L320.0 78.4 M-5.0 196.5 L209.5 133.3 M209.5 133.3 L320.0 100.6 M-5.0 217.6 L205.5 155.5 M205.5 155.5 L320.0 121.7 M-5.0 240.2 L184.3 184.4 M184.3 184.4 L289.7 153.3 M289.7 153.3 L320.0 144.4 M-5.0 263.0 L154.6 216.0 M154.6 216.0 L320.0 167.2 M-5.0 284.3 L135.6 242.8 M135.6 242.8 L320.0 188.4 M-5.0 307.7 L166.1 257.2 M166.1 257.2 L320.0 211.8 M-5.0 331.5 L82.2 305.8 M82.2 305.8 L204.2 269.8 M204.2 269.8 L320.0 235.6 M-5.0 354.1 L168.9 302.8 M-5.0 376.3 L88.2 348.8 M88.2 348.8 L320.0 280.4 M-5.0 400.3 L203.7 338.7 M203.7 338.7 L314.4 306.0 M314.4 306.0 L320.0 304.4 M-5.0 420.4 L83.8 394.2 M83.8 394.2 L210.6 356.8 M-5.0 440.5 L124.9 402.2 M124.9 402.2 L224.4 372.9 M224.4 372.9 L320.0 344.7 M-5.0 464.4 L224.4 396.8 M224.4 396.8 L320.0 368.6 M-5.0 486.8 L105.2 454.3 M105.2 454.3 L320.0 390.9 M-5.0 508.6 L157.4 460.7 M157.4 460.7 L320.0 412.7 M-120.8 -5.0 L-96.4 118.9 L-64.6 242.7 M-64.6 242.7 L-42.2 316.4 L-17.2 390.0 M-99.1 -5.0 L-89.6 48.0 L-78.7 101.0 M-25.7 300.1 L-11.1 345.1 L4.5 390.0 M-78.4 -5.0 L-65.7 63.8 L-50.8 132.5 M-50.8 132.5 L-28.8 218.9 L-3.2 305.3 M-3.2 305.3 L10.6 347.7 L25.3 390.0 M-13.8 191.2 L10.6 277.7 L38.7 364.2 M38.7 364.2 L43.2 377.1 L47.7 390.0 M-8.9 121.1 L22.0 241.3 L59.8 361.5 M59.8 361.5 L64.8 375.7 L69.8 390.0 M-13.4 -5.0 L6.8 99.6 L32.2 204.1 M32.2 204.1 L48.0 260.2 L65.3 316.3 M65.3 316.3 L77.4 353.2 L90.3 390.0 M9.7 -5.0 L33.1 114.3 L63.3 233.6 M97.4 344.1 L105.2 367.0 L113.3 390.0 M32.7 -5.0 L44.2 57.9 L57.6 120.9 M57.6 120.9 L78.0 203.4 L101.8 286.0 M101.8 286.0 L118.4 338.0 L136.3 390.0 M55.5 -5.0 L77.8 109.4 L106.4 223.8 M106.4 223.8 L121.6 276.2 L138.1 328.6 M138.1 328.6 L148.4 359.3 L159.2 390.0 M78.3 -5.0 L92.6 72.1 L109.8 149.2 M109.8 149.2 L142.4 269.6 L181.9 390.0 M98.9 -5.0 L121.7 111.5 L151.0 228.0 M151.0 228.0 L175.2 309.0 L202.6 390.0 M121.0 -5.0 L131.7 53.7 L144.0 112.5 M144.0 112.5 L165.6 200.5 L190.9 288.5 M190.9 288.5 L207.2 339.2 L224.7 390.0 M143.8 -5.0 L159.7 79.9 L179.1 164.8 M179.1 164.8 L200.8 245.4 L225.5 326.0 M225.5 326.0 L236.2 358.0 L247.4 390.0 M164.7 -5.0 L175.0 51.7 L186.8 108.4 M186.8 108.4 L208.5 197.3 L233.9 286.3 M233.9 286.3 L248.2 331.0 L263.3 375.7 M263.3 375.7 L265.8 382.8 L268.4 390.0 M185.6 -5.0 L204.0 91.7 L227.0 188.4 M227.0 188.4 L250.3 271.7 L277.0 354.9 M277.0 354.9 L283.0 372.5 L289.2 390.0 M207.9 -5.0 L230.4 110.2 L259.3 225.3 M259.3 225.3 L271.0 265.9 L283.4 306.5 M283.4 306.5 L297.1 348.3 L311.6 390.0 M230.4 -5.0 L247.7 86.1 L268.9 177.2 M268.9 177.2 L297.6 279.8 L331.3 382.3 M331.3 382.3 L332.7 386.1 L334.0 390.0 M251.2 -5.0 L260.5 46.3 L271.0 97.6 M318.5 280.1 L336.0 335.0 L354.9 390.0 M274.3 -5.0 L291.7 86.9 L313.2 178.9 M313.2 178.9 L328.1 234.3 L344.5 289.8 M344.5 289.8 L360.6 339.9 L377.9 390.0 M296.2 -5.0 L305.6 46.7 L316.1 98.4 M316.1 98.4 L344.7 214.9 L379.8 331.3 M317.6 -5.0 L333.2 78.1 L352.1 161.3 M419.0 383.7 L420.1 386.8 L421.3 390.0" stroke="#2c2c2c" stroke-width=".7" stroke-opacity=".85"/><path d="M-5.0 262.0 L70.0 168.2 M-5.0 275.0 L70.0 181.2 M-5.0 288.0 L70.0 194.2 M-5.0 301.0 L70.0 207.2 M-5.0 314.0 L70.0 220.2 M-5.0 327.0 L70.0 233.2 M-5.0 340.0 L70.0 246.2 M-5.0 353.0 L70.0 259.2 M-5.0 366.0 L70.0 272.2 M-5.0 240.0 L45.0 280.0 M-5.0 255.0 L45.0 295.0 M-5.0 270.0 L45.0 310.0 M-5.0 285.0 L45.0 325.0 M-5.0 300.0 L45.0 340.0 M-5.0 315.0 L45.0 355.0 M-5.0 330.0 L45.0 370.0" stroke="#333" stroke-width=".55" stroke-opacity=".7"/><path d="M123.5 215.2 L160.5 204.4 M123.5 218.3 L160.5 207.6 M123.5 221.5 L160.5 210.7 M123.5 224.6 L160.5 213.9 M123.5 227.8 L160.5 217.0 M123.5 230.9 L160.5 220.2 M123.5 234.1 L160.5 223.3 M123.5 237.2 L160.5 226.5 M123.5 240.4 L160.5 229.6 M124.6 212.2 L132.7 240.0 M127.6 211.4 L135.7 239.1 M130.5 210.5 L138.7 238.3 M133.5 209.6 L141.6 237.4 M136.4 208.8 L144.6 236.6 M139.4 207.9 L147.6 235.7 M142.4 207.1 L150.5 234.8 M145.3 206.2 L153.5 234.0 M148.3 205.3 L156.4 233.1 M151.3 204.5 L159.4 232.3 M154.2 203.6 L162.4 231.4 M157.2 202.8 L165.3 230.5 M160.1 201.9 L168.3 229.7" stroke="#222" stroke-width=".5" stroke-opacity=".8"/></g><path d="M0.1 138.1 L21.6 128.9 L47.6 117.8 L71.6 108.5 L80.9 97.4 L84.6 88.1 L99.4 78.9 L117.9 73.3 L140.1 69.6 L166.1 64.1 L192.0 56.7 L221.6 45.6 L243.9 36.3 L255.0 27.0 L262.4 19.6 L284.6 12.2 L306.8 6.7 M0.1 117.8 L29.0 112.2 L51.3 104.8 L71.6 108.5 M30.9 1.1 L36.4 30.7 L42.0 64.1 L47.6 101.1 L51.3 130.7 L56.8 171.5 M138.3 1.1 L143.9 34.4 L149.4 64.1 L156.8 90.0 L166.1 108.5 L169.8 138.1 L173.5 156.7 L175.3 175.2 L166.1 186.3 L155.0 197.4 L153.1 212.2 L158.7 221.5 M208.7 1.1 L214.2 27.0 L221.6 64.1 L229.0 101.1 L236.4 138.1 M0.1 190.0 L25.3 186.3 L40.1 177.0 L66.1 167.8 L95.7 160.4 L114.2 145.6 L140.1 134.4 L166.1 130.7 L192.0 127.0 L217.9 117.8 L251.3 104.8 L273.5 106.7 L284.6 103.0 L306.8 85.6 M306.8 85.6 L288.3 104.8 L266.1 130.7 L251.3 153.0 L229.0 182.6 L214.2 197.4 M0.1 219.6 L17.9 210.4 L25.3 212.2 L40.1 256.7 L80.9 245.6 L95.7 240.0 L110.5 241.9 L121.6 243.7 L140.1 238.1 L158.7 230.7 M19.8 201.1 L29.0 227.0 L38.3 256.7 L45.7 275.2 M0.1 308.5 L14.2 286.3 L29.0 267.8 L40.1 256.7 M56.8 171.5 L71.6 164.1 L88.3 175.2 L99.4 186.3 M0.1 334.4 L25.3 297.4 L40.1 271.5" fill="none" stroke="#1e1e1e" stroke-width="1.2" stroke-opacity=".92" stroke-linejoin="round" stroke-linecap="round"/></svg></div><div class="ab" style="left:845px;top:549px;width:308px;height:384px;outline:0;box-shadow:0 0 0 1px #111 inset"><svg width="308" height="384" style="position:absolute;left:0;top:0"><path d="M1.6 365.1 L2.4 361.8 L4.4 359.6 L6.3 357.4 L8.0 355.8 L8.4 353.0 L8.5 350.7 L9.1 348.9 L9.7 346.0 L9.4 343.2 L9.7 340.9 L10.1 338.3 L10.3 336.5 L10.8 333.7 L10.8 330.6 L11.2 328.3 L11.7 326.3 L13.7 323.6 L15.5 321.7 L18.5 320.6 L21.1 318.9 L21.4 317.2 L22.7 314.1 L22.9 312.4 L24.6 310.5 L26.5 309.0 L28.3 306.8 L29.8 305.5 L32.0 303.5 L33.2 302.4 L34.9 300.3 L36.7 298.9 L39.4 297.5 L41.4 296.5 L43.6 295.2 L45.5 294.4 L46.9 292.9 L47.1 290.5 L46.7 287.6 L46.9 285.5 L48.9 283.1 L50.7 281.8 L53.3 280.9 L55.5 280.3 L57.7 280.1 L59.7 280.0 L61.8 279.0 L65.1 277.8 L67.1 277.2 L69.0 275.7 L70.4 273.7 L72.4 272.4 L74.5 270.7 L75.5 269.0 L76.9 266.6 L79.1 264.7 L80.1 263.3 L81.3 260.2 L83.2 257.9 L83.8 255.8 L85.3 254.2 L85.9 252.0 L87.5 250.3 L89.1 248.4 L90.5 246.2 L91.4 243.9 L94.1 242.1 L96.9 240.9 L98.9 241.2 L102.2 241.2 L104.3 241.9 L106.8 242.4 L109.7 243.5 L111.7 244.7 L113.5 245.5 L115.9 245.6 L118.1 246.4 L120.8 247.5 L123.5 247.1 L126.1 245.7 L127.6 246.9 L129.7 248.4 L131.1 250.6 L132.4 251.8 L133.3 254.0 L134.0 255.3 L135.6 257.3 L137.2 259.3 L138.0 261.3 L140.4 260.2 L143.2 259.5 L145.5 258.8 L148.2 257.8 L150.7 256.4 L151.9 254.6 L153.9 252.6 L155.6 251.5 L157.2 249.5 L159.5 248.4 L161.2 247.0 L163.0 244.6 L163.9 246.8 L163.3 249.4 L163.8 251.2 L165.0 253.9 L164.5 255.9 L165.4 258.1 L165.8 260.4 L167.9 259.2 L170.6 259.0 L172.7 257.9 L175.2 256.8 L178.0 255.8 L178.5 253.4 L178.0 250.8 L178.2 249.2 L179.1 247.1 L179.3 243.7 L179.5 242.2 L179.8 239.6 L179.8 237.3 L181.1 234.7 L181.7 232.6 L183.1 230.7 L183.6 228.1 L184.7 225.9 L186.2 224.0 L187.5 222.6 L189.1 220.6 L191.2 218.9 L192.6 218.7 L194.5 216.9 L196.4 215.3 L199.7 215.1 L201.7 213.0 L203.8 212.2 L205.9 210.3 L207.5 208.0 L209.3 205.8 L211.4 204.2 L212.0 202.1 L214.1 200.0 L215.8 198.4 L217.0 196.6 L219.3 195.1 L220.6 192.5 L222.3 190.5 L224.3 189.6 L225.9 187.3 L227.5 185.6 L229.4 184.7 L230.9 182.6 L232.8 180.9 L234.1 179.7 L235.5 178.1 L236.5 175.8 L238.0 173.6 L240.0 171.2 L240.8 168.8 L242.6 167.4 L244.0 165.4 L244.8 163.7 L247.1 161.5 L248.4 159.6 L249.7 158.0 L252.3 155.5 L254.1 154.1 L255.4 152.5 L257.5 150.3 L259.4 148.6 L261.4 147.5 L262.8 146.6 L264.5 144.2 L266.8 143.7 L268.7 142.0 L270.9 141.4 L273.0 140.2 L275.4 139.2 L277.1 139.2 L279.7 138.3 L282.0 136.2 L283.7 134.8 L285.8 132.2 L287.1 130.8 L288.6 128.5 L289.6 126.8 L292.2 124.5 L293.2 122.5 L294.6 120.7 L295.8 118.9 L297.4 116.9 L299.3 114.6 L300.3 113.1 L302.3 111.6 L304.3 109.2 L306.4 107.0 L308.0 105.5 L308.0 384.0 L0.0 384.0 L0.0 365.0 Z" fill="#383838"/><circle cx="142.8" cy="258.6" r=".600" fill="#383838"/><circle cx="146.5" cy="256.7" r=".600" fill="#383838"/><circle cx="152.0" cy="254.9" r=".600" fill="#383838"/><circle cx="156.7" cy="251.2" r=".600" fill="#383838"/><circle cx="170.6" cy="254.0" r=".600" fill="#383838"/><circle cx="173.3" cy="252.1" r=".600" fill="#383838"/><circle cx="176.1" cy="250.3" r=".600" fill="#383838"/><circle cx="170.6" cy="257.7" r=".600" fill="#383838"/><circle cx="140.0" cy="254.0" r=".600" fill="#383838"/><path d="M133.5 241.9 L154.8 233.6 L160.4 237.3 L161.7 244.7 L151.1 254.0 L140.9 257.1 L135.9 248.4 Z" fill="#383838"/><path d="M164.6 241.4 L176.1 232.3 L179.3 235.4 L174.6 248.4 L169.1 252.5 L166.1 246.9 Z" fill="#383838"/><path d="M2.7 68.2 L5.5 70.9 L7.7 74.1 L9.2 77.1 L11.5 79.8 L12.6 82.4 L14.2 86.8 L14.8 89.0 L16.7 93.3 L17.6 95.6 L19.3 98.2 L20.2 101.8 L18.8 104.7 L18.8 109.0 L18.3 111.8 L18.8 114.6 L18.4 117.3 L17.3 120.7 L18.1 124.2 L18.6 127.4 L19.9 129.9 L21.6 133.5 L21.8 136.3 L23.4 139.7 L26.2 141.3 L29.0 143.5 L30.6 147.0 L32.7 149.0 L34.9 151.8 L38.6 154.1 L41.1 156.4 L43.1 159.7 L45.2 162.2 L48.0 165.8 L48.0 168.4 L47.9 171.6 L49.5 175.1 L50.4 177.1 L50.3 180.8 L50.3 183.5 L52.7 185.4 L54.7 189.0 L57.0 190.6 L59.6 194.1 L61.2 195.9 L64.2 199.0 L64.9 202.1 L64.3 204.4 L64.8 208.3 L66.0 210.2 L65.1 213.4 L65.5 216.9 L67.9 219.0 L68.8 221.7 L71.3 224.4 L74.1 227.1 L75.2 229.5 L77.3 231.0 L79.5 234.7 L81.3 237.2 L82.4 239.0 L83.8 241.8 L85.6 243.4 L88.1 246.6" fill="none" stroke="#8a8a8a" stroke-opacity=".4" stroke-width=".7"/><path d="M135.8 1.6 L136.4 4.4 L136.2 7.6 L136.7 11.0 L136.9 14.8 L138.2 16.7 L137.9 20.0 L138.4 22.7 L139.5 27.1 L139.3 29.4 L139.0 31.8 L139.7 35.1 L142.7 37.4 L143.6 41.1 L146.5 42.3 L148.7 44.6 L150.8 48.6 L153.5 50.6 L155.2 51.9 L157.7 54.4 L161.0 56.3 L163.3 57.2 L166.7 60.3 L169.4 61.9 L172.0 63.6 L173.8 61.6 L176.8 59.2 L179.1 58.0 L182.2 57.0 L186.1 55.0 L188.8 54.3 L191.7 51.7 L193.3 49.8 L196.3 50.1 L200.1 51.5 L203.5 51.2 L206.3 52.0 L208.5 52.1 L212.9 52.6 L215.7 50.2 L217.9 48.9 L221.2 47.0 L224.1 49.4 L225.0 53.2 L227.4 54.9 L228.3 57.8 L231.4 61.9 L232.0 64.4 L235.2 66.6 L236.1 68.9 L237.6 70.5 L240.8 74.0 L241.9 76.9 L244.2 78.6 L247.3 79.4 L248.9 81.4 L251.3 83.7 L253.8 85.3 L256.1 88.0 L259.4 88.7 L262.7 90.9 L265.4 92.4 L268.5 93.3 L271.5 93.9 L274.3 95.7 L276.6 98.1 L279.8 99.1 L283.7 100.7 L286.0 102.1 L289.3 104.0 L291.6 105.2 L294.8 106.2 L298.6 108.0 L301.1 109.5" fill="none" stroke="#8a8a8a" stroke-opacity=".4" stroke-width=".7"/><path d="M90.1 113.6 L91.8 116.1 L92.4 119.2 L93.4 122.4 L94.4 125.1 L95.5 128.7 L98.1 130.7 L100.8 131.8 L102.4 134.9 L105.2 135.7 L106.3 138.2 L108.5 140.0 L110.7 142.7 L114.1 145.1 L115.4 146.9 L119.0 147.4 L122.1 150.1 L123.8 151.4 L126.9 152.1 L130.6 154.0 L132.1 154.8 L135.4 156.0 L137.7 157.4 L141.1 158.5 L143.5 160.7 L145.3 162.2 L148.9 164.0 L150.7 166.4 L154.5 167.9 L156.0 168.4 L158.7 170.6 L161.9 171.0 L164.9 173.6 L167.8 174.3" fill="none" stroke="#8a8a8a" stroke-opacity=".4" stroke-width=".7"/><path d="M133.1 75.8 L134.6 79.1 L137.9 81.0 L139.7 82.1 L143.3 85.0 L144.9 88.0 L145.0 90.7 L143.4 93.8 L142.6 96.8 L142.5 98.9 L141.9 102.8 L142.9 104.3 L144.7 107.2 L145.4 109.9 L146.7 112.7 L148.5 115.7 L150.6 118.4 L151.6 121.0 L152.7 123.6 L154.4 126.0 L157.0 129.4 L158.0 131.7 L161.1 133.6 L162.7 136.6 L164.1 139.7 L165.5 141.8 L167.5 145.2 L168.6 147.6 L170.8 149.9 L171.9 152.1 L172.9 154.4 L174.5 158.1 L175.4 160.2 L175.8 164.4 L177.6 167.2 L177.3 169.6 L177.9 173.0 L178.3 176.1 L176.0 179.4 L174.7 181.2 L171.1 184.3 L168.7 185.8 L165.7 188.3 L164.0 191.0 L161.4 193.2 L158.8 195.1 L156.8 197.5 L154.5 199.1 L152.6 201.7 L153.4 205.2 L154.0 208.5 L154.2 212.0 L154.0 214.2 L155.3 217.0 L155.2 220.9 L155.9 223.9 L159.1 226.4 L160.7 229.5 L162.2 231.7" fill="none" stroke="#8a8a8a" stroke-opacity=".4" stroke-width=".7"/><path d="M2.4 168.8 L6.0 168.2 L9.5 167.0 L12.1 165.9 L15.3 164.5 L17.6 162.2 L20.4 161.6 L23.4 161.2 L27.1 159.7 L30.0 161.2 L32.6 161.5 L35.8 164.1 L38.2 165.1 L42.1 162.5 L45.6 161.4" fill="none" stroke="#8a8a8a" stroke-opacity=".4" stroke-width=".7"/><path d="M3.3 186.9 L4.9 189.1 L8.5 191.3 L11.1 194.7 L13.3 196.0 L15.9 198.7 L18.2 201.1 L19.9 202.7 L20.9 205.4 L23.7 208.0 L25.3 210.0 L26.3 212.9 L30.1 215.4 L32.9 216.6 L35.4 218.7 L38.1 220.0 L41.4 222.3 L44.2 225.6 L45.3 226.9 L49.2 229.8 L51.3 230.8 L53.6 234.0 L56.2 235.6 L58.7 237.1 L62.7 238.0 L65.1 240.2 L67.9 242.1 L69.5 244.0 L72.5 244.2 L74.4 246.5 L78.8 247.5 L82.0 248.8 L86.3 250.3" fill="none" stroke="#8a8a8a" stroke-opacity=".4" stroke-width=".7"/><path d="M2.7 232.3 L5.4 233.1 L10.0 233.0 L13.4 234.9 L16.6 235.1 L17.6 237.7 L20.4 240.5 L21.3 242.7 L23.0 244.6 L24.5 248.3 L26.7 251.0 L28.0 252.7 L29.8 255.3 L31.0 259.3 L33.2 261.9 L34.2 264.8 L36.1 267.0 L37.1 269.0 L38.5 272.4 L40.9 275.5 L42.4 277.3 L45.8 280.2 L47.4 283.6" fill="none" stroke="#8a8a8a" stroke-opacity=".4" stroke-width=".7"/><path d="M2.9 307.4 L5.7 308.7 L9.9 308.5 L12.5 309.2 L16.0 310.6 L19.1 311.4 L23.3 313.2" fill="none" stroke="#8a8a8a" stroke-opacity=".4" stroke-width=".7"/><path d="M215.5 134.2 L218.4 131.0 L221.5 130.1 L223.3 126.5 L225.3 124.3 L228.0 122.1 L230.3 120.2 L234.6 120.8 L238.5 119.6 L241.7 119.3 L245.4 118.5 L248.6 119.7 L253.7 120.6 L256.7 122.7 L261.0 121.6 L263.7 121.2 L267.6 121.0 L272.2 121.2 L275.0 121.7 L276.7 124.7 L281.0 126.1 L283.5 127.2 L286.3 129.9" fill="none" stroke="#8a8a8a" stroke-opacity=".4" stroke-width=".7"/><path d="M215.8 134.3 L219.2 136.0 L222.2 136.9 L223.6 138.6 L227.1 141.3 L230.8 141.7 L233.4 142.0 L236.2 142.0 L238.6 142.7 L242.0 143.2 L245.8 142.5 L242.0 143.2 L239.8 144.7 L236.0 144.4 L233.7 145.9 L230.6 146.1 L228.1 147.6 L224.9 150.2 L223.1 152.3 L219.6 154.0" fill="none" stroke="#8a8a8a" stroke-opacity=".4" stroke-width=".7"/><path d="M3.6 16.9 L5.9 15.4 L10.4 15.0 L12.7 12.8 L16.3 12.8 L19.5 11.0 L22.9 10.9 L25.1 8.4 L28.3 7.9 L31.8 6.4 L34.4 5.8" fill="none" stroke="#8a8a8a" stroke-opacity=".4" stroke-width=".7"/><path d="M70.1 87.7 L72.7 89.3 L76.6 91.9 L79.4 94.3 L79.7 98.8 L81.0 102.8 L82.6 105.8" fill="none" stroke="#8a8a8a" stroke-opacity=".4" stroke-width=".7"/><path d="M97.4 68.3 L98.8 71.1 L101.4 74.4 L102.4 76.0 L104.4 79.4 L106.1 80.4 L107.8 83.4 L112.1 85.7 L114.8 87.4 L118.1 87.8 L119.9 90.2 L123.7 90.3 L126.4 93.1 L128.7 95.4 L131.1 97.1 L134.4 100.3" fill="none" stroke="#8a8a8a" stroke-opacity=".4" stroke-width=".7"/><path d="M260.0 5.6 L262.7 7.9 L264.3 10.6 L264.9 14.3 L267.2 16.3 L267.6 19.0 L269.7 22.4 L271.0 24.1 L274.0 26.5 L275.0 30.8 L277.5 32.5 L278.1 35.5 L280.7 39.1" fill="none" stroke="#8a8a8a" stroke-opacity=".4" stroke-width=".7"/><circle cx="43.7" cy="7.7" r="1.0" fill="#555"/><circle cx="45.6" cy="24.3" r="0.6" fill="#555"/><circle cx="64.1" cy="37.3" r="0.9" fill="#555"/><circle cx="27.0" cy="65.1" r="0.9" fill="#555"/><circle cx="47.4" cy="74.3" r="0.7" fill="#555"/><circle cx="34.4" cy="81.7" r="0.6" fill="#555"/><circle cx="12.2" cy="54.0" r="1.0" fill="#555"/><circle cx="99.3" cy="39.1" r="0.8" fill="#555"/><circle cx="78.9" cy="48.4" r="0.6" fill="#555"/><circle cx="88.1" cy="48.4" r="0.9" fill="#555"/><circle cx="171.5" cy="7.7" r="0.7" fill="#555"/><circle cx="195.6" cy="4.0" r="0.6" fill="#555"/><circle cx="165.9" cy="18.8" r="0.5" fill="#555"/><circle cx="219.6" cy="22.5" r="0.9" fill="#555"/><circle cx="245.6" cy="39.1" r="1.0" fill="#555"/><circle cx="236.3" cy="42.9" r="0.8" fill="#555"/><circle cx="214.1" cy="50.3" r="1.0" fill="#555"/><circle cx="182.6" cy="44.7" r="0.5" fill="#555"/><circle cx="204.8" cy="28.0" r="0.6" fill="#555"/><circle cx="258.5" cy="81.7" r="0.7" fill="#555"/><circle cx="278.9" cy="76.2" r="1.0" fill="#555"/><circle cx="299.3" cy="107.7" r="1.0" fill="#555"/><circle cx="93.7" cy="126.2" r="0.7" fill="#555"/><circle cx="80.7" cy="154.0" r="0.6" fill="#555"/><circle cx="117.8" cy="146.6" r="0.7" fill="#555"/><circle cx="165.9" cy="174.3" r="0.7" fill="#555"/><circle cx="234.4" cy="181.7" r="1.0" fill="#555"/><circle cx="34.4" cy="124.3" r="0.6" fill="#555"/><circle cx="14.1" cy="231.7" r="0.9" fill="#555"/><circle cx="112.2" cy="91.0" r="0.9" fill="#555"/><circle cx="162.2" cy="76.2" r="0.9" fill="#555"/><circle cx="225.2" cy="68.8" r="0.9" fill="#555"/></svg><div style="position:absolute;inset:0;border:1.5px solid #0c0c0c"></div></div></div><!--OVER-->
</div></div>
</body></html>
